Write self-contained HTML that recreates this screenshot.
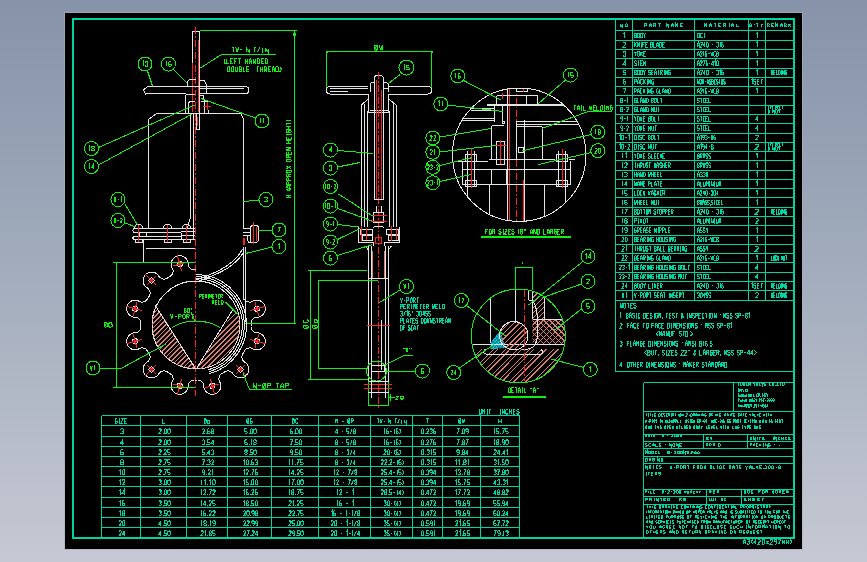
<!DOCTYPE html>
<html><head><meta charset="utf-8"><style>
html,body{margin:0;padding:0;width:867px;height:562px;overflow:hidden;}
body{background:linear-gradient(180deg,#8693a8 0%,#a3adbd 50%,#c6c9d3 100%);font-family:"Liberation Sans",sans-serif;}
svg{position:absolute;left:0;top:0;}
</style></head><body>
<svg width="867" height="562" viewBox="0 0 867 562" shape-rendering="crispEdges">
<rect x="65" y="13" width="737" height="536" fill="#000"/>
<rect x="64.5" y="12.5" width="738" height="537" fill="none" stroke="#a8b0bc" stroke-width="1" opacity="0.6"/>
<rect x="73" y="19" width="721" height="519" fill="none" stroke="#00d4a2" stroke-width="2"/>
<line x1="615.5" y1="19" x2="615.5" y2="299.5" stroke="#00d4a2" stroke-width="1" />
<line x1="632.5" y1="19" x2="632.5" y2="299.5" stroke="#00d4a2" stroke-width="1" />
<line x1="694.5" y1="19" x2="694.5" y2="299.5" stroke="#00d4a2" stroke-width="1" />
<line x1="748.5" y1="19" x2="748.5" y2="299.5" stroke="#00d4a2" stroke-width="1" />
<line x1="765.5" y1="19" x2="765.5" y2="299.5" stroke="#00d4a2" stroke-width="1" />
<line x1="615.5" y1="30.5" x2="794" y2="30.5" stroke="#00d4a2" stroke-width="1" />
<line x1="615.5" y1="40.5" x2="794" y2="40.5" stroke="#00d4a2" stroke-width="1" />
<line x1="615.5" y1="49.5" x2="794" y2="49.5" stroke="#00d4a2" stroke-width="1" />
<line x1="615.5" y1="58.5" x2="794" y2="58.5" stroke="#00d4a2" stroke-width="1" />
<line x1="615.5" y1="68.5" x2="794" y2="68.5" stroke="#00d4a2" stroke-width="1" />
<line x1="615.5" y1="77.5" x2="794" y2="77.5" stroke="#00d4a2" stroke-width="1" />
<line x1="615.5" y1="86.5" x2="794" y2="86.5" stroke="#00d4a2" stroke-width="1" />
<line x1="615.5" y1="95.5" x2="794" y2="95.5" stroke="#00d4a2" stroke-width="1" />
<line x1="615.5" y1="105.5" x2="794" y2="105.5" stroke="#00d4a2" stroke-width="1" />
<line x1="615.5" y1="114.5" x2="794" y2="114.5" stroke="#00d4a2" stroke-width="1" />
<line x1="615.5" y1="123.5" x2="794" y2="123.5" stroke="#00d4a2" stroke-width="1" />
<line x1="615.5" y1="133.5" x2="794" y2="133.5" stroke="#00d4a2" stroke-width="1" />
<line x1="615.5" y1="142.5" x2="794" y2="142.5" stroke="#00d4a2" stroke-width="1" />
<line x1="615.5" y1="151.5" x2="794" y2="151.5" stroke="#00d4a2" stroke-width="1" />
<line x1="615.5" y1="160.5" x2="794" y2="160.5" stroke="#00d4a2" stroke-width="1" />
<line x1="615.5" y1="170.5" x2="794" y2="170.5" stroke="#00d4a2" stroke-width="1" />
<line x1="615.5" y1="179.5" x2="794" y2="179.5" stroke="#00d4a2" stroke-width="1" />
<line x1="615.5" y1="188.5" x2="794" y2="188.5" stroke="#00d4a2" stroke-width="1" />
<line x1="615.5" y1="197.5" x2="794" y2="197.5" stroke="#00d4a2" stroke-width="1" />
<line x1="615.5" y1="207.5" x2="794" y2="207.5" stroke="#00d4a2" stroke-width="1" />
<line x1="615.5" y1="216.5" x2="794" y2="216.5" stroke="#00d4a2" stroke-width="1" />
<line x1="615.5" y1="225.5" x2="794" y2="225.5" stroke="#00d4a2" stroke-width="1" />
<line x1="615.5" y1="235.5" x2="794" y2="235.5" stroke="#00d4a2" stroke-width="1" />
<line x1="615.5" y1="244.5" x2="794" y2="244.5" stroke="#00d4a2" stroke-width="1" />
<line x1="615.5" y1="253.5" x2="794" y2="253.5" stroke="#00d4a2" stroke-width="1" />
<line x1="615.5" y1="262.5" x2="794" y2="262.5" stroke="#00d4a2" stroke-width="1" />
<line x1="615.5" y1="272.5" x2="794" y2="272.5" stroke="#00d4a2" stroke-width="1" />
<line x1="615.5" y1="281.5" x2="794" y2="281.5" stroke="#00d4a2" stroke-width="1" />
<line x1="615.5" y1="290.5" x2="794" y2="290.5" stroke="#00d4a2" stroke-width="1" />
<line x1="615.5" y1="300.5" x2="794" y2="300.5" stroke="#00d4a2" stroke-width="1" />
<path d="M623.6,33.8 L624.5,33.1 L624.5,37.7" stroke="#00d4a2" stroke-width="1" fill="none"/>
<path d="M634.5,33.1 L635.9,33.1 L636.4,33.8 L636.4,34.6 L635.9,35.4 L634.5,35.4 M635.9,35.4 L636.4,36.2 L636.4,37.0 L635.9,37.7 L634.5,37.7 L634.5,33.1 M638.0,33.1 L639.0,33.1 L639.4,33.8 L639.4,37.0 L639.0,37.7 L638.0,37.7 L637.5,37.0 L637.5,33.8 L638.0,33.1 M640.6,33.1 L642.0,33.1 L642.5,33.8 L642.5,37.0 L642.0,37.7 L640.6,37.7 L640.6,33.1 M643.6,33.1 L644.6,35.4 L645.5,33.1 M644.6,35.4 L644.6,37.7" stroke="#00d4a2" stroke-width="1" fill="none"/>
<path d="M697.5,33.1 L699.0,33.1 L699.5,33.8 L699.5,37.0 L699.0,37.7 L697.5,37.7 L697.5,33.1 M702.7,33.8 L702.2,33.1 L701.2,33.1 L700.7,33.8 L700.7,37.0 L701.2,37.7 L702.2,37.7 L702.7,37.0 M704.1,33.1 L705.1,33.1 M704.6,33.1 L704.6,37.7 M704.1,37.7 L705.1,37.7" stroke="#00d4a2" stroke-width="1" fill="none"/>
<path d="M756.0,33.8 L757.0,33.1 L757.0,37.7" stroke="#00d4a2" stroke-width="1" fill="none"/>
<path d="M623.2,43.1 L623.9,42.3 L625.2,42.3 L625.8,43.1 L625.8,43.9 L623.2,47.0 L625.8,47.0" stroke="#00d4a2" stroke-width="1" fill="none"/>
<path d="M634.5,42.3 L634.5,47.0 M636.4,42.3 L634.5,45.5 M635.2,44.7 L636.4,47.0 M637.5,47.0 L637.5,42.3 L639.4,47.0 L639.4,42.3 M640.7,42.3 L641.6,42.3 M641.1,42.3 L641.1,47.0 M640.7,47.0 L641.6,47.0 M644.5,42.3 L642.6,42.3 L642.6,47.0 M642.6,44.7 L644.0,44.7 M647.5,42.3 L645.6,42.3 L645.6,47.0 L647.5,47.0 M645.6,44.7 L647.0,44.7 M650.8,42.3 L652.2,42.3 L652.7,43.1 L652.7,43.9 L652.2,44.7 L650.8,44.7 M652.2,44.7 L652.7,45.5 L652.7,46.2 L652.2,47.0 L650.8,47.0 L650.8,42.3 M653.8,42.3 L653.8,47.0 L655.7,47.0 M656.8,47.0 L656.8,43.9 L657.8,42.3 L658.7,43.9 L658.7,47.0 M656.8,45.1 L658.7,45.1 M659.8,42.3 L661.2,42.3 L661.7,43.1 L661.7,46.2 L661.2,47.0 L659.8,47.0 L659.8,42.3 M664.7,42.3 L662.8,42.3 L662.8,47.0 L664.7,47.0 M662.8,44.7 L664.2,44.7" stroke="#00d4a2" stroke-width="1" fill="none"/>
<path d="M697.5,47.0 L697.5,43.9 L698.4,42.3 L699.3,43.9 L699.3,47.0 M697.5,45.1 L699.3,45.1 M700.4,43.1 L700.9,42.3 L701.8,42.3 L702.3,43.1 L702.3,43.9 L700.4,47.0 L702.3,47.0 M704.8,47.0 L704.8,42.3 L703.4,45.5 L705.2,45.5 M706.8,42.3 L707.7,42.3 L708.2,43.1 L708.2,46.2 L707.7,47.0 L706.8,47.0 L706.3,46.2 L706.3,43.1 L706.8,42.3 M711.7,44.7 L713.1,44.7 M716.7,43.1 L717.1,42.3 L718.0,42.3 L718.5,43.1 L718.5,43.9 L718.0,44.7 L717.6,44.7 M718.0,44.7 L718.5,45.5 L718.5,46.2 L718.0,47.0 L717.1,47.0 L716.7,46.2 M719.8,43.1 L720.2,42.3 L720.2,47.0 M723.0,42.3 L722.1,42.3 L721.7,43.1 L721.7,46.2 L722.1,47.0 L723.0,47.0 L723.5,46.2 L723.5,45.5 L723.0,44.7 L721.7,44.7" stroke="#00d4a2" stroke-width="1" fill="none"/>
<path d="M756.0,43.1 L757.0,42.3 L757.0,47.0" stroke="#00d4a2" stroke-width="1" fill="none"/>
<path d="M623.2,52.4 L623.9,51.6 L625.2,51.6 L625.8,52.4 L625.8,53.2 L625.2,53.9 L624.5,53.9 M625.2,53.9 L625.8,54.7 L625.8,55.5 L625.2,56.3 L623.9,56.3 L623.2,55.5" stroke="#00d4a2" stroke-width="1" fill="none"/>
<path d="M634.5,51.6 L635.4,53.9 L636.4,51.6 M635.4,53.9 L635.4,56.3 M638.0,51.6 L639.0,51.6 L639.4,52.4 L639.4,55.5 L639.0,56.3 L638.0,56.3 L637.5,55.5 L637.5,52.4 L638.0,51.6 M640.6,51.6 L640.6,56.3 M642.5,51.6 L640.6,54.7 M641.3,53.9 L642.5,56.3 M645.5,51.6 L643.6,51.6 L643.6,56.3 L645.5,56.3 M643.6,53.9 L645.0,53.9" stroke="#00d4a2" stroke-width="1" fill="none"/>
<path d="M697.5,56.3 L697.5,53.2 L698.4,51.6 L699.3,53.2 L699.3,56.3 M697.5,54.3 L699.3,54.3 M700.3,52.4 L700.8,51.6 L701.7,51.6 L702.1,52.4 L702.1,53.2 L700.3,56.3 L702.1,56.3 M703.4,52.4 L703.8,51.6 L703.8,56.3 M706.5,51.6 L705.6,51.6 L705.2,52.4 L705.2,55.5 L705.6,56.3 L706.5,56.3 L706.9,55.5 L706.9,54.7 L706.5,53.9 L705.2,53.9 M708.2,53.9 L709.6,53.9 M710.9,51.6 L711.3,56.3 L711.7,53.2 L712.2,56.3 L712.6,51.6 M715.5,52.4 L715.0,51.6 L714.1,51.6 L713.7,52.4 L713.7,55.5 L714.1,56.3 L715.0,56.3 L715.5,55.5 M716.5,51.6 L717.9,51.6 L718.3,52.4 L718.3,53.2 L717.9,53.9 L716.5,53.9 M717.9,53.9 L718.3,54.7 L718.3,55.5 L717.9,56.3 L716.5,56.3 L716.5,51.6" stroke="#00d4a2" stroke-width="1" fill="none"/>
<path d="M756.0,52.4 L757.0,51.6 L757.0,56.3" stroke="#00d4a2" stroke-width="1" fill="none"/>
<path d="M625.2,65.6 L625.2,60.9 L623.2,64.0 L625.8,64.0" stroke="#00d4a2" stroke-width="1" fill="none"/>
<path d="M636.4,61.7 L635.9,60.9 L635.0,60.9 L634.5,61.7 L634.5,62.4 L635.0,63.2 L635.9,63.2 L636.4,64.0 L636.4,64.8 L635.9,65.6 L635.0,65.6 L634.5,64.8 M637.5,60.9 L639.4,60.9 M638.5,60.9 L638.5,65.6 M642.5,60.9 L640.6,60.9 L640.6,65.6 L642.5,65.6 M640.6,63.2 L642.0,63.2 M643.6,65.6 L643.6,60.9 L644.6,63.2 L645.5,60.9 L645.5,65.6" stroke="#00d4a2" stroke-width="1" fill="none"/>
<path d="M697.5,65.6 L697.5,62.4 L698.4,60.9 L699.3,62.4 L699.3,65.6 M697.5,63.6 L699.3,63.6 M700.3,61.7 L700.8,60.9 L701.7,60.9 L702.1,61.7 L702.1,62.4 L700.3,65.6 L702.1,65.6 M703.2,60.9 L704.9,60.9 L703.6,65.6 M707.3,60.9 L706.5,60.9 L706.0,61.7 L706.0,64.8 L706.5,65.6 L707.3,65.6 L707.8,64.8 L707.8,64.0 L707.3,63.2 L706.0,63.2 M709.1,63.2 L710.4,63.2 M713.0,65.6 L713.0,60.9 L711.7,64.0 L713.5,64.0 M714.7,61.7 L715.2,60.9 L715.2,65.6 M717.0,60.9 L717.9,60.9 L718.3,61.7 L718.3,64.8 L717.9,65.6 L717.0,65.6 L716.5,64.8 L716.5,61.7 L717.0,60.9" stroke="#00d4a2" stroke-width="1" fill="none"/>
<path d="M756.0,61.7 L757.0,60.9 L757.0,65.6" stroke="#00d4a2" stroke-width="1" fill="none"/>
<path d="M625.8,70.2 L623.2,70.2 L623.2,72.5 L625.2,72.5 L625.8,73.3 L625.8,74.1 L625.2,74.8 L623.9,74.8 L623.2,74.1" stroke="#00d4a2" stroke-width="1" fill="none"/>
<path d="M634.5,70.2 L635.9,70.2 L636.3,70.9 L636.3,71.7 L635.9,72.5 L634.5,72.5 M635.9,72.5 L636.3,73.3 L636.3,74.1 L635.9,74.8 L634.5,74.8 L634.5,70.2 M637.9,70.2 L638.8,70.2 L639.3,70.9 L639.3,74.1 L638.8,74.8 L637.9,74.8 L637.5,74.1 L637.5,70.9 L637.9,70.2 M640.4,70.2 L641.8,70.2 L642.3,70.9 L642.3,74.1 L641.8,74.8 L640.4,74.8 L640.4,70.2 M643.4,70.2 L644.3,72.5 L645.2,70.2 M644.3,72.5 L644.3,74.8 M650.4,70.9 L650.0,70.2 L649.0,70.2 L648.6,70.9 L648.6,71.7 L649.0,72.5 L650.0,72.5 L650.4,73.3 L650.4,74.1 L650.0,74.8 L649.0,74.8 L648.6,74.1 M653.4,70.2 L651.6,70.2 L651.6,74.8 L653.4,74.8 M651.6,72.5 L652.9,72.5 M654.5,74.8 L654.5,71.7 L655.4,70.2 L656.4,71.7 L656.4,74.8 M654.5,72.9 L656.4,72.9 M657.5,70.2 L659.3,70.2 M658.4,70.2 L658.4,74.8 M660.5,74.8 L660.5,70.2 L661.8,70.2 L662.3,70.9 L662.3,71.7 L661.8,72.5 L660.5,72.5 M661.4,72.5 L662.3,74.8 M663.6,70.2 L664.5,70.2 M664.1,70.2 L664.1,74.8 M663.6,74.8 L664.5,74.8 M665.5,74.8 L665.5,70.2 L667.3,74.8 L667.3,70.2 M670.3,70.9 L669.8,70.2 L668.9,70.2 L668.5,70.9 L668.5,74.1 L668.9,74.8 L669.8,74.8 L670.3,74.1 L670.3,72.5 L669.4,72.5" stroke="#00d4a2" stroke-width="1" fill="none"/>
<path d="M697.5,74.8 L697.5,71.7 L698.4,70.2 L699.3,71.7 L699.3,74.8 M697.5,72.9 L699.3,72.9 M700.4,70.9 L700.9,70.2 L701.8,70.2 L702.3,70.9 L702.3,71.7 L700.4,74.8 L702.3,74.8 M704.8,74.8 L704.8,70.2 L703.4,73.3 L705.2,73.3 M706.8,70.2 L707.7,70.2 L708.2,70.9 L708.2,74.1 L707.7,74.8 L706.8,74.8 L706.3,74.1 L706.3,70.9 L706.8,70.2 M711.7,72.5 L713.1,72.5 M716.7,70.9 L717.1,70.2 L718.0,70.2 L718.5,70.9 L718.5,71.7 L718.0,72.5 L717.6,72.5 M718.0,72.5 L718.5,73.3 L718.5,74.1 L718.0,74.8 L717.1,74.8 L716.7,74.1 M719.8,70.9 L720.2,70.2 L720.2,74.8 M723.0,70.2 L722.1,70.2 L721.7,70.9 L721.7,74.1 L722.1,74.8 L723.0,74.8 L723.5,74.1 L723.5,73.3 L723.0,72.5 L721.7,72.5" stroke="#00d4a2" stroke-width="1" fill="none"/>
<path d="M756.0,70.9 L757.0,70.2 L757.0,74.8" stroke="#00d4a2" stroke-width="1" fill="none"/>
<path d="M771.3,70.2 L771.7,74.8 L772.1,71.7 L772.4,74.8 L772.8,70.2 M775.2,70.2 L773.7,70.2 L773.7,74.8 L775.2,74.8 M773.7,72.5 L774.9,72.5 M776.2,70.2 L776.2,74.8 L777.7,74.8 M778.6,70.2 L779.7,70.2 L780.1,70.9 L780.1,74.1 L779.7,74.8 L778.6,74.8 L778.6,70.2 M781.2,70.2 L782.0,70.2 M781.6,70.2 L781.6,74.8 M781.2,74.8 L782.0,74.8 M782.8,74.8 L782.8,70.2 L784.3,74.8 L784.3,70.2 M786.7,70.9 L786.3,70.2 L785.6,70.2 L785.2,70.9 L785.2,74.1 L785.6,74.8 L786.3,74.8 L786.7,74.1 L786.7,72.5 L785.9,72.5" stroke="#00d4a2" stroke-width="1" fill="none"/>
<path d="M625.2,79.4 L623.9,79.4 L623.2,80.2 L623.2,83.3 L623.9,84.1 L625.2,84.1 L625.8,83.3 L625.8,82.6 L625.2,81.8 L623.2,81.8" stroke="#00d4a2" stroke-width="1" fill="none"/>
<path d="M634.5,84.1 L634.5,79.4 L635.9,79.4 L636.4,80.2 L636.4,81.0 L635.9,81.8 L634.5,81.8 M637.5,84.1 L637.5,81.0 L638.5,79.4 L639.4,81.0 L639.4,84.1 M637.5,82.2 L639.4,82.2 M642.5,80.2 L642.0,79.4 L641.0,79.4 L640.6,80.2 L640.6,83.3 L641.0,84.1 L642.0,84.1 L642.5,83.3 M643.6,79.4 L643.6,84.1 M645.5,79.4 L643.6,82.6 M644.3,81.8 L645.5,84.1 M646.8,79.4 L647.8,79.4 M647.3,79.4 L647.3,84.1 M646.8,84.1 L647.8,84.1 M648.8,84.1 L648.8,79.4 L650.7,84.1 L650.7,79.4 M653.7,80.2 L653.2,79.4 L652.3,79.4 L651.8,80.2 L651.8,83.3 L652.3,84.1 L653.2,84.1 L653.7,83.3 L653.7,81.8 L652.8,81.8" stroke="#00d4a2" stroke-width="1" fill="none"/>
<path d="M697.5,84.1 L697.5,79.4 L699.0,84.1 L699.0,79.4 M700.2,79.4 L701.0,79.4 L701.3,80.2 L701.3,83.3 L701.0,84.1 L700.2,84.1 L699.9,83.3 L699.9,80.2 L700.2,79.4 M702.3,84.1 L702.3,79.4 L703.7,84.1 L703.7,79.4 M704.8,81.8 L705.9,81.8 M707.0,84.1 L707.0,81.0 L707.7,79.4 L708.5,81.0 L708.5,84.1 M707.0,82.2 L708.5,82.2 M710.8,80.2 L710.5,79.4 L709.7,79.4 L709.4,80.2 L709.4,81.0 L709.7,81.8 L710.5,81.8 L710.8,82.6 L710.8,83.3 L710.5,84.1 L709.7,84.1 L709.4,83.3 M711.8,79.4 L712.9,79.4 L713.2,80.2 L713.2,81.0 L712.9,81.8 L711.8,81.8 M712.9,81.8 L713.2,82.6 L713.2,83.3 L712.9,84.1 L711.8,84.1 L711.8,79.4 M715.6,79.4 L714.1,79.4 L714.1,84.1 L715.6,84.1 M714.1,81.8 L715.2,81.8 M718.0,80.2 L717.6,79.4 L716.9,79.4 L716.5,80.2 L716.5,81.0 L716.9,81.8 L717.6,81.8 L718.0,82.6 L718.0,83.3 L717.6,84.1 L716.9,84.1 L716.5,83.3 M718.9,79.4 L720.3,79.4 M719.6,79.4 L719.6,84.1 M721.6,79.4 L722.4,79.4 L722.7,80.2 L722.7,83.3 L722.4,84.1 L721.6,84.1 L721.3,83.3 L721.3,80.2 L721.6,79.4 M725.1,80.2 L724.7,79.4 L724.0,79.4 L723.6,80.2 L723.6,81.0 L724.0,81.8 L724.7,81.8 L725.1,82.6 L725.1,83.3 L724.7,84.1 L724.0,84.1 L723.6,83.3" stroke="#00d4a2" stroke-width="1" fill="none"/>
<path d="M751.4,80.2 L752.0,79.4 L752.0,84.1 M755.8,80.2 L755.3,79.4 L754.2,79.4 L753.6,80.2 L753.6,81.0 L754.2,81.8 L755.3,81.8 L755.8,82.6 L755.8,83.3 L755.3,84.1 L754.2,84.1 L753.6,83.3 M759.3,79.4 L757.1,79.4 L757.1,84.1 L759.3,84.1 M757.1,81.8 L758.8,81.8 M760.6,79.4 L762.8,79.4 M761.7,79.4 L761.7,84.1" stroke="#00d4a2" stroke-width="1" fill="none"/>
<path d="M623.2,88.7 L625.8,88.7 L623.9,93.4" stroke="#00d4a2" stroke-width="1" fill="none"/>
<path d="M634.5,93.4 L634.5,88.7 L635.9,88.7 L636.3,89.5 L636.3,90.3 L635.9,91.1 L634.5,91.1 M637.5,93.4 L637.5,90.3 L638.4,88.7 L639.3,90.3 L639.3,93.4 M637.5,91.4 L639.3,91.4 M642.3,89.5 L641.8,88.7 L640.9,88.7 L640.4,89.5 L640.4,92.6 L640.9,93.4 L641.8,93.4 L642.3,92.6 M643.4,88.7 L643.4,93.4 M645.2,88.7 L643.4,91.8 M644.1,91.1 L645.2,93.4 M646.5,88.7 L647.5,88.7 M647.0,88.7 L647.0,93.4 M646.5,93.4 L647.5,93.4 M648.4,93.4 L648.4,88.7 L650.3,93.4 L650.3,88.7 M653.2,89.5 L652.8,88.7 L651.9,88.7 L651.4,89.5 L651.4,92.6 L651.9,93.4 L652.8,93.4 L653.2,92.6 L653.2,91.1 L652.3,91.1 M658.4,89.5 L658.0,88.7 L657.1,88.7 L656.6,89.5 L656.6,92.6 L657.1,93.4 L658.0,93.4 L658.4,92.6 L658.4,91.1 L657.5,91.1 M659.6,88.7 L659.6,93.4 L661.4,93.4 M662.5,93.4 L662.5,90.3 L663.4,88.7 L664.4,90.3 L664.4,93.4 M662.5,91.4 L664.4,91.4 M665.5,93.4 L665.5,88.7 L667.3,93.4 L667.3,88.7 M668.5,88.7 L669.8,88.7 L670.3,89.5 L670.3,92.6 L669.8,93.4 L668.5,93.4 L668.5,88.7" stroke="#00d4a2" stroke-width="1" fill="none"/>
<path d="M697.5,93.4 L697.5,90.3 L698.4,88.7 L699.3,90.3 L699.3,93.4 M697.5,91.4 L699.3,91.4 M700.3,89.5 L700.8,88.7 L701.7,88.7 L702.1,89.5 L702.1,90.3 L700.3,93.4 L702.1,93.4 M703.4,89.5 L703.8,88.7 L703.8,93.4 M706.5,88.7 L705.6,88.7 L705.2,89.5 L705.2,92.6 L705.6,93.4 L706.5,93.4 L706.9,92.6 L706.9,91.8 L706.5,91.1 L705.2,91.1 M708.2,91.1 L709.6,91.1 M710.9,88.7 L711.3,93.4 L711.7,90.3 L712.2,93.4 L712.6,88.7 M715.5,89.5 L715.0,88.7 L714.1,88.7 L713.7,89.5 L713.7,92.6 L714.1,93.4 L715.0,93.4 L715.5,92.6 M716.5,88.7 L717.9,88.7 L718.3,89.5 L718.3,90.3 L717.9,91.1 L716.5,91.1 M717.9,91.1 L718.3,91.8 L718.3,92.6 L717.9,93.4 L716.5,93.4 L716.5,88.7" stroke="#00d4a2" stroke-width="1" fill="none"/>
<path d="M756.0,89.5 L757.0,88.7 L757.0,93.4" stroke="#00d4a2" stroke-width="1" fill="none"/>
<path d="M621.1,98.0 L622.1,98.0 L622.6,98.8 L622.6,99.5 L622.1,100.3 L621.1,100.3 L620.6,101.1 L620.6,101.9 L621.1,102.7 L622.1,102.7 L622.6,101.9 L622.6,101.1 L622.1,100.3 M621.1,100.3 L620.6,99.5 L620.6,98.8 L621.1,98.0 M624.1,100.3 L625.5,100.3 M627.2,98.8 L627.7,98.0 L627.7,102.7" stroke="#00d4a2" stroke-width="1" fill="none"/>
<path d="M636.3,98.8 L635.9,98.0 L635.0,98.0 L634.5,98.8 L634.5,101.9 L635.0,102.7 L635.9,102.7 L636.3,101.9 L636.3,100.3 L635.4,100.3 M637.4,98.0 L637.4,102.7 L639.3,102.7 M640.4,102.7 L640.4,99.5 L641.3,98.0 L642.2,99.5 L642.2,102.7 M640.4,100.7 L642.2,100.7 M643.3,102.7 L643.3,98.0 L645.1,102.7 L645.1,98.0 M646.2,98.0 L647.6,98.0 L648.1,98.8 L648.1,101.9 L647.6,102.7 L646.2,102.7 L646.2,98.0 M651.4,98.0 L652.7,98.0 L653.2,98.8 L653.2,99.5 L652.7,100.3 L651.4,100.3 M652.7,100.3 L653.2,101.1 L653.2,101.9 L652.7,102.7 L651.4,102.7 L651.4,98.0 M654.8,98.0 L655.7,98.0 L656.1,98.8 L656.1,101.9 L655.7,102.7 L654.8,102.7 L654.3,101.9 L654.3,98.8 L654.8,98.0 M657.2,98.0 L657.2,102.7 L659.1,102.7 M660.2,98.0 L662.0,98.0 M661.1,98.0 L661.1,102.7" stroke="#00d4a2" stroke-width="1" fill="none"/>
<path d="M699.2,98.8 L698.8,98.0 L697.9,98.0 L697.5,98.8 L697.5,99.5 L697.9,100.3 L698.8,100.3 L699.2,101.1 L699.2,101.9 L698.8,102.7 L697.9,102.7 L697.5,101.9 M700.3,98.0 L702.1,98.0 M701.2,98.0 L701.2,102.7 M704.9,98.0 L703.1,98.0 L703.1,102.7 L704.9,102.7 M703.1,100.3 L704.4,100.3 M707.7,98.0 L705.9,98.0 L705.9,102.7 L707.7,102.7 M705.9,100.3 L707.2,100.3 M708.8,98.0 L708.8,102.7 L710.5,102.7" stroke="#00d4a2" stroke-width="1" fill="none"/>
<path d="M621.1,107.3 L622.0,107.3 L622.4,108.0 L622.4,108.8 L622.0,109.6 L621.1,109.6 L620.6,110.4 L620.6,111.2 L621.1,111.9 L622.0,111.9 L622.4,111.2 L622.4,110.4 L622.0,109.6 M621.1,109.6 L620.6,108.8 L620.6,108.0 L621.1,107.3 M623.8,109.6 L625.2,109.6 M626.6,108.0 L627.0,107.3 L627.9,107.3 L628.4,108.0 L628.4,108.8 L626.6,111.9 L628.4,111.9" stroke="#00d4a2" stroke-width="1" fill="none"/>
<path d="M636.3,108.0 L635.9,107.3 L635.0,107.3 L634.5,108.0 L634.5,111.2 L635.0,111.9 L635.9,111.9 L636.3,111.2 L636.3,109.6 L635.4,109.6 M637.5,107.3 L637.5,111.9 L639.3,111.9 M640.4,111.9 L640.4,108.8 L641.3,107.3 L642.3,108.8 L642.3,111.9 M640.4,110.0 L642.3,110.0 M643.4,111.9 L643.4,107.3 L645.2,111.9 L645.2,107.3 M646.4,107.3 L647.7,107.3 L648.2,108.0 L648.2,111.2 L647.7,111.9 L646.4,111.9 L646.4,107.3 M651.5,111.9 L651.5,107.3 L653.4,111.9 L653.4,107.3 M654.5,107.3 L654.5,111.2 L655.0,111.9 L655.9,111.9 L656.3,111.2 L656.3,107.3 M657.5,107.3 L659.3,107.3 M658.4,107.3 L658.4,111.9" stroke="#00d4a2" stroke-width="1" fill="none"/>
<path d="M699.2,108.0 L698.8,107.3 L697.9,107.3 L697.5,108.0 L697.5,108.8 L697.9,109.6 L698.8,109.6 L699.2,110.4 L699.2,111.2 L698.8,111.9 L697.9,111.9 L697.5,111.2 M700.3,107.3 L702.1,107.3 M701.2,107.3 L701.2,111.9 M704.9,107.3 L703.1,107.3 L703.1,111.9 L704.9,111.9 M703.1,109.6 L704.4,109.6 M707.7,107.3 L705.9,107.3 L705.9,111.9 L707.7,111.9 M705.9,109.6 L707.2,109.6 M708.8,107.3 L708.8,111.9 L710.5,111.9" stroke="#00d4a2" stroke-width="1" fill="none"/>
<path d="M769.3,106.2 L768.0,106.2 L768.0,109.2 L769.3,109.2 M768.0,107.7 L769.0,107.7 M770.1,106.2 L770.7,107.7 L771.3,106.2 M770.7,107.7 L770.7,109.2 M773.4,106.2 L772.1,106.2 L772.1,109.2 L773.4,109.2 M772.1,107.7 L773.1,107.7 M775.7,106.2 L776.7,106.2 L777.0,106.7 L777.0,107.2 L776.7,107.7 L775.7,107.7 M776.7,107.7 L777.0,108.2 L777.0,108.7 L776.7,109.2 L775.7,109.2 L775.7,106.2 M778.1,106.2 L778.8,106.2 L779.1,106.7 L779.1,108.7 L778.8,109.2 L778.1,109.2 L777.8,108.7 L777.8,106.7 L778.1,106.2 M779.9,106.2 L779.9,109.2 L781.1,109.2 M781.9,106.2 L783.2,106.2 M782.6,106.2 L782.6,109.2" stroke="#00d4a2" stroke-width="1" fill="none"/>
<path d="M769.7,113.2 L768.4,111.2 L768.4,110.7 L768.9,110.2 L769.3,110.7 L769.3,111.2 L768.0,112.2 L768.0,112.7 L768.4,113.2 L768.9,113.2 L769.7,112.2 M772.8,113.2 L772.8,110.2 L774.5,113.2 L774.5,110.2 M775.6,110.2 L775.6,112.7 L776.0,113.2 L776.8,113.2 L777.3,112.7 L777.3,110.2 M778.3,110.2 L780.0,110.2 M779.1,110.2 L779.1,113.2" stroke="#00d4a2" stroke-width="1" fill="none"/>
<path d="M622.6,118.9 L621.1,118.9 L620.6,118.1 L620.6,117.3 L621.1,116.5 L622.1,116.5 L622.6,117.3 L622.6,120.4 L622.1,121.2 L621.1,121.2 M624.1,118.9 L625.5,118.9 M627.2,117.3 L627.7,116.5 L627.7,121.2" stroke="#00d4a2" stroke-width="1" fill="none"/>
<path d="M634.5,116.5 L635.4,118.9 L636.3,116.5 M635.4,118.9 L635.4,121.2 M637.9,116.5 L638.8,116.5 L639.3,117.3 L639.3,120.4 L638.8,121.2 L637.9,121.2 L637.5,120.4 L637.5,117.3 L637.9,116.5 M640.4,116.5 L640.4,121.2 M642.3,116.5 L640.4,119.7 M641.1,118.9 L642.3,121.2 M645.2,116.5 L643.4,116.5 L643.4,121.2 L645.2,121.2 M643.4,118.9 L644.8,118.9 M648.6,116.5 L650.0,116.5 L650.4,117.3 L650.4,118.1 L650.0,118.9 L648.6,118.9 M650.0,118.9 L650.4,119.7 L650.4,120.4 L650.0,121.2 L648.6,121.2 L648.6,116.5 M652.0,116.5 L652.9,116.5 L653.4,117.3 L653.4,120.4 L652.9,121.2 L652.0,121.2 L651.5,120.4 L651.5,117.3 L652.0,116.5 M654.5,116.5 L654.5,121.2 L656.3,121.2 M657.5,116.5 L659.3,116.5 M658.4,116.5 L658.4,121.2" stroke="#00d4a2" stroke-width="1" fill="none"/>
<path d="M699.2,117.3 L698.8,116.5 L697.9,116.5 L697.5,117.3 L697.5,118.1 L697.9,118.9 L698.8,118.9 L699.2,119.7 L699.2,120.4 L698.8,121.2 L697.9,121.2 L697.5,120.4 M700.3,116.5 L702.1,116.5 M701.2,116.5 L701.2,121.2 M704.9,116.5 L703.1,116.5 L703.1,121.2 L704.9,121.2 M703.1,118.9 L704.4,118.9 M707.7,116.5 L705.9,116.5 L705.9,121.2 L707.7,121.2 M705.9,118.9 L707.2,118.9 M708.8,116.5 L708.8,121.2 L710.5,121.2" stroke="#00d4a2" stroke-width="1" fill="none"/>
<path d="M757.7,121.2 L757.7,116.5 L755.5,119.7 L758.4,119.7" stroke="#00d4a2" stroke-width="1" fill="none"/>
<path d="M622.4,128.2 L621.1,128.2 L620.6,127.4 L620.6,126.6 L621.1,125.8 L622.0,125.8 L622.4,126.6 L622.4,129.7 L622.0,130.5 L621.1,130.5 M623.8,128.2 L625.2,128.2 M626.6,126.6 L627.0,125.8 L627.9,125.8 L628.4,126.6 L628.4,127.4 L626.6,130.5 L628.4,130.5" stroke="#00d4a2" stroke-width="1" fill="none"/>
<path d="M634.5,125.8 L635.4,128.2 L636.4,125.8 M635.4,128.2 L635.4,130.5 M637.9,125.8 L638.9,125.8 L639.3,126.6 L639.3,129.7 L638.9,130.5 L637.9,130.5 L637.5,129.7 L637.5,126.6 L637.9,125.8 M640.5,125.8 L640.5,130.5 M642.3,125.8 L640.5,128.9 M641.2,128.2 L642.3,130.5 M645.3,125.8 L643.5,125.8 L643.5,130.5 L645.3,130.5 M643.5,128.2 L644.8,128.2 M648.7,130.5 L648.7,125.8 L650.5,130.5 L650.5,125.8 M651.7,125.8 L651.7,129.7 L652.1,130.5 L653.1,130.5 L653.5,129.7 L653.5,125.8 M654.6,125.8 L656.5,125.8 M655.6,125.8 L655.6,130.5" stroke="#00d4a2" stroke-width="1" fill="none"/>
<path d="M699.2,126.6 L698.8,125.8 L697.9,125.8 L697.5,126.6 L697.5,127.4 L697.9,128.2 L698.8,128.2 L699.2,128.9 L699.2,129.7 L698.8,130.5 L697.9,130.5 L697.5,129.7 M700.3,125.8 L702.1,125.8 M701.2,125.8 L701.2,130.5 M704.9,125.8 L703.1,125.8 L703.1,130.5 L704.9,130.5 M703.1,128.2 L704.4,128.2 M707.7,125.8 L705.9,125.8 L705.9,130.5 L707.7,130.5 M705.9,128.2 L707.2,128.2 M708.8,125.8 L708.8,130.5 L710.5,130.5" stroke="#00d4a2" stroke-width="1" fill="none"/>
<path d="M757.7,130.5 L757.7,125.8 L755.5,128.9 L758.4,128.9" stroke="#00d4a2" stroke-width="1" fill="none"/>
<path d="M619.5,135.9 L620.0,135.1 L620.0,139.8 M622.1,135.1 L623.2,135.1 L623.7,135.9 L623.7,139.0 L623.2,139.8 L622.1,139.8 L621.6,139.0 L621.6,135.9 L622.1,135.1 M625.2,137.4 L626.7,137.4 M628.5,135.9 L629.0,135.1 L629.0,139.8" stroke="#00d4a2" stroke-width="1" fill="none"/>
<path d="M634.5,135.1 L635.9,135.1 L636.4,135.9 L636.4,139.0 L635.9,139.8 L634.5,139.8 L634.5,135.1 M637.8,135.1 L638.7,135.1 M638.2,135.1 L638.2,139.8 M637.8,139.8 L638.7,139.8 M641.6,135.9 L641.2,135.1 L640.2,135.1 L639.7,135.9 L639.7,136.7 L640.2,137.4 L641.2,137.4 L641.6,138.2 L641.6,139.0 L641.2,139.8 L640.2,139.8 L639.7,139.0 M644.7,135.9 L644.2,135.1 L643.3,135.1 L642.8,135.9 L642.8,139.0 L643.3,139.8 L644.2,139.8 L644.7,139.0 M648.2,135.1 L649.6,135.1 L650.1,135.9 L650.1,136.7 L649.6,137.4 L648.2,137.4 M649.6,137.4 L650.1,138.2 L650.1,139.0 L649.6,139.8 L648.2,139.8 L648.2,135.1 M651.7,135.1 L652.7,135.1 L653.2,135.9 L653.2,139.0 L652.7,139.8 L651.7,139.8 L651.2,139.0 L651.2,135.9 L651.7,135.1 M654.3,135.1 L654.3,139.8 L656.2,139.8 M657.4,135.1 L659.3,135.1 M658.3,135.1 L658.3,139.8" stroke="#00d4a2" stroke-width="1" fill="none"/>
<path d="M697.5,139.8 L697.5,136.7 L698.4,135.1 L699.3,136.7 L699.3,139.8 M697.5,137.8 L699.3,137.8 M700.6,135.9 L701.0,135.1 L701.0,139.8 M704.2,137.4 L702.8,137.4 L702.4,136.7 L702.4,135.9 L702.8,135.1 L703.7,135.1 L704.2,135.9 L704.2,139.0 L703.7,139.8 L702.8,139.8 M705.3,135.9 L705.7,135.1 L706.6,135.1 L707.1,135.9 L707.1,136.7 L706.6,137.4 L706.2,137.4 M706.6,137.4 L707.1,138.2 L707.1,139.0 L706.6,139.8 L705.7,139.8 L705.3,139.0 M708.4,137.4 L709.7,137.4 M711.0,135.1 L712.4,135.1 L712.8,135.9 L712.8,136.7 L712.4,137.4 L711.0,137.4 M712.4,137.4 L712.8,138.2 L712.8,139.0 L712.4,139.8 L711.0,139.8 L711.0,135.1 M715.3,135.1 L714.4,135.1 L713.9,135.9 L713.9,139.0 L714.4,139.8 L715.3,139.8 L715.7,139.0 L715.7,138.2 L715.3,137.4 L713.9,137.4" stroke="#00d4a2" stroke-width="1" fill="none"/>
<path d="M755.5,135.9 L756.3,135.1 L757.7,135.1 L758.4,135.9 L758.4,136.7 L755.5,139.8 L758.4,139.8" stroke="#00d4a2" stroke-width="1" fill="none"/>
<path d="M619.5,145.1 L620.0,144.4 L620.0,149.0 M622.0,144.4 L622.9,144.4 L623.4,145.1 L623.4,148.3 L622.9,149.0 L622.0,149.0 L621.5,148.3 L621.5,145.1 L622.0,144.4 M624.9,146.7 L626.3,146.7 M627.8,145.1 L628.2,144.4 L629.2,144.4 L629.7,145.1 L629.7,145.9 L627.8,149.0 L629.7,149.0" stroke="#00d4a2" stroke-width="1" fill="none"/>
<path d="M634.5,144.4 L635.9,144.4 L636.4,145.1 L636.4,148.3 L635.9,149.0 L634.5,149.0 L634.5,144.4 M637.8,144.4 L638.8,144.4 M638.3,144.4 L638.3,149.0 M637.8,149.0 L638.8,149.0 M641.7,145.1 L641.2,144.4 L640.3,144.4 L639.8,145.1 L639.8,145.9 L640.3,146.7 L641.2,146.7 L641.7,147.5 L641.7,148.3 L641.2,149.0 L640.3,149.0 L639.8,148.3 M644.8,145.1 L644.3,144.4 L643.4,144.4 L642.9,145.1 L642.9,148.3 L643.4,149.0 L644.3,149.0 L644.8,148.3 M648.3,149.0 L648.3,144.4 L650.3,149.0 L650.3,144.4 M651.5,144.4 L651.5,148.3 L651.9,149.0 L652.9,149.0 L653.4,148.3 L653.4,144.4 M654.6,144.4 L656.5,144.4 M655.5,144.4 L655.5,149.0" stroke="#00d4a2" stroke-width="1" fill="none"/>
<path d="M697.5,149.0 L697.5,145.9 L698.4,144.4 L699.3,145.9 L699.3,149.0 M697.5,147.1 L699.3,147.1 M700.6,145.1 L701.1,144.4 L701.1,149.0 M704.3,146.7 L702.9,146.7 L702.5,145.9 L702.5,145.1 L702.9,144.4 L703.8,144.4 L704.3,145.1 L704.3,148.3 L703.8,149.0 L702.9,149.0 M706.8,149.0 L706.8,144.4 L705.4,147.5 L707.2,147.5 M708.6,146.7 L709.9,146.7 M711.3,144.4 L712.6,144.4 L713.1,145.1 L713.1,145.9 L712.6,146.7 L711.3,146.7 M712.6,146.7 L713.1,147.5 L713.1,148.3 L712.6,149.0 L711.3,149.0 L711.3,144.4" stroke="#00d4a2" stroke-width="1" fill="none"/>
<path d="M755.5,145.1 L756.3,144.4 L757.7,144.4 L758.4,145.1 L758.4,145.9 L755.5,149.0 L758.4,149.0" stroke="#00d4a2" stroke-width="1" fill="none"/>
<path d="M769.3,143.3 L768.0,143.3 L768.0,146.3 L769.3,146.3 M768.0,144.8 L769.0,144.8 M770.1,143.3 L770.7,144.8 L771.3,143.3 M770.7,144.8 L770.7,146.3 M773.4,143.3 L772.1,143.3 L772.1,146.3 L773.4,146.3 M772.1,144.8 L773.1,144.8 M775.7,143.3 L776.7,143.3 L777.0,143.8 L777.0,144.3 L776.7,144.8 L775.7,144.8 M776.7,144.8 L777.0,145.3 L777.0,145.8 L776.7,146.3 L775.7,146.3 L775.7,143.3 M778.1,143.3 L778.8,143.3 L779.1,143.8 L779.1,145.8 L778.8,146.3 L778.1,146.3 L777.8,145.8 L777.8,143.8 L778.1,143.3 M779.9,143.3 L779.9,146.3 L781.1,146.3 M781.9,143.3 L783.2,143.3 M782.6,143.3 L782.6,146.3" stroke="#00d4a2" stroke-width="1" fill="none"/>
<path d="M769.7,150.3 L768.4,148.3 L768.4,147.8 L768.9,147.3 L769.3,147.8 L769.3,148.3 L768.0,149.3 L768.0,149.8 L768.4,150.3 L768.9,150.3 L769.7,149.3 M772.8,150.3 L772.8,147.3 L774.5,150.3 L774.5,147.3 M775.6,147.3 L775.6,149.8 L776.0,150.3 L776.8,150.3 L777.3,149.8 L777.3,147.3 M778.3,147.3 L780.0,147.3 M779.1,147.3 L779.1,150.3" stroke="#00d4a2" stroke-width="1" fill="none"/>
<path d="M622.2,154.4 L622.9,153.6 L622.9,158.3 M625.4,154.4 L626.1,153.6 L626.1,158.3" stroke="#00d4a2" stroke-width="1" fill="none"/>
<path d="M634.5,153.6 L635.4,156.0 L636.3,153.6 M635.4,156.0 L635.4,158.3 M637.9,153.6 L638.8,153.6 L639.2,154.4 L639.2,157.5 L638.8,158.3 L637.9,158.3 L637.4,157.5 L637.4,154.4 L637.9,153.6 M640.3,153.6 L640.3,158.3 M642.1,153.6 L640.3,156.8 M641.0,156.0 L642.1,158.3 M645.0,153.6 L643.2,153.6 L643.2,158.3 L645.0,158.3 M643.2,156.0 L644.6,156.0 M650.1,154.4 L649.7,153.6 L648.8,153.6 L648.3,154.4 L648.3,155.2 L648.8,156.0 L649.7,156.0 L650.1,156.8 L650.1,157.5 L649.7,158.3 L648.8,158.3 L648.3,157.5 M651.2,153.6 L651.2,158.3 L653.1,158.3 M656.0,153.6 L654.2,153.6 L654.2,158.3 L656.0,158.3 M654.2,156.0 L655.5,156.0 M658.9,153.6 L657.1,153.6 L657.1,158.3 L658.9,158.3 M657.1,156.0 L658.4,156.0 M660.0,153.6 L660.9,158.3 L661.8,153.6 M664.7,153.6 L662.9,153.6 L662.9,158.3 L664.7,158.3 M662.9,156.0 L664.2,156.0" stroke="#00d4a2" stroke-width="1" fill="none"/>
<path d="M697.5,153.6 L698.8,153.6 L699.2,154.4 L699.2,155.2 L698.8,156.0 L697.5,156.0 M698.8,156.0 L699.2,156.8 L699.2,157.5 L698.8,158.3 L697.5,158.3 L697.5,153.6 M700.3,158.3 L700.3,153.6 L701.6,153.6 L702.1,154.4 L702.1,155.2 L701.6,156.0 L700.3,156.0 M701.2,156.0 L702.1,158.3 M703.1,158.3 L703.1,155.2 L704.0,153.6 L704.9,155.2 L704.9,158.3 M703.1,156.4 L704.9,156.4 M707.7,154.4 L707.2,153.6 L706.4,153.6 L705.9,154.4 L705.9,155.2 L706.4,156.0 L707.2,156.0 L707.7,156.8 L707.7,157.5 L707.2,158.3 L706.4,158.3 L705.9,157.5 M710.5,154.4 L710.1,153.6 L709.2,153.6 L708.8,154.4 L708.8,155.2 L709.2,156.0 L710.1,156.0 L710.5,156.8 L710.5,157.5 L710.1,158.3 L709.2,158.3 L708.8,157.5" stroke="#00d4a2" stroke-width="1" fill="none"/>
<path d="M756.0,154.4 L757.0,153.6 L757.0,158.3" stroke="#00d4a2" stroke-width="1" fill="none"/>
<path d="M622.1,163.7 L622.8,162.9 L622.8,167.6 M624.7,163.7 L625.3,162.9 L626.5,162.9 L627.1,163.7 L627.1,164.5 L624.7,167.6 L627.1,167.6" stroke="#00d4a2" stroke-width="1" fill="none"/>
<path d="M634.5,162.9 L636.3,162.9 M635.4,162.9 L635.4,167.6 M637.4,162.9 L637.4,167.6 M639.2,162.9 L639.2,167.6 M637.4,165.3 L639.2,165.3 M640.3,167.6 L640.3,162.9 L641.6,162.9 L642.1,163.7 L642.1,164.5 L641.6,165.3 L640.3,165.3 M641.2,165.3 L642.1,167.6 M643.2,162.9 L643.2,166.8 L643.6,167.6 L644.5,167.6 L645.0,166.8 L645.0,162.9 M647.9,163.7 L647.4,162.9 L646.5,162.9 L646.1,163.7 L646.1,164.5 L646.5,165.3 L647.4,165.3 L647.9,166.0 L647.9,166.8 L647.4,167.6 L646.5,167.6 L646.1,166.8 M649.0,162.9 L650.8,162.9 M649.9,162.9 L649.9,167.6 M654.0,162.9 L654.5,167.6 L654.9,164.5 L655.4,167.6 L655.8,162.9 M656.9,167.6 L656.9,164.5 L657.8,162.9 L658.7,164.5 L658.7,167.6 M656.9,165.7 L658.7,165.7 M661.6,163.7 L661.2,162.9 L660.3,162.9 L659.8,163.7 L659.8,164.5 L660.3,165.3 L661.2,165.3 L661.6,166.0 L661.6,166.8 L661.2,167.6 L660.3,167.6 L659.8,166.8 M662.7,162.9 L662.7,167.6 M664.5,162.9 L664.5,167.6 M662.7,165.3 L664.5,165.3 M667.4,162.9 L665.6,162.9 L665.6,167.6 L667.4,167.6 M665.6,165.3 L667.0,165.3 M668.5,167.6 L668.5,162.9 L669.9,162.9 L670.3,163.7 L670.3,164.5 L669.9,165.3 L668.5,165.3 M669.4,165.3 L670.3,167.6" stroke="#00d4a2" stroke-width="1" fill="none"/>
<path d="M697.5,162.9 L698.8,162.9 L699.2,163.7 L699.2,164.5 L698.8,165.3 L697.5,165.3 M698.8,165.3 L699.2,166.0 L699.2,166.8 L698.8,167.6 L697.5,167.6 L697.5,162.9 M700.3,167.6 L700.3,162.9 L701.6,162.9 L702.1,163.7 L702.1,164.5 L701.6,165.3 L700.3,165.3 M701.2,165.3 L702.1,167.6 M703.1,167.6 L703.1,164.5 L704.0,162.9 L704.9,164.5 L704.9,167.6 M703.1,165.7 L704.9,165.7 M707.7,163.7 L707.2,162.9 L706.4,162.9 L705.9,163.7 L705.9,164.5 L706.4,165.3 L707.2,165.3 L707.7,166.0 L707.7,166.8 L707.2,167.6 L706.4,167.6 L705.9,166.8 M710.5,163.7 L710.1,162.9 L709.2,162.9 L708.8,163.7 L708.8,164.5 L709.2,165.3 L710.1,165.3 L710.5,166.0 L710.5,166.8 L710.1,167.6 L709.2,167.6 L708.8,166.8" stroke="#00d4a2" stroke-width="1" fill="none"/>
<path d="M756.0,163.7 L757.0,162.9 L757.0,167.6" stroke="#00d4a2" stroke-width="1" fill="none"/>
<path d="M622.1,173.0 L622.8,172.2 L622.8,176.9 M624.7,173.0 L625.3,172.2 L626.5,172.2 L627.1,173.0 L627.1,173.8 L626.5,174.5 L625.9,174.5 M626.5,174.5 L627.1,175.3 L627.1,176.1 L626.5,176.9 L625.3,176.9 L624.7,176.1" stroke="#00d4a2" stroke-width="1" fill="none"/>
<path d="M634.5,172.2 L634.5,176.9 M636.3,172.2 L636.3,176.9 M634.5,174.5 L636.3,174.5 M637.4,176.9 L637.4,173.8 L638.3,172.2 L639.3,173.8 L639.3,176.9 M637.4,174.9 L639.3,174.9 M640.4,176.9 L640.4,172.2 L642.2,176.9 L642.2,172.2 M643.3,172.2 L644.7,172.2 L645.1,173.0 L645.1,176.1 L644.7,176.9 L643.3,176.9 L643.3,172.2 M648.4,172.2 L648.9,176.9 L649.4,173.8 L649.8,176.9 L650.3,172.2 M651.4,172.2 L651.4,176.9 M653.2,172.2 L653.2,176.9 M651.4,174.5 L653.2,174.5 M656.1,172.2 L654.3,172.2 L654.3,176.9 L656.1,176.9 M654.3,174.5 L655.7,174.5 M659.1,172.2 L657.2,172.2 L657.2,176.9 L659.1,176.9 M657.2,174.5 L658.6,174.5 M660.2,172.2 L660.2,176.9 L662.0,176.9" stroke="#00d4a2" stroke-width="1" fill="none"/>
<path d="M697.5,176.9 L697.5,173.8 L698.4,172.2 L699.3,173.8 L699.3,176.9 M697.5,174.9 L699.3,174.9 M700.4,173.0 L700.8,172.2 L701.7,172.2 L702.2,173.0 L702.2,173.8 L701.7,174.5 L701.3,174.5 M701.7,174.5 L702.2,175.3 L702.2,176.1 L701.7,176.9 L700.8,176.9 L700.4,176.1 M703.2,173.0 L703.7,172.2 L704.6,172.2 L705.0,173.0 L705.0,173.8 L704.6,174.5 L704.1,174.5 M704.6,174.5 L705.0,175.3 L705.0,176.1 L704.6,176.9 L703.7,176.9 L703.2,176.1 M706.6,172.2 L707.5,172.2 L707.9,173.0 L707.9,173.8 L707.5,174.5 L706.6,174.5 L706.1,175.3 L706.1,176.1 L706.6,176.9 L707.5,176.9 L707.9,176.1 L707.9,175.3 L707.5,174.5 M706.6,174.5 L706.1,173.8 L706.1,173.0 L706.6,172.2" stroke="#00d4a2" stroke-width="1" fill="none"/>
<path d="M756.0,173.0 L757.0,172.2 L757.0,176.9" stroke="#00d4a2" stroke-width="1" fill="none"/>
<path d="M622.1,182.3 L622.8,181.5 L622.8,186.2 M626.5,186.2 L626.5,181.5 L624.7,184.6 L627.1,184.6" stroke="#00d4a2" stroke-width="1" fill="none"/>
<path d="M634.5,186.2 L634.5,181.5 L636.3,186.2 L636.3,181.5 M637.4,186.2 L637.4,183.0 L638.3,181.5 L639.3,183.0 L639.3,186.2 M637.4,184.2 L639.3,184.2 M640.4,186.2 L640.4,181.5 L641.3,183.8 L642.2,181.5 L642.2,186.2 M645.1,181.5 L643.3,181.5 L643.3,186.2 L645.1,186.2 M643.3,183.8 L644.7,183.8 M648.4,186.2 L648.4,181.5 L649.8,181.5 L650.3,182.3 L650.3,183.0 L649.8,183.8 L648.4,183.8 M651.4,181.5 L651.4,186.2 L653.2,186.2 M654.3,186.2 L654.3,183.0 L655.2,181.5 L656.1,183.0 L656.1,186.2 M654.3,184.2 L656.1,184.2 M657.2,181.5 L659.1,181.5 M658.2,181.5 L658.2,186.2 M662.0,181.5 L660.2,181.5 L660.2,186.2 L662.0,186.2 M660.2,183.8 L661.5,183.8" stroke="#00d4a2" stroke-width="1" fill="none"/>
<path d="M697.5,186.2 L697.5,183.0 L698.4,181.5 L699.3,183.0 L699.3,186.2 M697.5,184.2 L699.3,184.2 M700.4,181.5 L700.4,186.2 L702.2,186.2 M703.3,181.5 L703.3,185.4 L703.8,186.2 L704.7,186.2 L705.1,185.4 L705.1,181.5 M706.3,186.2 L706.3,181.5 L707.2,183.8 L708.1,181.5 L708.1,186.2 M709.4,181.5 L710.3,181.5 M709.8,181.5 L709.8,186.2 M709.4,186.2 L710.3,186.2 M711.2,186.2 L711.2,181.5 L713.0,186.2 L713.0,181.5 M714.3,181.5 L715.2,181.5 M714.8,181.5 L714.8,186.2 M714.3,186.2 L715.2,186.2 M716.2,181.5 L716.2,185.4 L716.6,186.2 L717.5,186.2 L718.0,185.4 L718.0,181.5 M719.1,186.2 L719.1,181.5 L720.0,183.8 L720.9,181.5 L720.9,186.2" stroke="#00d4a2" stroke-width="1" fill="none"/>
<path d="M756.0,182.3 L757.0,181.5 L757.0,186.2" stroke="#00d4a2" stroke-width="1" fill="none"/>
<path d="M622.1,191.5 L622.8,190.7 L622.8,195.4 M627.1,190.7 L624.7,190.7 L624.7,193.1 L626.5,193.1 L627.1,193.9 L627.1,194.6 L626.5,195.4 L625.3,195.4 L624.7,194.6" stroke="#00d4a2" stroke-width="1" fill="none"/>
<path d="M634.5,190.7 L634.5,195.4 L636.3,195.4 M637.9,190.7 L638.8,190.7 L639.2,191.5 L639.2,194.6 L638.8,195.4 L637.9,195.4 L637.4,194.6 L637.4,191.5 L637.9,190.7 M642.1,191.5 L641.7,190.7 L640.8,190.7 L640.3,191.5 L640.3,194.6 L640.8,195.4 L641.7,195.4 L642.1,194.6 M643.2,190.7 L643.2,195.4 M645.0,190.7 L643.2,193.9 M643.9,193.1 L645.0,195.4 M648.3,190.7 L648.8,195.4 L649.2,192.3 L649.7,195.4 L650.1,190.7 M651.2,195.4 L651.2,192.3 L652.1,190.7 L653.1,192.3 L653.1,195.4 M651.2,193.5 L653.1,193.5 M656.0,191.5 L655.5,190.7 L654.6,190.7 L654.2,191.5 L654.2,192.3 L654.6,193.1 L655.5,193.1 L656.0,193.9 L656.0,194.6 L655.5,195.4 L654.6,195.4 L654.2,194.6 M657.1,190.7 L657.1,195.4 M658.9,190.7 L658.9,195.4 M657.1,193.1 L658.9,193.1 M661.8,190.7 L660.0,190.7 L660.0,195.4 L661.8,195.4 M660.0,193.1 L661.3,193.1 M662.9,195.4 L662.9,190.7 L664.2,190.7 L664.7,191.5 L664.7,192.3 L664.2,193.1 L662.9,193.1 M663.8,193.1 L664.7,195.4" stroke="#00d4a2" stroke-width="1" fill="none"/>
<path d="M697.5,195.4 L697.5,192.3 L698.3,190.7 L699.2,192.3 L699.2,195.4 M697.5,193.5 L699.2,193.5 M700.2,191.5 L700.7,190.7 L701.5,190.7 L701.9,191.5 L701.9,192.3 L700.2,195.4 L701.9,195.4 M704.2,195.4 L704.2,190.7 L703.0,193.9 L704.7,193.9 M706.1,190.7 L707.0,190.7 L707.4,191.5 L707.4,194.6 L707.0,195.4 L706.1,195.4 L705.7,194.6 L705.7,191.5 L706.1,190.7 M708.6,193.1 L709.9,193.1 M711.1,191.5 L711.6,190.7 L712.4,190.7 L712.8,191.5 L712.8,192.3 L712.4,193.1 L712.0,193.1 M712.4,193.1 L712.8,193.9 L712.8,194.6 L712.4,195.4 L711.6,195.4 L711.1,194.6 M714.3,190.7 L715.1,190.7 L715.6,191.5 L715.6,194.6 L715.1,195.4 L714.3,195.4 L713.9,194.6 L713.9,191.5 L714.3,190.7 M717.9,195.4 L717.9,190.7 L716.6,193.9 L718.3,193.9" stroke="#00d4a2" stroke-width="1" fill="none"/>
<path d="M756.0,191.5 L757.0,190.7 L757.0,195.4" stroke="#00d4a2" stroke-width="1" fill="none"/>
<path d="M622.1,200.8 L622.8,200.0 L622.8,204.7 M626.5,200.0 L625.3,200.0 L624.7,200.8 L624.7,203.9 L625.3,204.7 L626.5,204.7 L627.1,203.9 L627.1,203.1 L626.5,202.4 L624.7,202.4" stroke="#00d4a2" stroke-width="1" fill="none"/>
<path d="M634.5,200.0 L635.0,204.7 L635.4,201.6 L635.9,204.7 L636.3,200.0 M637.5,200.0 L637.5,204.7 M639.3,200.0 L639.3,204.7 M637.5,202.4 L639.3,202.4 M642.3,200.0 L640.4,200.0 L640.4,204.7 L642.3,204.7 M640.4,202.4 L641.8,202.4 M645.2,200.0 L643.4,200.0 L643.4,204.7 L645.2,204.7 M643.4,202.4 L644.8,202.4 M646.4,200.0 L646.4,204.7 L648.2,204.7 M651.5,204.7 L651.5,200.0 L653.4,204.7 L653.4,200.0 M654.5,200.0 L654.5,203.9 L655.0,204.7 L655.9,204.7 L656.3,203.9 L656.3,200.0 M657.5,200.0 L659.3,200.0 M658.4,200.0 L658.4,204.7" stroke="#00d4a2" stroke-width="1" fill="none"/>
<path d="M697.5,200.0 L698.7,200.0 L699.1,200.8 L699.1,201.6 L698.7,202.4 L697.5,202.4 M698.7,202.4 L699.1,203.1 L699.1,203.9 L698.7,204.7 L697.5,204.7 L697.5,200.0 M700.0,204.7 L700.0,200.0 L701.2,200.0 L701.6,200.8 L701.6,201.6 L701.2,202.4 L700.0,202.4 M700.8,202.4 L701.6,204.7 M702.5,204.7 L702.5,201.6 L703.3,200.0 L704.1,201.6 L704.1,204.7 M702.5,202.8 L704.1,202.8 M706.6,200.8 L706.2,200.0 L705.4,200.0 L705.0,200.8 L705.0,201.6 L705.4,202.4 L706.2,202.4 L706.6,203.1 L706.6,203.9 L706.2,204.7 L705.4,204.7 L705.0,203.9 M709.1,200.8 L708.7,200.0 L707.9,200.0 L707.5,200.8 L707.5,201.6 L707.9,202.4 L708.7,202.4 L709.1,203.1 L709.1,203.9 L708.7,204.7 L707.9,204.7 L707.5,203.9 M710.4,203.9 L710.2,205.5 M712.8,200.8 L712.4,200.0 L711.6,200.0 L711.2,200.8 L711.2,201.6 L711.6,202.4 L712.4,202.4 L712.8,203.1 L712.8,203.9 L712.4,204.7 L711.6,204.7 L711.2,203.9 M713.7,200.0 L715.3,200.0 M714.5,200.0 L714.5,204.7 M717.8,200.0 L716.2,200.0 L716.2,204.7 L717.8,204.7 M716.2,202.4 L717.4,202.4 M720.3,200.0 L718.7,200.0 L718.7,204.7 L720.3,204.7 M718.7,202.4 L719.9,202.4 M721.2,200.0 L721.2,204.7 L722.8,204.7" stroke="#00d4a2" stroke-width="1" fill="none"/>
<path d="M756.0,200.8 L757.0,200.0 L757.0,204.7" stroke="#00d4a2" stroke-width="1" fill="none"/>
<path d="M622.1,210.1 L622.8,209.3 L622.8,214.0 M624.7,209.3 L627.1,209.3 L625.3,214.0" stroke="#00d4a2" stroke-width="1" fill="none"/>
<path d="M634.5,209.3 L635.8,209.3 L636.3,210.1 L636.3,210.9 L635.8,211.6 L634.5,211.6 M635.8,211.6 L636.3,212.4 L636.3,213.2 L635.8,214.0 L634.5,214.0 L634.5,209.3 M637.8,209.3 L638.7,209.3 L639.2,210.1 L639.2,213.2 L638.7,214.0 L637.8,214.0 L637.4,213.2 L637.4,210.1 L637.8,209.3 M640.3,209.3 L642.0,209.3 M641.2,209.3 L641.2,214.0 M643.1,209.3 L644.9,209.3 M644.0,209.3 L644.0,214.0 M646.5,209.3 L647.4,209.3 L647.8,210.1 L647.8,213.2 L647.4,214.0 L646.5,214.0 L646.0,213.2 L646.0,210.1 L646.5,209.3 M648.9,214.0 L648.9,209.3 L649.8,211.6 L650.7,209.3 L650.7,214.0 M655.7,210.1 L655.3,209.3 L654.4,209.3 L653.9,210.1 L653.9,210.9 L654.4,211.6 L655.3,211.6 L655.7,212.4 L655.7,213.2 L655.3,214.0 L654.4,214.0 L653.9,213.2 M656.8,209.3 L658.6,209.3 M657.7,209.3 L657.7,214.0 M660.1,209.3 L661.0,209.3 L661.5,210.1 L661.5,213.2 L661.0,214.0 L660.1,214.0 L659.7,213.2 L659.7,210.1 L660.1,209.3 M662.6,214.0 L662.6,209.3 L663.9,209.3 L664.4,210.1 L664.4,210.9 L663.9,211.6 L662.6,211.6 M665.5,214.0 L665.5,209.3 L666.8,209.3 L667.2,210.1 L667.2,210.9 L666.8,211.6 L665.5,211.6 M670.1,209.3 L668.3,209.3 L668.3,214.0 L670.1,214.0 M668.3,211.6 L669.7,211.6 M671.2,214.0 L671.2,209.3 L672.6,209.3 L673.0,210.1 L673.0,210.9 L672.6,211.6 L671.2,211.6 M672.1,211.6 L673.0,214.0" stroke="#00d4a2" stroke-width="1" fill="none"/>
<path d="M697.5,214.0 L697.5,210.9 L698.4,209.3 L699.3,210.9 L699.3,214.0 M697.5,212.0 L699.3,212.0 M700.4,210.1 L700.9,209.3 L701.8,209.3 L702.3,210.1 L702.3,210.9 L700.4,214.0 L702.3,214.0 M704.8,214.0 L704.8,209.3 L703.4,212.4 L705.2,212.4 M706.8,209.3 L707.7,209.3 L708.2,210.1 L708.2,213.2 L707.7,214.0 L706.8,214.0 L706.3,213.2 L706.3,210.1 L706.8,209.3 M711.7,211.6 L713.1,211.6 M716.7,210.1 L717.1,209.3 L718.0,209.3 L718.5,210.1 L718.5,210.9 L718.0,211.6 L717.6,211.6 M718.0,211.6 L718.5,212.4 L718.5,213.2 L718.0,214.0 L717.1,214.0 L716.7,213.2 M719.8,210.1 L720.2,209.3 L720.2,214.0 M723.0,209.3 L722.1,209.3 L721.7,210.1 L721.7,213.2 L722.1,214.0 L723.0,214.0 L723.5,213.2 L723.5,212.4 L723.0,211.6 L721.7,211.6" stroke="#00d4a2" stroke-width="1" fill="none"/>
<path d="M755.5,210.1 L756.3,209.3 L757.7,209.3 L758.4,210.1 L758.4,210.9 L755.5,214.0 L758.4,214.0" stroke="#00d4a2" stroke-width="1" fill="none"/>
<path d="M771.3,209.3 L771.7,214.0 L772.1,210.9 L772.4,214.0 L772.8,209.3 M775.2,209.3 L773.7,209.3 L773.7,214.0 L775.2,214.0 M773.7,211.6 L774.9,211.6 M776.2,209.3 L776.2,214.0 L777.7,214.0 M778.6,209.3 L779.7,209.3 L780.1,210.1 L780.1,213.2 L779.7,214.0 L778.6,214.0 L778.6,209.3 M781.2,209.3 L782.0,209.3 M781.6,209.3 L781.6,214.0 M781.2,214.0 L782.0,214.0 M782.8,214.0 L782.8,209.3 L784.3,214.0 L784.3,209.3 M786.7,210.1 L786.3,209.3 L785.6,209.3 L785.2,210.1 L785.2,213.2 L785.6,214.0 L786.3,214.0 L786.7,213.2 L786.7,211.6 L785.9,211.6" stroke="#00d4a2" stroke-width="1" fill="none"/>
<path d="M622.1,219.4 L622.8,218.6 L622.8,223.3 M625.3,218.6 L626.5,218.6 L627.1,219.4 L627.1,220.1 L626.5,220.9 L625.3,220.9 L624.7,221.7 L624.7,222.5 L625.3,223.3 L626.5,223.3 L627.1,222.5 L627.1,221.7 L626.5,220.9 M625.3,220.9 L624.7,220.1 L624.7,219.4 L625.3,218.6" stroke="#00d4a2" stroke-width="1" fill="none"/>
<path d="M634.5,223.3 L634.5,218.6 L636.0,218.6 L636.5,219.4 L636.5,220.1 L636.0,220.9 L634.5,220.9 M637.9,218.6 L638.9,218.6 M638.4,218.6 L638.4,223.3 M637.9,223.3 L638.9,223.3 M639.9,218.6 L640.9,223.3 L641.9,218.6 M643.6,218.6 L644.6,218.6 L645.1,219.4 L645.1,222.5 L644.6,223.3 L643.6,223.3 L643.1,222.5 L643.1,219.4 L643.6,218.6 M646.3,218.6 L648.3,218.6 M647.3,218.6 L647.3,223.3" stroke="#00d4a2" stroke-width="1" fill="none"/>
<path d="M697.5,223.3 L697.5,220.1 L698.4,218.6 L699.3,220.1 L699.3,223.3 M697.5,221.3 L699.3,221.3 M700.4,218.6 L700.4,223.3 L702.2,223.3 M703.3,218.6 L703.3,222.5 L703.8,223.3 L704.7,223.3 L705.1,222.5 L705.1,218.6 M706.3,223.3 L706.3,218.6 L707.2,220.9 L708.1,218.6 L708.1,223.3 M709.4,218.6 L710.3,218.6 M709.8,218.6 L709.8,223.3 M709.4,223.3 L710.3,223.3 M711.2,223.3 L711.2,218.6 L713.0,223.3 L713.0,218.6 M714.3,218.6 L715.2,218.6 M714.8,218.6 L714.8,223.3 M714.3,223.3 L715.2,223.3 M716.2,218.6 L716.2,222.5 L716.6,223.3 L717.5,223.3 L718.0,222.5 L718.0,218.6 M719.1,223.3 L719.1,218.6 L720.0,220.9 L720.9,218.6 L720.9,223.3" stroke="#00d4a2" stroke-width="1" fill="none"/>
<path d="M755.5,219.4 L756.3,218.6 L757.7,218.6 L758.4,219.4 L758.4,220.1 L755.5,223.3 L758.4,223.3" stroke="#00d4a2" stroke-width="1" fill="none"/>
<path d="M622.1,228.6 L622.8,227.9 L622.8,232.5 M627.1,230.2 L625.3,230.2 L624.7,229.4 L624.7,228.6 L625.3,227.9 L626.5,227.9 L627.1,228.6 L627.1,231.8 L626.5,232.5 L625.3,232.5" stroke="#00d4a2" stroke-width="1" fill="none"/>
<path d="M636.3,228.6 L635.9,227.9 L635.0,227.9 L634.5,228.6 L634.5,231.8 L635.0,232.5 L635.9,232.5 L636.3,231.8 L636.3,230.2 L635.4,230.2 M637.5,232.5 L637.5,227.9 L638.8,227.9 L639.3,228.6 L639.3,229.4 L638.8,230.2 L637.5,230.2 M638.4,230.2 L639.3,232.5 M642.3,227.9 L640.4,227.9 L640.4,232.5 L642.3,232.5 M640.4,230.2 L641.8,230.2 M643.4,232.5 L643.4,229.4 L644.3,227.9 L645.2,229.4 L645.2,232.5 M643.4,230.6 L645.2,230.6 M648.2,228.6 L647.7,227.9 L646.8,227.9 L646.4,228.6 L646.4,229.4 L646.8,230.2 L647.7,230.2 L648.2,231.0 L648.2,231.8 L647.7,232.5 L646.8,232.5 L646.4,231.8 M651.2,227.9 L649.3,227.9 L649.3,232.5 L651.2,232.5 M649.3,230.2 L650.7,230.2 M654.5,232.5 L654.5,227.9 L656.4,232.5 L656.4,227.9 M657.7,227.9 L658.6,227.9 M658.1,227.9 L658.1,232.5 M657.7,232.5 L658.6,232.5 M659.6,232.5 L659.6,227.9 L660.9,227.9 L661.4,228.6 L661.4,229.4 L660.9,230.2 L659.6,230.2 M662.5,232.5 L662.5,227.9 L663.9,227.9 L664.4,228.6 L664.4,229.4 L663.9,230.2 L662.5,230.2 M665.5,227.9 L665.5,232.5 L667.3,232.5 M670.3,227.9 L668.5,227.9 L668.5,232.5 L670.3,232.5 M668.5,230.2 L669.8,230.2" stroke="#00d4a2" stroke-width="1" fill="none"/>
<path d="M697.5,232.5 L697.5,229.4 L698.4,227.9 L699.3,229.4 L699.3,232.5 M697.5,230.6 L699.3,230.6 M702.2,228.6 L701.7,227.9 L700.8,227.9 L700.4,228.6 L700.4,229.4 L700.8,230.2 L701.7,230.2 L702.2,231.0 L702.2,231.8 L701.7,232.5 L700.8,232.5 L700.4,231.8 M705.0,228.6 L704.6,227.9 L703.7,227.9 L703.2,228.6 L703.2,229.4 L703.7,230.2 L704.6,230.2 L705.0,231.0 L705.0,231.8 L704.6,232.5 L703.7,232.5 L703.2,231.8 M706.1,227.9 L707.0,230.2 L707.9,227.9 M707.0,230.2 L707.0,232.5" stroke="#00d4a2" stroke-width="1" fill="none"/>
<path d="M756.0,228.6 L757.0,227.9 L757.0,232.5" stroke="#00d4a2" stroke-width="1" fill="none"/>
<path d="M621.9,237.9 L622.4,237.1 L623.4,237.1 L623.9,237.9 L623.9,238.7 L621.9,241.8 L623.9,241.8 M625.6,237.1 L626.6,237.1 L627.1,237.9 L627.1,241.0 L626.6,241.8 L625.6,241.8 L625.1,241.0 L625.1,237.9 L625.6,237.1" stroke="#00d4a2" stroke-width="1" fill="none"/>
<path d="M634.5,237.1 L635.9,237.1 L636.4,237.9 L636.4,238.7 L635.9,239.5 L634.5,239.5 M635.9,239.5 L636.4,240.2 L636.4,241.0 L635.9,241.8 L634.5,241.8 L634.5,237.1 M639.3,237.1 L637.5,237.1 L637.5,241.8 L639.3,241.8 M637.5,239.5 L638.9,239.5 M640.5,241.8 L640.5,238.7 L641.4,237.1 L642.3,238.7 L642.3,241.8 M640.5,239.9 L642.3,239.9 M643.5,241.8 L643.5,237.1 L644.9,237.1 L645.3,237.9 L645.3,238.7 L644.9,239.5 L643.5,239.5 M644.4,239.5 L645.3,241.8 M646.7,237.1 L647.6,237.1 M647.1,237.1 L647.1,241.8 M646.7,241.8 L647.6,241.8 M648.6,241.8 L648.6,237.1 L650.4,241.8 L650.4,237.1 M653.4,237.9 L652.9,237.1 L652.0,237.1 L651.6,237.9 L651.6,241.0 L652.0,241.8 L652.9,241.8 L653.4,241.0 L653.4,239.5 L652.5,239.5 M656.8,237.1 L656.8,241.8 M658.6,237.1 L658.6,241.8 M656.8,239.5 L658.6,239.5 M660.2,237.1 L661.2,237.1 L661.6,237.9 L661.6,241.0 L661.2,241.8 L660.2,241.8 L659.8,241.0 L659.8,237.9 L660.2,237.1 M662.8,237.1 L662.8,241.0 L663.2,241.8 L664.2,241.8 L664.6,241.0 L664.6,237.1 M667.6,237.9 L667.2,237.1 L666.2,237.1 L665.8,237.9 L665.8,238.7 L666.2,239.5 L667.2,239.5 L667.6,240.2 L667.6,241.0 L667.2,241.8 L666.2,241.8 L665.8,241.0 M668.9,237.1 L669.9,237.1 M669.4,237.1 L669.4,241.8 M668.9,241.8 L669.9,241.8 M670.9,241.8 L670.9,237.1 L672.7,241.8 L672.7,237.1 M675.7,237.9 L675.2,237.1 L674.3,237.1 L673.8,237.9 L673.8,241.0 L674.3,241.8 L675.2,241.8 L675.7,241.0 L675.7,239.5 L674.8,239.5" stroke="#00d4a2" stroke-width="1" fill="none"/>
<path d="M697.5,241.8 L697.5,238.7 L698.4,237.1 L699.3,238.7 L699.3,241.8 M697.5,239.9 L699.3,239.9 M700.3,237.9 L700.8,237.1 L701.7,237.1 L702.1,237.9 L702.1,238.7 L700.3,241.8 L702.1,241.8 M703.4,237.9 L703.8,237.1 L703.8,241.8 M706.5,237.1 L705.6,237.1 L705.2,237.9 L705.2,241.0 L705.6,241.8 L706.5,241.8 L706.9,241.0 L706.9,240.2 L706.5,239.5 L705.2,239.5 M708.2,239.5 L709.6,239.5 M710.9,237.1 L711.3,241.8 L711.7,238.7 L712.2,241.8 L712.6,237.1 M715.5,237.9 L715.0,237.1 L714.1,237.1 L713.7,237.9 L713.7,241.0 L714.1,241.8 L715.0,241.8 L715.5,241.0 M716.5,237.1 L717.9,237.1 L718.3,237.9 L718.3,238.7 L717.9,239.5 L716.5,239.5 M717.9,239.5 L718.3,240.2 L718.3,241.0 L717.9,241.8 L716.5,241.8 L716.5,237.1" stroke="#00d4a2" stroke-width="1" fill="none"/>
<path d="M756.0,237.9 L757.0,237.1 L757.0,241.8" stroke="#00d4a2" stroke-width="1" fill="none"/>
<path d="M621.9,247.2 L622.5,246.4 L623.6,246.4 L624.1,247.2 L624.1,248.0 L621.9,251.1 L624.1,251.1 M625.8,247.2 L626.3,246.4 L626.3,251.1" stroke="#00d4a2" stroke-width="1" fill="none"/>
<path d="M634.5,246.4 L636.3,246.4 M635.4,246.4 L635.4,251.1 M637.4,246.4 L637.4,251.1 M639.2,246.4 L639.2,251.1 M637.4,248.7 L639.2,248.7 M640.4,251.1 L640.4,246.4 L641.7,246.4 L642.2,247.2 L642.2,248.0 L641.7,248.7 L640.4,248.7 M641.3,248.7 L642.2,251.1 M643.3,246.4 L643.3,250.3 L643.7,251.1 L644.7,251.1 L645.1,250.3 L645.1,246.4 M648.0,247.2 L647.6,246.4 L646.7,246.4 L646.2,247.2 L646.2,248.0 L646.7,248.7 L647.6,248.7 L648.0,249.5 L648.0,250.3 L647.6,251.1 L646.7,251.1 L646.2,250.3 M649.1,246.4 L651.0,246.4 M650.1,246.4 L650.1,251.1 M654.3,246.4 L655.6,246.4 L656.1,247.2 L656.1,248.0 L655.6,248.7 L654.3,248.7 M655.6,248.7 L656.1,249.5 L656.1,250.3 L655.6,251.1 L654.3,251.1 L654.3,246.4 M657.2,251.1 L657.2,248.0 L658.1,246.4 L659.0,248.0 L659.0,251.1 M657.2,249.1 L659.0,249.1 M660.1,246.4 L660.1,251.1 L661.9,251.1 M663.1,246.4 L663.1,251.1 L664.9,251.1 M668.2,246.4 L669.5,246.4 L670.0,247.2 L670.0,248.0 L669.5,248.7 L668.2,248.7 M669.5,248.7 L670.0,249.5 L670.0,250.3 L669.5,251.1 L668.2,251.1 L668.2,246.4 M672.9,246.4 L671.1,246.4 L671.1,251.1 L672.9,251.1 M671.1,248.7 L672.5,248.7 M674.0,251.1 L674.0,248.0 L675.0,246.4 L675.9,248.0 L675.9,251.1 M674.0,249.1 L675.9,249.1 M677.0,251.1 L677.0,246.4 L678.3,246.4 L678.8,247.2 L678.8,248.0 L678.3,248.7 L677.0,248.7 M677.9,248.7 L678.8,251.1 M680.1,246.4 L681.0,246.4 M680.5,246.4 L680.5,251.1 M680.1,251.1 L681.0,251.1 M682.0,251.1 L682.0,246.4 L683.8,251.1 L683.8,246.4 M686.7,247.2 L686.2,246.4 L685.3,246.4 L684.9,247.2 L684.9,250.3 L685.3,251.1 L686.2,251.1 L686.7,250.3 L686.7,248.7 L685.8,248.7" stroke="#00d4a2" stroke-width="1" fill="none"/>
<path d="M697.5,251.1 L697.5,248.0 L698.4,246.4 L699.3,248.0 L699.3,251.1 M697.5,249.1 L699.3,249.1 M702.2,247.2 L701.7,246.4 L700.8,246.4 L700.4,247.2 L700.4,248.0 L700.8,248.7 L701.7,248.7 L702.2,249.5 L702.2,250.3 L701.7,251.1 L700.8,251.1 L700.4,250.3 M705.0,247.2 L704.6,246.4 L703.7,246.4 L703.2,247.2 L703.2,248.0 L703.7,248.7 L704.6,248.7 L705.0,249.5 L705.0,250.3 L704.6,251.1 L703.7,251.1 L703.2,250.3 M706.1,246.4 L707.0,248.7 L707.9,246.4 M707.0,248.7 L707.0,251.1" stroke="#00d4a2" stroke-width="1" fill="none"/>
<path d="M755.5,247.2 L756.3,246.4 L757.7,246.4 L758.4,247.2 L758.4,248.0 L755.5,251.1 L758.4,251.1" stroke="#00d4a2" stroke-width="1" fill="none"/>
<path d="M621.9,256.5 L622.4,255.7 L623.4,255.7 L623.9,256.5 L623.9,257.2 L621.9,260.4 L623.9,260.4 M625.1,256.5 L625.6,255.7 L626.6,255.7 L627.1,256.5 L627.1,257.2 L625.1,260.4 L627.1,260.4" stroke="#00d4a2" stroke-width="1" fill="none"/>
<path d="M634.5,255.7 L635.9,255.7 L636.3,256.5 L636.3,257.2 L635.9,258.0 L634.5,258.0 M635.9,258.0 L636.3,258.8 L636.3,259.6 L635.9,260.4 L634.5,260.4 L634.5,255.7 M639.3,255.7 L637.5,255.7 L637.5,260.4 L639.3,260.4 M637.5,258.0 L638.8,258.0 M640.4,260.4 L640.4,257.2 L641.4,255.7 L642.3,257.2 L642.3,260.4 M640.4,258.4 L642.3,258.4 M643.4,260.4 L643.4,255.7 L644.8,255.7 L645.2,256.5 L645.2,257.2 L644.8,258.0 L643.4,258.0 M644.3,258.0 L645.2,260.4 M646.5,255.7 L647.5,255.7 M647.0,255.7 L647.0,260.4 M646.5,260.4 L647.5,260.4 M648.4,260.4 L648.4,255.7 L650.3,260.4 L650.3,255.7 M653.2,256.5 L652.8,255.7 L651.9,255.7 L651.4,256.5 L651.4,259.6 L651.9,260.4 L652.8,260.4 L653.2,259.6 L653.2,258.0 L652.3,258.0 M658.4,256.5 L658.0,255.7 L657.1,255.7 L656.6,256.5 L656.6,259.6 L657.1,260.4 L658.0,260.4 L658.4,259.6 L658.4,258.0 L657.5,258.0 M659.6,255.7 L659.6,260.4 L661.4,260.4 M662.5,260.4 L662.5,257.2 L663.4,255.7 L664.4,257.2 L664.4,260.4 M662.5,258.4 L664.4,258.4 M665.5,260.4 L665.5,255.7 L667.3,260.4 L667.3,255.7 M668.5,255.7 L669.8,255.7 L670.3,256.5 L670.3,259.6 L669.8,260.4 L668.5,260.4 L668.5,255.7" stroke="#00d4a2" stroke-width="1" fill="none"/>
<path d="M697.5,260.4 L697.5,257.2 L698.4,255.7 L699.3,257.2 L699.3,260.4 M697.5,258.4 L699.3,258.4 M700.3,256.5 L700.8,255.7 L701.7,255.7 L702.1,256.5 L702.1,257.2 L700.3,260.4 L702.1,260.4 M703.4,256.5 L703.8,255.7 L703.8,260.4 M706.5,255.7 L705.6,255.7 L705.2,256.5 L705.2,259.6 L705.6,260.4 L706.5,260.4 L706.9,259.6 L706.9,258.8 L706.5,258.0 L705.2,258.0 M708.2,258.0 L709.6,258.0 M710.9,255.7 L711.3,260.4 L711.7,257.2 L712.2,260.4 L712.6,255.7 M715.5,256.5 L715.0,255.7 L714.1,255.7 L713.7,256.5 L713.7,259.6 L714.1,260.4 L715.0,260.4 L715.5,259.6 M716.5,255.7 L717.9,255.7 L718.3,256.5 L718.3,257.2 L717.9,258.0 L716.5,258.0 M717.9,258.0 L718.3,258.8 L718.3,259.6 L717.9,260.4 L716.5,260.4 L716.5,255.7" stroke="#00d4a2" stroke-width="1" fill="none"/>
<path d="M756.0,256.5 L757.0,255.7 L757.0,260.4" stroke="#00d4a2" stroke-width="1" fill="none"/>
<path d="M771.4,255.7 L771.4,260.4 L772.7,260.4 M773.8,255.7 L774.4,255.7 L774.7,256.5 L774.7,259.6 L774.4,260.4 L773.8,260.4 L773.5,259.6 L773.5,256.5 L773.8,255.7 M776.8,256.5 L776.5,255.7 L775.8,255.7 L775.5,256.5 L775.5,259.6 L775.8,260.4 L776.5,260.4 L776.8,259.6 M777.6,255.7 L777.6,260.4 M778.9,255.7 L777.6,258.8 M778.1,258.0 L778.9,260.4 M781.2,260.4 L781.2,255.7 L782.5,260.4 L782.5,255.7 M783.3,255.7 L783.3,259.6 L783.6,260.4 L784.2,260.4 L784.5,259.6 L784.5,255.7 M785.3,255.7 L786.6,255.7 M786.0,255.7 L786.0,260.4" stroke="#00d4a2" stroke-width="1" fill="none"/>
<path d="M619.3,265.7 L619.8,265.0 L620.7,265.0 L621.2,265.7 L621.2,266.5 L619.3,269.6 L621.2,269.6 M622.3,265.7 L622.8,265.0 L623.7,265.0 L624.2,265.7 L624.2,266.5 L623.7,267.3 L623.3,267.3 M623.7,267.3 L624.2,268.1 L624.2,268.9 L623.7,269.6 L622.8,269.6 L622.3,268.9 M625.6,267.3 L627.0,267.3 M628.6,265.7 L629.0,265.0 L629.0,269.6" stroke="#00d4a2" stroke-width="1" fill="none"/>
<path d="M634.5,265.0 L635.9,265.0 L636.3,265.7 L636.3,266.5 L635.9,267.3 L634.5,267.3 M635.9,267.3 L636.3,268.1 L636.3,268.9 L635.9,269.6 L634.5,269.6 L634.5,265.0 M639.3,265.0 L637.5,265.0 L637.5,269.6 L639.3,269.6 M637.5,267.3 L638.9,267.3 M640.4,269.6 L640.4,266.5 L641.4,265.0 L642.3,266.5 L642.3,269.6 M640.4,267.7 L642.3,267.7 M643.4,269.6 L643.4,265.0 L644.8,265.0 L645.3,265.7 L645.3,266.5 L644.8,267.3 L643.4,267.3 M644.3,267.3 L645.3,269.6 M646.6,265.0 L647.5,265.0 M647.0,265.0 L647.0,269.6 M646.6,269.6 L647.5,269.6 M648.5,269.6 L648.5,265.0 L650.3,269.6 L650.3,265.0 M653.3,265.7 L652.8,265.0 L651.9,265.0 L651.4,265.7 L651.4,268.9 L651.9,269.6 L652.8,269.6 L653.3,268.9 L653.3,267.3 L652.3,267.3 M656.6,265.0 L656.6,269.6 M658.5,265.0 L658.5,269.6 M656.6,267.3 L658.5,267.3 M660.1,265.0 L661.0,265.0 L661.4,265.7 L661.4,268.9 L661.0,269.6 L660.1,269.6 L659.6,268.9 L659.6,265.7 L660.1,265.0 M662.6,265.0 L662.6,268.9 L663.0,269.6 L663.9,269.6 L664.4,268.9 L664.4,265.0 M667.4,265.7 L666.9,265.0 L666.0,265.0 L665.5,265.7 L665.5,266.5 L666.0,267.3 L666.9,267.3 L667.4,268.1 L667.4,268.9 L666.9,269.6 L666.0,269.6 L665.5,268.9 M668.7,265.0 L669.6,265.0 M669.1,265.0 L669.1,269.6 M668.7,269.6 L669.6,269.6 M670.6,269.6 L670.6,265.0 L672.4,269.6 L672.4,265.0 M675.4,265.7 L674.9,265.0 L674.0,265.0 L673.6,265.7 L673.6,268.9 L674.0,269.6 L674.9,269.6 L675.4,268.9 L675.4,267.3 L674.5,267.3 M678.7,265.0 L680.1,265.0 L680.6,265.7 L680.6,266.5 L680.1,267.3 L678.7,267.3 M680.1,267.3 L680.6,268.1 L680.6,268.9 L680.1,269.6 L678.7,269.6 L678.7,265.0 M682.2,265.0 L683.1,265.0 L683.6,265.7 L683.6,268.9 L683.1,269.6 L682.2,269.6 L681.7,268.9 L681.7,265.7 L682.2,265.0 M684.7,265.0 L684.7,269.6 L686.5,269.6 M687.7,265.0 L689.5,265.0 M688.6,265.0 L688.6,269.6" stroke="#00d4a2" stroke-width="1" fill="none"/>
<path d="M699.2,265.7 L698.8,265.0 L697.9,265.0 L697.5,265.7 L697.5,266.5 L697.9,267.3 L698.8,267.3 L699.2,268.1 L699.2,268.9 L698.8,269.6 L697.9,269.6 L697.5,268.9 M700.3,265.0 L702.1,265.0 M701.2,265.0 L701.2,269.6 M704.9,265.0 L703.1,265.0 L703.1,269.6 L704.9,269.6 M703.1,267.3 L704.4,267.3 M707.7,265.0 L705.9,265.0 L705.9,269.6 L707.7,269.6 M705.9,267.3 L707.2,267.3 M708.8,265.0 L708.8,269.6 L710.5,269.6" stroke="#00d4a2" stroke-width="1" fill="none"/>
<path d="M757.7,269.6 L757.7,265.0 L755.5,268.1 L758.4,268.1" stroke="#00d4a2" stroke-width="1" fill="none"/>
<path d="M619.3,275.0 L619.7,274.2 L620.6,274.2 L621.1,275.0 L621.1,275.8 L619.3,278.9 L621.1,278.9 M622.2,275.0 L622.6,274.2 L623.5,274.2 L624.0,275.0 L624.0,275.8 L623.5,276.6 L623.1,276.6 M623.5,276.6 L624.0,277.4 L624.0,278.1 L623.5,278.9 L622.6,278.9 L622.2,278.1 M625.3,276.6 L626.6,276.6 M627.9,275.0 L628.4,274.2 L629.3,274.2 L629.7,275.0 L629.7,275.8 L627.9,278.9 L629.7,278.9" stroke="#00d4a2" stroke-width="1" fill="none"/>
<path d="M634.5,274.2 L635.9,274.2 L636.3,275.0 L636.3,275.8 L635.9,276.6 L634.5,276.6 M635.9,276.6 L636.3,277.4 L636.3,278.1 L635.9,278.9 L634.5,278.9 L634.5,274.2 M639.3,274.2 L637.5,274.2 L637.5,278.9 L639.3,278.9 M637.5,276.6 L638.9,276.6 M640.5,278.9 L640.5,275.8 L641.4,274.2 L642.3,275.8 L642.3,278.9 M640.5,277.0 L642.3,277.0 M643.4,278.9 L643.4,274.2 L644.8,274.2 L645.3,275.0 L645.3,275.8 L644.8,276.6 L643.4,276.6 M644.4,276.6 L645.3,278.9 M646.6,274.2 L647.5,274.2 M647.1,274.2 L647.1,278.9 M646.6,278.9 L647.5,278.9 M648.5,278.9 L648.5,274.2 L650.4,278.9 L650.4,274.2 M653.3,275.0 L652.9,274.2 L651.9,274.2 L651.5,275.0 L651.5,278.1 L651.9,278.9 L652.9,278.9 L653.3,278.1 L653.3,276.6 L652.4,276.6 M656.7,274.2 L656.7,278.9 M658.5,274.2 L658.5,278.9 M656.7,276.6 L658.5,276.6 M660.1,274.2 L661.1,274.2 L661.5,275.0 L661.5,278.1 L661.1,278.9 L660.1,278.9 L659.7,278.1 L659.7,275.0 L660.1,274.2 M662.7,274.2 L662.7,278.1 L663.1,278.9 L664.0,278.9 L664.5,278.1 L664.5,274.2 M667.5,275.0 L667.0,274.2 L666.1,274.2 L665.6,275.0 L665.6,275.8 L666.1,276.6 L667.0,276.6 L667.5,277.4 L667.5,278.1 L667.0,278.9 L666.1,278.9 L665.6,278.1 M668.8,274.2 L669.7,274.2 M669.3,274.2 L669.3,278.9 M668.8,278.9 L669.7,278.9 M670.7,278.9 L670.7,274.2 L672.5,278.9 L672.5,274.2 M675.5,275.0 L675.1,274.2 L674.1,274.2 L673.7,275.0 L673.7,278.1 L674.1,278.9 L675.1,278.9 L675.5,278.1 L675.5,276.6 L674.6,276.6 M678.9,278.9 L678.9,274.2 L680.7,278.9 L680.7,274.2 M681.9,274.2 L681.9,278.1 L682.3,278.9 L683.3,278.9 L683.7,278.1 L683.7,274.2 M684.9,274.2 L686.7,274.2 M685.8,274.2 L685.8,278.9" stroke="#00d4a2" stroke-width="1" fill="none"/>
<path d="M699.2,275.0 L698.8,274.2 L697.9,274.2 L697.5,275.0 L697.5,275.8 L697.9,276.6 L698.8,276.6 L699.2,277.4 L699.2,278.1 L698.8,278.9 L697.9,278.9 L697.5,278.1 M700.3,274.2 L702.1,274.2 M701.2,274.2 L701.2,278.9 M704.9,274.2 L703.1,274.2 L703.1,278.9 L704.9,278.9 M703.1,276.6 L704.4,276.6 M707.7,274.2 L705.9,274.2 L705.9,278.9 L707.7,278.9 M705.9,276.6 L707.2,276.6 M708.8,274.2 L708.8,278.9 L710.5,278.9" stroke="#00d4a2" stroke-width="1" fill="none"/>
<path d="M757.7,278.9 L757.7,274.2 L755.5,277.4 L758.4,277.4" stroke="#00d4a2" stroke-width="1" fill="none"/>
<path d="M621.9,284.3 L622.4,283.5 L623.4,283.5 L623.9,284.3 L623.9,285.1 L621.9,288.2 L623.9,288.2 M626.6,288.2 L626.6,283.5 L625.1,286.6 L627.1,286.6" stroke="#00d4a2" stroke-width="1" fill="none"/>
<path d="M634.5,283.5 L635.9,283.5 L636.4,284.3 L636.4,285.1 L635.9,285.8 L634.5,285.8 M635.9,285.8 L636.4,286.6 L636.4,287.4 L635.9,288.2 L634.5,288.2 L634.5,283.5 M638.0,283.5 L638.9,283.5 L639.4,284.3 L639.4,287.4 L638.9,288.2 L638.0,288.2 L637.5,287.4 L637.5,284.3 L638.0,283.5 M640.6,283.5 L642.0,283.5 L642.4,284.3 L642.4,287.4 L642.0,288.2 L640.6,288.2 L640.6,283.5 M643.6,283.5 L644.5,285.8 L645.5,283.5 M644.5,285.8 L644.5,288.2 M648.9,283.5 L648.9,288.2 L650.8,288.2 M652.1,283.5 L653.1,283.5 M652.6,283.5 L652.6,288.2 M652.1,288.2 L653.1,288.2 M654.1,288.2 L654.1,283.5 L655.9,288.2 L655.9,283.5 M659.0,283.5 L657.1,283.5 L657.1,288.2 L659.0,288.2 M657.1,285.8 L658.5,285.8 M660.1,288.2 L660.1,283.5 L661.5,283.5 L662.0,284.3 L662.0,285.1 L661.5,285.8 L660.1,285.8 M661.1,285.8 L662.0,288.2" stroke="#00d4a2" stroke-width="1" fill="none"/>
<path d="M697.5,288.2 L697.5,285.1 L698.4,283.5 L699.3,285.1 L699.3,288.2 M697.5,286.2 L699.3,286.2 M700.4,284.3 L700.9,283.5 L701.8,283.5 L702.3,284.3 L702.3,285.1 L700.4,288.2 L702.3,288.2 M704.8,288.2 L704.8,283.5 L703.4,286.6 L705.2,286.6 M706.8,283.5 L707.7,283.5 L708.2,284.3 L708.2,287.4 L707.7,288.2 L706.8,288.2 L706.3,287.4 L706.3,284.3 L706.8,283.5 M711.7,285.8 L713.1,285.8 M716.7,284.3 L717.1,283.5 L718.0,283.5 L718.5,284.3 L718.5,285.1 L718.0,285.8 L717.6,285.8 M718.0,285.8 L718.5,286.6 L718.5,287.4 L718.0,288.2 L717.1,288.2 L716.7,287.4 M719.8,284.3 L720.2,283.5 L720.2,288.2 M723.0,283.5 L722.1,283.5 L721.7,284.3 L721.7,287.4 L722.1,288.2 L723.0,288.2 L723.5,287.4 L723.5,286.6 L723.0,285.8 L721.7,285.8" stroke="#00d4a2" stroke-width="1" fill="none"/>
<path d="M751.4,284.3 L752.0,283.5 L752.0,288.2 M755.8,284.3 L755.3,283.5 L754.2,283.5 L753.6,284.3 L753.6,285.1 L754.2,285.8 L755.3,285.8 L755.8,286.6 L755.8,287.4 L755.3,288.2 L754.2,288.2 L753.6,287.4 M759.3,283.5 L757.1,283.5 L757.1,288.2 L759.3,288.2 M757.1,285.8 L758.8,285.8 M760.6,283.5 L762.8,283.5 M761.7,283.5 L761.7,288.2" stroke="#00d4a2" stroke-width="1" fill="none"/>
<path d="M771.3,283.5 L771.7,288.2 L772.1,285.1 L772.4,288.2 L772.8,283.5 M775.2,283.5 L773.7,283.5 L773.7,288.2 L775.2,288.2 M773.7,285.8 L774.9,285.8 M776.2,283.5 L776.2,288.2 L777.7,288.2 M778.6,283.5 L779.7,283.5 L780.1,284.3 L780.1,287.4 L779.7,288.2 L778.6,288.2 L778.6,283.5 M781.2,283.5 L782.0,283.5 M781.6,283.5 L781.6,288.2 M781.2,288.2 L782.0,288.2 M782.8,288.2 L782.8,283.5 L784.3,288.2 L784.3,283.5 M786.7,284.3 L786.3,283.5 L785.6,283.5 L785.2,284.3 L785.2,287.4 L785.6,288.2 L786.3,288.2 L786.7,287.4 L786.7,285.8 L785.9,285.8" stroke="#00d4a2" stroke-width="1" fill="none"/>
<path d="M621.9,292.8 L623.0,297.5 L624.1,292.8 M625.8,293.6 L626.3,292.8 L626.3,297.5" stroke="#00d4a2" stroke-width="1" fill="none"/>
<path d="M634.5,292.8 L635.4,297.5 L636.3,292.8 M637.7,295.1 L639.0,295.1 M640.4,297.5 L640.4,292.8 L641.8,292.8 L642.2,293.6 L642.2,294.3 L641.8,295.1 L640.4,295.1 M643.8,292.8 L644.7,292.8 L645.2,293.6 L645.2,296.7 L644.7,297.5 L643.8,297.5 L643.3,296.7 L643.3,293.6 L643.8,292.8 M646.3,297.5 L646.3,292.8 L647.6,292.8 L648.1,293.6 L648.1,294.3 L647.6,295.1 L646.3,295.1 M647.2,295.1 L648.1,297.5 M649.2,292.8 L651.0,292.8 M650.1,292.8 L650.1,297.5 M656.2,293.6 L655.7,292.8 L654.8,292.8 L654.4,293.6 L654.4,294.3 L654.8,295.1 L655.7,295.1 L656.2,295.9 L656.2,296.7 L655.7,297.5 L654.8,297.5 L654.4,296.7 M659.1,292.8 L657.3,292.8 L657.3,297.5 L659.1,297.5 M657.3,295.1 L658.7,295.1 M660.3,297.5 L660.3,294.3 L661.2,292.8 L662.1,294.3 L662.1,297.5 M660.3,295.5 L662.1,295.5 M663.2,292.8 L665.0,292.8 M664.1,292.8 L664.1,297.5 M668.5,292.8 L669.4,292.8 M669.0,292.8 L669.0,297.5 M668.5,297.5 L669.4,297.5 M670.4,297.5 L670.4,292.8 L672.2,297.5 L672.2,292.8 M675.2,293.6 L674.7,292.8 L673.8,292.8 L673.3,293.6 L673.3,294.3 L673.8,295.1 L674.7,295.1 L675.2,295.9 L675.2,296.7 L674.7,297.5 L673.8,297.5 L673.3,296.7 M678.1,292.8 L676.3,292.8 L676.3,297.5 L678.1,297.5 M676.3,295.1 L677.7,295.1 M679.2,297.5 L679.2,292.8 L680.6,292.8 L681.1,293.6 L681.1,294.3 L680.6,295.1 L679.2,295.1 M680.1,295.1 L681.1,297.5 M682.2,292.8 L684.0,292.8 M683.1,292.8 L683.1,297.5" stroke="#00d4a2" stroke-width="1" fill="none"/>
<path d="M697.5,293.6 L697.9,292.8 L698.8,292.8 L699.2,293.6 L699.2,294.3 L698.8,295.1 L698.4,295.1 M698.8,295.1 L699.2,295.9 L699.2,296.7 L698.8,297.5 L697.9,297.5 L697.5,296.7 M700.8,292.8 L701.6,292.8 L702.1,293.6 L702.1,296.7 L701.6,297.5 L700.8,297.5 L700.3,296.7 L700.3,293.6 L700.8,292.8 M704.4,297.5 L704.4,292.8 L703.1,295.9 L704.9,295.9 M707.7,293.6 L707.2,292.8 L706.4,292.8 L705.9,293.6 L705.9,294.3 L706.4,295.1 L707.2,295.1 L707.7,295.9 L707.7,296.7 L707.2,297.5 L706.4,297.5 L705.9,296.7 M710.5,293.6 L710.1,292.8 L709.2,292.8 L708.8,293.6 L708.8,294.3 L709.2,295.1 L710.1,295.1 L710.5,295.9 L710.5,296.7 L710.1,297.5 L709.2,297.5 L708.8,296.7" stroke="#00d4a2" stroke-width="1" fill="none"/>
<path d="M755.5,293.6 L756.3,292.8 L757.7,292.8 L758.4,293.6 L758.4,294.3 L755.5,297.5 L758.4,297.5" stroke="#00d4a2" stroke-width="1" fill="none"/>
<path d="M771.3,292.8 L771.7,297.5 L772.1,294.3 L772.4,297.5 L772.8,292.8 M775.2,292.8 L773.7,292.8 L773.7,297.5 L775.2,297.5 M773.7,295.1 L774.9,295.1 M776.2,292.8 L776.2,297.5 L777.7,297.5 M778.6,292.8 L779.7,292.8 L780.1,293.6 L780.1,296.7 L779.7,297.5 L778.6,297.5 L778.6,292.8 M781.2,292.8 L782.0,292.8 M781.6,292.8 L781.6,297.5 M781.2,297.5 L782.0,297.5 M782.8,297.5 L782.8,292.8 L784.3,297.5 L784.3,292.8 M786.7,293.6 L786.3,292.8 L785.6,292.8 L785.2,293.6 L785.2,296.7 L785.6,297.5 L786.3,297.5 L786.7,296.7 L786.7,295.1 L785.9,295.1" stroke="#00d4a2" stroke-width="1" fill="none"/>
<path d="M620.0,26.8 L620.0,23.8 L622.2,26.8 L622.2,23.8 M625.6,23.8 L626.7,23.8 L627.2,24.3 L627.2,26.3 L626.7,26.8 L625.6,26.8 L625.0,26.3 L625.0,24.3 L625.6,23.8 M630.5,26.5 L630.5,26.8" stroke="#00d4a2" stroke-width="1" fill="none"/>
<path d="M644.5,26.8 L644.5,23.8 L646.1,23.8 L646.6,24.3 L646.6,24.8 L646.1,25.3 L644.5,25.3 M649.1,26.8 L649.1,24.8 L650.2,23.8 L651.2,24.8 L651.2,26.8 M649.1,25.5 L651.2,25.5 M653.8,26.8 L653.8,23.8 L655.3,23.8 L655.9,24.3 L655.9,24.8 L655.3,25.3 L653.8,25.3 M654.8,25.3 L655.9,26.8 M658.4,23.8 L660.5,23.8 M659.4,23.8 L659.4,26.8 M666.5,26.8 L666.5,23.8 L668.6,26.8 L668.6,23.8 M671.1,26.8 L671.1,24.8 L672.2,23.8 L673.2,24.8 L673.2,26.8 M671.1,25.5 L673.2,25.5 M675.8,26.8 L675.8,23.8 L676.8,25.3 L677.9,23.8 L677.9,26.8 M682.5,23.8 L680.4,23.8 L680.4,26.8 L682.5,26.8 M680.4,25.3 L682.0,25.3" stroke="#00d4a2" stroke-width="1" fill="none"/>
<path d="M704.5,26.8 L704.5,23.8 L705.6,25.3 L706.6,23.8 L706.6,26.8 M709.3,26.8 L709.3,24.8 L710.3,23.8 L711.4,24.8 L711.4,26.8 M709.3,25.5 L711.4,25.5 M714.0,23.8 L716.2,23.8 M715.1,23.8 L715.1,26.8 M720.9,23.8 L718.8,23.8 L718.8,26.8 L720.9,26.8 M718.8,25.3 L720.4,25.3 M723.5,26.8 L723.5,23.8 L725.1,23.8 L725.7,24.3 L725.7,24.8 L725.1,25.3 L723.5,25.3 M724.6,25.3 L725.7,26.8 M728.5,23.8 L729.6,23.8 M729.0,23.8 L729.0,26.8 M728.5,26.8 L729.6,26.8 M731.6,26.8 L731.6,24.8 L732.7,23.8 L733.7,24.8 L733.7,26.8 M731.6,25.5 L733.7,25.5 M736.4,23.8 L736.4,26.8 L738.5,26.8" stroke="#00d4a2" stroke-width="1" fill="none"/>
<path d="M749.5,23.8 L750.6,23.8 L751.2,24.3 L751.2,26.3 L750.6,26.8 L749.5,26.8 L749.0,26.3 L749.0,24.3 L749.5,23.8 M750.1,25.8 L751.2,26.8 M754.3,23.8 L754.3,24.5 M756.0,23.8 L758.2,23.8 M757.1,23.8 L757.1,26.8 M760.8,23.8 L761.9,25.3 L763.0,23.8 M761.9,25.3 L761.9,26.8" stroke="#00d4a2" stroke-width="1" fill="none"/>
<path d="M767.5,26.8 L767.5,23.8 L768.9,23.8 L769.4,24.3 L769.4,24.8 L768.9,25.3 L767.5,25.3 M768.4,25.3 L769.4,26.8 M773.6,23.8 L771.7,23.8 L771.7,26.8 L773.6,26.8 M771.7,25.3 L773.1,25.3 M775.9,26.8 L775.9,23.8 L776.9,25.3 L777.8,23.8 L777.8,26.8 M780.2,26.8 L780.2,24.8 L781.1,23.8 L782.1,24.8 L782.1,26.8 M780.2,25.5 L782.1,25.5 M784.4,26.8 L784.4,23.8 L785.8,23.8 L786.3,24.3 L786.3,24.8 L785.8,25.3 L784.4,25.3 M785.3,25.3 L786.3,26.8 M788.6,23.8 L788.6,26.8 M790.5,23.8 L788.6,25.8 M789.3,25.3 L790.5,26.8" stroke="#00d4a2" stroke-width="1" fill="none"/>
<line x1="615.5" y1="299.5" x2="615.5" y2="371.5" stroke="#00d4a2" stroke-width="1" />
<line x1="615.5" y1="371.5" x2="794" y2="371.5" stroke="#00d4a2" stroke-width="1" />
<path d="M620.0,308.0 L620.0,303.0 L622.1,308.0 L622.1,303.0 M624.0,303.0 L625.1,303.0 L625.6,303.8 L625.6,307.2 L625.1,308.0 L624.0,308.0 L623.5,307.2 L623.5,303.8 L624.0,303.0 M626.9,303.0 L629.1,303.0 M628.0,303.0 L628.0,308.0 M632.5,303.0 L630.4,303.0 L630.4,308.0 L632.5,308.0 M630.4,305.5 L632.0,305.5 M636.0,303.8 L635.5,303.0 L634.4,303.0 L633.9,303.8 L633.9,304.6 L634.4,305.5 L635.5,305.5 L636.0,306.3 L636.0,307.2 L635.5,308.0 L634.4,308.0 L633.9,307.2" stroke="#00d4a2" stroke-width="1" fill="none"/>
<path d="M620.2,313.8 L620.7,313.0 L620.7,318.0 M622.7,317.6 L622.7,318.0 M626.1,313.0 L627.6,313.0 L628.1,313.8 L628.1,314.6 L627.6,315.5 L626.1,315.5 M627.6,315.5 L628.1,316.3 L628.1,317.2 L627.6,318.0 L626.1,318.0 L626.1,313.0 M629.3,318.0 L629.3,314.6 L630.3,313.0 L631.3,314.6 L631.3,318.0 M629.3,315.9 L631.3,315.9 M634.6,313.8 L634.1,313.0 L633.1,313.0 L632.6,313.8 L632.6,314.6 L633.1,315.5 L634.1,315.5 L634.6,316.3 L634.6,317.2 L634.1,318.0 L633.1,318.0 L632.6,317.2 M636.0,313.0 L637.0,313.0 M636.5,313.0 L636.5,318.0 M636.0,318.0 L637.0,318.0 M640.0,313.8 L639.5,313.0 L638.5,313.0 L638.0,313.8 L638.0,317.2 L638.5,318.0 L639.5,318.0 L640.0,317.2 M643.7,313.0 L645.2,313.0 L645.7,313.8 L645.7,317.2 L645.2,318.0 L643.7,318.0 L643.7,313.0 M648.9,313.0 L646.9,313.0 L646.9,318.0 L648.9,318.0 M646.9,315.5 L648.4,315.5 M652.1,313.8 L651.6,313.0 L650.6,313.0 L650.1,313.8 L650.1,314.6 L650.6,315.5 L651.6,315.5 L652.1,316.3 L652.1,317.2 L651.6,318.0 L650.6,318.0 L650.1,317.2 M653.6,313.0 L654.6,313.0 M654.1,313.0 L654.1,318.0 M653.6,318.0 L654.6,318.0 M657.6,313.8 L657.1,313.0 L656.1,313.0 L655.6,313.8 L655.6,317.2 L656.1,318.0 L657.1,318.0 L657.6,317.2 L657.6,315.5 L656.6,315.5 M658.8,318.0 L658.8,313.0 L660.8,318.0 L660.8,313.0 M662.5,317.2 L662.3,318.8 M665.9,313.0 L667.9,313.0 M666.9,313.0 L666.9,318.0 M671.2,313.0 L669.2,313.0 L669.2,318.0 L671.2,318.0 M669.2,315.5 L670.7,315.5 M674.4,313.8 L673.9,313.0 L672.9,313.0 L672.4,313.8 L672.4,314.6 L672.9,315.5 L673.9,315.5 L674.4,316.3 L674.4,317.2 L673.9,318.0 L672.9,318.0 L672.4,317.2 M675.6,313.0 L677.6,313.0 M676.6,313.0 L676.6,318.0 M683.2,318.0 L681.7,314.6 L681.7,313.8 L682.2,313.0 L682.7,313.8 L682.7,314.6 L681.2,316.3 L681.2,317.2 L681.7,318.0 L682.2,318.0 L683.2,316.3 M687.1,313.0 L688.1,313.0 M687.6,313.0 L687.6,318.0 M687.1,318.0 L688.1,318.0 M689.1,318.0 L689.1,313.0 L691.1,318.0 L691.1,313.0 M694.4,313.8 L693.9,313.0 L692.9,313.0 L692.4,313.8 L692.4,314.6 L692.9,315.5 L693.9,315.5 L694.4,316.3 L694.4,317.2 L693.9,318.0 L692.9,318.0 L692.4,317.2 M695.6,318.0 L695.6,313.0 L697.1,313.0 L697.6,313.8 L697.6,314.6 L697.1,315.5 L695.6,315.5 M700.8,313.0 L698.8,313.0 L698.8,318.0 L700.8,318.0 M698.8,315.5 L700.3,315.5 M704.0,313.8 L703.5,313.0 L702.5,313.0 L702.0,313.8 L702.0,317.2 L702.5,318.0 L703.5,318.0 L704.0,317.2 M705.3,313.0 L707.2,313.0 M706.2,313.0 L706.2,318.0 M708.7,313.0 L709.7,313.0 M709.2,313.0 L709.2,318.0 M708.7,318.0 L709.7,318.0 M711.2,313.0 L712.2,313.0 L712.7,313.8 L712.7,317.2 L712.2,318.0 L711.2,318.0 L710.7,317.2 L710.7,313.8 L711.2,313.0 M714.0,318.0 L714.0,313.0 L716.0,318.0 L716.0,313.0 M720.1,314.2 L720.1,314.6 M720.1,316.7 L720.1,317.2 M723.6,318.0 L723.6,313.0 L724.6,315.5 L725.6,313.0 L725.6,318.0 M728.8,313.8 L728.3,313.0 L727.3,313.0 L726.8,313.8 L726.8,314.6 L727.3,315.5 L728.3,315.5 L728.8,316.3 L728.8,317.2 L728.3,318.0 L727.3,318.0 L726.8,317.2 M732.1,313.8 L731.6,313.0 L730.6,313.0 L730.1,313.8 L730.1,314.6 L730.6,315.5 L731.6,315.5 L732.1,316.3 L732.1,317.2 L731.6,318.0 L730.6,318.0 L730.1,317.2 M737.7,313.8 L737.2,313.0 L736.2,313.0 L735.7,313.8 L735.7,314.6 L736.2,315.5 L737.2,315.5 L737.7,316.3 L737.7,317.2 L737.2,318.0 L736.2,318.0 L735.7,317.2 M738.9,318.0 L738.9,313.0 L740.4,313.0 L740.9,313.8 L740.9,314.6 L740.4,315.5 L738.9,315.5 M742.4,315.5 L743.9,315.5 M745.9,313.0 L746.9,313.0 L747.4,313.8 L747.4,314.6 L746.9,315.5 L745.9,315.5 L745.4,316.3 L745.4,317.2 L745.9,318.0 L746.9,318.0 L747.4,317.2 L747.4,316.3 L746.9,315.5 M745.9,315.5 L745.4,314.6 L745.4,313.8 L745.9,313.0 M748.8,313.8 L749.3,313.0 L749.3,318.0" stroke="#00d4a2" stroke-width="1" fill="none"/>
<path d="M620.0,323.8 L620.5,323.0 L621.5,323.0 L622.0,323.8 L622.0,324.6 L620.0,328.0 L622.0,328.0 M623.7,327.6 L623.7,328.0 M629.3,323.0 L627.2,323.0 L627.2,328.0 M627.2,325.5 L628.8,325.5 M630.5,328.0 L630.5,324.6 L631.6,323.0 L632.6,324.6 L632.6,328.0 M630.5,325.9 L632.6,325.9 M635.9,323.8 L635.4,323.0 L634.3,323.0 L633.8,323.8 L633.8,327.2 L634.3,328.0 L635.4,328.0 L635.9,327.2 M639.2,323.0 L637.1,323.0 L637.1,328.0 L639.2,328.0 M637.1,325.5 L638.6,325.5 M642.9,323.0 L644.9,323.0 M643.9,323.0 L643.9,328.0 M646.7,323.0 L647.7,323.0 L648.2,323.8 L648.2,327.2 L647.7,328.0 L646.7,328.0 L646.2,327.2 L646.2,323.8 L646.7,323.0 M654.0,323.0 L651.9,323.0 L651.9,328.0 M651.9,325.5 L653.5,325.5 M655.2,328.0 L655.2,324.6 L656.2,323.0 L657.3,324.6 L657.3,328.0 M655.2,325.9 L657.3,325.9 M660.5,323.8 L660.0,323.0 L659.0,323.0 L658.5,323.8 L658.5,327.2 L659.0,328.0 L660.0,328.0 L660.5,327.2 M663.8,323.0 L661.8,323.0 L661.8,328.0 L663.8,328.0 M661.8,325.5 L663.3,325.5 M667.6,323.0 L669.1,323.0 L669.6,323.8 L669.6,327.2 L669.1,328.0 L667.6,328.0 L667.6,323.0 M671.0,323.0 L672.1,323.0 M671.6,323.0 L671.6,328.0 M671.0,328.0 L672.1,328.0 M673.1,328.0 L673.1,323.0 L674.2,325.5 L675.2,323.0 L675.2,328.0 M678.5,323.0 L676.4,323.0 L676.4,328.0 L678.5,328.0 M676.4,325.5 L678.0,325.5 M679.7,328.0 L679.7,323.0 L681.8,328.0 L681.8,323.0 M685.1,323.8 L684.5,323.0 L683.5,323.0 L683.0,323.8 L683.0,324.6 L683.5,325.5 L684.5,325.5 L685.1,326.3 L685.1,327.2 L684.5,328.0 L683.5,328.0 L683.0,327.2 M686.5,323.0 L687.5,323.0 M687.0,323.0 L687.0,328.0 M686.5,328.0 L687.5,328.0 M689.1,323.0 L690.1,323.0 L690.7,323.8 L690.7,327.2 L690.1,328.0 L689.1,328.0 L688.6,327.2 L688.6,323.8 L689.1,323.0 M691.9,328.0 L691.9,323.0 L693.9,328.0 L693.9,323.0 M697.2,323.8 L696.7,323.0 L695.7,323.0 L695.2,323.8 L695.2,324.6 L695.7,325.5 L696.7,325.5 L697.2,326.3 L697.2,327.2 L696.7,328.0 L695.7,328.0 L695.2,327.2 M701.5,324.2 L701.5,324.6 M701.5,326.7 L701.5,327.2 M705.1,328.0 L705.1,323.0 L706.1,325.5 L707.1,323.0 L707.1,328.0 M710.4,323.8 L709.9,323.0 L708.9,323.0 L708.4,323.8 L708.4,324.6 L708.9,325.5 L709.9,325.5 L710.4,326.3 L710.4,327.2 L709.9,328.0 L708.9,328.0 L708.4,327.2 M713.7,323.8 L713.2,323.0 L712.2,323.0 L711.6,323.8 L711.6,324.6 L712.2,325.5 L713.2,325.5 L713.7,326.3 L713.7,327.2 L713.2,328.0 L712.2,328.0 L711.6,327.2 M719.4,323.8 L718.9,323.0 L717.9,323.0 L717.4,323.8 L717.4,324.6 L717.9,325.5 L718.9,325.5 L719.4,326.3 L719.4,327.2 L718.9,328.0 L717.9,328.0 L717.4,327.2 M720.7,328.0 L720.7,323.0 L722.2,323.0 L722.7,323.8 L722.7,324.6 L722.2,325.5 L720.7,325.5 M724.2,325.5 L725.8,325.5 M727.8,323.0 L728.8,323.0 L729.3,323.8 L729.3,324.6 L728.8,325.5 L727.8,325.5 L727.3,326.3 L727.3,327.2 L727.8,328.0 L728.8,328.0 L729.3,327.2 L729.3,326.3 L728.8,325.5 M727.8,325.5 L727.3,324.6 L727.3,323.8 L727.8,323.0 M730.8,323.8 L731.3,323.0 L731.3,328.0" stroke="#00d4a2" stroke-width="1" fill="none"/>
<path d="M658.5,331.3 L656.5,333.8 L658.5,336.3 M659.7,336.3 L659.7,331.3 L660.7,333.8 L661.7,331.3 L661.7,336.3 M662.9,336.3 L662.9,332.9 L663.9,331.3 L664.9,332.9 L664.9,336.3 M662.9,334.2 L664.9,334.2 M666.1,336.3 L666.1,331.3 L668.1,336.3 L668.1,331.3 M669.3,331.3 L669.3,335.5 L669.8,336.3 L670.8,336.3 L671.3,335.5 L671.3,331.3 M674.5,331.3 L672.5,331.3 L672.5,336.3 M672.5,333.8 L674.0,333.8 M676.1,335.9 L676.1,336.3 M681.5,332.1 L681.0,331.3 L680.0,331.3 L679.5,332.1 L679.5,332.9 L680.0,333.8 L681.0,333.8 L681.5,334.6 L681.5,335.5 L681.0,336.3 L680.0,336.3 L679.5,335.5 M682.7,331.3 L684.7,331.3 M683.7,331.3 L683.7,336.3 M685.9,331.3 L687.4,331.3 L687.9,332.1 L687.9,335.5 L687.4,336.3 L685.9,336.3 L685.9,331.3 M689.5,335.9 L689.5,336.3 M690.5,331.3 L692.5,333.8 L690.5,336.3" stroke="#00d4a2" stroke-width="1" fill="none"/>
<path d="M620.0,341.8 L620.5,341.0 L621.5,341.0 L622.0,341.8 L622.0,342.6 L621.5,343.5 L621.0,343.5 M621.5,343.5 L622.0,344.3 L622.0,345.2 L621.5,346.0 L620.5,346.0 L620.0,345.2 M623.7,345.6 L623.7,346.0 M629.1,341.0 L627.1,341.0 L627.1,346.0 M627.1,343.5 L628.6,343.5 M630.3,341.0 L630.3,346.0 L632.3,346.0 M633.5,346.0 L633.5,342.6 L634.5,341.0 L635.5,342.6 L635.5,346.0 M633.5,343.9 L635.5,343.9 M636.7,346.0 L636.7,341.0 L638.7,346.0 L638.7,341.0 M642.0,341.8 L641.5,341.0 L640.5,341.0 L640.0,341.8 L640.0,345.2 L640.5,346.0 L641.5,346.0 L642.0,345.2 L642.0,343.5 L641.0,343.5 M645.2,341.0 L643.2,341.0 L643.2,346.0 L645.2,346.0 M643.2,343.5 L644.7,343.5 M648.8,341.0 L650.3,341.0 L650.8,341.8 L650.8,345.2 L650.3,346.0 L648.8,346.0 L648.8,341.0 M652.2,341.0 L653.2,341.0 M652.7,341.0 L652.7,346.0 M652.2,346.0 L653.2,346.0 M654.3,346.0 L654.3,341.0 L655.3,343.5 L656.3,341.0 L656.3,346.0 M659.5,341.0 L657.5,341.0 L657.5,346.0 L659.5,346.0 M657.5,343.5 L659.0,343.5 M660.7,346.0 L660.7,341.0 L662.7,346.0 L662.7,341.0 M666.0,341.8 L665.5,341.0 L664.5,341.0 L664.0,341.8 L664.0,342.6 L664.5,343.5 L665.5,343.5 L666.0,344.3 L666.0,345.2 L665.5,346.0 L664.5,346.0 L664.0,345.2 M667.4,341.0 L668.4,341.0 M667.9,341.0 L667.9,346.0 M667.4,346.0 L668.4,346.0 M669.9,341.0 L670.9,341.0 L671.4,341.8 L671.4,345.2 L670.9,346.0 L669.9,346.0 L669.4,345.2 L669.4,341.8 L669.9,341.0 M672.6,346.0 L672.6,341.0 L674.6,346.0 L674.6,341.0 M677.9,341.8 L677.4,341.0 L676.4,341.0 L675.9,341.8 L675.9,342.6 L676.4,343.5 L677.4,343.5 L677.9,344.3 L677.9,345.2 L677.4,346.0 L676.4,346.0 L675.9,345.2 M682.0,342.2 L682.0,342.6 M682.0,344.7 L682.0,345.2 M685.5,346.0 L685.5,342.6 L686.5,341.0 L687.5,342.6 L687.5,346.0 M685.5,343.9 L687.5,343.9 M688.8,346.0 L688.8,341.0 L690.7,346.0 L690.7,341.0 M694.0,341.8 L693.5,341.0 L692.5,341.0 L692.0,341.8 L692.0,342.6 L692.5,343.5 L693.5,343.5 L694.0,344.3 L694.0,345.2 L693.5,346.0 L692.5,346.0 L692.0,345.2 M695.4,341.0 L696.4,341.0 M695.9,341.0 L695.9,346.0 M695.4,346.0 L696.4,346.0 M699.9,341.0 L701.4,341.0 L701.9,341.8 L701.9,342.6 L701.4,343.5 L699.9,343.5 M701.4,343.5 L701.9,344.3 L701.9,345.2 L701.4,346.0 L699.9,346.0 L699.9,341.0 M703.3,341.8 L703.8,341.0 L703.8,346.0 M706.8,341.0 L705.8,341.0 L705.3,341.8 L705.3,345.2 L705.8,346.0 L706.8,346.0 L707.3,345.2 L707.3,344.3 L706.8,343.5 L705.3,343.5 M709.0,345.6 L709.0,346.0 M712.0,341.0 L710.0,341.0 L710.0,343.5 L711.5,343.5 L712.0,344.3 L712.0,345.2 L711.5,346.0 L710.5,346.0 L710.0,345.2" stroke="#00d4a2" stroke-width="1" fill="none"/>
<path d="M646.6,350.0 L644.5,352.5 L646.6,355.0 M647.9,350.0 L649.5,350.0 L650.0,350.8 L650.0,351.6 L649.5,352.5 L647.9,352.5 M649.5,352.5 L650.0,353.3 L650.0,354.2 L649.5,355.0 L647.9,355.0 L647.9,350.0 M651.3,350.0 L651.3,354.2 L651.9,355.0 L652.9,355.0 L653.5,354.2 L653.5,350.0 M654.8,350.0 L656.9,350.0 M655.8,350.0 L655.8,355.0 M658.7,354.2 L658.4,355.8 M664.4,350.8 L663.9,350.0 L662.8,350.0 L662.3,350.8 L662.3,351.6 L662.8,352.5 L663.9,352.5 L664.4,353.3 L664.4,354.2 L663.9,355.0 L662.8,355.0 L662.3,354.2 M665.9,350.0 L667.0,350.0 M666.5,350.0 L666.5,355.0 M665.9,355.0 L667.0,355.0 M668.1,350.0 L670.2,350.0 L668.1,355.0 L670.2,355.0 M673.7,350.0 L671.5,350.0 L671.5,355.0 L673.7,355.0 M671.5,352.5 L673.1,352.5 M677.1,350.8 L676.6,350.0 L675.5,350.0 L675.0,350.8 L675.0,351.6 L675.5,352.5 L676.6,352.5 L677.1,353.3 L677.1,354.2 L676.6,355.0 L675.5,355.0 L675.0,354.2 M681.0,350.8 L681.5,350.0 L682.5,350.0 L683.1,350.8 L683.1,351.6 L681.0,355.0 L683.1,355.0 M684.4,350.8 L684.9,350.0 L686.0,350.0 L686.5,350.8 L686.5,351.6 L684.4,355.0 L686.5,355.0 M688.3,350.0 L688.3,351.2 M689.4,350.0 L689.4,351.2 M695.9,355.0 L694.3,351.6 L694.3,350.8 L694.9,350.0 L695.4,350.8 L695.4,351.6 L693.8,353.3 L693.8,354.2 L694.3,355.0 L694.9,355.0 L695.9,353.3 M699.8,350.0 L699.8,355.0 L701.9,355.0 M703.2,355.0 L703.2,351.6 L704.3,350.0 L705.3,351.6 L705.3,355.0 M703.2,352.9 L705.3,352.9 M706.6,355.0 L706.6,350.0 L708.2,350.0 L708.7,350.8 L708.7,351.6 L708.2,352.5 L706.6,352.5 M707.7,352.5 L708.7,355.0 M712.2,350.8 L711.6,350.0 L710.6,350.0 L710.1,350.8 L710.1,354.2 L710.6,355.0 L711.6,355.0 L712.2,354.2 L712.2,352.5 L711.1,352.5 M715.6,350.0 L713.5,350.0 L713.5,355.0 L715.6,355.0 M713.5,352.5 L715.1,352.5 M716.9,355.0 L716.9,350.0 L718.5,350.0 L719.0,350.8 L719.0,351.6 L718.5,352.5 L716.9,352.5 M718.0,352.5 L719.0,355.0 M720.8,354.2 L720.5,355.8 M724.4,355.0 L724.4,350.0 L725.5,352.5 L726.5,350.0 L726.5,355.0 M730.0,350.8 L729.4,350.0 L728.4,350.0 L727.8,350.8 L727.8,351.6 L728.4,352.5 L729.4,352.5 L730.0,353.3 L730.0,354.2 L729.4,355.0 L728.4,355.0 L727.8,354.2 M733.4,350.8 L732.9,350.0 L731.8,350.0 L731.3,350.8 L731.3,351.6 L731.8,352.5 L732.9,352.5 L733.4,353.3 L733.4,354.2 L732.9,355.0 L731.8,355.0 L731.3,354.2 M739.4,350.8 L738.9,350.0 L737.8,350.0 L737.3,350.8 L737.3,351.6 L737.8,352.5 L738.9,352.5 L739.4,353.3 L739.4,354.2 L738.9,355.0 L737.8,355.0 L737.3,354.2 M740.7,355.0 L740.7,350.0 L742.3,350.0 L742.8,350.8 L742.8,351.6 L742.3,352.5 L740.7,352.5 M744.4,352.5 L746.0,352.5 M749.1,355.0 L749.1,350.0 L747.5,353.3 L749.7,353.3 M752.5,355.0 L752.5,350.0 L751.0,353.3 L753.1,353.3 M754.4,350.0 L756.5,352.5 L754.4,355.0" stroke="#00d4a2" stroke-width="1" fill="none"/>
<path d="M621.5,367.0 L621.5,362.0 L620.0,365.3 L622.0,365.3 M623.7,366.6 L623.7,367.0 M627.7,362.0 L628.7,362.0 L629.2,362.8 L629.2,366.2 L628.7,367.0 L627.7,367.0 L627.2,366.2 L627.2,362.8 L627.7,362.0 M630.4,362.0 L632.5,362.0 M631.5,362.0 L631.5,367.0 M633.7,362.0 L633.7,367.0 M635.7,362.0 L635.7,367.0 M633.7,364.5 L635.7,364.5 M639.0,362.0 L637.0,362.0 L637.0,367.0 L639.0,367.0 M637.0,364.5 L638.5,364.5 M640.2,367.0 L640.2,362.0 L641.8,362.0 L642.3,362.8 L642.3,363.6 L641.8,364.5 L640.2,364.5 M641.3,364.5 L642.3,367.0 M646.0,362.0 L647.5,362.0 L648.0,362.8 L648.0,366.2 L647.5,367.0 L646.0,367.0 L646.0,362.0 M649.4,362.0 L650.4,362.0 M649.9,362.0 L649.9,367.0 M649.4,367.0 L650.4,367.0 M651.5,367.0 L651.5,362.0 L652.5,364.5 L653.5,362.0 L653.5,367.0 M656.8,362.0 L654.8,362.0 L654.8,367.0 L656.8,367.0 M654.8,364.5 L656.3,364.5 M658.0,367.0 L658.0,362.0 L660.1,367.0 L660.1,362.0 M663.3,362.8 L662.8,362.0 L661.8,362.0 L661.3,362.8 L661.3,363.6 L661.8,364.5 L662.8,364.5 L663.3,365.3 L663.3,366.2 L662.8,367.0 L661.8,367.0 L661.3,366.2 M664.8,362.0 L665.8,362.0 M665.3,362.0 L665.3,367.0 M664.8,367.0 L665.8,367.0 M667.4,362.0 L668.4,362.0 L668.9,362.8 L668.9,366.2 L668.4,367.0 L667.4,367.0 L666.9,366.2 L666.9,362.8 L667.4,362.0 M670.1,367.0 L670.1,362.0 L672.2,367.0 L672.2,362.0 M675.4,362.8 L674.9,362.0 L673.9,362.0 L673.4,362.8 L673.4,363.6 L673.9,364.5 L674.9,364.5 L675.4,365.3 L675.4,366.2 L674.9,367.0 L673.9,367.0 L673.4,366.2 M679.6,363.2 L679.6,363.6 M679.6,365.7 L679.6,366.2 M683.2,367.0 L683.2,362.0 L684.2,364.5 L685.2,362.0 L685.2,367.0 M686.5,367.0 L686.5,363.6 L687.5,362.0 L688.5,363.6 L688.5,367.0 M686.5,364.9 L688.5,364.9 M689.7,362.0 L689.7,367.0 M691.7,362.0 L689.7,365.3 M690.5,364.5 L691.7,367.0 M695.0,362.0 L693.0,362.0 L693.0,367.0 L695.0,367.0 M693.0,364.5 L694.5,364.5 M696.3,367.0 L696.3,362.0 L697.8,362.0 L698.3,362.8 L698.3,363.6 L697.8,364.5 L696.3,364.5 M697.3,364.5 L698.3,367.0 M704.0,362.8 L703.5,362.0 L702.5,362.0 L702.0,362.8 L702.0,363.6 L702.5,364.5 L703.5,364.5 L704.0,365.3 L704.0,366.2 L703.5,367.0 L702.5,367.0 L702.0,366.2 M705.2,362.0 L707.3,362.0 M706.2,362.0 L706.2,367.0 M708.5,367.0 L708.5,363.6 L709.5,362.0 L710.5,363.6 L710.5,367.0 M708.5,364.9 L710.5,364.9 M711.8,367.0 L711.8,362.0 L713.8,367.0 L713.8,362.0 M715.0,362.0 L716.5,362.0 L717.1,362.8 L717.1,366.2 L716.5,367.0 L715.0,367.0 L715.0,362.0 M718.3,367.0 L718.3,363.6 L719.3,362.0 L720.3,363.6 L720.3,367.0 M718.3,364.9 L720.3,364.9 M721.6,367.0 L721.6,362.0 L723.1,362.0 L723.6,362.8 L723.6,363.6 L723.1,364.5 L721.6,364.5 M722.6,364.5 L723.6,367.0 M724.8,362.0 L726.3,362.0 L726.8,362.8 L726.8,366.2 L726.3,367.0 L724.8,367.0 L724.8,362.0 M728.5,366.6 L728.5,367.0" stroke="#00d4a2" stroke-width="1" fill="none"/>
<line x1="643.5" y1="382.5" x2="643.5" y2="538" stroke="#00d4a2" stroke-width="1" />
<line x1="643.5" y1="382.5" x2="794" y2="382.5" stroke="#00d4a2" stroke-width="1" />
<line x1="643.5" y1="411.5" x2="794" y2="411.5" stroke="#00d4a2" stroke-width="1" />
<line x1="643.5" y1="434.5" x2="794" y2="434.5" stroke="#00d4a2" stroke-width="1" />
<line x1="643.5" y1="441.5" x2="794" y2="441.5" stroke="#00d4a2" stroke-width="1" />
<line x1="643.5" y1="448.5" x2="794" y2="448.5" stroke="#00d4a2" stroke-width="1" />
<line x1="643.5" y1="456.5" x2="794" y2="456.5" stroke="#00d4a2" stroke-width="1" />
<line x1="643.5" y1="463.5" x2="794" y2="463.5" stroke="#00d4a2" stroke-width="1" />
<line x1="643.5" y1="489.5" x2="794" y2="489.5" stroke="#00d4a2" stroke-width="1" />
<line x1="643.5" y1="496.5" x2="794" y2="496.5" stroke="#00d4a2" stroke-width="1" />
<line x1="643.5" y1="504.5" x2="794" y2="504.5" stroke="#00d4a2" stroke-width="1" />
<line x1="733.5" y1="382.5" x2="733.5" y2="411.5" stroke="#00d4a2" stroke-width="1" />
<line x1="703.5" y1="434.5" x2="703.5" y2="448.5" stroke="#00d4a2" stroke-width="1" />
<line x1="747.5" y1="434.5" x2="747.5" y2="448.5" stroke="#00d4a2" stroke-width="1" />
<line x1="706.5" y1="489.5" x2="706.5" y2="504.5" stroke="#00d4a2" stroke-width="1" />
<line x1="741.5" y1="489.5" x2="741.5" y2="504.5" stroke="#00d4a2" stroke-width="1" />
<path d="M738.0,382.8 L738.0,385.5 M739.4,382.8 L738.0,384.6 M738.5,384.2 L739.4,385.5 M741.1,382.8 L741.7,382.8 L742.1,383.3 L742.1,385.1 L741.7,385.5 L741.1,385.5 L740.7,385.1 L740.7,383.3 L741.1,382.8 M743.4,385.5 L743.4,382.8 L744.5,382.8 L744.8,383.3 L744.8,383.7 L744.5,384.2 L743.4,384.2 M744.1,384.2 L744.8,385.5 M747.5,382.8 L746.2,382.8 L746.2,385.5 L747.5,385.5 M746.2,384.2 L747.2,384.2 M748.9,385.5 L748.9,383.7 L749.6,382.8 L750.2,383.7 L750.2,385.5 M748.9,384.4 L750.2,384.4 M753.7,382.8 L754.3,385.5 L755.0,382.8 M756.4,385.5 L756.4,383.7 L757.1,382.8 L757.7,383.7 L757.7,385.5 M756.4,384.4 L757.7,384.4 M759.1,382.8 L759.1,385.5 L760.5,385.5 M761.8,382.8 L762.5,385.5 L763.2,382.8 M765.9,382.8 L764.5,382.8 L764.5,385.5 L765.9,385.5 M764.5,384.2 L765.6,384.2 M770.7,383.3 L770.3,382.8 L769.6,382.8 L769.3,383.3 L769.3,385.1 L769.6,385.5 L770.3,385.5 L770.7,385.1 M772.4,382.8 L773.0,382.8 L773.4,383.3 L773.4,385.1 L773.0,385.5 L772.4,385.5 L772.0,385.1 L772.0,383.3 L772.4,382.8 M775.1,385.3 L775.1,385.5 M776.3,385.1 L776.1,385.9 M777.2,382.8 L777.2,385.5 L778.6,385.5 M779.9,382.8 L781.3,382.8 M780.6,382.8 L780.6,385.5 M782.6,382.8 L783.7,382.8 L784.0,383.3 L784.0,385.1 L783.7,385.5 L782.6,385.5 L782.6,382.8" stroke="#00d4a2" stroke-width="1" fill="none"/>
<path d="M738.2,388.8 L738.7,388.8 L738.9,389.3 L738.9,391.1 L738.7,391.5 L738.2,391.5 L738.0,391.1 L738.0,389.3 L738.2,388.8 M740.7,389.6 L739.8,389.6 L739.8,391.5 M739.8,390.6 L740.5,390.6 M742.5,389.6 L741.6,389.6 L741.6,391.5 M741.6,390.6 L742.3,390.6 M743.7,389.6 L744.1,389.6 M743.9,389.6 L743.9,391.5 M743.7,391.5 L744.1,391.5 M746.2,389.9 L746.0,389.6 L745.5,389.6 L745.3,389.9 L745.3,391.2 L745.5,391.5 L746.0,391.5 L746.2,391.2 M748.0,389.6 L747.1,389.6 L747.1,391.5 L748.0,391.5 M747.1,390.6 L747.8,390.6" stroke="#00d4a2" stroke-width="1" fill="none"/>
<path d="M738.0,396.5 L738.0,393.8 L738.6,393.8 L738.8,394.3 L738.8,394.7 L738.6,395.2 L738.0,395.2 M739.7,394.6 L739.7,396.2 L739.9,396.5 L740.3,396.5 L740.5,396.2 L740.5,394.6 M742.2,394.9 L742.0,394.6 L741.6,394.6 L741.4,394.9 L741.4,395.3 L741.6,395.6 L742.0,395.6 L742.2,395.9 L742.2,396.2 L742.0,396.5 L741.6,396.5 L741.4,396.2 M743.0,396.5 L743.0,395.3 L743.4,394.6 L743.9,395.3 L743.9,396.5 M743.0,395.7 L743.9,395.7 M744.7,396.5 L744.7,394.6 L745.5,396.5 L745.5,394.6 M746.4,393.8 L746.4,396.5 M747.2,393.8 L746.4,395.6 M746.7,395.2 L747.2,396.5 M748.3,394.6 L748.7,394.6 L748.9,394.9 L748.9,396.2 L748.7,396.5 L748.3,396.5 L748.1,396.2 L748.1,394.9 L748.3,394.6 M749.7,396.5 L749.7,394.6 L750.4,394.6 L750.6,394.9 L750.6,395.3 L750.4,395.6 L749.7,395.6 M750.2,395.6 L750.6,396.5 M752.2,394.6 L751.4,394.6 L751.4,396.5 L752.2,396.5 M751.4,395.6 L752.0,395.6 M753.1,396.5 L753.1,395.3 L753.5,394.6 L753.9,395.3 L753.9,396.5 M753.1,395.7 L753.9,395.7 M754.9,396.1 L754.8,396.9 M757.6,394.3 L757.4,393.8 L757.0,393.8 L756.8,394.3 L756.8,396.1 L757.0,396.5 L757.4,396.5 L757.6,396.1 M758.4,396.5 L758.4,393.8 L759.1,393.8 L759.3,394.3 L759.3,394.7 L759.1,395.2 L758.4,395.2 M758.9,395.2 L759.3,396.5 M760.3,396.3 L760.3,396.5 M762.8,393.8 L762.3,393.8 L762.1,394.3 L762.1,396.1 L762.3,396.5 L762.8,396.5 L763.0,396.1 L763.0,395.6 L762.8,395.2 L762.1,395.2 M763.8,393.8 L764.6,393.8 L764.0,396.5 M765.5,394.3 L765.7,393.8 L766.1,393.8 L766.3,394.3 L766.3,394.7 L765.5,396.5 L766.3,396.5 M767.8,396.5 L767.8,393.8 L767.2,395.6 L768.0,395.6" stroke="#00d4a2" stroke-width="1" fill="none"/>
<path d="M738.0,401.5 L738.0,398.8 L738.7,398.8 L739.0,399.3 L739.0,399.7 L738.7,400.2 L738.0,400.2 M740.0,399.6 L740.0,401.5 M741.0,399.6 L741.0,401.5 M740.0,400.6 L741.0,400.6 M742.2,399.6 L742.7,399.6 L743.0,399.9 L743.0,401.2 L742.7,401.5 L742.2,401.5 L742.0,401.2 L742.0,399.9 L742.2,399.6 M744.0,401.5 L744.0,399.6 L744.9,401.5 L744.9,399.6 M746.9,399.6 L745.9,399.6 L745.9,401.5 L746.9,401.5 M745.9,400.6 L746.7,400.6 M748.2,399.5 L748.2,399.7 M748.2,400.8 L748.2,401.1 M749.6,398.8 L749.1,399.7 L749.1,400.6 L749.6,401.5 M750.5,398.8 L751.0,398.8 L751.3,399.3 L751.3,401.1 L751.0,401.5 L750.5,401.5 L750.3,401.1 L750.3,399.3 L750.5,398.8 M753.3,398.8 L752.3,398.8 L752.3,400.2 L753.0,400.2 L753.3,400.6 L753.3,401.1 L753.0,401.5 L752.5,401.5 L752.3,401.1 M754.3,399.3 L754.5,398.8 L755.0,398.8 L755.3,399.3 L755.3,399.7 L754.3,401.5 L755.3,401.5 M756.2,398.8 L756.7,399.7 L756.7,400.6 L756.2,401.5 M759.1,399.3 L759.4,398.8 L759.9,398.8 L760.1,399.3 L760.1,399.7 L759.1,401.5 L760.1,401.5 M762.1,398.8 L761.1,398.8 L761.1,400.2 L761.9,400.2 L762.1,400.6 L762.1,401.1 L761.9,401.5 L761.4,401.5 L761.1,401.1 M763.1,398.8 L764.1,398.8 L763.3,401.5 M765.2,400.2 L765.9,400.2 M767.1,399.3 L767.3,398.8 L767.8,398.8 L768.0,399.3 L768.0,399.7 L767.8,400.2 L767.6,400.2 M767.8,400.2 L768.0,400.6 L768.0,401.1 L767.8,401.5 L767.3,401.5 L767.1,401.1 M769.0,399.3 L769.3,398.8 L769.8,398.8 L770.0,399.3 L770.0,399.7 L769.8,400.2 L769.5,400.2 M769.8,400.2 L770.0,400.6 L770.0,401.1 L769.8,401.5 L769.3,401.5 L769.0,401.1 M771.0,399.3 L771.3,398.8 L771.8,398.8 L772.0,399.3 L772.0,399.7 L771.8,400.2 L771.5,400.2 M771.8,400.2 L772.0,400.6 L772.0,401.1 L771.8,401.5 L771.3,401.5 L771.0,401.1 M773.0,399.3 L773.3,398.8 L773.8,398.8 L774.0,399.3 L774.0,399.7 L773.8,400.2 L773.5,400.2 M773.8,400.2 L774.0,400.6 L774.0,401.1 L773.8,401.5 L773.3,401.5 L773.0,401.1" stroke="#00d4a2" stroke-width="1" fill="none"/>
<path d="M738.9,404.3 L738.0,404.3 L738.0,407.0 M738.0,405.7 L738.7,405.7 M739.9,407.0 L739.9,405.8 L740.3,405.1 L740.8,405.8 L740.8,407.0 M739.9,406.2 L740.8,406.2 M741.7,405.2 L742.6,407.0 M742.6,405.2 L741.7,407.0 M743.8,405.0 L743.8,405.2 M743.8,406.3 L743.8,406.6 M745.2,404.3 L744.7,405.2 L744.7,406.1 L745.2,407.0 M746.0,404.3 L746.5,404.3 L746.7,404.8 L746.7,406.6 L746.5,407.0 L746.0,407.0 L745.8,406.6 L745.8,404.8 L746.0,404.3 M748.6,404.3 L747.7,404.3 L747.7,405.7 L748.4,405.7 L748.6,406.1 L748.6,406.6 L748.4,407.0 L747.9,407.0 L747.7,406.6 M749.5,404.8 L749.7,404.3 L750.2,404.3 L750.4,404.8 L750.4,405.2 L749.5,407.0 L750.4,407.0 M751.4,404.3 L751.8,405.2 L751.8,406.1 L751.4,407.0 M754.1,404.8 L754.3,404.3 L754.8,404.3 L755.0,404.8 L755.0,405.2 L754.1,407.0 L755.0,407.0 M756.9,404.3 L755.9,404.3 L755.9,405.7 L756.6,405.7 L756.9,406.1 L756.9,406.6 L756.6,407.0 L756.2,407.0 L755.9,406.6 M757.8,404.3 L758.7,404.3 L758.0,407.0 M759.8,405.7 L760.5,405.7 M762.2,407.0 L762.2,404.3 L761.5,406.1 L762.4,406.1 M764.3,404.3 L763.4,404.3 L763.4,405.7 L764.1,405.7 L764.3,406.1 L764.3,406.6 L764.1,407.0 L763.6,407.0 L763.4,406.6 M765.9,404.3 L765.4,404.3 L765.2,404.8 L765.2,406.6 L765.4,407.0 L765.9,407.0 L766.1,406.6 L766.1,406.1 L765.9,405.7 L765.2,405.7 M767.1,404.3 L768.0,404.3 L767.3,407.0" stroke="#00d4a2" stroke-width="1" fill="none"/>
<path d="M645.5,413.6 L646.7,413.6 M646.1,413.6 L646.1,416.3 M648.1,413.6 L648.7,413.6 M648.4,413.6 L648.4,416.3 M648.1,416.3 L648.7,416.3 M649.7,413.6 L650.9,413.6 M650.3,413.6 L650.3,416.3 M652.1,413.6 L652.1,416.3 L653.3,416.3 M655.8,413.6 L654.5,413.6 L654.5,416.3 L655.8,416.3 M654.5,415.0 L655.5,415.0 M658.8,413.6 L659.7,413.6 L660.0,414.1 L660.0,415.9 L659.7,416.3 L658.8,416.3 L658.8,413.6 M662.5,413.6 L661.2,413.6 L661.2,416.3 L662.5,416.3 M661.2,415.0 L662.2,415.0 M664.9,414.1 L664.6,413.6 L664.0,413.6 L663.7,414.1 L663.7,414.5 L664.0,415.0 L664.6,415.0 L664.9,415.4 L664.9,415.9 L664.6,416.3 L664.0,416.3 L663.7,415.9 M667.4,414.1 L667.0,413.6 L666.4,413.6 L666.1,414.1 L666.1,415.9 L666.4,416.3 L667.0,416.3 L667.4,415.9 M668.6,416.3 L668.6,413.6 L669.5,413.6 L669.8,414.1 L669.8,414.5 L669.5,415.0 L668.6,415.0 M669.2,415.0 L669.8,416.3 M671.1,413.6 L671.8,413.6 M671.4,413.6 L671.4,416.3 M671.1,416.3 L671.8,416.3 M672.7,416.3 L672.7,413.6 L673.6,413.6 L673.9,414.1 L673.9,414.5 L673.6,415.0 L672.7,415.0 M675.2,413.6 L676.4,413.6 M675.8,413.6 L675.8,416.3 M677.7,413.6 L678.3,413.6 M678.0,413.6 L678.0,416.3 M677.7,416.3 L678.3,416.3 M679.6,413.6 L680.2,413.6 L680.5,414.1 L680.5,415.9 L680.2,416.3 L679.6,416.3 L679.3,415.9 L679.3,414.1 L679.6,413.6 M681.8,416.3 L681.8,413.6 L683.0,416.3 L683.0,413.6 M686.0,414.1 L686.3,413.6 L687.0,413.6 L687.3,414.1 L687.3,414.5 L686.0,416.3 L687.3,416.3 M688.6,415.0 L689.5,415.0 M690.9,413.6 L691.8,413.6 L692.1,414.1 L692.1,415.9 L691.8,416.3 L690.9,416.3 L690.9,413.6 M693.4,416.3 L693.4,413.6 L694.3,413.6 L694.6,414.1 L694.6,414.5 L694.3,415.0 L693.4,415.0 M694.0,415.0 L694.6,416.3 M695.8,416.3 L695.8,414.5 L696.4,413.6 L697.0,414.5 L697.0,416.3 M695.8,415.2 L697.0,415.2 M698.2,413.6 L698.5,416.3 L698.9,414.5 L699.2,416.3 L699.5,413.6 M700.8,413.6 L701.4,413.6 M701.1,413.6 L701.1,416.3 M700.8,416.3 L701.4,416.3 M702.4,416.3 L702.4,413.6 L703.6,416.3 L703.6,413.6 M706.1,414.1 L705.8,413.6 L705.1,413.6 L704.8,414.1 L704.8,415.9 L705.1,416.3 L705.8,416.3 L706.1,415.9 L706.1,415.0 L705.4,415.0 M709.4,413.6 L710.0,413.6 L710.3,414.1 L710.3,415.9 L710.0,416.3 L709.4,416.3 L709.1,415.9 L709.1,414.1 L709.4,413.6 M712.8,413.6 L711.6,413.6 L711.6,416.3 M711.6,415.0 L712.5,415.0 M715.8,416.3 L715.8,413.6 L717.0,416.3 L717.0,413.6 M718.5,416.1 L718.5,416.3 M720.6,414.1 L720.3,413.6 L719.7,413.6 L719.4,414.1 L719.4,414.5 L719.7,415.0 L720.3,415.0 L720.6,415.4 L720.6,415.9 L720.3,416.3 L719.7,416.3 L719.4,415.9 M722.1,416.1 L722.1,416.3 M724.7,413.6 L724.7,416.3 M726.0,413.6 L724.7,415.4 M725.2,415.0 L726.0,416.3 M727.2,416.3 L727.2,413.6 L728.4,416.3 L728.4,413.6 M729.7,413.6 L730.4,413.6 M730.0,413.6 L730.0,416.3 M729.7,416.3 L730.4,416.3 M732.6,413.6 L731.3,413.6 L731.3,416.3 M731.3,415.0 L732.2,415.0 M735.0,413.6 L733.8,413.6 L733.8,416.3 L735.0,416.3 M733.8,415.0 L734.7,415.0 M739.3,414.1 L739.0,413.6 L738.4,413.6 L738.0,414.1 L738.0,415.9 L738.4,416.3 L739.0,416.3 L739.3,415.9 L739.3,415.0 L738.7,415.0 M740.5,416.3 L740.5,414.5 L741.1,413.6 L741.7,414.5 L741.7,416.3 M740.5,415.2 L741.7,415.2 M742.9,413.6 L744.2,413.6 M743.5,413.6 L743.5,416.3 M746.6,413.6 L745.4,413.6 L745.4,416.3 L746.6,416.3 M745.4,415.0 L746.3,415.0 M749.6,413.6 L750.3,416.3 L750.9,413.6 M752.1,416.3 L752.1,414.5 L752.7,413.6 L753.3,414.5 L753.3,416.3 M752.1,415.2 L753.3,415.2 M754.5,413.6 L754.5,416.3 L755.8,416.3 M757.0,413.6 L757.6,416.3 L758.2,413.6 M760.6,413.6 L759.4,413.6 L759.4,416.3 L760.6,416.3 M759.4,415.0 L760.3,415.0 M763.7,413.6 L764.0,416.3 L764.3,414.5 L764.6,416.3 L764.9,413.6 M766.3,413.6 L766.9,413.6 M766.6,413.6 L766.6,416.3 M766.3,416.3 L766.9,416.3 M767.8,413.6 L769.1,413.6 M768.4,413.6 L768.4,416.3 M770.3,413.6 L770.3,416.3 M771.5,413.6 L771.5,416.3 M770.3,415.0 L771.5,415.0" stroke="#00d4a2" stroke-width="1" fill="none"/>
<path d="M645.5,419.8 L646.0,422.5 L646.6,419.8 M647.8,421.2 L648.6,421.2 M649.8,422.5 L649.8,419.8 L650.6,419.8 L650.9,420.3 L650.9,420.7 L650.6,421.2 L649.8,421.2 M652.2,419.8 L652.8,419.8 L653.0,420.3 L653.0,422.1 L652.8,422.5 L652.2,422.5 L652.0,422.1 L652.0,420.3 L652.2,419.8 M654.1,422.5 L654.1,419.8 L654.9,419.8 L655.2,420.3 L655.2,420.7 L654.9,421.2 L654.1,421.2 M654.6,421.2 L655.2,422.5 M656.3,419.8 L657.3,419.8 M656.8,419.8 L656.8,422.5 M660.0,419.8 L660.8,419.8 L661.1,420.3 L661.1,420.7 L660.8,421.2 L660.0,421.2 M660.8,421.2 L661.1,421.6 L661.1,422.1 L660.8,422.5 L660.0,422.5 L660.0,419.8 M662.2,419.8 L662.7,421.2 L663.2,419.8 M662.7,421.2 L662.7,422.5 M665.9,422.5 L665.9,419.8 L667.0,422.5 L667.0,419.8 M668.3,422.3 L668.3,422.5 M670.1,420.3 L669.9,419.8 L669.3,419.8 L669.1,420.3 L669.1,420.7 L669.3,421.2 L669.9,421.2 L670.1,421.6 L670.1,422.1 L669.9,422.5 L669.3,422.5 L669.1,422.1 M671.2,419.8 L671.2,422.1 L671.5,422.5 L672.0,422.5 L672.3,422.1 L672.3,419.8 M673.4,422.5 L673.4,419.8 L674.2,419.8 L674.4,420.3 L674.4,420.7 L674.2,421.2 L673.4,421.2 M675.5,422.5 L675.5,419.8 L676.3,419.8 L676.6,420.3 L676.6,420.7 L676.3,421.2 L675.5,421.2 M677.7,419.8 L677.7,422.5 L678.7,422.5 M679.8,419.8 L680.3,421.2 L680.9,419.8 M680.3,421.2 L680.3,422.5 M685.7,419.8 L686.5,419.8 L686.8,420.3 L686.8,422.1 L686.5,422.5 L685.7,422.5 L685.7,419.8 M688.9,420.3 L688.7,419.8 L688.1,419.8 L687.9,420.3 L687.9,420.7 L688.1,421.2 L688.7,421.2 L688.9,421.6 L688.9,422.1 L688.7,422.5 L688.1,422.5 L687.9,422.1 M690.1,419.8 L690.7,419.8 M690.4,419.8 L690.4,422.5 M690.1,422.5 L690.7,422.5 M692.6,420.3 L692.3,419.8 L691.8,419.8 L691.5,420.3 L691.5,422.1 L691.8,422.5 L692.3,422.5 L692.6,422.1 L692.6,421.2 L692.1,421.2 M693.7,422.5 L693.7,419.8 L694.8,422.5 L694.8,419.8 M698.5,420.3 L698.2,419.8 L697.7,419.8 L697.4,420.3 L697.4,420.7 L697.7,421.2 L698.2,421.2 L698.5,421.6 L698.5,422.1 L698.2,422.5 L697.7,422.5 L697.4,422.1 M699.6,422.5 L699.6,419.8 L700.4,419.8 L700.7,420.3 L700.7,420.7 L700.4,421.2 L699.6,421.2 M701.9,421.2 L702.7,421.2 M704.2,419.8 L704.7,419.8 L705.0,420.3 L705.0,420.7 L704.7,421.2 L704.2,421.2 L703.9,421.6 L703.9,422.1 L704.2,422.5 L704.7,422.5 L705.0,422.1 L705.0,421.6 L704.7,421.2 M704.2,421.2 L703.9,420.7 L703.9,420.3 L704.2,419.8 M706.1,420.3 L706.4,419.8 L706.4,422.5 M711.3,422.5 L711.3,419.8 L711.8,421.2 L712.4,419.8 L712.4,422.5 M713.7,419.8 L714.3,419.8 L714.5,420.3 L714.5,422.1 L714.3,422.5 L713.7,422.5 L713.5,422.1 L713.5,420.3 L713.7,419.8 M716.7,420.3 L716.4,419.8 L715.9,419.8 L715.6,420.3 L715.6,422.1 L715.9,422.5 L716.4,422.5 L716.7,422.1 M717.9,421.2 L718.7,421.2 M719.9,420.3 L720.2,419.8 L720.7,419.8 L721.0,420.3 L721.0,420.7 L720.7,421.2 L720.5,421.2 M720.7,421.2 L721.0,421.6 L721.0,422.1 L720.7,422.5 L720.2,422.5 L719.9,422.1 M722.2,420.3 L722.4,419.8 L722.4,422.5 M724.4,419.8 L723.8,419.8 L723.6,420.3 L723.6,422.1 L723.8,422.5 L724.4,422.5 L724.6,422.1 L724.6,421.6 L724.4,421.2 L723.6,421.2 M728.4,420.3 L728.1,419.8 L727.6,419.8 L727.3,420.3 L727.3,420.7 L727.6,421.2 L728.1,421.2 L728.4,421.6 L728.4,422.1 L728.1,422.5 L727.6,422.5 L727.3,422.1 M730.6,420.3 L730.3,419.8 L729.8,419.8 L729.5,420.3 L729.5,420.7 L729.8,421.2 L730.3,421.2 L730.6,421.6 L730.6,422.1 L730.3,422.5 L729.8,422.5 L729.5,422.1 M733.2,422.5 L733.2,419.8 L734.1,419.8 L734.3,420.3 L734.3,420.7 L734.1,421.2 L733.2,421.2 M735.4,422.5 L735.4,420.7 L735.9,419.8 L736.5,420.7 L736.5,422.5 M735.4,421.4 L736.5,421.4 M737.6,422.5 L737.6,419.8 L738.4,419.8 L738.6,420.3 L738.6,420.7 L738.4,421.2 L737.6,421.2 M738.1,421.2 L738.6,422.5 M739.7,419.8 L740.8,419.8 M740.2,419.8 L740.2,422.5 M743.5,419.8 L744.5,419.8 M744.0,419.8 L744.0,422.5 M746.7,419.8 L745.6,419.8 L745.6,422.5 L746.7,422.5 M745.6,421.2 L746.4,421.2 M748.8,419.8 L747.8,422.5 M749.9,419.8 L751.0,419.8 M750.5,419.8 L750.5,422.5 M752.1,422.5 L752.1,419.8 L752.9,419.8 L753.1,420.3 L753.1,420.7 L752.9,421.2 L752.1,421.2 M752.6,421.2 L753.1,422.5 M754.3,419.8 L754.9,419.8 M754.6,419.8 L754.6,422.5 M754.3,422.5 L754.9,422.5 M755.7,422.5 L755.7,419.8 L756.3,421.2 L756.8,419.8 L756.8,422.5 M759.5,419.8 L759.8,422.5 L760.0,420.7 L760.3,422.5 L760.6,419.8 M761.7,419.8 L762.3,419.8 M762.0,419.8 L762.0,422.5 M761.7,422.5 L762.3,422.5 M763.1,419.8 L764.2,419.8 M763.7,419.8 L763.7,422.5 M765.3,419.8 L765.3,422.5 M766.4,419.8 L766.4,422.5 M765.3,421.2 L766.4,421.2 M770.1,420.3 L769.9,419.8 L769.3,419.8 L769.1,420.3 L769.1,420.7 L769.3,421.2 L769.9,421.2 L770.1,421.6 L770.1,422.1 L769.9,422.5 L769.3,422.5 L769.1,422.1 M772.3,420.3 L772.0,419.8 L771.5,419.8 L771.2,420.3 L771.2,420.7 L771.5,421.2 L772.0,421.2 L772.3,421.6 L772.3,422.1 L772.0,422.5 L771.5,422.5 L771.2,422.1 M776.0,420.3 L775.8,419.8 L775.2,419.8 L775.0,420.3 L775.0,420.7 L775.2,421.2 L775.8,421.2 L776.0,421.6 L776.0,422.1 L775.8,422.5 L775.2,422.5 L775.0,422.1 M778.2,419.8 L777.1,419.8 L777.1,422.5 L778.2,422.5 M777.1,421.2 L777.9,421.2 M779.3,422.5 L779.3,420.7 L779.8,419.8 L780.3,420.7 L780.3,422.5 M779.3,421.4 L780.3,421.4 M781.4,419.8 L782.5,419.8 M782.0,419.8 L782.0,422.5" stroke="#00d4a2" stroke-width="1" fill="none"/>
<path d="M645.5,428.5 L645.5,426.7 L646.1,425.8 L646.8,426.7 L646.8,428.5 M645.5,427.4 L646.8,427.4 M648.0,428.5 L648.0,425.8 L649.3,428.5 L649.3,425.8 M650.6,425.8 L651.5,425.8 L651.8,426.3 L651.8,428.1 L651.5,428.5 L650.6,428.5 L650.6,425.8 M656.3,425.8 L655.0,425.8 L655.0,428.5 L656.3,428.5 M655.0,427.2 L655.9,427.2 M657.5,425.8 L658.2,428.5 L658.8,425.8 M661.3,426.3 L661.0,425.8 L660.4,425.8 L660.0,426.3 L660.0,426.7 L660.4,427.2 L661.0,427.2 L661.3,427.6 L661.3,428.1 L661.0,428.5 L660.4,428.5 L660.0,428.1 M664.8,425.8 L665.4,425.8 L665.7,426.3 L665.7,428.1 L665.4,428.5 L664.8,428.5 L664.5,428.1 L664.5,426.3 L664.8,425.8 M667.0,428.5 L667.0,425.8 L668.0,425.8 L668.3,426.3 L668.3,426.7 L668.0,427.2 L667.0,427.2 M670.8,425.8 L669.5,425.8 L669.5,428.5 L670.8,428.5 M669.5,427.2 L670.5,427.2 M672.1,428.5 L672.1,425.8 L673.3,428.5 L673.3,425.8 M676.5,425.8 L676.8,428.5 L677.1,426.7 L677.4,428.5 L677.8,425.8 M680.3,425.8 L679.0,425.8 L679.0,428.5 L680.3,428.5 M679.0,427.2 L680.0,427.2 M681.6,425.8 L681.6,428.5 L682.8,428.5 M684.1,425.8 L685.0,425.8 L685.4,426.3 L685.4,428.1 L685.0,428.5 L684.1,428.5 L684.1,425.8 M687.9,425.8 L686.6,425.8 L686.6,428.5 L687.9,428.5 M686.6,427.2 L687.6,427.2 M689.1,425.8 L690.1,425.8 L690.4,426.3 L690.4,428.1 L690.1,428.5 L689.1,428.5 L689.1,425.8 M693.6,425.8 L694.5,425.8 L694.8,426.3 L694.8,426.7 L694.5,427.2 L693.6,427.2 M694.5,427.2 L694.8,427.6 L694.8,428.1 L694.5,428.5 L693.6,428.5 L693.6,425.8 M696.4,425.8 L697.1,425.8 L697.4,426.3 L697.4,428.1 L697.1,428.5 L696.4,428.5 L696.1,428.1 L696.1,426.3 L696.4,425.8 M698.6,425.8 L699.6,425.8 L699.9,426.3 L699.9,428.1 L699.6,428.5 L698.6,428.5 L698.6,425.8 M701.2,425.8 L701.8,427.2 L702.4,425.8 M701.8,427.2 L701.8,428.5 M706.2,425.8 L706.2,428.5 L707.5,428.5 M710.0,425.8 L708.8,425.8 L708.8,428.5 L710.0,428.5 M708.8,427.2 L709.7,427.2 M711.3,425.8 L711.9,428.5 L712.6,425.8 M715.1,425.8 L713.8,425.8 L713.8,428.5 L715.1,428.5 M713.8,427.2 L714.8,427.2 M716.3,425.8 L716.3,428.5 L717.6,428.5 M720.8,425.8 L721.1,428.5 L721.4,426.7 L721.7,428.5 L722.0,425.8 M723.4,425.8 L724.1,425.8 M723.7,425.8 L723.7,428.5 M723.4,428.5 L724.1,428.5 M725.1,425.8 L726.3,425.8 M725.7,425.8 L725.7,428.5 M727.6,425.8 L727.6,428.5 M728.9,425.8 L728.9,428.5 M727.6,427.2 L728.9,427.2 M732.7,425.8 L732.7,428.5 L733.9,428.5 M735.2,425.8 L735.2,428.1 L735.5,428.5 L736.1,428.5 L736.5,428.1 L736.5,425.8 M739.0,426.3 L738.7,425.8 L738.0,425.8 L737.7,426.3 L737.7,428.1 L738.0,428.5 L738.7,428.5 L739.0,428.1 L739.0,427.2 L738.4,427.2 M742.2,425.8 L743.4,425.8 M742.8,425.8 L742.8,428.5 M744.7,425.8 L745.3,427.2 L746.0,425.8 M745.3,427.2 L745.3,428.5 M747.2,428.5 L747.2,425.8 L748.2,425.8 L748.5,426.3 L748.5,426.7 L748.2,427.2 L747.2,427.2 M751.0,425.8 L749.7,425.8 L749.7,428.5 L751.0,428.5 M749.7,427.2 L750.7,427.2 M754.2,425.8 L755.1,425.8 L755.4,426.3 L755.4,428.1 L755.1,428.5 L754.2,428.5 L754.2,425.8 M756.7,425.8 L757.0,428.5 L757.3,426.7 L757.7,428.5 L758.0,425.8 M760.5,426.3 L760.2,425.8 L759.6,425.8 L759.2,426.3 L759.2,428.1 L759.6,428.5 L760.2,428.5 L760.5,428.1 L760.5,427.2 L759.9,427.2" stroke="#00d4a2" stroke-width="1" fill="none"/>
<path d="M645.5,434.1 L646.5,434.1 L646.9,434.6 L646.9,436.4 L646.5,436.8 L645.5,436.8 L645.5,434.1 M648.3,436.8 L648.3,435.0 L649.0,434.1 L649.7,435.0 L649.7,436.8 M648.3,435.7 L649.7,435.7 M651.0,434.1 L652.4,434.1 M651.7,434.1 L651.7,436.8 M655.2,434.1 L653.8,434.1 L653.8,436.8 L655.2,436.8 M653.8,435.5 L654.8,435.5 M659.0,434.8 L659.0,435.0 M659.0,436.1 L659.0,436.4 M662.5,434.1 L663.2,434.1 L663.5,434.6 L663.5,435.0 L663.2,435.5 L662.5,435.5 L662.1,435.9 L662.1,436.4 L662.5,436.8 L663.2,436.8 L663.5,436.4 L663.5,435.9 L663.2,435.5 M662.5,435.5 L662.1,435.0 L662.1,434.6 L662.5,434.1 M667.1,435.5 L668.2,435.5 M671.8,434.6 L672.2,434.1 L672.8,434.1 L673.2,434.6 L673.2,435.0 L671.8,436.8 L673.2,436.8 M674.9,434.1 L675.6,434.1 L676.0,434.6 L676.0,436.4 L675.6,436.8 L674.9,436.8 L674.6,436.4 L674.6,434.6 L674.9,434.1 M677.7,434.1 L678.4,434.1 L678.7,434.6 L678.7,436.4 L678.4,436.8 L677.7,436.8 L677.3,436.4 L677.3,434.6 L677.7,434.1 M680.5,434.1 L681.2,434.1 L681.5,434.6 L681.5,436.4 L681.2,436.8 L680.5,436.8 L680.1,436.4 L680.1,434.6 L680.5,434.1" stroke="#00d4a2" stroke-width="1" fill="none"/>
<path d="M706.0,437.1 L707.5,437.1 L708.0,437.6 L708.0,438.0 L707.5,438.5 L706.0,438.5 M707.5,438.5 L708.0,438.9 L708.0,439.4 L707.5,439.8 L706.0,439.8 L706.0,437.1 M710.0,437.1 L711.0,438.5 L712.0,437.1 M711.0,438.5 L711.0,439.8" stroke="#00d4a2" stroke-width="1" fill="none"/>
<path d="M750.0,437.1 L750.0,439.4 L750.4,439.8 L751.3,439.8 L751.7,439.4 L751.7,437.1 M753.4,439.8 L753.4,437.1 L755.0,439.8 L755.0,437.1 M756.9,437.1 L757.7,437.1 M757.3,437.1 L757.3,439.8 M756.9,439.8 L757.7,439.8 M759.1,437.1 L760.8,437.1 M759.9,437.1 L759.9,439.8 M764.1,437.6 L763.7,437.1 L762.9,437.1 L762.4,437.6 L762.4,438.0 L762.9,438.5 L763.7,438.5 L764.1,438.9 L764.1,439.4 L763.7,439.8 L762.9,439.8 L762.4,439.4 M768.7,437.8 L768.7,438.0 M768.7,439.1 L768.7,439.4 M772.7,437.1 L773.5,437.1 M773.1,437.1 L773.1,439.8 M772.7,439.8 L773.5,439.8 M774.9,439.8 L774.9,437.1 L776.6,439.8 L776.6,437.1 M779.9,437.6 L779.5,437.1 L778.7,437.1 L778.2,437.6 L778.2,439.4 L778.7,439.8 L779.5,439.8 L779.9,439.4 M781.6,437.1 L781.6,439.8 M783.3,437.1 L783.3,439.8 M781.6,438.5 L783.3,438.5 M786.6,437.1 L785.0,437.1 L785.0,439.8 L786.6,439.8 M785.0,438.5 L786.2,438.5 M790.0,437.6 L789.6,437.1 L788.7,437.1 L788.3,437.6 L788.3,438.0 L788.7,438.5 L789.6,438.5 L790.0,438.9 L790.0,439.4 L789.6,439.8 L788.7,439.8 L788.3,439.4" stroke="#00d4a2" stroke-width="1" fill="none"/>
<path d="M647.2,444.1 L646.8,443.6 L645.9,443.6 L645.5,444.1 L645.5,444.5 L645.9,445.0 L646.8,445.0 L647.2,445.4 L647.2,445.9 L646.8,446.3 L645.9,446.3 L645.5,445.9 M650.6,444.1 L650.2,443.6 L649.4,443.6 L648.9,444.1 L648.9,445.9 L649.4,446.3 L650.2,446.3 L650.6,445.9 M652.4,446.3 L652.4,444.5 L653.2,443.6 L654.1,444.5 L654.1,446.3 M652.4,445.2 L654.1,445.2 M655.8,443.6 L655.8,446.3 L657.5,446.3 M660.9,443.6 L659.2,443.6 L659.2,446.3 L660.9,446.3 M659.2,445.0 L660.5,445.0 M665.6,444.3 L665.6,444.5 M665.6,445.6 L665.6,445.9 M669.5,446.3 L669.5,443.6 L671.2,446.3 L671.2,443.6 M673.4,443.6 L674.2,443.6 L674.6,444.1 L674.6,445.9 L674.2,446.3 L673.4,446.3 L672.9,445.9 L672.9,444.1 L673.4,443.6 M676.4,446.3 L676.4,443.6 L678.1,446.3 L678.1,443.6 M681.5,443.6 L679.8,443.6 L679.8,446.3 L681.5,446.3 M679.8,445.0 L681.1,445.0" stroke="#00d4a2" stroke-width="1" fill="none"/>
<path d="M706.0,446.3 L706.0,444.5 L706.9,443.6 L707.8,444.5 L707.8,446.3 M706.0,445.2 L707.8,445.2 M709.5,446.3 L709.5,443.6 L710.9,443.6 L711.3,444.1 L711.3,444.5 L710.9,445.0 L709.5,445.0 M713.1,446.3 L713.1,443.6 L714.4,443.6 L714.9,444.1 L714.9,444.5 L714.4,445.0 L713.1,445.0 M717.0,443.6 L717.0,444.3 M718.2,443.6 L719.6,443.6 L720.0,444.1 L720.0,445.9 L719.6,446.3 L718.2,446.3 L718.2,443.6" stroke="#00d4a2" stroke-width="1" fill="none"/>
<path d="M750.0,446.3 L750.0,443.6 L751.2,443.6 L751.6,444.1 L751.6,444.5 L751.2,445.0 L750.0,445.0 M753.3,446.3 L753.3,444.5 L754.1,443.6 L754.9,444.5 L754.9,446.3 M753.3,445.2 L754.9,445.2 M758.2,444.1 L757.7,443.6 L756.9,443.6 L756.5,444.1 L756.5,445.9 L756.9,446.3 L757.7,446.3 L758.2,445.9 M759.8,443.6 L759.8,446.3 M761.4,443.6 L759.8,445.4 M760.4,445.0 L761.4,446.3 M763.2,443.6 L764.0,443.6 M763.6,443.6 L763.6,446.3 M763.2,446.3 L764.0,446.3 M765.3,446.3 L765.3,443.6 L767.0,446.3 L767.0,443.6 M770.2,444.1 L769.8,443.6 L769.0,443.6 L768.6,444.1 L768.6,445.9 L769.0,446.3 L769.8,446.3 L770.2,445.9 L770.2,445.0 L769.4,445.0 M774.7,444.3 L774.7,444.5 M774.7,445.6 L774.7,445.9 M778.6,445.0 L779.8,445.0" stroke="#00d4a2" stroke-width="1" fill="none"/>
<path d="M645.5,453.8 L645.5,451.1 L646.3,452.5 L647.1,451.1 L647.1,453.8 M649.1,451.1 L649.9,451.1 L650.3,451.6 L650.3,453.4 L649.9,453.8 L649.1,453.8 L648.7,453.4 L648.7,451.6 L649.1,451.1 M651.9,451.1 L653.1,451.1 L653.5,451.6 L653.5,453.4 L653.1,453.8 L651.9,453.8 L651.9,451.1 M656.7,451.1 L655.1,451.1 L655.1,453.8 L656.7,453.8 M655.1,452.5 L656.3,452.5 M658.2,451.1 L658.2,453.8 L659.8,453.8 M664.2,451.8 L664.2,452.0 M664.2,453.1 L664.2,453.4 M668.2,451.1 L669.0,451.1 L669.4,451.6 L669.4,452.0 L669.0,452.5 L668.2,452.5 L667.8,452.9 L667.8,453.4 L668.2,453.8 L669.0,453.8 L669.4,453.4 L669.4,452.9 L669.0,452.5 M668.2,452.5 L667.8,452.0 L667.8,451.6 L668.2,451.1 M671.2,452.5 L672.4,452.5 M674.2,451.6 L674.6,451.1 L675.4,451.1 L675.8,451.6 L675.8,452.0 L674.2,453.8 L675.8,453.8 M677.8,451.1 L678.6,451.1 L679.0,451.6 L679.0,453.4 L678.6,453.8 L677.8,453.8 L677.4,453.4 L677.4,451.6 L677.8,451.1 M680.9,451.1 L681.7,451.1 L682.1,451.6 L682.1,453.4 L681.7,453.8 L680.9,453.8 L680.5,453.4 L680.5,451.6 L680.9,451.1 M683.7,453.8 L683.7,451.1 L685.3,453.8 L685.3,451.1 M688.5,451.6 L688.1,451.1 L687.3,451.1 L686.9,451.6 L686.9,452.0 L687.3,452.5 L688.1,452.5 L688.5,452.9 L688.5,453.4 L688.1,453.8 L687.3,453.8 L686.9,453.4 M690.5,453.4 L690.3,454.2 M691.5,453.8 L691.5,451.9 L692.7,451.9 L693.1,452.2 L693.1,452.6 L692.7,452.9 L691.5,452.9 M694.7,453.8 L694.7,452.6 L695.5,451.9 L696.3,452.6 L696.3,453.8 M694.7,453.0 L696.3,453.0 M697.9,451.9 L699.1,451.9 L699.5,452.2 L699.5,453.5 L699.1,453.8 L697.9,453.8 L697.9,451.9" stroke="#00d4a2" stroke-width="1" fill="none"/>
<path d="M645.5,458.3 L646.8,458.3 L647.3,458.8 L647.3,460.6 L646.8,461.0 L645.5,461.0 L645.5,458.3 M649.0,458.3 L649.5,461.0 L649.9,459.2 L650.3,461.0 L650.8,458.3 M654.3,458.8 L653.9,458.3 L653.0,458.3 L652.5,458.8 L652.5,460.6 L653.0,461.0 L653.9,461.0 L654.3,460.6 L654.3,459.7 L653.4,459.7 M656.5,460.8 L656.5,461.0 M657.7,461.0 L657.7,458.3 L659.4,461.0 L659.4,458.3 M661.6,458.3 L662.5,458.3 L662.9,458.8 L662.9,460.6 L662.5,461.0 L661.6,461.0 L661.2,460.6 L661.2,458.8 L661.6,458.3 M665.1,460.8 L665.1,461.0" stroke="#00d4a2" stroke-width="1" fill="none"/>
<path d="M645.5,468.5 L645.5,465.8 L647.2,468.5 L647.2,465.8 M649.4,465.8 L650.3,465.8 L650.7,466.3 L650.7,468.1 L650.3,468.5 L649.4,468.5 L649.0,468.1 L649.0,466.3 L649.4,465.8 M652.5,465.8 L654.2,465.8 M653.4,465.8 L653.4,468.5 M657.7,465.8 L656.0,465.8 L656.0,468.5 L657.7,468.5 M656.0,467.2 L657.3,467.2 M661.2,466.3 L660.8,465.8 L659.9,465.8 L659.5,466.3 L659.5,466.7 L659.9,467.2 L660.8,467.2 L661.2,467.6 L661.2,468.1 L660.8,468.5 L659.9,468.5 L659.5,468.1 M666.0,466.5 L666.0,466.7 M666.0,467.8 L666.0,468.1 M670.0,465.8 L670.0,468.5 M671.7,465.8 L670.0,467.6 M670.6,467.2 L671.7,468.5 M673.7,467.2 L675.0,467.2 M676.9,468.5 L676.9,465.8 L678.2,465.8 L678.7,466.3 L678.7,466.7 L678.2,467.2 L676.9,467.2 M680.9,465.8 L681.7,465.8 L682.2,466.3 L682.2,468.1 L681.7,468.5 L680.9,468.5 L680.4,468.1 L680.4,466.3 L680.9,465.8 M683.9,468.5 L683.9,465.8 L685.2,465.8 L685.7,466.3 L685.7,466.7 L685.2,467.2 L683.9,467.2 M684.8,467.2 L685.7,468.5 M687.4,465.8 L689.2,465.8 M688.3,465.8 L688.3,468.5 M695.3,465.8 L693.5,465.8 L693.5,468.5 M693.5,467.2 L694.8,467.2 M697.0,468.5 L697.0,465.8 L698.3,465.8 L698.8,466.3 L698.8,466.7 L698.3,467.2 L697.0,467.2 M697.9,467.2 L698.8,468.5 M700.9,465.8 L701.8,465.8 L702.3,466.3 L702.3,468.1 L701.8,468.5 L700.9,468.5 L700.5,468.1 L700.5,466.3 L700.9,465.8 M704.0,468.5 L704.0,465.8 L704.9,467.2 L705.8,465.8 L705.8,468.5 M711.9,466.3 L711.4,465.8 L710.6,465.8 L710.1,466.3 L710.1,466.7 L710.6,467.2 L711.4,467.2 L711.9,467.6 L711.9,468.1 L711.4,468.5 L710.6,468.5 L710.1,468.1 M713.6,465.8 L713.6,468.5 L715.4,468.5 M717.3,465.8 L718.2,465.8 M717.7,465.8 L717.7,468.5 M717.3,468.5 L718.2,468.5 M719.5,465.8 L720.9,465.8 L721.3,466.3 L721.3,468.1 L720.9,468.5 L719.5,468.5 L719.5,465.8 M724.8,465.8 L723.0,465.8 L723.0,468.5 L724.8,468.5 M723.0,467.2 L724.4,467.2 M730.9,466.3 L730.5,465.8 L729.6,465.8 L729.2,466.3 L729.2,468.1 L729.6,468.5 L730.5,468.5 L730.9,468.1 L730.9,467.2 L730.0,467.2 M732.6,468.5 L732.6,466.7 L733.5,465.8 L734.4,466.7 L734.4,468.5 M732.6,467.4 L734.4,467.4 M736.1,465.8 L737.9,465.8 M737.0,465.8 L737.0,468.5 M741.4,465.8 L739.6,465.8 L739.6,468.5 L741.4,468.5 M739.6,467.2 L740.9,467.2 M745.7,465.8 L746.6,468.5 L747.5,465.8 M749.2,468.5 L749.2,466.7 L750.1,465.8 L751.0,466.7 L751.0,468.5 M749.2,467.4 L751.0,467.4 M752.7,465.8 L752.7,468.5 L754.5,468.5 M756.2,465.8 L757.1,468.5 L758.0,465.8 M761.5,465.8 L759.7,465.8 L759.7,468.5 L761.5,468.5 M759.7,467.2 L761.0,467.2 M763.6,468.1 L763.4,468.9 M764.8,466.3 L765.2,465.8 L766.1,465.8 L766.5,466.3 L766.5,466.7 L766.1,467.2 L765.7,467.2 M766.1,467.2 L766.5,467.6 L766.5,468.1 L766.1,468.5 L765.2,468.5 L764.8,468.1 M768.7,465.8 L769.6,465.8 L770.0,466.3 L770.0,468.1 L769.6,468.5 L768.7,468.5 L768.3,468.1 L768.3,466.3 L768.7,465.8 M772.2,465.8 L773.1,465.8 L773.5,466.3 L773.5,468.1 L773.1,468.5 L772.2,468.5 L771.8,468.1 L771.8,466.3 L772.2,465.8 M775.5,467.2 L776.8,467.2 M778.8,465.8 L780.1,465.8 L780.5,466.3 L780.5,466.7 L780.1,467.2 L778.8,467.2 M780.1,467.2 L780.5,467.6 L780.5,468.1 L780.1,468.5 L778.8,468.5 L778.8,465.8" stroke="#00d4a2" stroke-width="1" fill="none"/>
<path d="M645.7,472.3 L646.6,472.3 M646.1,472.3 L646.1,475.0 M645.7,475.0 L646.6,475.0 M648.0,472.3 L649.8,472.3 M648.9,472.3 L648.9,475.0 M653.4,472.3 L651.6,472.3 L651.6,475.0 L653.4,475.0 M651.6,473.7 L652.9,473.7 M655.1,475.0 L655.1,472.3 L656.0,473.7 L656.9,472.3 L656.9,475.0 M660.5,472.8 L660.1,472.3 L659.2,472.3 L658.7,472.8 L658.7,473.2 L659.2,473.7 L660.1,473.7 L660.5,474.1 L660.5,474.6 L660.1,475.0 L659.2,475.0 L658.7,474.6" stroke="#00d4a2" stroke-width="1" fill="none"/>
<path d="M647.0,490.5 L645.5,490.5 L645.5,493.2 M645.5,491.9 L646.6,491.9 M648.5,490.5 L649.3,490.5 M648.9,490.5 L648.9,493.2 M648.5,493.2 L649.3,493.2 M650.4,490.5 L650.4,493.2 L651.9,493.2 M654.8,490.5 L653.3,490.5 L653.3,493.2 L654.8,493.2 M653.3,491.9 L654.4,491.9 M658.8,491.2 L658.8,491.4 M658.8,492.5 L658.8,492.8 M662.0,490.5 L663.1,490.5 L663.5,491.0 L663.5,491.4 L663.1,491.9 L662.0,491.9 M663.1,491.9 L663.5,492.3 L663.5,492.8 L663.1,493.2 L662.0,493.2 L662.0,490.5 M665.1,491.9 L666.2,491.9 M667.8,491.0 L668.2,490.5 L668.9,490.5 L669.3,491.0 L669.3,491.4 L667.8,493.2 L669.3,493.2 M670.9,491.9 L672.0,491.9 M673.7,491.0 L674.0,490.5 L674.7,490.5 L675.1,491.0 L675.1,491.4 L673.7,493.2 L675.1,493.2 M676.9,490.5 L677.6,490.5 L678.0,491.0 L678.0,492.8 L677.6,493.2 L676.9,493.2 L676.6,492.8 L676.6,491.0 L676.9,490.5 M679.8,490.5 L680.5,490.5 L680.9,491.0 L680.9,492.8 L680.5,493.2 L679.8,493.2 L679.5,492.8 L679.5,491.0 L679.8,490.5 M684.5,493.2 L684.5,491.3 L685.6,491.3 L686.0,491.6 L686.0,492.0 L685.6,492.3 L684.5,492.3 M688.9,491.6 L688.5,491.3 L687.8,491.3 L687.4,491.6 L687.4,492.0 L687.8,492.3 L688.5,492.3 L688.9,492.6 L688.9,492.9 L688.5,493.2 L687.8,493.2 L687.4,492.9 M691.4,493.2 L691.4,490.5 L690.3,492.3 L691.8,492.3 M694.7,491.3 L693.2,491.3 L693.2,493.2 L694.7,493.2 M693.2,492.3 L694.3,492.3 M696.1,493.2 L696.1,491.3 L697.2,491.3 L697.6,491.6 L697.6,492.0 L697.2,492.3 L696.1,492.3 M696.9,492.3 L697.6,493.2 M699.0,491.3 L699.8,492.3 L700.5,491.3 M699.8,492.3 L699.8,493.2" stroke="#00d4a2" stroke-width="1" fill="none"/>
<path d="M709.0,493.2 L709.0,490.5 L710.5,490.5 L711.0,491.0 L711.0,491.4 L710.5,491.9 L709.0,491.9 M710.0,491.9 L711.0,493.2 M715.0,490.5 L713.0,490.5 L713.0,493.2 L715.0,493.2 M713.0,491.9 L714.5,491.9 M717.0,490.5 L718.0,493.2 L719.0,490.5" stroke="#00d4a2" stroke-width="1" fill="none"/>
<path d="M744.0,490.5 L745.3,490.5 L745.8,491.0 L745.8,492.8 L745.3,493.2 L744.0,493.2 L744.0,490.5 M748.0,490.5 L748.9,490.5 L749.3,491.0 L749.3,492.8 L748.9,493.2 L748.0,493.2 L747.5,492.8 L747.5,491.0 L748.0,490.5 M752.8,491.0 L752.4,490.5 L751.5,490.5 L751.1,491.0 L751.1,492.8 L751.5,493.2 L752.4,493.2 L752.8,492.8 M755.0,493.0 L755.0,493.2 M760.6,490.5 L758.8,490.5 L758.8,493.2 M758.8,491.9 L760.2,491.9 M762.8,490.5 L763.7,490.5 L764.1,491.0 L764.1,492.8 L763.7,493.2 L762.8,493.2 L762.4,492.8 L762.4,491.0 L762.8,490.5 M765.9,493.2 L765.9,490.5 L767.2,490.5 L767.7,491.0 L767.7,491.4 L767.2,491.9 L765.9,491.9 M766.8,491.9 L767.7,493.2 M772.1,490.5 L772.1,493.2 M773.9,490.5 L772.1,492.3 M772.8,491.9 L773.9,493.2 M776.1,490.5 L777.0,490.5 L777.4,491.0 L777.4,492.8 L777.0,493.2 L776.1,493.2 L775.6,492.8 L775.6,491.0 L776.1,490.5 M779.2,493.2 L779.2,490.5 L780.5,490.5 L780.9,491.0 L780.9,491.4 L780.5,491.9 L779.2,491.9 M780.0,491.9 L780.9,493.2 M784.5,490.5 L782.7,490.5 L782.7,493.2 L784.5,493.2 M782.7,491.9 L784.0,491.9 M786.2,493.2 L786.2,491.4 L787.1,490.5 L788.0,491.4 L788.0,493.2 M786.2,492.1 L788.0,492.1" stroke="#00d4a2" stroke-width="1" fill="none"/>
<path d="M645.5,500.8 L645.5,498.1 L647.0,498.1 L647.5,498.6 L647.5,499.0 L647.0,499.5 L645.5,499.5 M649.4,500.8 L649.4,498.1 L650.9,498.1 L651.4,498.6 L651.4,499.0 L650.9,499.5 L649.4,499.5 M650.4,499.5 L651.4,500.8 M653.5,498.1 L654.5,498.1 M654.0,498.1 L654.0,500.8 M653.5,500.8 L654.5,500.8 M656.1,500.8 L656.1,498.1 L658.0,500.8 L658.0,498.1 M660.0,498.1 L662.0,498.1 M661.0,498.1 L661.0,500.8 M665.9,498.1 L663.9,498.1 L663.9,500.8 L665.9,500.8 M663.9,499.5 L665.4,499.5 M667.9,498.1 L669.3,498.1 L669.8,498.6 L669.8,500.4 L669.3,500.8 L667.9,500.8 L667.9,498.1 M675.2,498.8 L675.2,499.0 M675.2,500.1 L675.2,500.4 M679.6,498.1 L679.6,500.8 M681.6,498.1 L679.6,499.9 M680.4,499.5 L681.6,500.8 M685.5,498.6 L685.0,498.1 L684.0,498.1 L683.5,498.6 L683.5,499.0 L684.0,499.5 L685.0,499.5 L685.5,499.9 L685.5,500.4 L685.0,500.8 L684.0,500.8 L683.5,500.4" stroke="#00d4a2" stroke-width="1" fill="none"/>
<path d="M710.1,498.6 L709.8,498.1 L709.3,498.1 L709.0,498.6 L709.0,499.0 L709.3,499.5 L709.8,499.5 L710.1,499.9 L710.1,500.4 L709.8,500.8 L709.3,500.8 L709.0,500.4 M711.3,498.1 L711.9,498.1 M711.6,498.1 L711.6,500.8 M711.3,500.8 L711.9,500.8 M712.8,498.1 L713.9,498.1 L712.8,500.8 L713.9,500.8 M716.1,498.1 L715.0,498.1 L715.0,500.8 L716.1,500.8 M715.0,499.5 L715.8,499.5 M719.2,498.8 L719.2,499.0 M719.2,500.1 L719.2,500.4 M721.7,500.8 L721.7,499.0 L722.2,498.1 L722.8,499.0 L722.8,500.8 M721.7,499.7 L722.8,499.7 M723.9,498.6 L724.2,498.1 L724.7,498.1 L725.0,498.6 L725.0,499.0 L724.7,499.5 L724.4,499.5 M724.7,499.5 L725.0,499.9 L725.0,500.4 L724.7,500.8 L724.2,500.8 L723.9,500.4" stroke="#00d4a2" stroke-width="1" fill="none"/>
<path d="M746.2,498.6 L745.7,498.1 L744.6,498.1 L744.0,498.6 L744.0,499.0 L744.6,499.5 L745.7,499.5 L746.2,499.9 L746.2,500.4 L745.7,500.8 L744.6,500.8 L744.0,500.4 M748.4,498.1 L748.4,500.8 M750.7,498.1 L750.7,500.8 M748.4,499.5 L750.7,499.5 M755.1,498.1 L752.9,498.1 L752.9,500.8 L755.1,500.8 M752.9,499.5 L754.6,499.5 M759.6,498.1 L757.3,498.1 L757.3,500.8 L759.6,500.8 M757.3,499.5 L759.0,499.5 M761.8,498.1 L764.0,498.1 M762.9,498.1 L762.9,500.8" stroke="#00d4a2" stroke-width="1" fill="none"/>
<path d="M646.5,505.6 L648.0,505.6 M647.2,505.6 L647.2,508.3 M649.4,505.6 L649.4,508.3 M650.9,505.6 L650.9,508.3 M649.4,507.0 L650.9,507.0 M652.5,505.6 L653.2,505.6 M652.8,505.6 L652.8,508.3 M652.5,508.3 L653.2,508.3 M655.8,506.1 L655.4,505.6 L654.7,505.6 L654.3,506.1 L654.3,506.5 L654.7,507.0 L655.4,507.0 L655.8,507.4 L655.8,507.9 L655.4,508.3 L654.7,508.3 L654.3,507.9 M659.4,505.6 L660.5,505.6 L660.9,506.1 L660.9,507.9 L660.5,508.3 L659.4,508.3 L659.4,505.6 M662.3,508.3 L662.3,505.6 L663.4,505.6 L663.8,506.1 L663.8,506.5 L663.4,507.0 L662.3,507.0 M663.1,507.0 L663.8,508.3 M665.2,508.3 L665.2,506.5 L666.0,505.6 L666.7,506.5 L666.7,508.3 M665.2,507.2 L666.7,507.2 M668.1,505.6 L668.5,508.3 L668.9,506.5 L669.2,508.3 L669.6,505.6 M671.2,505.6 L671.9,505.6 M671.5,505.6 L671.5,508.3 M671.2,508.3 L671.9,508.3 M673.1,508.3 L673.1,505.6 L674.5,508.3 L674.5,505.6 M677.4,506.1 L677.1,505.6 L676.3,505.6 L676.0,506.1 L676.0,507.9 L676.3,508.3 L677.1,508.3 L677.4,507.9 L677.4,507.0 L676.7,507.0 M682.5,506.1 L682.1,505.6 L681.4,505.6 L681.1,506.1 L681.1,507.9 L681.4,508.3 L682.1,508.3 L682.5,507.9 M684.3,505.6 L685.1,505.6 L685.4,506.1 L685.4,507.9 L685.1,508.3 L684.3,508.3 L684.0,507.9 L684.0,506.1 L684.3,505.6 M686.9,508.3 L686.9,505.6 L688.3,508.3 L688.3,505.6 M689.8,505.6 L691.2,505.6 M690.5,505.6 L690.5,508.3 M692.7,508.3 L692.7,506.5 L693.4,505.6 L694.1,506.5 L694.1,508.3 M692.7,507.2 L694.1,507.2 M695.7,505.6 L696.4,505.6 M696.1,505.6 L696.1,508.3 M695.7,508.3 L696.4,508.3 M697.6,508.3 L697.6,505.6 L699.1,508.3 L699.1,505.6 M702.0,506.1 L701.6,505.6 L700.9,505.6 L700.5,506.1 L700.5,506.5 L700.9,507.0 L701.6,507.0 L702.0,507.4 L702.0,507.9 L701.6,508.3 L700.9,508.3 L700.5,507.9 M707.0,506.1 L706.7,505.6 L706.0,505.6 L705.6,506.1 L705.6,507.9 L706.0,508.3 L706.7,508.3 L707.0,507.9 M708.9,505.6 L709.6,505.6 L710.0,506.1 L710.0,507.9 L709.6,508.3 L708.9,508.3 L708.5,507.9 L708.5,506.1 L708.9,505.6 M711.4,508.3 L711.4,505.6 L712.9,508.3 L712.9,505.6 M715.8,505.6 L714.3,505.6 L714.3,508.3 M714.3,507.0 L715.4,507.0 M717.4,505.6 L718.1,505.6 M717.7,505.6 L717.7,508.3 M717.4,508.3 L718.1,508.3 M719.2,505.6 L720.3,505.6 L720.7,506.1 L720.7,507.9 L720.3,508.3 L719.2,508.3 L719.2,505.6 M723.6,505.6 L722.1,505.6 L722.1,508.3 L723.6,508.3 M722.1,507.0 L723.2,507.0 M725.1,508.3 L725.1,505.6 L726.5,508.3 L726.5,505.6 M728.0,505.6 L729.4,505.6 M728.7,505.6 L728.7,508.3 M731.0,505.6 L731.7,505.6 M731.4,505.6 L731.4,508.3 M731.0,508.3 L731.7,508.3 M732.9,508.3 L732.9,506.5 L733.6,505.6 L734.3,506.5 L734.3,508.3 M732.9,507.2 L734.3,507.2 M735.8,505.6 L735.8,508.3 L737.2,508.3 M740.9,508.3 L740.9,505.6 L742.0,505.6 L742.3,506.1 L742.3,506.5 L742.0,507.0 L740.9,507.0 M743.8,508.3 L743.8,505.6 L744.9,505.6 L745.2,506.1 L745.2,506.5 L744.9,507.0 L743.8,507.0 M744.5,507.0 L745.2,508.3 M747.1,505.6 L747.8,505.6 L748.1,506.1 L748.1,507.9 L747.8,508.3 L747.1,508.3 L746.7,507.9 L746.7,506.1 L747.1,505.6 M749.6,508.3 L749.6,505.6 L750.7,505.6 L751.0,506.1 L751.0,506.5 L750.7,507.0 L749.6,507.0 M752.5,508.3 L752.5,505.6 L753.6,505.6 L753.9,506.1 L753.9,506.5 L753.6,507.0 L752.5,507.0 M753.2,507.0 L753.9,508.3 M755.5,505.6 L756.3,505.6 M755.9,505.6 L755.9,508.3 M755.5,508.3 L756.3,508.3 M758.9,505.6 L757.4,505.6 L757.4,508.3 L758.9,508.3 M757.4,507.0 L758.5,507.0 M760.3,505.6 L761.8,505.6 M761.1,505.6 L761.1,508.3 M763.2,508.3 L763.2,506.5 L764.0,505.6 L764.7,506.5 L764.7,508.3 M763.2,507.2 L764.7,507.2 M766.1,508.3 L766.1,505.6 L767.2,505.6 L767.6,506.1 L767.6,506.5 L767.2,507.0 L766.1,507.0 M766.9,507.0 L767.6,508.3 M769.0,505.6 L769.8,507.0 L770.5,505.6 M769.8,507.0 L769.8,508.3" stroke="#00d4a2" stroke-width="1" fill="none"/>
<path d="M646.6,510.6 L647.2,510.6 M646.9,510.6 L646.9,513.3 M646.6,513.3 L647.2,513.3 M648.2,513.3 L648.2,510.6 L649.4,513.3 L649.4,510.6 M651.7,510.6 L650.6,510.6 L650.6,513.3 M650.6,512.0 L651.4,512.0 M653.2,510.6 L653.8,510.6 L654.1,511.1 L654.1,512.9 L653.8,513.3 L653.2,513.3 L652.9,512.9 L652.9,511.1 L653.2,510.6 M655.3,513.3 L655.3,510.6 L656.2,510.6 L656.5,511.1 L656.5,511.5 L656.2,512.0 L655.3,512.0 M655.9,512.0 L656.5,513.3 M657.7,513.3 L657.7,510.6 L658.3,512.0 L658.9,510.6 L658.9,513.3 M660.1,513.3 L660.1,511.5 L660.7,510.6 L661.3,511.5 L661.3,513.3 M660.1,512.2 L661.3,512.2 M662.5,510.6 L663.7,510.6 M663.1,510.6 L663.1,513.3 M665.0,510.6 L665.6,510.6 M665.3,510.6 L665.3,513.3 M665.0,513.3 L665.6,513.3 M666.8,510.6 L667.4,510.6 L667.7,511.1 L667.7,512.9 L667.4,513.3 L666.8,513.3 L666.5,512.9 L666.5,511.1 L666.8,510.6 M668.9,513.3 L668.9,510.6 L670.1,513.3 L670.1,510.6 M673.4,510.6 L674.0,510.6 L674.3,511.1 L674.3,512.9 L674.0,513.3 L673.4,513.3 L673.1,512.9 L673.1,511.1 L673.4,510.6 M675.5,510.6 L675.8,513.3 L676.1,511.5 L676.4,513.3 L676.7,510.6 M677.9,513.3 L677.9,510.6 L679.0,513.3 L679.0,510.6 M681.4,510.6 L680.2,510.6 L680.2,513.3 L681.4,513.3 M680.2,512.0 L681.1,512.0 M682.6,510.6 L683.5,510.6 L683.8,511.1 L683.8,512.9 L683.5,513.3 L682.6,513.3 L682.6,510.6 M686.8,510.6 L687.7,510.6 L688.0,511.1 L688.0,511.5 L687.7,512.0 L686.8,512.0 M687.7,512.0 L688.0,512.4 L688.0,512.9 L687.7,513.3 L686.8,513.3 L686.8,510.6 M689.2,510.6 L689.8,512.0 L690.4,510.6 M689.8,512.0 L689.8,513.3 M693.4,510.6 L693.4,513.3 M694.5,510.6 L693.4,512.4 M693.8,512.0 L694.5,513.3 M696.0,510.6 L696.6,510.6 L696.9,511.1 L696.9,512.9 L696.6,513.3 L696.0,513.3 L695.7,512.9 L695.7,511.1 L696.0,510.6 M698.1,513.3 L698.1,510.6 L699.0,510.6 L699.3,511.1 L699.3,511.5 L699.0,512.0 L698.1,512.0 M698.7,512.0 L699.3,513.3 M701.7,510.6 L700.5,510.6 L700.5,513.3 L701.7,513.3 M700.5,512.0 L701.4,512.0 M702.9,513.3 L702.9,511.5 L703.5,510.6 L704.1,511.5 L704.1,513.3 M702.9,512.2 L704.1,512.2 M707.1,510.6 L707.7,513.3 L708.3,510.6 M709.5,513.3 L709.5,511.5 L710.0,510.6 L710.6,511.5 L710.6,513.3 M709.5,512.2 L710.6,512.2 M711.8,510.6 L711.8,513.3 L713.0,513.3 M714.2,510.6 L714.8,513.3 L715.4,510.6 M717.8,510.6 L716.6,510.6 L716.6,513.3 L717.8,513.3 M716.6,512.0 L717.5,512.0 M720.8,513.3 L720.8,511.5 L721.4,510.6 L722.0,511.5 L722.0,513.3 M720.8,512.2 L722.0,512.2 M723.2,513.3 L723.2,510.6 L724.4,513.3 L724.4,510.6 M725.5,510.6 L726.4,510.6 L726.7,511.1 L726.7,512.9 L726.4,513.3 L725.5,513.3 L725.5,510.6 M729.8,510.6 L730.4,510.6 M730.1,510.6 L730.1,513.3 M729.8,513.3 L730.4,513.3 M732.6,511.1 L732.3,510.6 L731.7,510.6 L731.4,511.1 L731.4,511.5 L731.7,512.0 L732.3,512.0 L732.6,512.4 L732.6,512.9 L732.3,513.3 L731.7,513.3 L731.4,512.9 M736.8,511.1 L736.5,510.6 L735.9,510.6 L735.6,511.1 L735.6,511.5 L735.9,512.0 L736.5,512.0 L736.8,512.4 L736.8,512.9 L736.5,513.3 L735.9,513.3 L735.6,512.9 M737.9,510.6 L737.9,512.9 L738.2,513.3 L738.8,513.3 L739.1,512.9 L739.1,510.6 M740.3,510.6 L741.2,510.6 L741.5,511.1 L741.5,511.5 L741.2,512.0 L740.3,512.0 M741.2,512.0 L741.5,512.4 L741.5,512.9 L741.2,513.3 L740.3,513.3 L740.3,510.6 M742.7,513.3 L742.7,510.6 L743.3,512.0 L743.9,510.6 L743.9,513.3 M745.2,510.6 L745.8,510.6 M745.5,510.6 L745.5,513.3 M745.2,513.3 L745.8,513.3 M746.8,510.6 L748.0,510.6 M747.4,510.6 L747.4,513.3 M749.2,510.6 L750.3,510.6 M749.8,510.6 L749.8,513.3 M752.7,510.6 L751.5,510.6 L751.5,513.3 L752.7,513.3 M751.5,512.0 L752.4,512.0 M753.9,510.6 L754.8,510.6 L755.1,511.1 L755.1,512.9 L754.8,513.3 L753.9,513.3 L753.9,510.6 M758.1,510.6 L759.3,510.6 M758.7,510.6 L758.7,513.3 M760.8,510.6 L761.4,510.6 L761.7,511.1 L761.7,512.9 L761.4,513.3 L760.8,513.3 L760.5,512.9 L760.5,511.1 L760.8,510.6 M764.7,510.6 L765.3,512.0 L765.8,510.6 M765.3,512.0 L765.3,513.3 M767.3,510.6 L767.9,510.6 L768.2,511.1 L768.2,512.9 L767.9,513.3 L767.3,513.3 L767.0,512.9 L767.0,511.1 L767.3,510.6 M769.4,510.6 L769.4,512.9 L769.7,513.3 L770.3,513.3 L770.6,512.9 L770.6,510.6 M774.8,510.6 L773.6,510.6 L773.6,513.3 M773.6,512.0 L774.5,512.0 M776.3,510.6 L776.9,510.6 L777.2,511.1 L777.2,512.9 L776.9,513.3 L776.3,513.3 L776.0,512.9 L776.0,511.1 L776.3,510.6 M778.4,513.3 L778.4,510.6 L779.3,510.6 L779.6,511.1 L779.6,511.5 L779.3,512.0 L778.4,512.0 M779.0,512.0 L779.6,513.3 M782.5,510.6 L783.7,510.6 M783.1,510.6 L783.1,513.3 M784.9,510.6 L784.9,513.3 M786.1,510.6 L786.1,513.3 M784.9,512.0 L786.1,512.0 M788.5,510.6 L787.3,510.6 L787.3,513.3 L788.5,513.3 M787.3,512.0 L788.2,512.0" stroke="#00d4a2" stroke-width="1" fill="none"/>
<path d="M646.5,515.6 L646.5,518.3 L647.9,518.3 M649.4,515.6 L650.1,515.6 M649.7,515.6 L649.7,518.3 M649.4,518.3 L650.1,518.3 M651.2,518.3 L651.2,515.6 L651.9,517.0 L652.6,515.6 L652.6,518.3 M654.1,515.6 L654.8,515.6 M654.4,515.6 L654.4,518.3 M654.1,518.3 L654.8,518.3 M655.9,515.6 L657.2,515.6 M656.5,515.6 L656.5,518.3 M660.0,515.6 L658.6,515.6 L658.6,518.3 L660.0,518.3 M658.6,517.0 L659.6,517.0 M661.4,515.6 L662.4,515.6 L662.7,516.1 L662.7,517.9 L662.4,518.3 L661.4,518.3 L661.4,515.6 M666.2,518.3 L666.2,515.6 L667.2,515.6 L667.6,516.1 L667.6,516.5 L667.2,517.0 L666.2,517.0 M668.9,515.6 L668.9,517.9 L669.3,518.3 L670.0,518.3 L670.3,517.9 L670.3,515.6 M671.7,518.3 L671.7,515.6 L672.7,515.6 L673.1,516.1 L673.1,516.5 L672.7,517.0 L671.7,517.0 M672.4,517.0 L673.1,518.3 M674.4,518.3 L674.4,515.6 L675.5,515.6 L675.8,516.1 L675.8,516.5 L675.5,517.0 L674.4,517.0 M677.5,515.6 L678.2,515.6 L678.6,516.1 L678.6,517.9 L678.2,518.3 L677.5,518.3 L677.2,517.9 L677.2,516.1 L677.5,515.6 M681.3,516.1 L681.0,515.6 L680.3,515.6 L679.9,516.1 L679.9,516.5 L680.3,517.0 L681.0,517.0 L681.3,517.4 L681.3,517.9 L681.0,518.3 L680.3,518.3 L679.9,517.9 M684.1,515.6 L682.7,515.6 L682.7,518.3 L684.1,518.3 M682.7,517.0 L683.7,517.0 M687.9,515.6 L688.5,515.6 L688.9,516.1 L688.9,517.9 L688.5,518.3 L687.9,518.3 L687.5,517.9 L687.5,516.1 L687.9,515.6 M691.6,515.6 L690.3,515.6 L690.3,518.3 M690.3,517.0 L691.3,517.0 M695.1,518.3 L695.1,515.6 L696.1,515.6 L696.5,516.1 L696.5,516.5 L696.1,517.0 L695.1,517.0 M695.8,517.0 L696.5,518.3 M699.2,515.6 L697.8,515.6 L697.8,518.3 L699.2,518.3 M697.8,517.0 L698.9,517.0 M700.6,515.6 L701.3,518.3 L702.0,515.6 M703.5,515.6 L704.2,515.6 M703.8,515.6 L703.8,518.3 M703.5,518.3 L704.2,518.3 M706.6,515.6 L705.3,515.6 L705.3,518.3 L706.6,518.3 M705.3,517.0 L706.3,517.0 M708.0,515.6 L708.4,518.3 L708.7,516.5 L709.1,518.3 L709.4,515.6 M710.9,515.6 L711.6,515.6 M711.3,515.6 L711.3,518.3 M710.9,518.3 L711.6,518.3 M712.7,518.3 L712.7,515.6 L714.1,518.3 L714.1,515.6 M716.8,516.1 L716.5,515.6 L715.8,515.6 L715.5,516.1 L715.5,517.9 L715.8,518.3 L716.5,518.3 L716.8,517.9 L716.8,517.0 L716.1,517.0 M720.3,515.6 L721.6,515.6 M721.0,515.6 L721.0,518.3 M723.0,515.6 L723.0,518.3 M724.4,515.6 L724.4,518.3 M723.0,517.0 L724.4,517.0 M727.2,515.6 L725.8,515.6 L725.8,518.3 L727.2,518.3 M725.8,517.0 L726.8,517.0 M730.7,515.6 L731.4,515.6 M731.1,515.6 L731.1,518.3 M730.7,518.3 L731.4,518.3 M732.5,518.3 L732.5,515.6 L733.9,518.3 L733.9,515.6 M736.6,515.6 L735.3,515.6 L735.3,518.3 M735.3,517.0 L736.3,517.0 M738.4,515.6 L739.1,515.6 L739.4,516.1 L739.4,517.9 L739.1,518.3 L738.4,518.3 L738.0,517.9 L738.0,516.1 L738.4,515.6 M740.8,518.3 L740.8,515.6 L741.8,515.6 L742.2,516.1 L742.2,516.5 L741.8,517.0 L740.8,517.0 M741.5,517.0 L742.2,518.3 M743.5,518.3 L743.5,515.6 L744.2,517.0 L744.9,515.6 L744.9,518.3 M746.3,518.3 L746.3,516.5 L747.0,515.6 L747.7,516.5 L747.7,518.3 M746.3,517.2 L747.7,517.2 M749.0,515.6 L750.4,515.6 M749.7,515.6 L749.7,518.3 M751.9,515.6 L752.6,515.6 M752.3,515.6 L752.3,518.3 M751.9,518.3 L752.6,518.3 M754.1,515.6 L754.7,515.6 L755.1,516.1 L755.1,517.9 L754.7,518.3 L754.1,518.3 L753.7,517.9 L753.7,516.1 L754.1,515.6 M756.5,518.3 L756.5,515.6 L757.8,518.3 L757.8,515.6 M761.6,515.6 L762.3,515.6 L762.7,516.1 L762.7,517.9 L762.3,518.3 L761.6,518.3 L761.3,517.9 L761.3,516.1 L761.6,515.6 M764.0,518.3 L764.0,515.6 L765.4,518.3 L765.4,515.6 M768.9,518.3 L768.9,515.6 L769.9,515.6 L770.2,516.1 L770.2,516.5 L769.9,517.0 L768.9,517.0 M771.6,518.3 L771.6,515.6 L772.6,515.6 L773.0,516.1 L773.0,516.5 L772.6,517.0 L771.6,517.0 M772.3,517.0 L773.0,518.3 M774.7,515.6 L775.4,515.6 L775.7,516.1 L775.7,517.9 L775.4,518.3 L774.7,518.3 L774.4,517.9 L774.4,516.1 L774.7,515.6 M777.1,515.6 L778.1,515.6 L778.5,516.1 L778.5,517.9 L778.1,518.3 L777.1,518.3 L777.1,515.6 M779.9,515.6 L779.9,517.9 L780.2,518.3 L780.9,518.3 L781.2,517.9 L781.2,515.6 M784.0,516.1 L783.7,515.6 L783.0,515.6 L782.6,516.1 L782.6,517.9 L783.0,518.3 L783.7,518.3 L784.0,517.9 M785.4,515.6 L786.7,515.6 M786.1,515.6 L786.1,518.3 M789.5,516.1 L789.2,515.6 L788.5,515.6 L788.1,516.1 L788.1,516.5 L788.5,517.0 L789.2,517.0 L789.5,517.4 L789.5,517.9 L789.2,518.3 L788.5,518.3 L788.1,517.9" stroke="#00d4a2" stroke-width="1" fill="none"/>
<path d="M646.5,523.3 L646.5,521.5 L647.1,520.6 L647.8,521.5 L647.8,523.3 M646.5,522.2 L647.8,522.2 M649.0,523.3 L649.0,520.6 L650.2,523.3 L650.2,520.6 M651.5,520.6 L652.4,520.6 L652.8,521.1 L652.8,522.9 L652.4,523.3 L651.5,523.3 L651.5,520.6 M657.1,521.1 L656.8,520.6 L656.2,520.6 L655.9,521.1 L655.9,521.5 L656.2,522.0 L656.8,522.0 L657.1,522.4 L657.1,522.9 L656.8,523.3 L656.2,523.3 L655.9,522.9 M659.6,520.6 L658.4,520.6 L658.4,523.3 L659.6,523.3 M658.4,522.0 L659.3,522.0 M660.9,523.3 L660.9,520.6 L661.8,520.6 L662.1,521.1 L662.1,521.5 L661.8,522.0 L660.9,522.0 M661.5,522.0 L662.1,523.3 M663.4,520.6 L664.0,523.3 L664.6,520.6 M666.0,520.6 L666.6,520.6 M666.3,520.6 L666.3,523.3 M666.0,523.3 L666.6,523.3 M668.9,521.1 L668.6,520.6 L667.9,520.6 L667.6,521.1 L667.6,522.9 L667.9,523.3 L668.6,523.3 L668.9,522.9 M671.4,520.6 L670.1,520.6 L670.1,523.3 L671.4,523.3 M670.1,522.0 L671.1,522.0 M673.9,521.1 L673.6,520.6 L672.9,520.6 L672.6,521.1 L672.6,521.5 L672.9,522.0 L673.6,522.0 L673.9,522.4 L673.9,522.9 L673.6,523.3 L672.9,523.3 L672.6,522.9 M677.0,523.3 L677.0,520.6 L677.9,520.6 L678.2,521.1 L678.2,521.5 L677.9,522.0 L677.0,522.0 M679.5,520.6 L679.5,522.9 L679.8,523.3 L680.4,523.3 L680.8,522.9 L680.8,520.6 M682.0,523.3 L682.0,520.6 L682.9,520.6 L683.2,521.1 L683.2,521.5 L682.9,522.0 L682.0,522.0 M682.6,522.0 L683.2,523.3 M685.8,521.1 L685.4,520.6 L684.8,520.6 L684.5,521.1 L684.5,522.9 L684.8,523.3 L685.4,523.3 L685.8,522.9 M687.0,520.6 L687.0,523.3 M688.2,520.6 L688.2,523.3 M687.0,522.0 L688.2,522.0 M689.5,523.3 L689.5,521.5 L690.1,520.6 L690.8,521.5 L690.8,523.3 M689.5,522.2 L690.8,522.2 M693.2,521.1 L692.9,520.6 L692.3,520.6 L692.0,521.1 L692.0,521.5 L692.3,522.0 L692.9,522.0 L693.2,522.4 L693.2,522.9 L692.9,523.3 L692.3,523.3 L692.0,522.9 M695.8,520.6 L694.5,520.6 L694.5,523.3 L695.8,523.3 M694.5,522.0 L695.4,522.0 M697.0,520.6 L697.9,520.6 L698.2,521.1 L698.2,522.9 L697.9,523.3 L697.0,523.3 L697.0,520.6 M702.6,520.6 L701.4,520.6 L701.4,523.3 M701.4,522.0 L702.3,522.0 M703.9,523.3 L703.9,520.6 L704.8,520.6 L705.1,521.1 L705.1,521.5 L704.8,522.0 L703.9,522.0 M704.5,522.0 L705.1,523.3 M706.7,520.6 L707.3,520.6 L707.6,521.1 L707.6,522.9 L707.3,523.3 L706.7,523.3 L706.4,522.9 L706.4,521.1 L706.7,520.6 M708.9,523.3 L708.9,520.6 L709.5,522.0 L710.1,520.6 L710.1,523.3 M713.2,523.3 L713.2,520.6 L713.9,522.0 L714.5,520.6 L714.5,523.3 M715.8,523.3 L715.8,521.5 L716.4,520.6 L717.0,521.5 L717.0,523.3 M715.8,522.2 L717.0,522.2 M718.2,523.3 L718.2,520.6 L719.5,523.3 L719.5,520.6 M720.8,520.6 L720.8,522.9 L721.1,523.3 L721.7,523.3 L722.0,522.9 L722.0,520.6 M724.5,520.6 L723.2,520.6 L723.2,523.3 M723.2,522.0 L724.2,522.0 M725.8,523.3 L725.8,521.5 L726.4,520.6 L727.0,521.5 L727.0,523.3 M725.8,522.2 L727.0,522.2 M729.5,521.1 L729.2,520.6 L728.6,520.6 L728.2,521.1 L728.2,522.9 L728.6,523.3 L729.2,523.3 L729.5,522.9 M730.8,520.6 L732.0,520.6 M731.4,520.6 L731.4,523.3 M733.2,520.6 L733.2,522.9 L733.6,523.3 L734.2,523.3 L734.5,522.9 L734.5,520.6 M735.8,523.3 L735.8,520.6 L736.7,520.6 L737.0,521.1 L737.0,521.5 L736.7,522.0 L735.8,522.0 M736.4,522.0 L737.0,523.3 M739.5,520.6 L738.2,520.6 L738.2,523.3 L739.5,523.3 M738.2,522.0 L739.2,522.0 M740.8,523.3 L740.8,520.6 L741.7,520.6 L742.0,521.1 L742.0,521.5 L741.7,522.0 L740.8,522.0 M741.4,522.0 L742.0,523.3 M743.5,523.1 L743.5,523.3 M746.2,520.6 L747.2,520.6 L747.5,521.1 L747.5,521.5 L747.2,522.0 L746.2,522.0 M747.2,522.0 L747.5,522.4 L747.5,522.9 L747.2,523.3 L746.2,523.3 L746.2,520.6 M748.8,520.6 L749.4,522.0 L750.0,520.6 M749.4,522.0 L749.4,523.3 M753.1,523.3 L753.1,520.6 L754.1,520.6 L754.4,521.1 L754.4,521.5 L754.1,522.0 L753.1,522.0 M753.8,522.0 L754.4,523.3 M756.9,520.6 L755.6,520.6 L755.6,523.3 L756.9,523.3 M755.6,522.0 L756.6,522.0 M759.4,521.1 L759.1,520.6 L758.4,520.6 L758.1,521.1 L758.1,522.9 L758.4,523.3 L759.1,523.3 L759.4,522.9 M761.9,520.6 L760.6,520.6 L760.6,523.3 L761.9,523.3 M760.6,522.0 L761.6,522.0 M763.2,520.6 L763.9,520.6 M763.6,520.6 L763.6,523.3 M763.2,523.3 L763.9,523.3 M764.9,523.3 L764.9,520.6 L765.8,520.6 L766.1,521.1 L766.1,521.5 L765.8,522.0 L764.9,522.0 M767.4,520.6 L768.6,520.6 M768.0,520.6 L768.0,523.3 M771.8,520.6 L771.8,523.3 M773.0,520.6 L773.0,523.3 M771.8,522.0 L773.0,522.0 M775.5,520.6 L774.2,520.6 L774.2,523.3 L775.5,523.3 M774.2,522.0 L775.2,522.0 M776.8,523.3 L776.8,520.6 L777.7,520.6 L778.0,521.1 L778.0,521.5 L777.7,522.0 L776.8,522.0 M777.4,522.0 L778.0,523.3 M780.5,520.6 L779.2,520.6 L779.2,523.3 L780.5,523.3 M779.2,522.0 L780.2,522.0 M782.1,520.6 L782.7,520.6 L783.0,521.1 L783.0,522.9 L782.7,523.3 L782.1,523.3 L781.8,522.9 L781.8,521.1 L782.1,520.6 M785.5,520.6 L784.2,520.6 L784.2,523.3 M784.2,522.0 L785.2,522.0" stroke="#00d4a2" stroke-width="1" fill="none"/>
<path d="M646.5,525.6 L647.4,527.0 L648.2,525.6 M647.4,527.0 L647.4,528.3 M650.3,525.6 L651.2,525.6 L651.6,526.1 L651.6,527.9 L651.2,528.3 L650.3,528.3 L649.9,527.9 L649.9,526.1 L650.3,525.6 M653.3,525.6 L653.3,527.9 L653.8,528.3 L654.6,528.3 L655.0,527.9 L655.0,525.6 M659.3,528.3 L659.3,526.5 L660.2,525.6 L661.0,526.5 L661.0,528.3 M659.3,527.2 L661.0,527.2 M664.4,526.1 L664.0,525.6 L663.2,525.6 L662.7,526.1 L662.7,527.9 L663.2,528.3 L664.0,528.3 L664.4,527.9 L664.4,527.0 L663.6,527.0 M666.1,528.3 L666.1,525.6 L667.4,525.6 L667.9,526.1 L667.9,526.5 L667.4,527.0 L666.1,527.0 M667.0,527.0 L667.9,528.3 M671.3,525.6 L669.6,525.6 L669.6,528.3 L671.3,528.3 M669.6,527.0 L670.8,527.0 M674.7,525.6 L673.0,525.6 L673.0,528.3 L674.7,528.3 M673.0,527.0 L674.3,527.0 M679.0,528.3 L679.0,525.6 L680.7,528.3 L680.7,525.6 M682.8,525.6 L683.7,525.6 L684.1,526.1 L684.1,527.9 L683.7,528.3 L682.8,528.3 L682.4,527.9 L682.4,526.1 L682.8,525.6 M685.8,525.6 L687.5,525.6 M686.6,525.6 L686.6,528.3 M691.8,525.6 L693.5,525.6 M692.6,525.6 L692.6,528.3 M695.6,525.6 L696.5,525.6 L696.9,526.1 L696.9,527.9 L696.5,528.3 L695.6,528.3 L695.2,527.9 L695.2,526.1 L695.6,525.6 M701.2,525.6 L702.5,525.6 L702.9,526.1 L702.9,527.9 L702.5,528.3 L701.2,528.3 L701.2,525.6 M704.8,525.6 L705.6,525.6 M705.2,525.6 L705.2,528.3 M704.8,528.3 L705.6,528.3 M708.7,526.1 L708.3,525.6 L707.4,525.6 L707.0,526.1 L707.0,526.5 L707.4,527.0 L708.3,527.0 L708.7,527.4 L708.7,527.9 L708.3,528.3 L707.4,528.3 L707.0,527.9 M712.1,526.1 L711.7,525.6 L710.8,525.6 L710.4,526.1 L710.4,527.9 L710.8,528.3 L711.7,528.3 L712.1,527.9 M713.8,525.6 L713.8,528.3 L715.5,528.3 M717.7,525.6 L718.5,525.6 L718.9,526.1 L718.9,527.9 L718.5,528.3 L717.7,528.3 L717.2,527.9 L717.2,526.1 L717.7,525.6 M722.4,526.1 L721.9,525.6 L721.1,525.6 L720.6,526.1 L720.6,526.5 L721.1,527.0 L721.9,527.0 L722.4,527.4 L722.4,527.9 L721.9,528.3 L721.1,528.3 L720.6,527.9 M725.8,525.6 L724.1,525.6 L724.1,528.3 L725.8,528.3 M724.1,527.0 L725.3,527.0 M731.8,526.1 L731.3,525.6 L730.5,525.6 L730.0,526.1 L730.0,526.5 L730.5,527.0 L731.3,527.0 L731.8,527.4 L731.8,527.9 L731.3,528.3 L730.5,528.3 L730.0,527.9 M733.5,525.6 L733.5,527.9 L733.9,528.3 L734.7,528.3 L735.2,527.9 L735.2,525.6 M738.6,526.1 L738.2,525.6 L737.3,525.6 L736.9,526.1 L736.9,527.9 L737.3,528.3 L738.2,528.3 L738.6,527.9 M740.3,525.6 L740.3,528.3 M742.0,525.6 L742.0,528.3 M740.3,527.0 L742.0,527.0 M746.4,525.6 L747.3,525.6 M746.9,525.6 L746.9,528.3 M746.4,528.3 L747.3,528.3 M748.7,528.3 L748.7,525.6 L750.4,528.3 L750.4,525.6 M753.8,525.6 L752.1,525.6 L752.1,528.3 M752.1,527.0 L753.4,527.0 M755.9,525.6 L756.8,525.6 L757.2,526.1 L757.2,527.9 L756.8,528.3 L755.9,528.3 L755.5,527.9 L755.5,526.1 L755.9,525.6 M758.9,528.3 L758.9,525.6 L760.2,525.6 L760.6,526.1 L760.6,526.5 L760.2,527.0 L758.9,527.0 M759.8,527.0 L760.6,528.3 M762.3,528.3 L762.3,525.6 L763.2,527.0 L764.0,525.6 L764.0,528.3 M765.8,528.3 L765.8,526.5 L766.6,525.6 L767.5,526.5 L767.5,528.3 M765.8,527.2 L767.5,527.2 M769.2,525.6 L770.9,525.6 M770.0,525.6 L770.0,528.3 M772.8,525.6 L773.6,525.6 M773.2,525.6 L773.2,528.3 M772.8,528.3 L773.6,528.3 M775.4,525.6 L776.3,525.6 L776.7,526.1 L776.7,527.9 L776.3,528.3 L775.4,528.3 L775.0,527.9 L775.0,526.1 L775.4,525.6 M778.4,528.3 L778.4,525.6 L780.1,528.3 L780.1,525.6 M784.4,525.6 L786.1,525.6 M785.2,525.6 L785.2,528.3 M788.2,525.6 L789.1,525.6 L789.5,526.1 L789.5,527.9 L789.1,528.3 L788.2,528.3 L787.8,527.9 L787.8,526.1 L788.2,525.6" stroke="#00d4a2" stroke-width="1" fill="none"/>
<path d="M646.9,530.6 L647.8,530.6 L648.2,531.1 L648.2,532.9 L647.8,533.3 L646.9,533.3 L646.5,532.9 L646.5,531.1 L646.9,530.6 M649.9,530.6 L651.6,530.6 M650.8,530.6 L650.8,533.3 M653.3,530.6 L653.3,533.3 M655.0,530.6 L655.0,533.3 M653.3,532.0 L655.0,532.0 M658.4,530.6 L656.7,530.6 L656.7,533.3 L658.4,533.3 M656.7,532.0 L658.0,532.0 M660.1,533.3 L660.1,530.6 L661.4,530.6 L661.8,531.1 L661.8,531.5 L661.4,532.0 L660.1,532.0 M661.0,532.0 L661.8,533.3 M665.2,531.1 L664.8,530.6 L663.9,530.6 L663.5,531.1 L663.5,531.5 L663.9,532.0 L664.8,532.0 L665.2,532.4 L665.2,532.9 L664.8,533.3 L663.9,533.3 L663.5,532.9 M669.5,533.3 L669.5,531.5 L670.3,530.6 L671.2,531.5 L671.2,533.3 M669.5,532.2 L671.2,532.2 M672.9,533.3 L672.9,530.6 L674.6,533.3 L674.6,530.6 M676.3,530.6 L677.6,530.6 L678.0,531.1 L678.0,532.9 L677.6,533.3 L676.3,533.3 L676.3,530.6 M682.2,533.3 L682.2,530.6 L683.5,530.6 L683.9,531.1 L683.9,531.5 L683.5,532.0 L682.2,532.0 M683.1,532.0 L683.9,533.3 M687.3,530.6 L685.6,530.6 L685.6,533.3 L687.3,533.3 M685.6,532.0 L686.9,532.0 M689.0,530.6 L690.7,530.6 M689.9,530.6 L689.9,533.3 M692.4,530.6 L692.4,532.9 L692.9,533.3 L693.7,533.3 L694.1,532.9 L694.1,530.6 M695.8,533.3 L695.8,530.6 L697.1,530.6 L697.5,531.1 L697.5,531.5 L697.1,532.0 L695.8,532.0 M696.7,532.0 L697.5,533.3 M699.2,533.3 L699.2,530.6 L700.9,533.3 L700.9,530.6 M705.2,530.6 L706.5,530.6 L706.9,531.1 L706.9,532.9 L706.5,533.3 L705.2,533.3 L705.2,530.6 M708.6,533.3 L708.6,530.6 L709.9,530.6 L710.3,531.1 L710.3,531.5 L709.9,532.0 L708.6,532.0 M709.5,532.0 L710.3,533.3 M712.0,533.3 L712.0,531.5 L712.9,530.6 L713.7,531.5 L713.7,533.3 M712.0,532.2 L713.7,532.2 M715.4,530.6 L715.8,533.3 L716.3,531.5 L716.7,533.3 L717.1,530.6 M719.0,530.6 L719.8,530.6 M719.4,530.6 L719.4,533.3 M719.0,533.3 L719.8,533.3 M721.2,533.3 L721.2,530.6 L722.9,533.3 L722.9,530.6 M726.3,531.1 L725.9,530.6 L725.0,530.6 L724.6,531.1 L724.6,532.9 L725.0,533.3 L725.9,533.3 L726.3,532.9 L726.3,532.0 L725.5,532.0 M731.0,530.6 L731.8,530.6 L732.3,531.1 L732.3,532.9 L731.8,533.3 L731.0,533.3 L730.6,532.9 L730.6,531.1 L731.0,530.6 M734.0,533.3 L734.0,530.6 L735.7,533.3 L735.7,530.6 M739.9,533.3 L739.9,530.6 L741.2,530.6 L741.6,531.1 L741.6,531.5 L741.2,532.0 L739.9,532.0 M740.8,532.0 L741.6,533.3 M745.0,530.6 L743.3,530.6 L743.3,533.3 L745.0,533.3 M743.3,532.0 L744.6,532.0 M747.1,530.6 L748.0,530.6 L748.4,531.1 L748.4,532.9 L748.0,533.3 L747.1,533.3 L746.7,532.9 L746.7,531.1 L747.1,530.6 M747.6,532.4 L748.4,533.3 M750.1,530.6 L750.1,532.9 L750.5,533.3 L751.4,533.3 L751.8,532.9 L751.8,530.6 M755.2,530.6 L753.5,530.6 L753.5,533.3 L755.2,533.3 M753.5,532.0 L754.8,532.0 M758.6,531.1 L758.2,530.6 L757.4,530.6 L756.9,531.1 L756.9,531.5 L757.4,532.0 L758.2,532.0 L758.6,532.4 L758.6,532.9 L758.2,533.3 L757.4,533.3 L756.9,532.9 M760.3,530.6 L762.0,530.6 M761.2,530.6 L761.2,533.3 M764.1,533.1 L764.1,533.3" stroke="#00d4a2" stroke-width="1" fill="none"/>
<path d="M743.0,544.0 L743.0,541.0 L744.3,539.5 L745.5,541.0 L745.5,544.0 M743.0,542.1 L745.5,542.1 M747.0,540.3 L747.7,539.5 L748.9,539.5 L749.5,540.3 L749.5,541.0 L748.9,541.8 L748.3,541.8 M748.9,541.8 L749.5,542.5 L749.5,543.3 L748.9,544.0 L747.7,544.0 L747.0,543.3 M752.9,539.5 L751.6,541.0 L751.6,542.5 L752.9,544.0 M755.8,544.0 L755.8,539.5 L753.9,542.5 L756.4,542.5 M757.9,540.3 L758.6,539.5 L759.8,539.5 L760.4,540.3 L760.4,541.0 L757.9,544.0 L760.4,544.0 M762.6,539.5 L763.9,539.5 L764.5,540.3 L764.5,543.3 L763.9,544.0 L762.6,544.0 L762.0,543.3 L762.0,540.3 L762.6,539.5 M766.0,541.0 L768.5,544.0 M768.5,541.0 L766.0,544.0 M770.1,540.3 L770.7,539.5 L771.9,539.5 L772.6,540.3 L772.6,541.0 L770.1,544.0 L772.6,544.0 M776.6,541.8 L774.7,541.8 L774.1,541.0 L774.1,540.3 L774.7,539.5 L776.0,539.5 L776.6,540.3 L776.6,543.3 L776.0,544.0 L774.7,544.0 M778.1,539.5 L780.6,539.5 L778.8,544.0 M782.2,544.0 L782.2,540.9 L783.4,542.4 L784.7,540.9 L784.7,544.0 M786.2,544.0 L786.2,540.9 L787.5,542.4 L788.7,540.9 L788.7,544.0 M790.2,539.5 L791.4,541.0 L791.4,542.5 L790.2,544.0" stroke="#00d4a2" stroke-width="1" fill="none"/>
<line x1="101.5" y1="415.5" x2="101.5" y2="537" stroke="#00d4a2" stroke-width="1" />
<line x1="140.5" y1="415.5" x2="140.5" y2="537" stroke="#00d4a2" stroke-width="1" />
<line x1="186.5" y1="415.5" x2="186.5" y2="537" stroke="#00d4a2" stroke-width="1" />
<line x1="227.5" y1="415.5" x2="227.5" y2="537" stroke="#00d4a2" stroke-width="1" />
<line x1="271.5" y1="415.5" x2="271.5" y2="537" stroke="#00d4a2" stroke-width="1" />
<line x1="318.5" y1="415.5" x2="318.5" y2="537" stroke="#00d4a2" stroke-width="1" />
<line x1="370.5" y1="415.5" x2="370.5" y2="537" stroke="#00d4a2" stroke-width="1" />
<line x1="412.5" y1="415.5" x2="412.5" y2="537" stroke="#00d4a2" stroke-width="1" />
<line x1="442.5" y1="415.5" x2="442.5" y2="537" stroke="#00d4a2" stroke-width="1" />
<line x1="480.5" y1="415.5" x2="480.5" y2="537" stroke="#00d4a2" stroke-width="1" />
<line x1="519.5" y1="415.5" x2="519.5" y2="537" stroke="#00d4a2" stroke-width="1" />
<line x1="101.5" y1="415.5" x2="519.5" y2="415.5" stroke="#00d4a2" stroke-width="1" />
<line x1="101.5" y1="425.5" x2="519.5" y2="425.5" stroke="#00d4a2" stroke-width="1" />
<line x1="101.5" y1="436.5" x2="519.5" y2="436.5" stroke="#00d4a2" stroke-width="1" />
<line x1="101.5" y1="446.5" x2="519.5" y2="446.5" stroke="#00d4a2" stroke-width="1" />
<line x1="101.5" y1="456.5" x2="519.5" y2="456.5" stroke="#00d4a2" stroke-width="1" />
<line x1="101.5" y1="466.5" x2="519.5" y2="466.5" stroke="#00d4a2" stroke-width="1" />
<line x1="101.5" y1="476.5" x2="519.5" y2="476.5" stroke="#00d4a2" stroke-width="1" />
<line x1="101.5" y1="486.5" x2="519.5" y2="486.5" stroke="#00d4a2" stroke-width="1" />
<line x1="101.5" y1="497.5" x2="519.5" y2="497.5" stroke="#00d4a2" stroke-width="1" />
<line x1="101.5" y1="507.5" x2="519.5" y2="507.5" stroke="#00d4a2" stroke-width="1" />
<line x1="101.5" y1="517.5" x2="519.5" y2="517.5" stroke="#00d4a2" stroke-width="1" />
<line x1="101.5" y1="527.5" x2="519.5" y2="527.5" stroke="#00d4a2" stroke-width="1" />
<line x1="101.5" y1="537" x2="519.5" y2="537" stroke="#00d4a2" stroke-width="1" />
<path d="M117.4,419.4 L116.8,418.6 L115.7,418.6 L115.2,419.4 L115.2,420.2 L115.7,421.0 L116.8,421.0 L117.4,421.7 L117.4,422.5 L116.8,423.3 L115.7,423.3 L115.2,422.5 M118.9,418.6 L120.0,418.6 M119.5,418.6 L119.5,423.3 M118.9,423.3 L120.0,423.3 M121.1,418.6 L123.3,418.6 L121.1,423.3 L123.3,423.3 M126.8,418.6 L124.6,418.6 L124.6,423.3 L126.8,423.3 M124.6,421.0 L126.3,421.0" stroke="#00d4a2" stroke-width="1" fill="none"/>
<path d="M162.1,418.6 L162.1,423.3 L165.0,423.3" stroke="#00d4a2" stroke-width="1" fill="none"/>
<path d="M204.7,418.6 L205.8,418.6 L206.3,419.4 L206.3,422.5 L205.8,423.3 L204.7,423.3 L204.1,422.5 L204.1,419.4 L204.7,418.6 M204.1,423.3 L206.3,418.6 M207.7,420.0 L209.3,420.0 L209.9,420.6 L209.9,422.8 L209.3,423.3 L207.7,423.3 L207.7,420.0" stroke="#00d4a2" stroke-width="1" fill="none"/>
<path d="M247.2,418.6 L248.3,418.6 L248.8,419.4 L248.8,422.5 L248.3,423.3 L247.2,423.3 L246.6,422.5 L246.6,419.4 L247.2,418.6 M246.6,423.3 L248.8,418.6 M252.4,419.4 L251.8,418.6 L250.7,418.6 L250.2,419.4 L250.2,422.5 L250.7,423.3 L251.8,423.3 L252.4,422.5 L252.4,421.0 L251.3,421.0" stroke="#00d4a2" stroke-width="1" fill="none"/>
<path d="M292.7,418.6 L293.8,418.6 L294.3,419.4 L294.3,422.5 L293.8,423.3 L292.7,423.3 L292.1,422.5 L292.1,419.4 L292.7,418.6 M292.1,423.3 L294.3,418.6 M297.9,419.4 L297.3,418.6 L296.2,418.6 L295.7,419.4 L295.7,422.5 L296.2,423.3 L297.3,423.3 L297.9,422.5" stroke="#00d4a2" stroke-width="1" fill="none"/>
<path d="M335.8,423.3 L335.8,418.6 L337.9,423.3 L337.9,418.6 M342.0,421.0 L343.6,421.0 M348.2,418.6 L349.3,418.6 L349.8,419.4 L349.8,422.5 L349.3,423.3 L348.2,423.3 L347.7,422.5 L347.7,419.4 L348.2,418.6 M347.7,423.3 L349.8,418.6 M351.1,423.3 L351.1,418.6 L352.7,418.6 L353.2,419.4 L353.2,420.2 L352.7,421.0 L351.1,421.0" stroke="#00d4a2" stroke-width="1" fill="none"/>
<path d="M377.0,418.6 L379.0,418.6 M378.0,418.6 L378.0,423.3 M380.2,418.6 L380.7,423.3 L381.2,420.2 L381.7,423.3 L382.2,418.6 M383.6,421.0 L385.1,421.0 M388.9,423.3 L388.9,420.0 L390.9,423.3 L390.9,420.0 M394.5,418.6 L396.5,418.6 M395.5,418.6 L395.5,423.3 M399.6,418.6 L397.7,423.3 M401.3,420.0 L402.3,420.0 M401.8,420.0 L401.8,423.3 M401.3,423.3 L402.3,423.3 M404.0,423.3 L404.0,420.0 L406.0,423.3 L406.0,420.0" stroke="#00d4a2" stroke-width="1" fill="none"/>
<path d="M426.1,418.6 L428.9,418.6 M427.5,418.6 L427.5,423.3" stroke="#00d4a2" stroke-width="1" fill="none"/>
<path d="M459.2,418.6 L460.3,418.6 L460.8,419.4 L460.8,422.5 L460.3,423.3 L459.2,423.3 L458.6,422.5 L458.6,419.4 L459.2,418.6 M458.6,423.3 L460.8,418.6 M462.2,418.6 L462.7,423.3 L463.3,420.2 L463.8,423.3 L464.4,418.6" stroke="#00d4a2" stroke-width="1" fill="none"/>
<path d="M498.6,418.6 L498.6,423.3 M501.4,418.6 L501.4,423.3 M498.6,421.0 L501.4,421.0" stroke="#00d4a2" stroke-width="1" fill="none"/>
<path d="M120.5,429.7 L121.3,428.9 L122.7,428.9 L123.5,429.7 L123.5,430.5 L122.7,431.4 L122.0,431.4 M122.7,431.4 L123.5,432.2 L123.5,433.0 L122.7,433.8 L121.3,433.8 L120.5,433.0" stroke="#00d4a2" stroke-width="1" fill="none"/>
<path d="M158.8,429.7 L159.4,428.9 L160.5,428.9 L161.1,429.7 L161.1,430.5 L158.8,433.8 L161.1,433.8 M163.0,433.4 L163.0,433.8 M164.8,428.9 L165.9,428.9 L166.5,429.7 L166.5,433.0 L165.9,433.8 L164.8,433.8 L164.2,433.0 L164.2,429.7 L164.8,428.9 M168.5,428.9 L169.6,428.9 L170.2,429.7 L170.2,433.0 L169.6,433.8 L168.5,433.8 L167.9,433.0 L167.9,429.7 L168.5,428.9" stroke="#00d4a2" stroke-width="1" fill="none"/>
<path d="M202.3,429.7 L202.9,428.9 L204.0,428.9 L204.6,429.7 L204.6,430.5 L202.3,433.8 L204.6,433.8 M206.5,433.4 L206.5,433.8 M209.4,428.9 L208.3,428.9 L207.7,429.7 L207.7,433.0 L208.3,433.8 L209.4,433.8 L210.0,433.0 L210.0,432.2 L209.4,431.4 L207.7,431.4 M212.0,428.9 L213.1,428.9 L213.7,429.7 L213.7,430.5 L213.1,431.4 L212.0,431.4 L211.4,432.2 L211.4,433.0 L212.0,433.8 L213.1,433.8 L213.7,433.0 L213.7,432.2 L213.1,431.4 M212.0,431.4 L211.4,430.5 L211.4,429.7 L212.0,428.9" stroke="#00d4a2" stroke-width="1" fill="none"/>
<path d="M247.1,428.9 L244.8,428.9 L244.8,431.4 L246.5,431.4 L247.1,432.2 L247.1,433.0 L246.5,433.8 L245.4,433.8 L244.8,433.0 M249.0,433.4 L249.0,433.8 M250.8,428.9 L251.9,428.9 L252.5,429.7 L252.5,433.0 L251.9,433.8 L250.8,433.8 L250.2,433.0 L250.2,429.7 L250.8,428.9 M254.5,428.9 L255.6,428.9 L256.2,429.7 L256.2,433.0 L255.6,433.8 L254.5,433.8 L253.9,433.0 L253.9,429.7 L254.5,428.9" stroke="#00d4a2" stroke-width="1" fill="none"/>
<path d="M292.0,428.9 L290.9,428.9 L290.3,429.7 L290.3,433.0 L290.9,433.8 L292.0,433.8 L292.6,433.0 L292.6,432.2 L292.0,431.4 L290.3,431.4 M294.5,433.4 L294.5,433.8 M296.3,428.9 L297.4,428.9 L298.0,429.7 L298.0,433.0 L297.4,433.8 L296.3,433.8 L295.7,433.0 L295.7,429.7 L296.3,428.9 M300.0,428.9 L301.1,428.9 L301.7,429.7 L301.7,433.0 L301.1,433.8 L300.0,433.8 L299.4,433.0 L299.4,429.7 L300.0,428.9" stroke="#00d4a2" stroke-width="1" fill="none"/>
<path d="M337.1,433.8 L337.1,428.9 L335.6,432.2 L337.6,432.2 M341.5,431.4 L343.0,431.4 M348.9,428.9 L346.9,428.9 L346.9,431.4 L348.4,431.4 L348.9,432.2 L348.9,433.0 L348.4,433.8 L347.4,433.8 L346.9,433.0 M352.2,428.9 L350.2,433.8 M353.9,428.9 L354.9,428.9 L355.4,429.7 L355.4,430.5 L354.9,431.4 L353.9,431.4 L353.4,432.2 L353.4,433.0 L353.9,433.8 L354.9,433.8 L355.4,433.0 L355.4,432.2 L354.9,431.4 M353.9,431.4 L353.4,430.5 L353.4,429.7 L353.9,428.9" stroke="#00d4a2" stroke-width="1" fill="none"/>
<path d="M384.2,429.7 L384.7,428.9 L384.7,433.8 M388.1,428.9 L387.0,428.9 L386.4,429.7 L386.4,433.0 L387.0,433.8 L388.1,433.8 L388.6,433.0 L388.6,432.2 L388.1,431.4 L386.4,431.4 M390.2,431.4 L391.9,431.4 M395.1,428.9 L394.0,430.5 L394.0,432.2 L395.1,433.8 M397.6,428.9 L396.5,428.9 L396.0,429.7 L396.0,433.0 L396.5,433.8 L397.6,433.8 L398.2,433.0 L398.2,432.2 L397.6,431.4 L396.0,431.4 M399.5,428.9 L400.6,430.5 L400.6,432.2 L399.5,433.8" stroke="#00d4a2" stroke-width="1" fill="none"/>
<path d="M421.9,428.9 L423.0,428.9 L423.6,429.7 L423.6,433.0 L423.0,433.8 L421.9,433.8 L421.4,433.0 L421.4,429.7 L421.9,428.9 M425.4,433.4 L425.4,433.8 M426.5,429.7 L427.0,428.9 L428.1,428.9 L428.6,429.7 L428.6,430.5 L426.5,433.8 L428.6,433.8 M429.9,429.7 L430.5,428.9 L431.6,428.9 L432.1,429.7 L432.1,430.5 L431.6,431.4 L431.0,431.4 M431.6,431.4 L432.1,432.2 L432.1,433.0 L431.6,433.8 L430.5,433.8 L429.9,433.0 M435.1,428.9 L434.0,428.9 L433.4,429.7 L433.4,433.0 L434.0,433.8 L435.1,433.8 L435.6,433.0 L435.6,432.2 L435.1,431.4 L433.4,431.4" stroke="#00d4a2" stroke-width="1" fill="none"/>
<path d="M456.8,428.9 L459.1,428.9 L457.4,433.8 M461.0,433.4 L461.0,433.8 M462.8,428.9 L463.9,428.9 L464.5,429.7 L464.5,433.0 L463.9,433.8 L462.8,433.8 L462.2,433.0 L462.2,429.7 L462.8,428.9 M468.2,431.4 L466.5,431.4 L465.9,430.5 L465.9,429.7 L466.5,428.9 L467.6,428.9 L468.2,429.7 L468.2,433.0 L467.6,433.8 L466.5,433.8" stroke="#00d4a2" stroke-width="1" fill="none"/>
<path d="M494.1,429.7 L494.7,428.9 L494.7,433.8 M498.9,428.9 L496.5,428.9 L496.5,431.4 L498.3,431.4 L498.9,432.2 L498.9,433.0 L498.3,433.8 L497.1,433.8 L496.5,433.0 M500.8,433.4 L500.8,433.8 M502.0,428.9 L504.3,428.9 L502.6,433.8 M508.1,428.9 L505.8,428.9 L505.8,431.4 L507.5,431.4 L508.1,432.2 L508.1,433.0 L507.5,433.8 L506.3,433.8 L505.8,433.0" stroke="#00d4a2" stroke-width="1" fill="none"/>
<path d="M122.7,444.8 L122.7,439.9 L120.5,443.2 L123.5,443.2" stroke="#00d4a2" stroke-width="1" fill="none"/>
<path d="M158.8,440.7 L159.4,439.9 L160.5,439.9 L161.1,440.7 L161.1,441.5 L158.8,444.8 L161.1,444.8 M163.0,444.4 L163.0,444.8 M164.8,439.9 L165.9,439.9 L166.5,440.7 L166.5,444.0 L165.9,444.8 L164.8,444.8 L164.2,444.0 L164.2,440.7 L164.8,439.9 M168.5,439.9 L169.6,439.9 L170.2,440.7 L170.2,444.0 L169.6,444.8 L168.5,444.8 L167.9,444.0 L167.9,440.7 L168.5,439.9" stroke="#00d4a2" stroke-width="1" fill="none"/>
<path d="M202.3,440.7 L202.9,439.9 L204.0,439.9 L204.6,440.7 L204.6,441.5 L204.0,442.4 L203.5,442.4 M204.0,442.4 L204.6,443.2 L204.6,444.0 L204.0,444.8 L202.9,444.8 L202.3,444.0 M206.5,444.4 L206.5,444.8 M210.0,439.9 L207.7,439.9 L207.7,442.4 L209.4,442.4 L210.0,443.2 L210.0,444.0 L209.4,444.8 L208.3,444.8 L207.7,444.0 M213.1,444.8 L213.1,439.9 L211.4,443.2 L213.7,443.2" stroke="#00d4a2" stroke-width="1" fill="none"/>
<path d="M246.7,439.9 L245.4,439.9 L244.8,440.7 L244.8,444.0 L245.4,444.8 L246.7,444.8 L247.4,444.0 L247.4,443.2 L246.7,442.4 L244.8,442.4 M249.5,444.4 L249.5,444.8 M251.0,440.7 L251.7,439.9 L251.7,444.8 M254.3,439.9 L255.6,439.9 L256.2,440.7 L256.2,441.5 L255.6,442.4 L254.3,442.4 L253.6,443.2 L253.6,444.0 L254.3,444.8 L255.6,444.8 L256.2,444.0 L256.2,443.2 L255.6,442.4 M254.3,442.4 L253.6,441.5 L253.6,440.7 L254.3,439.9" stroke="#00d4a2" stroke-width="1" fill="none"/>
<path d="M290.3,439.9 L292.6,439.9 L290.9,444.8 M294.5,444.4 L294.5,444.8 M298.0,439.9 L295.7,439.9 L295.7,442.4 L297.4,442.4 L298.0,443.2 L298.0,444.0 L297.4,444.8 L296.3,444.8 L295.7,444.0 M300.0,439.9 L301.1,439.9 L301.7,440.7 L301.7,444.0 L301.1,444.8 L300.0,444.8 L299.4,444.0 L299.4,440.7 L300.0,439.9" stroke="#00d4a2" stroke-width="1" fill="none"/>
<path d="M336.1,439.9 L337.1,439.9 L337.6,440.7 L337.6,441.5 L337.1,442.4 L336.1,442.4 L335.6,443.2 L335.6,444.0 L336.1,444.8 L337.1,444.8 L337.6,444.0 L337.6,443.2 L337.1,442.4 M336.1,442.4 L335.6,441.5 L335.6,440.7 L336.1,439.9 M341.5,442.4 L343.0,442.4 M348.9,439.9 L346.9,439.9 L346.9,442.4 L348.4,442.4 L348.9,443.2 L348.9,444.0 L348.4,444.8 L347.4,444.8 L346.9,444.0 M352.2,439.9 L350.2,444.8 M353.9,439.9 L354.9,439.9 L355.4,440.7 L355.4,441.5 L354.9,442.4 L353.9,442.4 L353.4,443.2 L353.4,444.0 L353.9,444.8 L354.9,444.8 L355.4,444.0 L355.4,443.2 L354.9,442.4 M353.9,442.4 L353.4,441.5 L353.4,440.7 L353.9,439.9" stroke="#00d4a2" stroke-width="1" fill="none"/>
<path d="M384.2,440.7 L384.7,439.9 L384.7,444.8 M388.1,439.9 L387.0,439.9 L386.4,440.7 L386.4,444.0 L387.0,444.8 L388.1,444.8 L388.6,444.0 L388.6,443.2 L388.1,442.4 L386.4,442.4 M390.2,442.4 L391.9,442.4 M395.1,439.9 L394.0,441.5 L394.0,443.2 L395.1,444.8 M397.6,439.9 L396.5,439.9 L396.0,440.7 L396.0,444.0 L396.5,444.8 L397.6,444.8 L398.2,444.0 L398.2,443.2 L397.6,442.4 L396.0,442.4 M399.5,439.9 L400.6,441.5 L400.6,443.2 L399.5,444.8" stroke="#00d4a2" stroke-width="1" fill="none"/>
<path d="M421.9,439.9 L423.0,439.9 L423.6,440.7 L423.6,444.0 L423.0,444.8 L421.9,444.8 L421.4,444.0 L421.4,440.7 L421.9,439.9 M425.4,444.4 L425.4,444.8 M426.5,440.7 L427.0,439.9 L428.1,439.9 L428.6,440.7 L428.6,441.5 L426.5,444.8 L428.6,444.8 M429.9,439.9 L432.1,439.9 L430.5,444.8 M435.1,439.9 L434.0,439.9 L433.4,440.7 L433.4,444.0 L434.0,444.8 L435.1,444.8 L435.6,444.0 L435.6,443.2 L435.1,442.4 L433.4,442.4" stroke="#00d4a2" stroke-width="1" fill="none"/>
<path d="M456.8,439.9 L459.1,439.9 L457.4,444.8 M461.0,444.4 L461.0,444.8 M462.8,439.9 L463.9,439.9 L464.5,440.7 L464.5,441.5 L463.9,442.4 L462.8,442.4 L462.2,443.2 L462.2,444.0 L462.8,444.8 L463.9,444.8 L464.5,444.0 L464.5,443.2 L463.9,442.4 M462.8,442.4 L462.2,441.5 L462.2,440.7 L462.8,439.9 M465.9,439.9 L468.2,439.9 L466.5,444.8" stroke="#00d4a2" stroke-width="1" fill="none"/>
<path d="M494.1,440.7 L494.7,439.9 L494.7,444.8 M497.1,439.9 L498.3,439.9 L498.9,440.7 L498.9,441.5 L498.3,442.4 L497.1,442.4 L496.5,443.2 L496.5,444.0 L497.1,444.8 L498.3,444.8 L498.9,444.0 L498.9,443.2 L498.3,442.4 M497.1,442.4 L496.5,441.5 L496.5,440.7 L497.1,439.9 M500.8,444.4 L500.8,444.8 M504.3,442.4 L502.6,442.4 L502.0,441.5 L502.0,440.7 L502.6,439.9 L503.7,439.9 L504.3,440.7 L504.3,444.0 L503.7,444.8 L502.6,444.8 M506.3,439.9 L507.5,439.9 L508.1,440.7 L508.1,444.0 L507.5,444.8 L506.3,444.8 L505.8,444.0 L505.8,440.7 L506.3,439.9" stroke="#00d4a2" stroke-width="1" fill="none"/>
<path d="M122.7,449.9 L121.3,449.9 L120.5,450.7 L120.5,454.0 L121.3,454.8 L122.7,454.8 L123.5,454.0 L123.5,453.2 L122.7,452.4 L120.5,452.4" stroke="#00d4a2" stroke-width="1" fill="none"/>
<path d="M158.8,450.7 L159.4,449.9 L160.5,449.9 L161.1,450.7 L161.1,451.5 L158.8,454.8 L161.1,454.8 M163.0,454.4 L163.0,454.8 M164.2,450.7 L164.8,449.9 L165.9,449.9 L166.5,450.7 L166.5,451.5 L164.2,454.8 L166.5,454.8 M170.2,449.9 L167.9,449.9 L167.9,452.4 L169.6,452.4 L170.2,453.2 L170.2,454.0 L169.6,454.8 L168.5,454.8 L167.9,454.0" stroke="#00d4a2" stroke-width="1" fill="none"/>
<path d="M204.6,449.9 L202.3,449.9 L202.3,452.4 L204.0,452.4 L204.6,453.2 L204.6,454.0 L204.0,454.8 L202.9,454.8 L202.3,454.0 M206.5,454.4 L206.5,454.8 M209.4,454.8 L209.4,449.9 L207.7,453.2 L210.0,453.2 M211.4,450.7 L212.0,449.9 L213.1,449.9 L213.7,450.7 L213.7,451.5 L213.1,452.4 L212.5,452.4 M213.1,452.4 L213.7,453.2 L213.7,454.0 L213.1,454.8 L212.0,454.8 L211.4,454.0" stroke="#00d4a2" stroke-width="1" fill="none"/>
<path d="M245.4,449.9 L246.5,449.9 L247.1,450.7 L247.1,451.5 L246.5,452.4 L245.4,452.4 L244.8,453.2 L244.8,454.0 L245.4,454.8 L246.5,454.8 L247.1,454.0 L247.1,453.2 L246.5,452.4 M245.4,452.4 L244.8,451.5 L244.8,450.7 L245.4,449.9 M249.0,454.4 L249.0,454.8 M252.5,449.9 L250.2,449.9 L250.2,452.4 L251.9,452.4 L252.5,453.2 L252.5,454.0 L251.9,454.8 L250.8,454.8 L250.2,454.0 M254.5,449.9 L255.6,449.9 L256.2,450.7 L256.2,454.0 L255.6,454.8 L254.5,454.8 L253.9,454.0 L253.9,450.7 L254.5,449.9" stroke="#00d4a2" stroke-width="1" fill="none"/>
<path d="M292.6,452.4 L290.9,452.4 L290.3,451.5 L290.3,450.7 L290.9,449.9 L292.0,449.9 L292.6,450.7 L292.6,454.0 L292.0,454.8 L290.9,454.8 M294.5,454.4 L294.5,454.8 M298.0,449.9 L295.7,449.9 L295.7,452.4 L297.4,452.4 L298.0,453.2 L298.0,454.0 L297.4,454.8 L296.3,454.8 L295.7,454.0 M300.0,449.9 L301.1,449.9 L301.7,450.7 L301.7,454.0 L301.1,454.8 L300.0,454.8 L299.4,454.0 L299.4,450.7 L300.0,449.9" stroke="#00d4a2" stroke-width="1" fill="none"/>
<path d="M336.1,449.9 L337.1,449.9 L337.6,450.7 L337.6,451.5 L337.1,452.4 L336.1,452.4 L335.6,453.2 L335.6,454.0 L336.1,454.8 L337.1,454.8 L337.6,454.0 L337.6,453.2 L337.1,452.4 M336.1,452.4 L335.6,451.5 L335.6,450.7 L336.1,449.9 M341.5,452.4 L343.0,452.4 M346.9,450.7 L347.4,449.9 L348.4,449.9 L348.9,450.7 L348.9,451.5 L348.4,452.4 L347.9,452.4 M348.4,452.4 L348.9,453.2 L348.9,454.0 L348.4,454.8 L347.4,454.8 L346.9,454.0 M352.2,449.9 L350.2,454.8 M354.9,454.8 L354.9,449.9 L353.4,453.2 L355.4,453.2" stroke="#00d4a2" stroke-width="1" fill="none"/>
<path d="M383.9,450.7 L384.5,449.9 L385.5,449.9 L386.0,450.7 L386.0,451.5 L383.9,454.8 L386.0,454.8 M387.8,449.9 L388.8,449.9 L389.3,450.7 L389.3,454.0 L388.8,454.8 L387.8,454.8 L387.3,454.0 L387.3,450.7 L387.8,449.9 M390.9,452.4 L392.4,452.4 M395.4,449.9 L394.4,451.5 L394.4,453.2 L395.4,454.8 M397.8,449.9 L396.8,449.9 L396.3,450.7 L396.3,454.0 L396.8,454.8 L397.8,454.8 L398.3,454.0 L398.3,453.2 L397.8,452.4 L396.3,452.4 M399.6,449.9 L400.6,451.5 L400.6,453.2 L399.6,454.8" stroke="#00d4a2" stroke-width="1" fill="none"/>
<path d="M422.0,449.9 L423.2,449.9 L423.7,450.7 L423.7,454.0 L423.2,454.8 L422.0,454.8 L421.4,454.0 L421.4,450.7 L422.0,449.9 M425.7,454.4 L425.7,454.8 M426.9,450.7 L427.4,449.9 L428.6,449.9 L429.2,450.7 L429.2,451.5 L428.6,452.4 L428.0,452.4 M428.6,452.4 L429.2,453.2 L429.2,454.0 L428.6,454.8 L427.4,454.8 L426.9,454.0 M430.9,450.7 L431.4,449.9 L431.4,454.8 M435.6,449.9 L433.3,449.9 L433.3,452.4 L435.0,452.4 L435.6,453.2 L435.6,454.0 L435.0,454.8 L433.8,454.8 L433.3,454.0" stroke="#00d4a2" stroke-width="1" fill="none"/>
<path d="M459.1,452.4 L457.4,452.4 L456.8,451.5 L456.8,450.7 L457.4,449.9 L458.5,449.9 L459.1,450.7 L459.1,454.0 L458.5,454.8 L457.4,454.8 M461.0,454.4 L461.0,454.8 M462.8,449.9 L463.9,449.9 L464.5,450.7 L464.5,451.5 L463.9,452.4 L462.8,452.4 L462.2,453.2 L462.2,454.0 L462.8,454.8 L463.9,454.8 L464.5,454.0 L464.5,453.2 L463.9,452.4 M462.8,452.4 L462.2,451.5 L462.2,450.7 L462.8,449.9 M467.6,454.8 L467.6,449.9 L465.9,453.2 L468.2,453.2" stroke="#00d4a2" stroke-width="1" fill="none"/>
<path d="M493.9,450.7 L494.5,449.9 L495.6,449.9 L496.2,450.7 L496.2,451.5 L493.9,454.8 L496.2,454.8 M499.3,454.8 L499.3,449.9 L497.6,453.2 L499.8,453.2 M501.7,454.4 L501.7,454.8 M504.6,454.8 L504.6,449.9 L502.9,453.2 L505.1,453.2 M506.7,450.7 L507.3,449.9 L507.3,454.8" stroke="#00d4a2" stroke-width="1" fill="none"/>
<path d="M121.3,459.9 L122.7,459.9 L123.5,460.7 L123.5,461.5 L122.7,462.4 L121.3,462.4 L120.5,463.2 L120.5,464.0 L121.3,464.8 L122.7,464.8 L123.5,464.0 L123.5,463.2 L122.7,462.4 M121.3,462.4 L120.5,461.5 L120.5,460.7 L121.3,459.9" stroke="#00d4a2" stroke-width="1" fill="none"/>
<path d="M158.8,460.7 L159.4,459.9 L160.5,459.9 L161.1,460.7 L161.1,461.5 L158.8,464.8 L161.1,464.8 M163.0,464.4 L163.0,464.8 M164.2,459.9 L166.5,459.9 L164.8,464.8 M170.2,459.9 L167.9,459.9 L167.9,462.4 L169.6,462.4 L170.2,463.2 L170.2,464.0 L169.6,464.8 L168.5,464.8 L167.9,464.0" stroke="#00d4a2" stroke-width="1" fill="none"/>
<path d="M202.3,459.9 L204.6,459.9 L202.9,464.8 M206.5,464.4 L206.5,464.8 M207.7,460.7 L208.3,459.9 L209.4,459.9 L210.0,460.7 L210.0,461.5 L209.4,462.4 L208.8,462.4 M209.4,462.4 L210.0,463.2 L210.0,464.0 L209.4,464.8 L208.3,464.8 L207.7,464.0 M211.4,460.7 L212.0,459.9 L213.1,459.9 L213.7,460.7 L213.7,461.5 L211.4,464.8 L213.7,464.8" stroke="#00d4a2" stroke-width="1" fill="none"/>
<path d="M243.6,460.7 L244.2,459.9 L244.2,464.8 M246.6,459.9 L247.8,459.9 L248.4,460.7 L248.4,464.0 L247.8,464.8 L246.6,464.8 L246.0,464.0 L246.0,460.7 L246.6,459.9 M250.3,464.4 L250.3,464.8 M253.2,459.9 L252.1,459.9 L251.5,460.7 L251.5,464.0 L252.1,464.8 L253.2,464.8 L253.8,464.0 L253.8,463.2 L253.2,462.4 L251.5,462.4 M255.3,460.7 L255.8,459.9 L257.0,459.9 L257.6,460.7 L257.6,461.5 L257.0,462.4 L256.4,462.4 M257.0,462.4 L257.6,463.2 L257.6,464.0 L257.0,464.8 L255.8,464.8 L255.3,464.0" stroke="#00d4a2" stroke-width="1" fill="none"/>
<path d="M289.2,460.7 L289.8,459.9 L289.8,464.8 M292.0,460.7 L292.7,459.9 L292.7,464.8 M295.2,464.4 L295.2,464.8 M296.5,459.9 L299.0,459.9 L297.1,464.8 M303.1,459.9 L300.6,459.9 L300.6,462.4 L302.5,462.4 L303.1,463.2 L303.1,464.0 L302.5,464.8 L301.2,464.8 L300.6,464.0" stroke="#00d4a2" stroke-width="1" fill="none"/>
<path d="M336.1,459.9 L337.1,459.9 L337.6,460.7 L337.6,461.5 L337.1,462.4 L336.1,462.4 L335.6,463.2 L335.6,464.0 L336.1,464.8 L337.1,464.8 L337.6,464.0 L337.6,463.2 L337.1,462.4 M336.1,462.4 L335.6,461.5 L335.6,460.7 L336.1,459.9 M341.5,462.4 L343.0,462.4 M346.9,460.7 L347.4,459.9 L348.4,459.9 L348.9,460.7 L348.9,461.5 L348.4,462.4 L347.9,462.4 M348.4,462.4 L348.9,463.2 L348.9,464.0 L348.4,464.8 L347.4,464.8 L346.9,464.0 M352.2,459.9 L350.2,464.8 M354.9,464.8 L354.9,459.9 L353.4,463.2 L355.4,463.2" stroke="#00d4a2" stroke-width="1" fill="none"/>
<path d="M381.1,460.7 L381.6,459.9 L382.7,459.9 L383.2,460.7 L383.2,461.5 L381.1,464.8 L383.2,464.8 M384.6,460.7 L385.1,459.9 L386.2,459.9 L386.7,460.7 L386.7,461.5 L384.6,464.8 L386.7,464.8 M388.5,464.4 L388.5,464.8 M389.6,460.7 L390.1,459.9 L391.2,459.9 L391.7,460.7 L391.7,461.5 L389.6,464.8 L391.7,464.8 M393.3,462.4 L394.9,462.4 M398.1,459.9 L397.0,461.5 L397.0,463.2 L398.1,464.8 M400.5,459.9 L399.5,459.9 L398.9,460.7 L398.9,464.0 L399.5,464.8 L400.5,464.8 L401.1,464.0 L401.1,463.2 L400.5,462.4 L398.9,462.4 M402.3,459.9 L403.4,461.5 L403.4,463.2 L402.3,464.8" stroke="#00d4a2" stroke-width="1" fill="none"/>
<path d="M422.0,459.9 L423.2,459.9 L423.7,460.7 L423.7,464.0 L423.2,464.8 L422.0,464.8 L421.4,464.0 L421.4,460.7 L422.0,459.9 M425.7,464.4 L425.7,464.8 M426.9,460.7 L427.4,459.9 L428.6,459.9 L429.2,460.7 L429.2,461.5 L428.6,462.4 L428.0,462.4 M428.6,462.4 L429.2,463.2 L429.2,464.0 L428.6,464.8 L427.4,464.8 L426.9,464.0 M430.9,460.7 L431.4,459.9 L431.4,464.8 M435.6,459.9 L433.3,459.9 L433.3,462.4 L435.0,462.4 L435.6,463.2 L435.6,464.0 L435.0,464.8 L433.8,464.8 L433.3,464.0" stroke="#00d4a2" stroke-width="1" fill="none"/>
<path d="M455.7,460.7 L456.3,459.9 L456.3,464.8 M458.7,460.7 L459.4,459.9 L459.4,464.8 M462.1,464.4 L462.1,464.8 M464.1,459.9 L465.4,459.9 L466.1,460.7 L466.1,461.5 L465.4,462.4 L464.1,462.4 L463.4,463.2 L463.4,464.0 L464.1,464.8 L465.4,464.8 L466.1,464.0 L466.1,463.2 L465.4,462.4 M464.1,462.4 L463.4,461.5 L463.4,460.7 L464.1,459.9 M468.0,460.7 L468.7,459.9 L468.7,464.8" stroke="#00d4a2" stroke-width="1" fill="none"/>
<path d="M493.9,460.7 L494.5,459.9 L495.7,459.9 L496.2,460.7 L496.2,461.5 L495.7,462.4 L495.1,462.4 M495.7,462.4 L496.2,463.2 L496.2,464.0 L495.7,464.8 L494.5,464.8 L493.9,464.0 M497.9,460.7 L498.5,459.9 L498.5,464.8 M500.8,464.4 L500.8,464.8 M504.3,459.9 L502.0,459.9 L502.0,462.4 L503.7,462.4 L504.3,463.2 L504.3,464.0 L503.7,464.8 L502.6,464.8 L502.0,464.0 M506.3,459.9 L507.5,459.9 L508.1,460.7 L508.1,464.0 L507.5,464.8 L506.3,464.8 L505.8,464.0 L505.8,460.7 L506.3,459.9" stroke="#00d4a2" stroke-width="1" fill="none"/>
<path d="M119.4,470.7 L120.1,469.9 L120.1,474.8 M122.8,469.9 L124.2,469.9 L124.9,470.7 L124.9,474.0 L124.2,474.8 L122.8,474.8 L122.2,474.0 L122.2,470.7 L122.8,469.9" stroke="#00d4a2" stroke-width="1" fill="none"/>
<path d="M158.8,470.7 L159.4,469.9 L160.5,469.9 L161.1,470.7 L161.1,471.5 L158.8,474.8 L161.1,474.8 M163.0,474.4 L163.0,474.8 M164.2,469.9 L166.5,469.9 L164.8,474.8 M170.2,469.9 L167.9,469.9 L167.9,472.4 L169.6,472.4 L170.2,473.2 L170.2,474.0 L169.6,474.8 L168.5,474.8 L167.9,474.0" stroke="#00d4a2" stroke-width="1" fill="none"/>
<path d="M204.8,472.4 L202.9,472.4 L202.3,471.5 L202.3,470.7 L202.9,469.9 L204.1,469.9 L204.8,470.7 L204.8,474.0 L204.1,474.8 L202.9,474.8 M206.8,474.4 L206.8,474.8 M208.0,470.7 L208.6,469.9 L209.9,469.9 L210.5,470.7 L210.5,471.5 L208.0,474.8 L210.5,474.8 M212.2,470.7 L212.8,469.9 L212.8,474.8" stroke="#00d4a2" stroke-width="1" fill="none"/>
<path d="M243.6,470.7 L244.2,469.9 L244.2,474.8 M246.0,470.7 L246.6,469.9 L247.8,469.9 L248.4,470.7 L248.4,471.5 L246.0,474.8 L248.4,474.8 M250.3,474.4 L250.3,474.8 M251.5,469.9 L253.8,469.9 L252.1,474.8 M257.0,469.9 L255.8,469.9 L255.3,470.7 L255.3,474.0 L255.8,474.8 L257.0,474.8 L257.6,474.0 L257.6,473.2 L257.0,472.4 L255.3,472.4" stroke="#00d4a2" stroke-width="1" fill="none"/>
<path d="M289.1,470.7 L289.7,469.9 L289.7,474.8 M293.3,474.8 L293.3,469.9 L291.5,473.2 L293.9,473.2 M295.8,474.4 L295.8,474.8 M297.0,470.7 L297.6,469.9 L298.7,469.9 L299.3,470.7 L299.3,471.5 L297.0,474.8 L299.3,474.8 M303.1,469.9 L300.8,469.9 L300.8,472.4 L302.5,472.4 L303.1,473.2 L303.1,474.0 L302.5,474.8 L301.3,474.8 L300.8,474.0" stroke="#00d4a2" stroke-width="1" fill="none"/>
<path d="M334.3,470.7 L334.8,469.9 L334.8,474.8 M336.4,470.7 L337.0,469.9 L338.0,469.9 L338.5,470.7 L338.5,471.5 L336.4,474.8 L338.5,474.8 M342.5,472.4 L344.1,472.4 M348.1,469.9 L350.2,469.9 L348.7,474.8 M353.6,469.9 L351.5,474.8 M355.3,469.9 L356.4,469.9 L356.9,470.7 L356.9,471.5 L356.4,472.4 L355.3,472.4 L354.8,473.2 L354.8,474.0 L355.3,474.8 L356.4,474.8 L356.9,474.0 L356.9,473.2 L356.4,472.4 M355.3,472.4 L354.8,471.5 L354.8,470.7 L355.3,469.9" stroke="#00d4a2" stroke-width="1" fill="none"/>
<path d="M381.1,470.7 L381.6,469.9 L382.7,469.9 L383.2,470.7 L383.2,471.5 L381.1,474.8 L383.2,474.8 M386.7,469.9 L384.6,469.9 L384.6,472.4 L386.2,472.4 L386.7,473.2 L386.7,474.0 L386.2,474.8 L385.1,474.8 L384.6,474.0 M388.5,474.4 L388.5,474.8 M391.2,474.8 L391.2,469.9 L389.6,473.2 L391.7,473.2 M393.3,472.4 L394.9,472.4 M398.1,469.9 L397.0,471.5 L397.0,473.2 L398.1,474.8 M401.1,469.9 L398.9,469.9 L398.9,472.4 L400.5,472.4 L401.1,473.2 L401.1,474.0 L400.5,474.8 L399.5,474.8 L398.9,474.0 M402.3,469.9 L403.4,471.5 L403.4,473.2 L402.3,474.8" stroke="#00d4a2" stroke-width="1" fill="none"/>
<path d="M421.9,469.9 L423.0,469.9 L423.6,470.7 L423.6,474.0 L423.0,474.8 L421.9,474.8 L421.4,474.0 L421.4,470.7 L421.9,469.9 M425.4,474.4 L425.4,474.8 M426.5,470.7 L427.0,469.9 L428.1,469.9 L428.6,470.7 L428.6,471.5 L428.1,472.4 L427.5,472.4 M428.1,472.4 L428.6,473.2 L428.6,474.0 L428.1,474.8 L427.0,474.8 L426.5,474.0 M432.1,472.4 L430.5,472.4 L429.9,471.5 L429.9,470.7 L430.5,469.9 L431.6,469.9 L432.1,470.7 L432.1,474.0 L431.6,474.8 L430.5,474.8 M435.1,474.8 L435.1,469.9 L433.4,473.2 L435.6,473.2" stroke="#00d4a2" stroke-width="1" fill="none"/>
<path d="M455.6,470.7 L456.2,469.9 L456.2,474.8 M458.0,470.7 L458.6,469.9 L459.8,469.9 L460.4,470.7 L460.4,471.5 L459.8,472.4 L459.2,472.4 M459.8,472.4 L460.4,473.2 L460.4,474.0 L459.8,474.8 L458.6,474.8 L458.0,474.0 M462.3,474.4 L462.3,474.8 M463.5,469.9 L465.8,469.9 L464.1,474.8 M467.8,469.9 L469.0,469.9 L469.6,470.7 L469.6,471.5 L469.0,472.4 L467.8,472.4 L467.3,473.2 L467.3,474.0 L467.8,474.8 L469.0,474.8 L469.6,474.0 L469.6,473.2 L469.0,472.4 M467.8,472.4 L467.3,471.5 L467.3,470.7 L467.8,469.9" stroke="#00d4a2" stroke-width="1" fill="none"/>
<path d="M493.9,470.7 L494.4,469.9 L495.5,469.9 L496.1,470.7 L496.1,471.5 L495.5,472.4 L495.0,472.4 M495.5,472.4 L496.1,473.2 L496.1,474.0 L495.5,474.8 L494.4,474.8 L493.9,474.0 M497.4,469.9 L499.6,469.9 L497.9,474.8 M501.4,474.4 L501.4,474.8 M503.0,469.9 L504.1,469.9 L504.6,470.7 L504.6,471.5 L504.1,472.4 L503.0,472.4 L502.4,473.2 L502.4,474.0 L503.0,474.8 L504.1,474.8 L504.6,474.0 L504.6,473.2 L504.1,472.4 M503.0,472.4 L502.4,471.5 L502.4,470.7 L503.0,469.9 M506.5,469.9 L507.6,469.9 L508.1,470.7 L508.1,474.0 L507.6,474.8 L506.5,474.8 L505.9,474.0 L505.9,470.7 L506.5,469.9" stroke="#00d4a2" stroke-width="1" fill="none"/>
<path d="M119.4,480.7 L120.1,479.9 L120.1,484.8 M122.2,480.7 L122.8,479.9 L124.2,479.9 L124.9,480.7 L124.9,481.5 L122.2,484.8 L124.9,484.8" stroke="#00d4a2" stroke-width="1" fill="none"/>
<path d="M158.8,480.7 L159.4,479.9 L160.5,479.9 L161.1,480.7 L161.1,481.5 L160.5,482.4 L160.0,482.4 M160.5,482.4 L161.1,483.2 L161.1,484.0 L160.5,484.8 L159.4,484.8 L158.8,484.0 M163.0,484.4 L163.0,484.8 M164.8,479.9 L165.9,479.9 L166.5,480.7 L166.5,484.0 L165.9,484.8 L164.8,484.8 L164.2,484.0 L164.2,480.7 L164.8,479.9 M168.5,479.9 L169.6,479.9 L170.2,480.7 L170.2,484.0 L169.6,484.8 L168.5,484.8 L167.9,484.0 L167.9,480.7 L168.5,479.9" stroke="#00d4a2" stroke-width="1" fill="none"/>
<path d="M201.2,480.7 L201.9,479.9 L201.9,484.8 M204.3,480.7 L205.0,479.9 L205.0,484.8 M207.8,484.4 L207.8,484.8 M209.5,480.7 L210.2,479.9 L210.2,484.8 M213.0,479.9 L214.4,479.9 L215.1,480.7 L215.1,484.0 L214.4,484.8 L213.0,484.8 L212.3,484.0 L212.3,480.7 L213.0,479.9" stroke="#00d4a2" stroke-width="1" fill="none"/>
<path d="M243.6,480.7 L244.2,479.9 L244.2,484.8 M248.4,479.9 L246.0,479.9 L246.0,482.4 L247.8,482.4 L248.4,483.2 L248.4,484.0 L247.8,484.8 L246.6,484.8 L246.0,484.0 M250.3,484.4 L250.3,484.8 M252.1,479.9 L253.2,479.9 L253.8,480.7 L253.8,484.0 L253.2,484.8 L252.1,484.8 L251.5,484.0 L251.5,480.7 L252.1,479.9 M255.8,479.9 L257.0,479.9 L257.6,480.7 L257.6,484.0 L257.0,484.8 L255.8,484.8 L255.3,484.0 L255.3,480.7 L255.8,479.9" stroke="#00d4a2" stroke-width="1" fill="none"/>
<path d="M289.1,480.7 L289.7,479.9 L289.7,484.8 M291.5,479.9 L293.9,479.9 L292.1,484.8 M295.8,484.4 L295.8,484.8 M297.6,479.9 L298.7,479.9 L299.3,480.7 L299.3,484.0 L298.7,484.8 L297.6,484.8 L297.0,484.0 L297.0,480.7 L297.6,479.9 M301.3,479.9 L302.5,479.9 L303.1,480.7 L303.1,484.0 L302.5,484.8 L301.3,484.8 L300.8,484.0 L300.8,480.7 L301.3,479.9" stroke="#00d4a2" stroke-width="1" fill="none"/>
<path d="M334.3,480.7 L334.8,479.9 L334.8,484.8 M336.4,480.7 L337.0,479.9 L338.0,479.9 L338.5,480.7 L338.5,481.5 L336.4,484.8 L338.5,484.8 M342.5,482.4 L344.1,482.4 M348.1,479.9 L350.2,479.9 L348.7,484.8 M353.6,479.9 L351.5,484.8 M355.3,479.9 L356.4,479.9 L356.9,480.7 L356.9,481.5 L356.4,482.4 L355.3,482.4 L354.8,483.2 L354.8,484.0 L355.3,484.8 L356.4,484.8 L356.9,484.0 L356.9,483.2 L356.4,482.4 M355.3,482.4 L354.8,481.5 L354.8,480.7 L355.3,479.9" stroke="#00d4a2" stroke-width="1" fill="none"/>
<path d="M381.1,480.7 L381.6,479.9 L382.7,479.9 L383.2,480.7 L383.2,481.5 L381.1,484.8 L383.2,484.8 M386.7,479.9 L384.6,479.9 L384.6,482.4 L386.2,482.4 L386.7,483.2 L386.7,484.0 L386.2,484.8 L385.1,484.8 L384.6,484.0 M388.5,484.4 L388.5,484.8 M391.2,484.8 L391.2,479.9 L389.6,483.2 L391.7,483.2 M393.3,482.4 L394.9,482.4 M398.1,479.9 L397.0,481.5 L397.0,483.2 L398.1,484.8 M401.1,479.9 L398.9,479.9 L398.9,482.4 L400.5,482.4 L401.1,483.2 L401.1,484.0 L400.5,484.8 L399.5,484.8 L398.9,484.0 M402.3,479.9 L403.4,481.5 L403.4,483.2 L402.3,484.8" stroke="#00d4a2" stroke-width="1" fill="none"/>
<path d="M421.9,479.9 L423.0,479.9 L423.6,480.7 L423.6,484.0 L423.0,484.8 L421.9,484.8 L421.4,484.0 L421.4,480.7 L421.9,479.9 M425.4,484.4 L425.4,484.8 M426.5,480.7 L427.0,479.9 L428.1,479.9 L428.6,480.7 L428.6,481.5 L428.1,482.4 L427.5,482.4 M428.1,482.4 L428.6,483.2 L428.6,484.0 L428.1,484.8 L427.0,484.8 L426.5,484.0 M432.1,482.4 L430.5,482.4 L429.9,481.5 L429.9,480.7 L430.5,479.9 L431.6,479.9 L432.1,480.7 L432.1,484.0 L431.6,484.8 L430.5,484.8 M435.1,484.8 L435.1,479.9 L433.4,483.2 L435.6,483.2" stroke="#00d4a2" stroke-width="1" fill="none"/>
<path d="M455.6,480.7 L456.2,479.9 L456.2,484.8 M460.4,479.9 L458.0,479.9 L458.0,482.4 L459.8,482.4 L460.4,483.2 L460.4,484.0 L459.8,484.8 L458.6,484.8 L458.0,484.0 M462.3,484.4 L462.3,484.8 M463.5,479.9 L465.8,479.9 L464.1,484.8 M469.6,479.9 L467.3,479.9 L467.3,482.4 L469.0,482.4 L469.6,483.2 L469.6,484.0 L469.0,484.8 L467.8,484.8 L467.3,484.0" stroke="#00d4a2" stroke-width="1" fill="none"/>
<path d="M495.6,484.8 L495.6,479.9 L493.9,483.2 L496.2,483.2 M497.6,480.7 L498.1,479.9 L499.3,479.9 L499.8,480.7 L499.8,481.5 L499.3,482.4 L498.7,482.4 M499.3,482.4 L499.8,483.2 L499.8,484.0 L499.3,484.8 L498.1,484.8 L497.6,484.0 M501.7,484.4 L501.7,484.8 M502.9,480.7 L503.4,479.9 L504.6,479.9 L505.1,480.7 L505.1,481.5 L504.6,482.4 L504.0,482.4 M504.6,482.4 L505.1,483.2 L505.1,484.0 L504.6,484.8 L503.4,484.8 L502.9,484.0 M506.7,480.7 L507.3,479.9 L507.3,484.8" stroke="#00d4a2" stroke-width="1" fill="none"/>
<path d="M119.4,490.7 L120.1,489.9 L120.1,494.8 M124.2,494.8 L124.2,489.9 L122.2,493.2 L124.9,493.2" stroke="#00d4a2" stroke-width="1" fill="none"/>
<path d="M158.8,490.7 L159.4,489.9 L160.5,489.9 L161.1,490.7 L161.1,491.5 L160.5,492.4 L160.0,492.4 M160.5,492.4 L161.1,493.2 L161.1,494.0 L160.5,494.8 L159.4,494.8 L158.8,494.0 M163.0,494.4 L163.0,494.8 M164.8,489.9 L165.9,489.9 L166.5,490.7 L166.5,494.0 L165.9,494.8 L164.8,494.8 L164.2,494.0 L164.2,490.7 L164.8,489.9 M168.5,489.9 L169.6,489.9 L170.2,490.7 L170.2,494.0 L169.6,494.8 L168.5,494.8 L167.9,494.0 L167.9,490.7 L168.5,489.9" stroke="#00d4a2" stroke-width="1" fill="none"/>
<path d="M201.1,490.7 L201.7,489.9 L201.7,494.8 M203.5,490.7 L204.1,489.9 L205.3,489.9 L205.9,490.7 L205.9,491.5 L203.5,494.8 L205.9,494.8 M207.8,494.4 L207.8,494.8 M209.0,489.9 L211.3,489.9 L209.6,494.8 M212.8,490.7 L213.3,489.9 L214.5,489.9 L215.1,490.7 L215.1,491.5 L212.8,494.8 L215.1,494.8" stroke="#00d4a2" stroke-width="1" fill="none"/>
<path d="M243.6,490.7 L244.2,489.9 L244.2,494.8 M247.8,489.9 L246.6,489.9 L246.0,490.7 L246.0,494.0 L246.6,494.8 L247.8,494.8 L248.4,494.0 L248.4,493.2 L247.8,492.4 L246.0,492.4 M250.3,494.4 L250.3,494.8 M251.5,490.7 L252.1,489.9 L253.2,489.9 L253.8,490.7 L253.8,491.5 L251.5,494.8 L253.8,494.8 M257.0,489.9 L255.8,489.9 L255.3,490.7 L255.3,494.0 L255.8,494.8 L257.0,494.8 L257.6,494.0 L257.6,493.2 L257.0,492.4 L255.3,492.4" stroke="#00d4a2" stroke-width="1" fill="none"/>
<path d="M289.1,490.7 L289.7,489.9 L289.7,494.8 M292.1,489.9 L293.3,489.9 L293.9,490.7 L293.9,491.5 L293.3,492.4 L292.1,492.4 L291.5,493.2 L291.5,494.0 L292.1,494.8 L293.3,494.8 L293.9,494.0 L293.9,493.2 L293.3,492.4 M292.1,492.4 L291.5,491.5 L291.5,490.7 L292.1,489.9 M295.8,494.4 L295.8,494.8 M297.0,489.9 L299.3,489.9 L297.6,494.8 M303.1,489.9 L300.8,489.9 L300.8,492.4 L302.5,492.4 L303.1,493.2 L303.1,494.0 L302.5,494.8 L301.3,494.8 L300.8,494.0" stroke="#00d4a2" stroke-width="1" fill="none"/>
<path d="M337.2,490.7 L337.8,489.9 L337.8,494.8 M339.5,490.7 L340.1,489.9 L341.2,489.9 L341.8,490.7 L341.8,491.5 L339.5,494.8 L341.8,494.8 M346.3,492.4 L348.0,492.4 M352.7,490.7 L353.2,489.9 L353.2,494.8" stroke="#00d4a2" stroke-width="1" fill="none"/>
<path d="M381.1,490.7 L381.6,489.9 L382.7,489.9 L383.2,490.7 L383.2,491.5 L381.1,494.8 L383.2,494.8 M385.1,489.9 L386.2,489.9 L386.7,490.7 L386.7,491.5 L386.2,492.4 L385.1,492.4 L384.6,493.2 L384.6,494.0 L385.1,494.8 L386.2,494.8 L386.7,494.0 L386.7,493.2 L386.2,492.4 M385.1,492.4 L384.6,491.5 L384.6,490.7 L385.1,489.9 M388.5,494.4 L388.5,494.8 M391.7,489.9 L389.6,489.9 L389.6,492.4 L391.2,492.4 L391.7,493.2 L391.7,494.0 L391.2,494.8 L390.1,494.8 L389.6,494.0 M393.3,492.4 L394.9,492.4 M398.1,489.9 L397.0,491.5 L397.0,493.2 L398.1,494.8 M400.5,494.8 L400.5,489.9 L398.9,493.2 L401.1,493.2 M402.3,489.9 L403.4,491.5 L403.4,493.2 L402.3,494.8" stroke="#00d4a2" stroke-width="1" fill="none"/>
<path d="M421.9,489.9 L423.0,489.9 L423.6,490.7 L423.6,494.0 L423.0,494.8 L421.9,494.8 L421.4,494.0 L421.4,490.7 L421.9,489.9 M425.4,494.4 L425.4,494.8 M428.1,494.8 L428.1,489.9 L426.5,493.2 L428.6,493.2 M429.9,489.9 L432.1,489.9 L430.5,494.8 M433.4,490.7 L434.0,489.9 L435.1,489.9 L435.6,490.7 L435.6,491.5 L433.4,494.8 L435.6,494.8" stroke="#00d4a2" stroke-width="1" fill="none"/>
<path d="M455.6,490.7 L456.2,489.9 L456.2,494.8 M458.0,489.9 L460.4,489.9 L458.6,494.8 M462.3,494.4 L462.3,494.8 M463.5,489.9 L465.8,489.9 L464.1,494.8 M467.3,490.7 L467.8,489.9 L469.0,489.9 L469.6,490.7 L469.6,491.5 L467.3,494.8 L469.6,494.8" stroke="#00d4a2" stroke-width="1" fill="none"/>
<path d="M495.5,494.8 L495.5,489.9 L493.9,493.2 L496.1,493.2 M497.9,489.9 L499.0,489.9 L499.6,490.7 L499.6,491.5 L499.0,492.4 L497.9,492.4 L497.4,493.2 L497.4,494.0 L497.9,494.8 L499.0,494.8 L499.6,494.0 L499.6,493.2 L499.0,492.4 M497.9,492.4 L497.4,491.5 L497.4,490.7 L497.9,489.9 M501.4,494.4 L501.4,494.8 M503.0,489.9 L504.1,489.9 L504.6,490.7 L504.6,491.5 L504.1,492.4 L503.0,492.4 L502.4,493.2 L502.4,494.0 L503.0,494.8 L504.1,494.8 L504.6,494.0 L504.6,493.2 L504.1,492.4 M503.0,492.4 L502.4,491.5 L502.4,490.7 L503.0,489.9 M505.9,490.7 L506.5,489.9 L507.6,489.9 L508.1,490.7 L508.1,491.5 L505.9,494.8 L508.1,494.8" stroke="#00d4a2" stroke-width="1" fill="none"/>
<path d="M119.4,501.7 L120.1,500.9 L120.1,505.8 M124.2,500.9 L122.8,500.9 L122.2,501.7 L122.2,505.0 L122.8,505.8 L124.2,505.8 L124.9,505.0 L124.9,504.2 L124.2,503.4 L122.2,503.4" stroke="#00d4a2" stroke-width="1" fill="none"/>
<path d="M158.8,501.7 L159.4,500.9 L160.5,500.9 L161.1,501.7 L161.1,502.5 L160.5,503.4 L160.0,503.4 M160.5,503.4 L161.1,504.2 L161.1,505.0 L160.5,505.8 L159.4,505.8 L158.8,505.0 M163.0,505.4 L163.0,505.8 M166.5,500.9 L164.2,500.9 L164.2,503.4 L165.9,503.4 L166.5,504.2 L166.5,505.0 L165.9,505.8 L164.8,505.8 L164.2,505.0 M168.5,500.9 L169.6,500.9 L170.2,501.7 L170.2,505.0 L169.6,505.8 L168.5,505.8 L167.9,505.0 L167.9,501.7 L168.5,500.9" stroke="#00d4a2" stroke-width="1" fill="none"/>
<path d="M201.1,501.7 L201.7,500.9 L201.7,505.8 M205.3,505.8 L205.3,500.9 L203.5,504.2 L205.9,504.2 M207.8,505.4 L207.8,505.8 M209.0,501.7 L209.6,500.9 L210.7,500.9 L211.3,501.7 L211.3,502.5 L209.0,505.8 L211.3,505.8 M215.1,500.9 L212.8,500.9 L212.8,503.4 L214.5,503.4 L215.1,504.2 L215.1,505.0 L214.5,505.8 L213.3,505.8 L212.8,505.0" stroke="#00d4a2" stroke-width="1" fill="none"/>
<path d="M243.6,501.7 L244.2,500.9 L244.2,505.8 M246.6,500.9 L247.8,500.9 L248.4,501.7 L248.4,502.5 L247.8,503.4 L246.6,503.4 L246.0,504.2 L246.0,505.0 L246.6,505.8 L247.8,505.8 L248.4,505.0 L248.4,504.2 L247.8,503.4 M246.6,503.4 L246.0,502.5 L246.0,501.7 L246.6,500.9 M250.3,505.4 L250.3,505.8 M253.8,500.9 L251.5,500.9 L251.5,503.4 L253.2,503.4 L253.8,504.2 L253.8,505.0 L253.2,505.8 L252.1,505.8 L251.5,505.0 M255.8,500.9 L257.0,500.9 L257.6,501.7 L257.6,505.0 L257.0,505.8 L255.8,505.8 L255.3,505.0 L255.3,501.7 L255.8,500.9" stroke="#00d4a2" stroke-width="1" fill="none"/>
<path d="M288.9,501.7 L289.5,500.9 L290.7,500.9 L291.2,501.7 L291.2,502.5 L288.9,505.8 L291.2,505.8 M292.9,501.7 L293.5,500.9 L293.5,505.8 M295.8,505.4 L295.8,505.8 M297.0,501.7 L297.6,500.9 L298.7,500.9 L299.3,501.7 L299.3,502.5 L297.0,505.8 L299.3,505.8 M303.1,500.9 L300.8,500.9 L300.8,503.4 L302.5,503.4 L303.1,504.2 L303.1,505.0 L302.5,505.8 L301.3,505.8 L300.8,505.0" stroke="#00d4a2" stroke-width="1" fill="none"/>
<path d="M337.2,501.7 L337.8,500.9 L337.8,505.8 M341.2,500.9 L340.1,500.9 L339.5,501.7 L339.5,505.0 L340.1,505.8 L341.2,505.8 L341.8,505.0 L341.8,504.2 L341.2,503.4 L339.5,503.4 M346.3,503.4 L348.0,503.4 M352.7,501.7 L353.2,500.9 L353.2,505.8" stroke="#00d4a2" stroke-width="1" fill="none"/>
<path d="M383.9,501.7 L384.5,500.9 L385.5,500.9 L386.0,501.7 L386.0,502.5 L385.5,503.4 L385.0,503.4 M385.5,503.4 L386.0,504.2 L386.0,505.0 L385.5,505.8 L384.5,505.8 L383.9,505.0 M387.8,500.9 L388.8,500.9 L389.3,501.7 L389.3,505.0 L388.8,505.8 L387.8,505.8 L387.3,505.0 L387.3,501.7 L387.8,500.9 M390.9,503.4 L392.4,503.4 M395.4,500.9 L394.4,502.5 L394.4,504.2 L395.4,505.8 M397.8,505.8 L397.8,500.9 L396.3,504.2 L398.3,504.2 M399.6,500.9 L400.6,502.5 L400.6,504.2 L399.6,505.8" stroke="#00d4a2" stroke-width="1" fill="none"/>
<path d="M421.9,500.9 L423.0,500.9 L423.6,501.7 L423.6,505.0 L423.0,505.8 L421.9,505.8 L421.4,505.0 L421.4,501.7 L421.9,500.9 M425.4,505.4 L425.4,505.8 M428.1,505.8 L428.1,500.9 L426.5,504.2 L428.6,504.2 M429.9,500.9 L432.1,500.9 L430.5,505.8 M433.4,501.7 L434.0,500.9 L435.1,500.9 L435.6,501.7 L435.6,502.5 L433.4,505.8 L435.6,505.8" stroke="#00d4a2" stroke-width="1" fill="none"/>
<path d="M455.6,501.7 L456.2,500.9 L456.2,505.8 M460.4,503.4 L458.6,503.4 L458.0,502.5 L458.0,501.7 L458.6,500.9 L459.8,500.9 L460.4,501.7 L460.4,505.0 L459.8,505.8 L458.6,505.8 M462.3,505.4 L462.3,505.8 M465.2,500.9 L464.1,500.9 L463.5,501.7 L463.5,505.0 L464.1,505.8 L465.2,505.8 L465.8,505.0 L465.8,504.2 L465.2,503.4 L463.5,503.4 M469.6,503.4 L467.8,503.4 L467.3,502.5 L467.3,501.7 L467.8,500.9 L469.0,500.9 L469.6,501.7 L469.6,505.0 L469.0,505.8 L467.8,505.8" stroke="#00d4a2" stroke-width="1" fill="none"/>
<path d="M496.1,500.9 L493.9,500.9 L493.9,503.4 L495.5,503.4 L496.1,504.2 L496.1,505.0 L495.5,505.8 L494.4,505.8 L493.9,505.0 M499.6,500.9 L497.4,500.9 L497.4,503.4 L499.0,503.4 L499.6,504.2 L499.6,505.0 L499.0,505.8 L497.9,505.8 L497.4,505.0 M501.4,505.4 L501.4,505.8 M504.6,503.4 L503.0,503.4 L502.4,502.5 L502.4,501.7 L503.0,500.9 L504.1,500.9 L504.6,501.7 L504.6,505.0 L504.1,505.8 L503.0,505.8 M507.6,505.8 L507.6,500.9 L505.9,504.2 L508.1,504.2" stroke="#00d4a2" stroke-width="1" fill="none"/>
<path d="M119.4,511.7 L120.1,510.9 L120.1,515.8 M122.8,510.9 L124.2,510.9 L124.9,511.7 L124.9,512.5 L124.2,513.4 L122.8,513.4 L122.2,514.2 L122.2,515.0 L122.8,515.8 L124.2,515.8 L124.9,515.0 L124.9,514.2 L124.2,513.4 M122.8,513.4 L122.2,512.5 L122.2,511.7 L122.8,510.9" stroke="#00d4a2" stroke-width="1" fill="none"/>
<path d="M158.8,511.7 L159.4,510.9 L160.5,510.9 L161.1,511.7 L161.1,512.5 L160.5,513.4 L160.0,513.4 M160.5,513.4 L161.1,514.2 L161.1,515.0 L160.5,515.8 L159.4,515.8 L158.8,515.0 M163.0,515.4 L163.0,515.8 M166.5,510.9 L164.2,510.9 L164.2,513.4 L165.9,513.4 L166.5,514.2 L166.5,515.0 L165.9,515.8 L164.8,515.8 L164.2,515.0 M168.5,510.9 L169.6,510.9 L170.2,511.7 L170.2,515.0 L169.6,515.8 L168.5,515.8 L167.9,515.0 L167.9,511.7 L168.5,510.9" stroke="#00d4a2" stroke-width="1" fill="none"/>
<path d="M201.1,511.7 L201.7,510.9 L201.7,515.8 M205.3,510.9 L204.1,510.9 L203.5,511.7 L203.5,515.0 L204.1,515.8 L205.3,515.8 L205.9,515.0 L205.9,514.2 L205.3,513.4 L203.5,513.4 M207.8,515.4 L207.8,515.8 M209.0,511.7 L209.6,510.9 L210.7,510.9 L211.3,511.7 L211.3,512.5 L209.0,515.8 L211.3,515.8 M212.8,511.7 L213.3,510.9 L214.5,510.9 L215.1,511.7 L215.1,512.5 L212.8,515.8 L215.1,515.8" stroke="#00d4a2" stroke-width="1" fill="none"/>
<path d="M243.4,511.7 L243.9,510.9 L245.0,510.9 L245.6,511.7 L245.6,512.5 L243.4,515.8 L245.6,515.8 M247.4,510.9 L248.5,510.9 L249.1,511.7 L249.1,515.0 L248.5,515.8 L247.4,515.8 L246.9,515.0 L246.9,511.7 L247.4,510.9 M250.9,515.4 L250.9,515.8 M254.1,513.4 L252.5,513.4 L251.9,512.5 L251.9,511.7 L252.5,510.9 L253.6,510.9 L254.1,511.7 L254.1,515.0 L253.6,515.8 L252.5,515.8 M256.0,510.9 L257.1,510.9 L257.6,511.7 L257.6,512.5 L257.1,513.4 L256.0,513.4 L255.4,514.2 L255.4,515.0 L256.0,515.8 L257.1,515.8 L257.6,515.0 L257.6,514.2 L257.1,513.4 M256.0,513.4 L255.4,512.5 L255.4,511.7 L256.0,510.9" stroke="#00d4a2" stroke-width="1" fill="none"/>
<path d="M288.9,511.7 L289.4,510.9 L290.5,510.9 L291.1,511.7 L291.1,512.5 L288.9,515.8 L291.1,515.8 M292.4,511.7 L292.9,510.9 L294.0,510.9 L294.6,511.7 L294.6,512.5 L292.4,515.8 L294.6,515.8 M296.4,515.4 L296.4,515.8 M297.4,510.9 L299.6,510.9 L298.0,515.8 M303.1,510.9 L300.9,510.9 L300.9,513.4 L302.6,513.4 L303.1,514.2 L303.1,515.0 L302.6,515.8 L301.5,515.8 L300.9,515.0" stroke="#00d4a2" stroke-width="1" fill="none"/>
<path d="M331.5,511.7 L332.0,510.9 L332.0,515.8 M335.3,510.9 L334.2,510.9 L333.7,511.7 L333.7,515.0 L334.2,515.8 L335.3,515.8 L335.8,515.0 L335.8,514.2 L335.3,513.4 L333.7,513.4 M340.0,513.4 L341.6,513.4 M346.0,511.7 L346.6,510.9 L346.6,515.8 M348.5,513.4 L350.1,513.4 M351.9,511.7 L352.5,510.9 L352.5,515.8 M356.3,510.9 L354.1,515.8 M358.1,510.9 L359.2,510.9 L359.8,511.7 L359.8,512.5 L359.2,513.4 L358.1,513.4 L357.6,514.2 L357.6,515.0 L358.1,515.8 L359.2,515.8 L359.8,515.0 L359.8,514.2 L359.2,513.4 M358.1,513.4 L357.6,512.5 L357.6,511.7 L358.1,510.9" stroke="#00d4a2" stroke-width="1" fill="none"/>
<path d="M383.9,511.7 L384.5,510.9 L385.5,510.9 L386.0,511.7 L386.0,512.5 L385.5,513.4 L385.0,513.4 M385.5,513.4 L386.0,514.2 L386.0,515.0 L385.5,515.8 L384.5,515.8 L383.9,515.0 M387.8,510.9 L388.8,510.9 L389.3,511.7 L389.3,515.0 L388.8,515.8 L387.8,515.8 L387.3,515.0 L387.3,511.7 L387.8,510.9 M390.9,513.4 L392.4,513.4 M395.4,510.9 L394.4,512.5 L394.4,514.2 L395.4,515.8 M397.8,515.8 L397.8,510.9 L396.3,514.2 L398.3,514.2 M399.6,510.9 L400.6,512.5 L400.6,514.2 L399.6,515.8" stroke="#00d4a2" stroke-width="1" fill="none"/>
<path d="M421.9,510.9 L423.0,510.9 L423.6,511.7 L423.6,515.0 L423.0,515.8 L421.9,515.8 L421.4,515.0 L421.4,511.7 L421.9,510.9 M425.4,515.4 L425.4,515.8 M428.1,515.8 L428.1,510.9 L426.5,514.2 L428.6,514.2 M429.9,510.9 L432.1,510.9 L430.5,515.8 M433.4,511.7 L434.0,510.9 L435.1,510.9 L435.6,511.7 L435.6,512.5 L433.4,515.8 L435.6,515.8" stroke="#00d4a2" stroke-width="1" fill="none"/>
<path d="M455.6,511.7 L456.2,510.9 L456.2,515.8 M460.4,513.4 L458.6,513.4 L458.0,512.5 L458.0,511.7 L458.6,510.9 L459.8,510.9 L460.4,511.7 L460.4,515.0 L459.8,515.8 L458.6,515.8 M462.3,515.4 L462.3,515.8 M465.2,510.9 L464.1,510.9 L463.5,511.7 L463.5,515.0 L464.1,515.8 L465.2,515.8 L465.8,515.0 L465.8,514.2 L465.2,513.4 L463.5,513.4 M469.6,513.4 L467.8,513.4 L467.3,512.5 L467.3,511.7 L467.8,510.9 L469.0,510.9 L469.6,511.7 L469.6,515.0 L469.0,515.8 L467.8,515.8" stroke="#00d4a2" stroke-width="1" fill="none"/>
<path d="M495.5,510.9 L494.4,510.9 L493.9,511.7 L493.9,515.0 L494.4,515.8 L495.5,515.8 L496.1,515.0 L496.1,514.2 L495.5,513.4 L493.9,513.4 M497.9,510.9 L499.0,510.9 L499.6,511.7 L499.6,515.0 L499.0,515.8 L497.9,515.8 L497.4,515.0 L497.4,511.7 L497.9,510.9 M501.4,515.4 L501.4,515.8 M502.4,511.7 L503.0,510.9 L504.1,510.9 L504.6,511.7 L504.6,512.5 L502.4,515.8 L504.6,515.8 M507.6,515.8 L507.6,510.9 L505.9,514.2 L508.1,514.2" stroke="#00d4a2" stroke-width="1" fill="none"/>
<path d="M119.2,521.7 L119.7,520.9 L120.8,520.9 L121.3,521.7 L121.3,522.5 L119.2,525.8 L121.3,525.8 M123.2,520.9 L124.3,520.9 L124.9,521.7 L124.9,525.0 L124.3,525.8 L123.2,525.8 L122.7,525.0 L122.7,521.7 L123.2,520.9" stroke="#00d4a2" stroke-width="1" fill="none"/>
<path d="M160.5,525.8 L160.5,520.9 L158.8,524.2 L161.1,524.2 M163.0,525.4 L163.0,525.8 M166.5,520.9 L164.2,520.9 L164.2,523.4 L165.9,523.4 L166.5,524.2 L166.5,525.0 L165.9,525.8 L164.8,525.8 L164.2,525.0 M168.5,520.9 L169.6,520.9 L170.2,521.7 L170.2,525.0 L169.6,525.8 L168.5,525.8 L167.9,525.0 L167.9,521.7 L168.5,520.9" stroke="#00d4a2" stroke-width="1" fill="none"/>
<path d="M201.2,521.7 L201.8,520.9 L201.8,525.8 M204.4,520.9 L205.7,520.9 L206.3,521.7 L206.3,522.5 L205.7,523.4 L204.4,523.4 L203.8,524.2 L203.8,525.0 L204.4,525.8 L205.7,525.8 L206.3,525.0 L206.3,524.2 L205.7,523.4 M204.4,523.4 L203.8,522.5 L203.8,521.7 L204.4,520.9 M208.4,525.4 L208.4,525.8 M210.0,521.7 L210.6,520.9 L210.6,525.8 M215.1,523.4 L213.2,523.4 L212.6,522.5 L212.6,521.7 L213.2,520.9 L214.5,520.9 L215.1,521.7 L215.1,525.0 L214.5,525.8 L213.2,525.8" stroke="#00d4a2" stroke-width="1" fill="none"/>
<path d="M243.4,521.7 L243.9,520.9 L245.0,520.9 L245.6,521.7 L245.6,522.5 L243.4,525.8 L245.6,525.8 M246.9,521.7 L247.4,520.9 L248.5,520.9 L249.1,521.7 L249.1,522.5 L246.9,525.8 L249.1,525.8 M250.9,525.4 L250.9,525.8 M254.1,523.4 L252.5,523.4 L251.9,522.5 L251.9,521.7 L252.5,520.9 L253.6,520.9 L254.1,521.7 L254.1,525.0 L253.6,525.8 L252.5,525.8 M257.6,523.4 L256.0,523.4 L255.4,522.5 L255.4,521.7 L256.0,520.9 L257.1,520.9 L257.6,521.7 L257.6,525.0 L257.1,525.8 L256.0,525.8" stroke="#00d4a2" stroke-width="1" fill="none"/>
<path d="M288.9,521.7 L289.4,520.9 L290.5,520.9 L291.1,521.7 L291.1,522.5 L288.9,525.8 L291.1,525.8 M294.6,520.9 L292.4,520.9 L292.4,523.4 L294.0,523.4 L294.6,524.2 L294.6,525.0 L294.0,525.8 L292.9,525.8 L292.4,525.0 M296.4,525.4 L296.4,525.8 M298.0,520.9 L299.1,520.9 L299.6,521.7 L299.6,525.0 L299.1,525.8 L298.0,525.8 L297.4,525.0 L297.4,521.7 L298.0,520.9 M301.5,520.9 L302.6,520.9 L303.1,521.7 L303.1,525.0 L302.6,525.8 L301.5,525.8 L300.9,525.0 L300.9,521.7 L301.5,520.9" stroke="#00d4a2" stroke-width="1" fill="none"/>
<path d="M331.2,521.7 L331.8,520.9 L332.8,520.9 L333.3,521.7 L333.3,522.5 L331.2,525.8 L333.3,525.8 M335.1,520.9 L336.2,520.9 L336.7,521.7 L336.7,525.0 L336.2,525.8 L335.1,525.8 L334.6,525.0 L334.6,521.7 L335.1,520.9 M340.7,523.4 L342.3,523.4 M346.5,521.7 L347.0,520.9 L347.0,525.8 M348.9,523.4 L350.5,523.4 M352.2,521.7 L352.7,520.9 L352.7,525.8 M356.4,520.9 L354.3,525.8 M358.2,520.9 L359.2,520.9 L359.8,521.7 L359.8,522.5 L359.2,523.4 L358.2,523.4 L357.7,524.2 L357.7,525.0 L358.2,525.8 L359.2,525.8 L359.8,525.0 L359.8,524.2 L359.2,523.4 M358.2,523.4 L357.7,522.5 L357.7,521.7 L358.2,520.9" stroke="#00d4a2" stroke-width="1" fill="none"/>
<path d="M383.9,521.7 L384.5,520.9 L385.5,520.9 L386.0,521.7 L386.0,522.5 L385.5,523.4 L385.0,523.4 M385.5,523.4 L386.0,524.2 L386.0,525.0 L385.5,525.8 L384.5,525.8 L383.9,525.0 M389.3,520.9 L387.3,520.9 L387.3,523.4 L388.8,523.4 L389.3,524.2 L389.3,525.0 L388.8,525.8 L387.8,525.8 L387.3,525.0 M390.9,523.4 L392.4,523.4 M395.4,520.9 L394.4,522.5 L394.4,524.2 L395.4,525.8 M397.8,525.8 L397.8,520.9 L396.3,524.2 L398.3,524.2 M399.6,520.9 L400.6,522.5 L400.6,524.2 L399.6,525.8" stroke="#00d4a2" stroke-width="1" fill="none"/>
<path d="M422.0,520.9 L423.1,520.9 L423.7,521.7 L423.7,525.0 L423.1,525.8 L422.0,525.8 L421.4,525.0 L421.4,521.7 L422.0,520.9 M425.6,525.4 L425.6,525.8 M429.0,520.9 L426.7,520.9 L426.7,523.4 L428.4,523.4 L429.0,524.2 L429.0,525.0 L428.4,525.8 L427.3,525.8 L426.7,525.0 M432.6,523.4 L430.9,523.4 L430.4,522.5 L430.4,521.7 L430.9,520.9 L432.1,520.9 L432.6,521.7 L432.6,525.0 L432.1,525.8 L430.9,525.8 M434.2,521.7 L434.8,520.9 L434.8,525.8" stroke="#00d4a2" stroke-width="1" fill="none"/>
<path d="M455.4,521.7 L456.0,520.9 L457.2,520.9 L457.7,521.7 L457.7,522.5 L455.4,525.8 L457.7,525.8 M459.4,521.7 L460.0,520.9 L460.0,525.8 M462.3,525.4 L462.3,525.8 M465.2,520.9 L464.1,520.9 L463.5,521.7 L463.5,525.0 L464.1,525.8 L465.2,525.8 L465.8,525.0 L465.8,524.2 L465.2,523.4 L463.5,523.4 M469.6,520.9 L467.3,520.9 L467.3,523.4 L469.0,523.4 L469.6,524.2 L469.6,525.0 L469.0,525.8 L467.8,525.8 L467.3,525.0" stroke="#00d4a2" stroke-width="1" fill="none"/>
<path d="M495.5,520.9 L494.4,520.9 L493.9,521.7 L493.9,525.0 L494.4,525.8 L495.5,525.8 L496.1,525.0 L496.1,524.2 L495.5,523.4 L493.9,523.4 M497.4,520.9 L499.6,520.9 L497.9,525.8 M501.4,525.4 L501.4,525.8 M502.4,520.9 L504.6,520.9 L503.0,525.8 M505.9,521.7 L506.5,520.9 L507.6,520.9 L508.1,521.7 L508.1,522.5 L505.9,525.8 L508.1,525.8" stroke="#00d4a2" stroke-width="1" fill="none"/>
<path d="M119.2,531.7 L119.7,530.9 L120.8,530.9 L121.3,531.7 L121.3,532.5 L119.2,535.8 L121.3,535.8 M124.3,535.8 L124.3,530.9 L122.7,534.2 L124.9,534.2" stroke="#00d4a2" stroke-width="1" fill="none"/>
<path d="M160.5,535.8 L160.5,530.9 L158.8,534.2 L161.1,534.2 M163.0,535.4 L163.0,535.8 M166.5,530.9 L164.2,530.9 L164.2,533.4 L165.9,533.4 L166.5,534.2 L166.5,535.0 L165.9,535.8 L164.8,535.8 L164.2,535.0 M168.5,530.9 L169.6,530.9 L170.2,531.7 L170.2,535.0 L169.6,535.8 L168.5,535.8 L167.9,535.0 L167.9,531.7 L168.5,530.9" stroke="#00d4a2" stroke-width="1" fill="none"/>
<path d="M200.9,531.7 L201.5,530.9 L202.7,530.9 L203.2,531.7 L203.2,532.5 L200.9,535.8 L203.2,535.8 M204.9,531.7 L205.5,530.9 L205.5,535.8 M207.8,535.4 L207.8,535.8 M209.6,530.9 L210.7,530.9 L211.3,531.7 L211.3,532.5 L210.7,533.4 L209.6,533.4 L209.0,534.2 L209.0,535.0 L209.6,535.8 L210.7,535.8 L211.3,535.0 L211.3,534.2 L210.7,533.4 M209.6,533.4 L209.0,532.5 L209.0,531.7 L209.6,530.9 M215.1,530.9 L212.8,530.9 L212.8,533.4 L214.5,533.4 L215.1,534.2 L215.1,535.0 L214.5,535.8 L213.3,535.8 L212.8,535.0" stroke="#00d4a2" stroke-width="1" fill="none"/>
<path d="M243.4,531.7 L243.9,530.9 L245.0,530.9 L245.6,531.7 L245.6,532.5 L243.4,535.8 L245.6,535.8 M246.9,530.9 L249.1,530.9 L247.4,535.8 M250.9,535.4 L250.9,535.8 M251.9,531.7 L252.5,530.9 L253.6,530.9 L254.1,531.7 L254.1,532.5 L251.9,535.8 L254.1,535.8 M257.1,535.8 L257.1,530.9 L255.4,534.2 L257.6,534.2" stroke="#00d4a2" stroke-width="1" fill="none"/>
<path d="M288.9,531.7 L289.4,530.9 L290.5,530.9 L291.1,531.7 L291.1,532.5 L288.9,535.8 L291.1,535.8 M294.6,533.4 L292.9,533.4 L292.4,532.5 L292.4,531.7 L292.9,530.9 L294.0,530.9 L294.6,531.7 L294.6,535.0 L294.0,535.8 L292.9,535.8 M296.4,535.4 L296.4,535.8 M299.6,530.9 L297.4,530.9 L297.4,533.4 L299.1,533.4 L299.6,534.2 L299.6,535.0 L299.1,535.8 L298.0,535.8 L297.4,535.0 M301.5,530.9 L302.6,530.9 L303.1,531.7 L303.1,535.0 L302.6,535.8 L301.5,535.8 L300.9,535.0 L300.9,531.7 L301.5,530.9" stroke="#00d4a2" stroke-width="1" fill="none"/>
<path d="M331.2,531.7 L331.8,530.9 L332.8,530.9 L333.3,531.7 L333.3,532.5 L331.2,535.8 L333.3,535.8 M335.1,530.9 L336.2,530.9 L336.7,531.7 L336.7,535.0 L336.2,535.8 L335.1,535.8 L334.6,535.0 L334.6,531.7 L335.1,530.9 M340.7,533.4 L342.3,533.4 M346.5,531.7 L347.0,530.9 L347.0,535.8 M348.9,533.4 L350.5,533.4 M352.2,531.7 L352.7,530.9 L352.7,535.8 M356.4,530.9 L354.3,535.8 M359.2,535.8 L359.2,530.9 L357.7,534.2 L359.8,534.2" stroke="#00d4a2" stroke-width="1" fill="none"/>
<path d="M383.9,531.7 L384.5,530.9 L385.5,530.9 L386.0,531.7 L386.0,532.5 L385.5,533.4 L385.0,533.4 M385.5,533.4 L386.0,534.2 L386.0,535.0 L385.5,535.8 L384.5,535.8 L383.9,535.0 M389.3,530.9 L387.3,530.9 L387.3,533.4 L388.8,533.4 L389.3,534.2 L389.3,535.0 L388.8,535.8 L387.8,535.8 L387.3,535.0 M390.9,533.4 L392.4,533.4 M395.4,530.9 L394.4,532.5 L394.4,534.2 L395.4,535.8 M397.8,535.8 L397.8,530.9 L396.3,534.2 L398.3,534.2 M399.6,530.9 L400.6,532.5 L400.6,534.2 L399.6,535.8" stroke="#00d4a2" stroke-width="1" fill="none"/>
<path d="M422.0,530.9 L423.1,530.9 L423.7,531.7 L423.7,535.0 L423.1,535.8 L422.0,535.8 L421.4,535.0 L421.4,531.7 L422.0,530.9 M425.6,535.4 L425.6,535.8 M429.0,530.9 L426.7,530.9 L426.7,533.4 L428.4,533.4 L429.0,534.2 L429.0,535.0 L428.4,535.8 L427.3,535.8 L426.7,535.0 M432.6,533.4 L430.9,533.4 L430.4,532.5 L430.4,531.7 L430.9,530.9 L432.1,530.9 L432.6,531.7 L432.6,535.0 L432.1,535.8 L430.9,535.8 M434.2,531.7 L434.8,530.9 L434.8,535.8" stroke="#00d4a2" stroke-width="1" fill="none"/>
<path d="M455.4,531.7 L456.0,530.9 L457.2,530.9 L457.7,531.7 L457.7,532.5 L455.4,535.8 L457.7,535.8 M459.4,531.7 L460.0,530.9 L460.0,535.8 M462.3,535.4 L462.3,535.8 M465.2,530.9 L464.1,530.9 L463.5,531.7 L463.5,535.0 L464.1,535.8 L465.2,535.8 L465.8,535.0 L465.8,534.2 L465.2,533.4 L463.5,533.4 M469.6,530.9 L467.3,530.9 L467.3,533.4 L469.0,533.4 L469.6,534.2 L469.6,535.0 L469.0,535.8 L467.8,535.8 L467.3,535.0" stroke="#00d4a2" stroke-width="1" fill="none"/>
<path d="M493.9,530.9 L496.2,530.9 L494.5,535.8 M500.0,533.4 L498.3,533.4 L497.7,532.5 L497.7,531.7 L498.3,530.9 L499.4,530.9 L500.0,531.7 L500.0,535.0 L499.4,535.8 L498.3,535.8 M502.0,535.4 L502.0,535.8 M503.4,531.7 L503.9,530.9 L503.9,535.8 M505.8,531.7 L506.3,530.9 L507.5,530.9 L508.1,531.7 L508.1,532.5 L507.5,533.4 L506.9,533.4 M507.5,533.4 L508.1,534.2 L508.1,535.0 L507.5,535.8 L506.3,535.8 L505.8,535.0" stroke="#00d4a2" stroke-width="1" fill="none"/>
<path d="M479.0,409.3 L479.0,413.2 L479.6,414.0 L480.7,414.0 L481.3,413.2 L481.3,409.3 M482.6,414.0 L482.6,409.3 L484.9,414.0 L484.9,409.3 M486.5,409.3 L487.6,409.3 M487.0,409.3 L487.0,414.0 M486.5,414.0 L487.6,414.0 M488.8,409.3 L491.1,409.3 M489.9,409.3 L489.9,414.0 M495.7,410.5 L495.7,410.9 M495.7,412.8 L495.7,413.2 M499.9,409.3 L501.0,409.3 M500.5,409.3 L500.5,414.0 M499.9,414.0 L501.0,414.0 M502.2,414.0 L502.2,409.3 L504.5,414.0 L504.5,409.3 M508.1,410.1 L507.5,409.3 L506.4,409.3 L505.9,410.1 L505.9,413.2 L506.4,414.0 L507.5,414.0 L508.1,413.2 M509.5,409.3 L509.5,414.0 M511.7,409.3 L511.7,414.0 M509.5,411.7 L511.7,411.7 M515.4,409.3 L513.1,409.3 L513.1,414.0 L515.4,414.0 M513.1,411.7 L514.8,411.7 M519.0,410.1 L518.4,409.3 L517.3,409.3 L516.7,410.1 L516.7,410.9 L517.3,411.7 L518.4,411.7 L519.0,412.4 L519.0,413.2 L518.4,414.0 L517.3,414.0 L516.7,413.2" stroke="#00d4a2" stroke-width="1" fill="none"/>
<polyline points="192.5,63 192.5,32 193.5,31 198.5,31 199.5,32 199.5,113" stroke="#e4e4e4" stroke-width="1" fill="none" />
<line x1="192.5" y1="63" x2="192.5" y2="112" stroke="#ff2020" stroke-width="1" />
<line x1="198.5" y1="40" x2="198.5" y2="112" stroke="#ff2020" stroke-width="1" />
<line x1="195.5" y1="27" x2="195.5" y2="396" stroke="#ff2020" stroke-width="1" stroke-dasharray="7,2,1.5,2"/>
<line x1="199.5" y1="30.5" x2="297" y2="30.5" stroke="#10f010" stroke-width="1" />
<line x1="294.5" y1="30.5" x2="294.5" y2="323" stroke="#10f010" stroke-width="1" />
<line x1="245" y1="323.5" x2="296" y2="323.5" stroke="#10f010" stroke-width="1" />
<polyline points="293,33 294.5,38 296,33" stroke="#10f010" stroke-width="1" fill="none" />
<polyline points="200.5,68 221.5,54.5 275.5,54.5" stroke="#10f010" stroke-width="1" fill="none" />
<path d="M232.0,47.1 L234.4,47.1 M233.2,47.1 L233.2,52.0 M235.9,47.1 L236.6,52.0 L237.2,48.7 L237.8,52.0 L238.4,47.1 M240.2,49.6 L242.0,49.6 M246.8,52.0 L246.8,48.6 L249.2,52.0 L249.2,48.6 M253.7,47.1 L256.2,47.1 M254.9,47.1 L254.9,52.0 M260.1,47.1 L257.7,52.0 M262.2,48.6 L263.4,48.6 M262.8,48.6 L262.8,52.0 M262.2,52.0 L263.4,52.0 M265.6,52.0 L265.6,48.6 L268.0,52.0 L268.0,48.6" stroke="#10f010" stroke-width="1" fill="none"/>
<path d="M225.3,58.9 L224.1,60.5 L224.1,62.2 L225.3,63.8 M226.3,58.9 L226.3,63.8 L228.7,63.8 M232.7,58.9 L230.3,58.9 L230.3,63.8 L232.7,63.8 M230.3,61.4 L232.1,61.4 M236.7,58.9 L234.2,58.9 L234.2,63.8 M234.2,61.4 L236.1,61.4 M238.2,58.9 L240.7,58.9 M239.4,58.9 L239.4,63.8 M245.2,58.9 L245.2,63.8 M247.6,58.9 L247.6,63.8 M245.2,61.4 L247.6,61.4 M249.1,63.8 L249.1,60.5 L250.4,58.9 L251.6,60.5 L251.6,63.8 M249.1,61.8 L251.6,61.8 M253.1,63.8 L253.1,58.9 L255.6,63.8 L255.6,58.9 M257.1,58.9 L258.9,58.9 L259.6,59.7 L259.6,63.0 L258.9,63.8 L257.1,63.8 L257.1,58.9 M263.5,58.9 L261.1,58.9 L261.1,63.8 L263.5,63.8 M261.1,61.4 L262.9,61.4 M265.0,58.9 L266.9,58.9 L267.5,59.7 L267.5,63.0 L266.9,63.8 L265.0,63.8 L265.0,58.9" stroke="#10f010" stroke-width="1" fill="none"/>
<path d="M227.5,66.9 L229.3,66.9 L229.9,67.7 L229.9,71.0 L229.3,71.8 L227.5,71.8 L227.5,66.9 M232.0,66.9 L233.2,66.9 L233.8,67.7 L233.8,71.0 L233.2,71.8 L232.0,71.8 L231.4,71.0 L231.4,67.7 L232.0,66.9 M235.3,66.9 L235.3,71.0 L235.9,71.8 L237.1,71.8 L237.7,71.0 L237.7,66.9 M239.1,66.9 L240.9,66.9 L241.5,67.7 L241.5,68.5 L240.9,69.4 L239.1,69.4 M240.9,69.4 L241.5,70.2 L241.5,71.0 L240.9,71.8 L239.1,71.8 L239.1,66.9 M243.0,66.9 L243.0,71.8 L245.4,71.8 M249.3,66.9 L246.9,66.9 L246.9,71.8 L249.3,71.8 M246.9,69.4 L248.7,69.4 M256.6,66.9 L259.0,66.9 M257.8,66.9 L257.8,71.8 M260.4,66.9 L260.4,71.8 M262.8,66.9 L262.8,71.8 M260.4,69.4 L262.8,69.4 M264.3,71.8 L264.3,66.9 L266.1,66.9 L266.7,67.7 L266.7,68.5 L266.1,69.4 L264.3,69.4 M265.5,69.4 L266.7,71.8 M270.6,66.9 L268.2,66.9 L268.2,71.8 L270.6,71.8 M268.2,69.4 L270.0,69.4 M272.1,71.8 L272.1,68.5 L273.3,66.9 L274.5,68.5 L274.5,71.8 M272.1,69.8 L274.5,69.8 M275.9,66.9 L277.7,66.9 L278.3,67.7 L278.3,71.0 L277.7,71.8 L275.9,71.8 L275.9,66.9 M279.8,66.9 L281.0,68.5 L281.0,70.2 L279.8,71.8" stroke="#10f010" stroke-width="1" fill="none"/>
<path d="M-39.0,-4.7 L-39.0,0.0 M-36.6,-4.7 L-36.6,0.0 M-39.0,-2.3 L-36.6,-2.3 M-30.5,-4.7 L-31.7,-3.1 L-31.7,-1.6 L-30.5,0.0 M-29.5,0.0 L-29.5,-3.1 L-28.3,-4.7 L-27.1,-3.1 L-27.1,0.0 M-29.5,-1.9 L-27.1,-1.9 M-25.6,0.0 L-25.6,-4.7 L-23.8,-4.7 L-23.2,-3.9 L-23.2,-3.1 L-23.8,-2.3 L-25.6,-2.3 M-21.7,0.0 L-21.7,-4.7 L-19.9,-4.7 L-19.3,-3.9 L-19.3,-3.1 L-19.9,-2.3 L-21.7,-2.3 M-17.8,0.0 L-17.8,-4.7 L-16.0,-4.7 L-15.4,-3.9 L-15.4,-3.1 L-16.0,-2.3 L-17.8,-2.3 M-16.6,-2.3 L-15.4,0.0 M-13.3,-4.7 L-12.1,-4.7 L-11.5,-3.9 L-11.5,-0.8 L-12.1,0.0 L-13.3,0.0 L-14.0,-0.8 L-14.0,-3.9 L-13.3,-4.7 M-10.1,-4.7 L-7.7,0.0 M-7.7,-4.7 L-10.1,0.0 M-2.7,-4.7 L-1.5,-4.7 L-0.9,-3.9 L-0.9,-0.8 L-1.5,0.0 L-2.7,0.0 L-3.3,-0.8 L-3.3,-3.9 L-2.7,-4.7 M0.6,0.0 L0.6,-4.7 L2.4,-4.7 L3.0,-3.9 L3.0,-3.1 L2.4,-2.3 L0.6,-2.3 M6.9,-4.7 L4.5,-4.7 L4.5,0.0 L6.9,0.0 M4.5,-2.3 L6.3,-2.3 M8.4,0.0 L8.4,-4.7 L10.8,0.0 L10.8,-4.7 M15.2,-4.7 L15.2,0.0 M17.6,-4.7 L17.6,0.0 M15.2,-2.3 L17.6,-2.3 M21.5,-4.7 L19.1,-4.7 L19.1,0.0 L21.5,0.0 M19.1,-2.3 L20.9,-2.3 M23.2,-4.7 L24.4,-4.7 M23.8,-4.7 L23.8,0.0 M23.2,0.0 L24.4,0.0 M28.1,-3.9 L27.5,-4.7 L26.3,-4.7 L25.7,-3.9 L25.7,-0.8 L26.3,0.0 L27.5,0.0 L28.1,-0.8 L28.1,-2.3 L26.9,-2.3 M29.5,-4.7 L29.5,0.0 M32.0,-4.7 L32.0,0.0 M29.5,-2.3 L32.0,-2.3 M33.4,-4.7 L35.8,-4.7 M34.6,-4.7 L34.6,0.0 M37.3,-4.7 L38.5,-3.1 L38.5,-1.6 L37.3,0.0" stroke="#10f010" stroke-width="1" fill="none" transform="translate(291,158.5) rotate(-90)"/>
<polyline points="247,86.5 147.5,86.5 143.5,90 145.5,94 147.5,93.5 186,93.5" stroke="#e4e4e4" stroke-width="1" fill="none" />
<polyline points="200,88.5 244,88.5" stroke="#e4e4e4" stroke-width="1" fill="none" />
<polyline points="200,93.5 244,93.5" stroke="#e4e4e4" stroke-width="1" fill="none" />
<path d="M244,86.5 Q249,86.5 249,90 Q249,94 244,94" stroke="#e4e4e4" stroke-width="1" fill="none" />
<polyline points="187,86 187,82 190,79 196,79" stroke="#e4e4e4" stroke-width="1" fill="none" />
<polyline points="200,80 204,80 206,84 206,94" stroke="#e4e4e4" stroke-width="1" fill="none" />
<polyline points="185,113 185,96 187,94.5 195,94.5" stroke="#e4e4e4" stroke-width="1" fill="none" />
<polyline points="200,95 203,95 204,99 204,113" stroke="#e4e4e4" stroke-width="1" fill="none" />
<polyline points="188.5,113 188.5,103 190.5,101 195,101" stroke="#e4e4e4" stroke-width="1" fill="none" />
<polyline points="201,101 207,101 208,110 208,113" stroke="#e4e4e4" stroke-width="1" fill="none" />
<line x1="203" y1="106" x2="211" y2="106" stroke="#ff2020" stroke-width="1" />
<line x1="207" y1="102" x2="207" y2="110" stroke="#ff2020" stroke-width="1" />
<polyline points="148.5,227.5 148.5,119.5 156.5,113.5 240.5,113.5 243.5,118.5 243.5,228" stroke="#e4e4e4" stroke-width="1" fill="none" />
<line x1="190.5" y1="113" x2="190.5" y2="217" stroke="#e4e4e4" stroke-width="1" />
<polyline points="190.5,217 187.5,228" stroke="#e4e4e4" stroke-width="1" fill="none" />
<line x1="193.5" y1="113" x2="193.5" y2="240" stroke="#e4e4e4" stroke-width="1" />
<polyline points="196.5,113 196.5,129 199.5,129 199.5,113" stroke="#e4e4e4" stroke-width="1" fill="none" />
<line x1="197.5" y1="117" x2="197.5" y2="126" stroke="#ff2020" stroke-width="1" />
<line x1="134" y1="228.5" x2="195" y2="228.5" stroke="#e4e4e4" stroke-width="1" />
<line x1="134" y1="232.5" x2="181" y2="232.5" stroke="#e4e4e4" stroke-width="1" />
<line x1="134" y1="236.5" x2="181" y2="236.5" stroke="#e4e4e4" stroke-width="1" />
<line x1="134" y1="239.5" x2="181" y2="239.5" stroke="#e4e4e4" stroke-width="1" />
<line x1="181" y1="231.5" x2="195" y2="231.5" stroke="#e4e4e4" stroke-width="1" />
<line x1="181" y1="235.5" x2="195" y2="235.5" stroke="#e4e4e4" stroke-width="1" />
<line x1="181" y1="239.5" x2="195" y2="239.5" stroke="#e4e4e4" stroke-width="1" />
<polyline points="134,228.5 132.5,230.5 134,232.5" stroke="#e4e4e4" stroke-width="1" fill="none" />
<polyline points="134,236.5 132.5,238 134,239.5" stroke="#e4e4e4" stroke-width="1" fill="none" />
<line x1="181.5" y1="232.5" x2="181.5" y2="239.5" stroke="#e4e4e4" stroke-width="1" />
<line x1="139.5" y1="232.5" x2="139.5" y2="236.5" stroke="#e4e4e4" stroke-width="1" />
<line x1="146.5" y1="232.5" x2="146.5" y2="236.5" stroke="#e4e4e4" stroke-width="1" />
<line x1="143.5" y1="239.5" x2="143.5" y2="262" stroke="#e4e4e4" stroke-width="1" />
<line x1="145.5" y1="248.5" x2="195" y2="248.5" stroke="#e4e4e4" stroke-width="1" />
<line x1="138.5" y1="224" x2="138.5" y2="242" stroke="#ff2020" stroke-width="1" />
<path d="M134.0,228.5 Q134.5,224.5 138.5,224.5 Q142.5,224.5 143.0,228.5" stroke="#e4e4e4" stroke-width="1" fill="none" />
<polyline points="135.0,239.5 135.0,242.5 142.0,242.5 142.0,239.5" stroke="#e4e4e4" stroke-width="1" fill="none" />
<line x1="167.5" y1="224" x2="167.5" y2="242" stroke="#ff2020" stroke-width="1" />
<path d="M163.0,228.5 Q163.5,224.5 167.5,224.5 Q171.5,224.5 172.0,228.5" stroke="#e4e4e4" stroke-width="1" fill="none" />
<polyline points="164.0,239.5 164.0,242.5 171.0,242.5 171.0,239.5" stroke="#e4e4e4" stroke-width="1" fill="none" />
<line x1="186.5" y1="224" x2="186.5" y2="242" stroke="#ff2020" stroke-width="1" />
<path d="M182.0,228.5 Q182.5,224.5 186.5,224.5 Q190.5,224.5 191.0,228.5" stroke="#e4e4e4" stroke-width="1" fill="none" />
<polyline points="183.0,239.5 183.0,242.5 190.0,242.5 190.0,239.5" stroke="#e4e4e4" stroke-width="1" fill="none" />
<line x1="242.5" y1="228.5" x2="251" y2="228.5" stroke="#e4e4e4" stroke-width="1" />
<line x1="243" y1="232.5" x2="251" y2="232.5" stroke="#e4e4e4" stroke-width="1" />
<line x1="243" y1="235.5" x2="251" y2="235.5" stroke="#e4e4e4" stroke-width="1" />
<polyline points="247,235.5 247,240 249,242.5 251,242.5" stroke="#e4e4e4" stroke-width="1" fill="none" />
<path d="M250.5,242.5 L250.5,228 Q250.5,225 254.5,225 Q258.5,225 258.5,228 L258.5,239 Q258.5,242.5 254.5,242.5 Z" stroke="#e4e4e4" stroke-width="1" fill="none" />
<line x1="253.5" y1="222" x2="253.5" y2="244" stroke="#ff2020" stroke-width="1" />
<line x1="256.5" y1="227" x2="256.5" y2="241" stroke="#ff2020" stroke-width="1" />
<line x1="243.5" y1="238" x2="243.5" y2="245" stroke="#ff2020" stroke-width="2" />
<line x1="243.5" y1="247" x2="243.5" y2="300" stroke="#e4e4e4" stroke-width="1" />
<line x1="245.5" y1="247" x2="245.5" y2="322" stroke="#e4e4e4" stroke-width="1" />
<path d="M242.5,249 C236,262 222,271 196,280" stroke="#e4e4e4" stroke-width="1" fill="none" />
<path d="M244,251 C237.5,264 223,273 196,282" stroke="#e4e4e4" stroke-width="1" fill="none" />
<circle cx="196" cy="325" r="44" stroke="#e4e4e4" stroke-width="1" fill="none" />
<path d="M196.0,278.5 A46.5,46.5 0 0 1 208.0,369.9" stroke="#e4e4e4" stroke-width="1" fill="none" />
<path d="M196.0,276.5 A48.5,48.5 0 0 1 208.6,371.8" stroke="#e4e4e4" stroke-width="1" fill="none" />
<path d="M196.0,274.5 A50.5,50.5 0 0 1 209.1,373.8" stroke="#e4e4e4" stroke-width="1" fill="none" />
<defs><pattern id="hat" patternUnits="userSpaceOnUse" width="3.1" height="3.1" patternTransform="rotate(45)"><line x1="0" y1="0" x2="0" y2="3.1" stroke="#e0806a" stroke-width="1"/></pattern><pattern id="hat2" patternUnits="userSpaceOnUse" width="3.2" height="3.2" patternTransform="rotate(45)"><line x1="0" y1="0" x2="0" y2="3.2" stroke="#e0806a" stroke-width="1"/></pattern><pattern id="xhat" patternUnits="userSpaceOnUse" width="3" height="3" patternTransform="rotate(45)"><path d="M0,0 L0,3 M0,0 L3,0" stroke="#e0806a" stroke-width="1"/></pattern></defs>
<clipPath id="hc1"><path d="M156.5,305.6 L155.0,309.0 L153.8,312.5 L152.9,316.1 L152.3,319.8 L152.0,323.5 L152.1,327.2 L152.4,330.9 L153.1,334.6 L154.0,338.2 L155.3,341.6 L156.8,345.0 L158.7,348.3 L160.7,351.3 L163.1,354.2 L165.7,356.9 L168.5,359.3 L171.5,361.5 L174.6,363.5 L178.0,365.1 L181.4,366.5 L185.0,367.6 L188.6,368.4 L192.3,368.8 L196.0,369.0 L195.5,369.0 Z"/></clipPath>
<g clip-path="url(#hc1)" stroke="#e0806a" stroke-width="1"><line x1="152.0" y1="305.6" x2="88.6" y2="369.0"/><line x1="156.7" y1="305.6" x2="93.3" y2="369.0"/><line x1="161.4" y1="305.6" x2="98.0" y2="369.0"/><line x1="166.0" y1="305.6" x2="102.6" y2="369.0"/><line x1="170.7" y1="305.6" x2="107.3" y2="369.0"/><line x1="175.4" y1="305.6" x2="112.0" y2="369.0"/><line x1="180.0" y1="305.6" x2="116.6" y2="369.0"/><line x1="184.7" y1="305.6" x2="121.3" y2="369.0"/><line x1="189.4" y1="305.6" x2="126.0" y2="369.0"/><line x1="194.0" y1="305.6" x2="130.6" y2="369.0"/><line x1="198.7" y1="305.6" x2="135.3" y2="369.0"/><line x1="203.4" y1="305.6" x2="140.0" y2="369.0"/><line x1="208.0" y1="305.6" x2="144.6" y2="369.0"/><line x1="212.7" y1="305.6" x2="149.3" y2="369.0"/><line x1="217.4" y1="305.6" x2="154.0" y2="369.0"/><line x1="222.0" y1="305.6" x2="158.6" y2="369.0"/><line x1="226.7" y1="305.6" x2="163.3" y2="369.0"/><line x1="231.4" y1="305.6" x2="168.0" y2="369.0"/><line x1="236.0" y1="305.6" x2="172.6" y2="369.0"/><line x1="240.7" y1="305.6" x2="177.3" y2="369.0"/><line x1="245.4" y1="305.6" x2="182.0" y2="369.0"/><line x1="250.0" y1="305.6" x2="186.6" y2="369.0"/><line x1="254.7" y1="305.6" x2="191.3" y2="369.0"/><line x1="259.4" y1="305.6" x2="196.0" y2="369.0"/></g>
<line x1="154.7" y1="304.7" x2="195.5" y2="368.5" stroke="#e4e4e4" stroke-width="1" />
<clipPath id="hc2"><path d="M236.3,307.4 L237.6,310.8 L238.7,314.3 L239.4,317.8 L239.9,321.5 L240.0,325.1 L239.8,328.7 L239.4,332.3 L238.6,335.9 L237.6,339.3 L236.3,342.7 L234.7,346.0 L232.8,349.1 L230.7,352.1 L228.3,354.8 L225.8,357.4 L223.0,359.7 L220.0,361.9 L216.9,363.7 L213.7,365.3 L210.3,366.6 L206.8,367.7 L203.2,368.4 L199.6,368.9 L196.0,369.0 L196.5,369.0 Z"/></clipPath>
<g clip-path="url(#hc2)" stroke="#e0806a" stroke-width="1"><line x1="196.0" y1="307.4" x2="134.4" y2="369.0"/><line x1="201.1" y1="307.4" x2="139.5" y2="369.0"/><line x1="206.2" y1="307.4" x2="144.6" y2="369.0"/><line x1="211.3" y1="307.4" x2="149.7" y2="369.0"/><line x1="216.4" y1="307.4" x2="154.8" y2="369.0"/><line x1="221.5" y1="307.4" x2="159.9" y2="369.0"/><line x1="226.5" y1="307.4" x2="165.0" y2="369.0"/><line x1="231.6" y1="307.4" x2="170.1" y2="369.0"/><line x1="236.7" y1="307.4" x2="175.1" y2="369.0"/><line x1="241.8" y1="307.4" x2="180.2" y2="369.0"/><line x1="246.9" y1="307.4" x2="185.3" y2="369.0"/><line x1="252.0" y1="307.4" x2="190.4" y2="369.0"/><line x1="257.1" y1="307.4" x2="195.5" y2="369.0"/><line x1="262.2" y1="307.4" x2="200.6" y2="369.0"/><line x1="267.3" y1="307.4" x2="205.7" y2="369.0"/><line x1="272.4" y1="307.4" x2="210.8" y2="369.0"/><line x1="277.5" y1="307.4" x2="215.9" y2="369.0"/><line x1="282.5" y1="307.4" x2="221.0" y2="369.0"/><line x1="287.6" y1="307.4" x2="226.1" y2="369.0"/><line x1="292.7" y1="307.4" x2="231.2" y2="369.0"/><line x1="297.8" y1="307.4" x2="236.2" y2="369.0"/></g>
<line x1="233.4" y1="308.7" x2="196.5" y2="368.5" stroke="#e4e4e4" stroke-width="1" />
<path d="M172,327.4 A48,48 0 0 1 220,327.4" stroke="#10f010" stroke-width="1" fill="none" />
<path d="M185.6,308.5 L184.5,308.5 L184.0,309.2 L184.0,311.8 L184.5,312.5 L185.6,312.5 L186.1,311.8 L186.1,311.2 L185.6,310.5 L184.0,310.5 M188.0,308.5 L189.0,308.5 L189.6,309.2 L189.6,311.8 L189.0,312.5 L188.0,312.5 L187.4,311.8 L187.4,309.2 L188.0,308.5 M191.4,308.5 L191.9,308.5 L191.9,309.2 L191.4,309.2 L191.4,308.5" stroke="#10f010" stroke-width="1" fill="none"/>
<polyline points="191,312 195,321" stroke="#10f010" stroke-width="1" fill="none" />
<path d="M170.5,314.5 L171.8,318.5 L173.0,314.5 M174.9,316.5 L176.8,316.5 M178.7,318.5 L178.7,314.5 L180.6,314.5 L181.2,315.2 L181.2,315.9 L180.6,316.5 L178.7,316.5 M183.4,314.5 L184.7,314.5 L185.3,315.2 L185.3,317.8 L184.7,318.5 L183.4,318.5 L182.8,317.8 L182.8,315.2 L183.4,314.5 M186.9,318.5 L186.9,314.5 L188.8,314.5 L189.4,315.2 L189.4,315.9 L188.8,316.5 L186.9,316.5 M188.1,316.5 L189.4,318.5 M191.0,314.5 L193.5,314.5 M192.2,314.5 L192.2,318.5" stroke="#10f010" stroke-width="1" fill="none"/>
<path d="M199.5,298.0 L199.5,294.0 L200.8,294.0 L201.2,294.7 L201.2,295.4 L200.8,296.0 L199.5,296.0 M204.0,294.0 L202.3,294.0 L202.3,298.0 L204.0,298.0 M202.3,296.0 L203.5,296.0 M205.0,298.0 L205.0,294.0 L206.3,294.0 L206.7,294.7 L206.7,295.4 L206.3,296.0 L205.0,296.0 M205.9,296.0 L206.7,298.0 M208.0,294.0 L208.8,294.0 M208.4,294.0 L208.4,298.0 M208.0,298.0 L208.8,298.0 M209.7,298.0 L209.7,294.0 L210.6,296.0 L211.4,294.0 L211.4,298.0 M214.2,294.0 L212.5,294.0 L212.5,298.0 L214.2,298.0 M212.5,296.0 L213.8,296.0 M215.3,294.0 L217.0,294.0 M216.1,294.0 L216.1,298.0 M219.7,294.0 L218.0,294.0 L218.0,298.0 L219.7,298.0 M218.0,296.0 L219.3,296.0 M220.8,298.0 L220.8,294.0 L222.1,294.0 L222.5,294.7 L222.5,295.4 L222.1,296.0 L220.8,296.0 M221.6,296.0 L222.5,298.0" stroke="#10f010" stroke-width="1" fill="none"/>
<path d="M212.0,300.0 L212.5,304.0 L212.9,301.4 L213.4,304.0 L213.9,300.0 M216.9,300.0 L215.0,300.0 L215.0,304.0 L216.9,304.0 M215.0,302.0 L216.5,302.0 M218.1,300.0 L218.1,304.0 L220.0,304.0 M221.1,300.0 L222.5,300.0 L223.0,300.7 L223.0,303.3 L222.5,304.0 L221.1,304.0 L221.1,300.0" stroke="#10f010" stroke-width="1" fill="none"/>
<polyline points="225.5,302 237.5,314" stroke="#10f010" stroke-width="1" fill="none" />
<path d="M244.6,299.2 A55,55 0 0 1 244.4,298.9 A6,6 0 0 0 252.7,301.3 A8.5,8.5 0 1 1 256.9,317.2 A6,6 0 0 0 251.0,323.4 A55,55 0 0 1 251.0,326.6 A6,6 0 0 0 256.9,332.8 A8.5,8.5 0 1 1 252.7,348.7 A6,6 0 0 0 244.4,351.1 A55,55 0 0 1 242.8,353.9 A6,6 0 0 0 244.9,362.2 A8.5,8.5 0 1 1 233.2,373.9 A6,6 0 0 0 224.9,371.8 A55,55 0 0 1 222.1,373.4 A6,6 0 0 0 219.7,381.7 A8.5,8.5 0 1 1 203.8,385.9 A6,6 0 0 0 197.6,380.0 A55,55 0 0 1 194.4,380.0 A6,6 0 0 0 188.2,385.9 A8.5,8.5 0 1 1 172.3,381.7 A6,6 0 0 0 169.9,373.4 A55,55 0 0 1 167.1,371.8 A6,6 0 0 0 158.8,373.9 A8.5,8.5 0 1 1 147.1,362.2 A6,6 0 0 0 149.2,353.9 A55,55 0 0 1 147.6,351.1 A6,6 0 0 0 139.3,348.7 A8.5,8.5 0 1 1 135.1,332.8 A6,6 0 0 0 141.0,326.6 A55,55 0 0 1 141.0,323.4 A6,6 0 0 0 135.1,317.2 A8.5,8.5 0 1 1 139.3,301.3 A6,6 0 0 0 147.6,298.9 A55,55 0 0 1 149.2,296.1 A6,6 0 0 0 147.1,287.8 A8.5,8.5 0 1 1 158.8,276.1 A6,6 0 0 0 167.1,278.2 A55,55 0 0 1 169.9,276.6 A6,6 0 0 0 172.3,268.3 A8.5,8.5 0 1 1 188.2,264.1 A6,6 0 0 0 194.4,270.0 A55,55 0 0 1 196.0,270.0" stroke="#e4e4e4" stroke-width="1" fill="none" />
<circle cx="256.9" cy="308.7" r="2.6" stroke="#e4e4e4" stroke-width="1" fill="none" />
<circle cx="256.9" cy="308.7" r="1.2" stroke="#ff2020" stroke-width="1" fill="none" />
<line x1="250.1" y1="310.5" x2="265.5" y2="306.4" stroke="#ff2020" stroke-width="1" />
<line x1="258.7" y1="315.5" x2="255.0" y2="301.9" stroke="#ff2020" stroke-width="1" />
<circle cx="256.9" cy="341.3" r="2.6" stroke="#e4e4e4" stroke-width="1" fill="none" />
<circle cx="256.9" cy="341.3" r="1.2" stroke="#ff2020" stroke-width="1" fill="none" />
<line x1="250.1" y1="339.5" x2="265.5" y2="343.6" stroke="#ff2020" stroke-width="1" />
<line x1="255.0" y1="348.1" x2="258.7" y2="334.5" stroke="#ff2020" stroke-width="1" />
<circle cx="240.5" cy="369.5" r="2.6" stroke="#e4e4e4" stroke-width="1" fill="none" />
<circle cx="240.5" cy="369.5" r="1.2" stroke="#ff2020" stroke-width="1" fill="none" />
<line x1="235.6" y1="364.6" x2="246.9" y2="375.9" stroke="#ff2020" stroke-width="1" />
<line x1="235.6" y1="374.5" x2="245.5" y2="364.6" stroke="#ff2020" stroke-width="1" />
<circle cx="212.3" cy="385.9" r="2.6" stroke="#e4e4e4" stroke-width="1" fill="none" />
<circle cx="212.3" cy="385.9" r="1.2" stroke="#ff2020" stroke-width="1" fill="none" />
<line x1="210.5" y1="379.1" x2="214.6" y2="394.5" stroke="#ff2020" stroke-width="1" />
<line x1="205.5" y1="387.7" x2="219.1" y2="384.0" stroke="#ff2020" stroke-width="1" />
<circle cx="179.7" cy="385.9" r="2.6" stroke="#e4e4e4" stroke-width="1" fill="none" />
<circle cx="179.7" cy="385.9" r="1.2" stroke="#ff2020" stroke-width="1" fill="none" />
<line x1="181.5" y1="379.1" x2="177.4" y2="394.5" stroke="#ff2020" stroke-width="1" />
<line x1="172.9" y1="384.0" x2="186.5" y2="387.7" stroke="#ff2020" stroke-width="1" />
<circle cx="151.5" cy="369.5" r="2.6" stroke="#e4e4e4" stroke-width="1" fill="none" />
<circle cx="151.5" cy="369.5" r="1.2" stroke="#ff2020" stroke-width="1" fill="none" />
<line x1="156.4" y1="364.6" x2="145.1" y2="375.9" stroke="#ff2020" stroke-width="1" />
<line x1="146.5" y1="364.6" x2="156.4" y2="374.5" stroke="#ff2020" stroke-width="1" />
<circle cx="135.1" cy="341.3" r="2.6" stroke="#e4e4e4" stroke-width="1" fill="none" />
<circle cx="135.1" cy="341.3" r="1.2" stroke="#ff2020" stroke-width="1" fill="none" />
<line x1="141.9" y1="339.5" x2="126.5" y2="343.6" stroke="#ff2020" stroke-width="1" />
<line x1="133.3" y1="334.5" x2="137.0" y2="348.1" stroke="#ff2020" stroke-width="1" />
<circle cx="135.1" cy="308.7" r="2.6" stroke="#e4e4e4" stroke-width="1" fill="none" />
<circle cx="135.1" cy="308.7" r="1.2" stroke="#ff2020" stroke-width="1" fill="none" />
<line x1="141.9" y1="310.5" x2="126.5" y2="306.4" stroke="#ff2020" stroke-width="1" />
<line x1="137.0" y1="301.9" x2="133.3" y2="315.5" stroke="#ff2020" stroke-width="1" />
<circle cx="151.5" cy="280.5" r="2.6" stroke="#e4e4e4" stroke-width="1" fill="none" />
<circle cx="151.5" cy="280.5" r="1.2" stroke="#ff2020" stroke-width="1" fill="none" />
<line x1="156.4" y1="285.4" x2="145.1" y2="274.1" stroke="#ff2020" stroke-width="1" />
<line x1="156.4" y1="275.5" x2="146.5" y2="285.4" stroke="#ff2020" stroke-width="1" />
<circle cx="179.7" cy="264.1" r="2.6" stroke="#e4e4e4" stroke-width="1" fill="none" />
<circle cx="179.7" cy="264.1" r="1.2" stroke="#ff2020" stroke-width="1" fill="none" />
<line x1="181.5" y1="270.9" x2="177.4" y2="255.5" stroke="#ff2020" stroke-width="1" />
<line x1="186.5" y1="262.3" x2="172.9" y2="266.0" stroke="#ff2020" stroke-width="1" />
<polyline points="243,373 249.5,389.5 292,389.5" stroke="#10f010" stroke-width="1" fill="none" />
<path d="M253.0,388.0 L253.0,383.3 L256.0,388.0 L256.0,383.3 M258.2,385.7 L260.5,385.7 M263.5,383.3 L265.0,383.3 L265.7,384.1 L265.7,387.2 L265.0,388.0 L263.5,388.0 L262.7,387.2 L262.7,384.1 L263.5,383.3 M262.7,388.0 L265.7,383.3 M267.6,388.0 L267.6,383.3 L269.8,383.3 L270.6,384.1 L270.6,384.9 L269.8,385.7 L267.6,385.7 M276.1,383.3 L279.1,383.3 M277.6,383.3 L277.6,388.0 M280.9,388.0 L280.9,384.9 L282.4,383.3 L283.9,384.9 L283.9,388.0 M280.9,386.1 L283.9,386.1 M285.8,388.0 L285.8,383.3 L288.0,383.3 L288.8,384.1 L288.8,384.9 L288.0,385.7 L285.8,385.7 M291.3,387.6 L291.3,388.0" stroke="#10f010" stroke-width="1" fill="none"/>
<line x1="116.5" y1="263" x2="116.5" y2="387" stroke="#10f010" stroke-width="1" />
<line x1="113" y1="262.5" x2="195" y2="262.5" stroke="#10f010" stroke-width="1" />
<line x1="113" y1="387.5" x2="195" y2="387.5" stroke="#10f010" stroke-width="1" />
<path d="M104.8,322.7 L106.3,322.7 L107.1,323.4 L107.1,326.3 L106.3,327.0 L104.8,327.0 L104.0,326.3 L104.0,323.4 L104.8,322.7 M104.0,327.0 L107.1,322.7 M112.0,323.4 L111.2,322.7 L109.7,322.7 L108.9,323.4 L108.9,326.3 L109.7,327.0 L111.2,327.0 L112.0,326.3 L112.0,324.8 L110.5,324.8" stroke="#10f010" stroke-width="1" fill="none"/>
<circle cx="93" cy="368" r="7" stroke="#10f010" stroke-width="1" fill="none" />
<path d="M90.3,365.6 L91.4,370.4 L92.4,365.6 M94.4,366.4 L94.9,365.6 L94.9,370.4" stroke="#10f010" stroke-width="1" fill="none"/>
<polyline points="100,368.5 121,368.5 166,344" stroke="#10f010" stroke-width="1" fill="none" />
<circle cx="145" cy="64" r="7" stroke="#10f010" stroke-width="1" fill="none" />
<path d="M142.5,62.4 L143.1,61.6 L143.1,66.4 M145.3,62.4 L145.9,61.6 L147.1,61.6 L147.7,62.4 L147.7,63.2 L147.1,64.0 L146.5,64.0 M147.1,64.0 L147.7,64.8 L147.7,65.6 L147.1,66.4 L145.9,66.4 L145.3,65.6" stroke="#10f010" stroke-width="1" fill="none"/>
<polyline points="147.5,71 152.5,86" stroke="#10f010" stroke-width="1" fill="none" />
<circle cx="168.5" cy="64" r="7" stroke="#10f010" stroke-width="1" fill="none" />
<path d="M166.0,62.4 L166.6,61.6 L166.6,66.4 M170.6,61.6 L169.4,61.6 L168.8,62.4 L168.8,65.6 L169.4,66.4 L170.6,66.4 L171.2,65.6 L171.2,64.8 L170.6,64.0 L168.8,64.0" stroke="#10f010" stroke-width="1" fill="none"/>
<polyline points="173.5,69.5 187.5,83.5" stroke="#10f010" stroke-width="1" fill="none" />
<circle cx="262" cy="121" r="7" stroke="#10f010" stroke-width="1" fill="none" />
<path d="M259.6,119.4 L260.3,118.6 L260.3,123.4 M263.1,119.4 L263.7,118.6 L263.7,123.4" stroke="#10f010" stroke-width="1" fill="none"/>
<polyline points="255.5,118 201,98.5" stroke="#10f010" stroke-width="1" fill="none" />
<circle cx="91.5" cy="148.5" r="7" stroke="#10f010" stroke-width="1" fill="none" />
<path d="M89.0,146.9 L89.6,146.1 L89.6,150.9 M92.4,146.1 L93.6,146.1 L94.2,146.9 L94.2,147.7 L93.6,148.5 L92.4,148.5 L91.8,149.3 L91.8,150.1 L92.4,150.9 L93.6,150.9 L94.2,150.1 L94.2,149.3 L93.6,148.5 M92.4,148.5 L91.8,147.7 L91.8,146.9 L92.4,146.1" stroke="#10f010" stroke-width="1" fill="none"/>
<polyline points="98.5,147.5 194.5,105" stroke="#10f010" stroke-width="1" fill="none" />
<circle cx="91.5" cy="166.5" r="7" stroke="#10f010" stroke-width="1" fill="none" />
<path d="M89.0,164.9 L89.6,164.1 L89.6,168.9 M93.6,168.9 L93.6,164.1 L91.8,167.3 L94.2,167.3" stroke="#10f010" stroke-width="1" fill="none"/>
<polyline points="98.5,165 192,114" stroke="#10f010" stroke-width="1" fill="none" />
<circle cx="118" cy="199.5" r="7" stroke="#10f010" stroke-width="1" fill="none" />
<path d="M114.4,197.1 L115.4,197.1 L115.8,197.9 L115.8,198.7 L115.4,199.5 L114.4,199.5 L114.0,200.3 L114.0,201.1 L114.4,201.9 L115.4,201.9 L115.8,201.1 L115.8,200.3 L115.4,199.5 M114.4,199.5 L114.0,198.7 L114.0,197.9 L114.4,197.1 M117.6,199.5 L119.0,199.5 M120.9,197.9 L121.4,197.1 L121.4,201.9" stroke="#10f010" stroke-width="1" fill="none"/>
<polyline points="125,204 137.5,225" stroke="#10f010" stroke-width="1" fill="none" />
<circle cx="118" cy="220.5" r="7" stroke="#10f010" stroke-width="1" fill="none" />
<path d="M114.4,218.1 L115.3,218.1 L115.7,218.9 L115.7,219.7 L115.3,220.5 L114.4,220.5 L114.0,221.3 L114.0,222.1 L114.4,222.9 L115.3,222.9 L115.7,222.1 L115.7,221.3 L115.3,220.5 M114.4,220.5 L114.0,219.7 L114.0,218.9 L114.4,218.1 M117.3,220.5 L118.7,220.5 M120.3,218.9 L120.7,218.1 L121.6,218.1 L122.0,218.9 L122.0,219.7 L120.3,222.9 L122.0,222.9" stroke="#10f010" stroke-width="1" fill="none"/>
<polyline points="125.5,223 135.5,227" stroke="#10f010" stroke-width="1" fill="none" />
<circle cx="266" cy="199.5" r="7" stroke="#10f010" stroke-width="1" fill="none" />
<path d="M264.6,197.9 L265.3,197.1 L266.7,197.1 L267.3,197.9 L267.3,198.7 L266.7,199.5 L266.0,199.5 M266.7,199.5 L267.3,200.3 L267.3,201.1 L266.7,201.9 L265.3,201.9 L264.6,201.1" stroke="#10f010" stroke-width="1" fill="none"/>
<polyline points="259,200 243.5,201.5" stroke="#10f010" stroke-width="1" fill="none" />
<circle cx="279" cy="230" r="7" stroke="#10f010" stroke-width="1" fill="none" />
<path d="M277.6,227.6 L280.3,227.6 L278.3,232.4" stroke="#10f010" stroke-width="1" fill="none"/>
<polyline points="272,230.5 258.5,231" stroke="#10f010" stroke-width="1" fill="none" />
<circle cx="279" cy="246.5" r="7" stroke="#10f010" stroke-width="1" fill="none" />
<path d="M278.0,244.9 L279.0,244.1 L279.0,248.9" stroke="#10f010" stroke-width="1" fill="none"/>
<polyline points="272,247 245.5,253.5" stroke="#10f010" stroke-width="1" fill="none" />
<line x1="326.5" y1="51.5" x2="431.5" y2="51.5" stroke="#10f010" stroke-width="1" />
<line x1="326.5" y1="51.5" x2="326.5" y2="89" stroke="#10f010" stroke-width="1" />
<line x1="431.5" y1="51.5" x2="431.5" y2="89" stroke="#10f010" stroke-width="1" />
<rect x="325.5" y="50.5" width="2" height="2" stroke="#10f010" stroke-width="0" fill="#10f010"/>
<rect x="430.5" y="50.5" width="2" height="2" stroke="#10f010" stroke-width="0" fill="#10f010"/>
<path d="M374.9,45.3 L376.6,45.3 L377.4,46.1 L377.4,49.2 L376.6,50.0 L374.9,50.0 L374.0,49.2 L374.0,46.1 L374.9,45.3 M374.0,50.0 L377.4,45.3 M379.6,45.3 L380.4,50.0 L381.3,46.9 L382.1,50.0 L383.0,45.3" stroke="#10f010" stroke-width="1" fill="none"/>
<path d="M368,86.5 L330,86.5 Q326.5,86.5 326.5,90.2 Q326.5,94 330,94 L368,94" stroke="#e4e4e4" stroke-width="1" fill="none" />
<line x1="330" y1="88.5" x2="368" y2="88.5" stroke="#e4e4e4" stroke-width="1" />
<path d="M389,86.5 L428,86.5 Q431.5,86.5 431.5,90.2 Q431.5,94 428,94 L389,94" stroke="#e4e4e4" stroke-width="1" fill="none" />
<polyline points="330,91.5 348,91.5" stroke="#e4e4e4" stroke-width="1" fill="none" />
<polyline points="370,92 370,84 372,82 374,82" stroke="#e4e4e4" stroke-width="1" fill="none" />
<polyline points="383,82 386,82 388.5,84 388.5,92" stroke="#e4e4e4" stroke-width="1" fill="none" />
<line x1="383" y1="88.5" x2="389" y2="88.5" stroke="#e4e4e4" stroke-width="1" />
<polyline points="368,94 368,112.5 388.5,112.5 388.5,94" stroke="#e4e4e4" stroke-width="1" fill="none" />
<line x1="370" y1="110.5" x2="387.5" y2="110.5" stroke="#e4e4e4" stroke-width="1" />
<polyline points="374.5,112 374.5,77 376,75.5 381.5,75.5 383,77 383,200" stroke="#e4e4e4" stroke-width="1" fill="none" />
<line x1="374.5" y1="112" x2="374.5" y2="200" stroke="#e4e4e4" stroke-width="1" />
<line x1="376.5" y1="80" x2="376.5" y2="199" stroke="#ff2020" stroke-width="1" />
<line x1="381.5" y1="90" x2="381.5" y2="199" stroke="#ff2020" stroke-width="1" />
<line x1="378.5" y1="72" x2="378.5" y2="410" stroke="#ff2020" stroke-width="1" stroke-dasharray="7,2,1.5,2"/>
<polyline points="374.5,199.5 383,199.5" stroke="#e4e4e4" stroke-width="1" fill="none" />
<polyline points="368,99 361.5,105 361.5,227" stroke="#e4e4e4" stroke-width="1" fill="none" />
<line x1="364.5" y1="103.5" x2="364.5" y2="227" stroke="#e4e4e4" stroke-width="1" />
<line x1="367.5" y1="110.5" x2="367.5" y2="227" stroke="#e4e4e4" stroke-width="1" />
<polyline points="389,99 396.5,105.5 396.5,227" stroke="#e4e4e4" stroke-width="1" fill="none" />
<line x1="393.5" y1="103.5" x2="393.5" y2="227" stroke="#e4e4e4" stroke-width="1" />
<line x1="389.5" y1="110.5" x2="389.5" y2="227" stroke="#e4e4e4" stroke-width="1" />
<rect x="373.5" y="212.5" width="10" height="10" stroke="#e4e4e4" stroke-width="1" fill="none"/>
<line x1="371" y1="215.5" x2="387" y2="215.5" stroke="#ff2020" stroke-width="1" />
<line x1="371" y1="221.5" x2="387" y2="221.5" stroke="#ff2020" stroke-width="1" />
<line x1="376.5" y1="206" x2="376.5" y2="212" stroke="#e4e4e4" stroke-width="1" />
<line x1="381.5" y1="206" x2="381.5" y2="212" stroke="#e4e4e4" stroke-width="1" />
<polyline points="358.5,227 358.5,242.5 373,242.5 373,246" stroke="#e4e4e4" stroke-width="1" fill="none" />
<polyline points="399.5,227 399.5,242.5 384,242.5 384,246" stroke="#e4e4e4" stroke-width="1" fill="none" />
<rect x="360.5" y="229.5" width="12" height="5" stroke="#e4e4e4" stroke-width="1" fill="none"/>
<rect x="362.5" y="235.5" width="10" height="5" stroke="#e4e4e4" stroke-width="1" fill="none"/>
<rect x="386" y="229.5" width="12" height="5" stroke="#e4e4e4" stroke-width="1" fill="none"/>
<rect x="388" y="235.5" width="10" height="5" stroke="#e4e4e4" stroke-width="1" fill="none"/>
<line x1="361.5" y1="226" x2="361.5" y2="241" stroke="#ff2020" stroke-width="1" />
<line x1="366.5" y1="228" x2="366.5" y2="240" stroke="#ff2020" stroke-width="1" />
<line x1="391.5" y1="226" x2="391.5" y2="241" stroke="#ff2020" stroke-width="1" />
<line x1="396.5" y1="228" x2="396.5" y2="240" stroke="#ff2020" stroke-width="1" />
<polyline points="373,228 375,226 382,226 384,228" stroke="#e4e4e4" stroke-width="1" fill="none" />
<rect x="375.5" y="237.5" width="6" height="6" stroke="#ff2020" stroke-width="1" fill="none"/>
<line x1="368.5" y1="246" x2="368.5" y2="381" stroke="#e4e4e4" stroke-width="1" />
<line x1="371.5" y1="246" x2="371.5" y2="381" stroke="#e4e4e4" stroke-width="1" />
<line x1="385.5" y1="246" x2="385.5" y2="381" stroke="#e4e4e4" stroke-width="1" />
<line x1="388.5" y1="246" x2="388.5" y2="381" stroke="#e4e4e4" stroke-width="1" />
<line x1="372.5" y1="251" x2="372.5" y2="278" stroke="#e0806a" stroke-width="1" />
<line x1="384.5" y1="251" x2="384.5" y2="278" stroke="#e0806a" stroke-width="1" />
<polyline points="365.5,246 368.5,250" stroke="#e4e4e4" stroke-width="1" fill="none" />
<polyline points="391.5,246 388.5,250" stroke="#e4e4e4" stroke-width="1" fill="none" />
<line x1="368" y1="278.5" x2="389" y2="278.5" stroke="#e4e4e4" stroke-width="1" />
<line x1="367" y1="325.5" x2="390" y2="325.5" stroke="#ff2020" stroke-width="1" />
<line x1="381.5" y1="320" x2="381.5" y2="370" stroke="#e4e4e4" stroke-width="1" />
<line x1="310.5" y1="271" x2="310.5" y2="379" stroke="#10f010" stroke-width="1" />
<line x1="308" y1="270.5" x2="367" y2="270.5" stroke="#10f010" stroke-width="1" />
<line x1="308" y1="379.5" x2="368" y2="379.5" stroke="#10f010" stroke-width="1" />
<line x1="318.5" y1="281" x2="318.5" y2="369" stroke="#10f010" stroke-width="1" />
<line x1="318" y1="280.5" x2="378" y2="280.5" stroke="#10f010" stroke-width="1" />
<line x1="318" y1="368.5" x2="368" y2="368.5" stroke="#10f010" stroke-width="1" />
<path d="M0.9,-4.3 L2.6,-4.3 L3.4,-3.6 L3.4,-0.7 L2.6,0.0 L0.9,0.0 L0.0,-0.7 L0.0,-3.6 L0.9,-4.3 M0.0,0.0 L3.4,-4.3 M9.0,-3.6 L8.1,-4.3 L6.4,-4.3 L5.6,-3.6 L5.6,-0.7 L6.4,0.0 L8.1,0.0 L9.0,-0.7" stroke="#10f010" stroke-width="1" fill="none" transform="translate(308,328.5) rotate(-90)"/>
<path d="M0.9,-4.3 L2.6,-4.3 L3.4,-3.6 L3.4,-0.7 L2.6,0.0 L0.9,0.0 L0.0,-0.7 L0.0,-3.6 L0.9,-4.3 M0.0,0.0 L3.4,-4.3 M5.6,-3.0 L8.1,-3.0 L9.0,-2.5 L9.0,-0.5 L8.1,0.0 L5.6,0.0 L5.6,-3.0" stroke="#10f010" stroke-width="1" fill="none" transform="translate(317,328.5) rotate(-90)"/>
<circle cx="406.5" cy="286.5" r="7" stroke="#10f010" stroke-width="1" fill="none" />
<path d="M403.8,284.1 L404.9,288.9 L405.9,284.1 M407.9,284.9 L408.4,284.1 L408.4,288.9" stroke="#10f010" stroke-width="1" fill="none"/>
<polyline points="400,290 379.5,302.5" stroke="#10f010" stroke-width="1" fill="none" />
<path d="M400.5,297.9 L401.5,302.6 L402.5,297.9 M404.0,300.3 L405.4,300.3 M406.9,302.6 L406.9,297.9 L408.4,297.9 L408.9,298.7 L408.9,299.5 L408.4,300.3 L406.9,300.3 M410.6,297.9 L411.6,297.9 L412.1,298.7 L412.1,301.8 L411.6,302.6 L410.6,302.6 L410.1,301.8 L410.1,298.7 L410.6,297.9 M413.3,302.6 L413.3,297.9 L414.8,297.9 L415.3,298.7 L415.3,299.5 L414.8,300.3 L413.3,300.3 M414.3,300.3 L415.3,302.6 M416.5,297.9 L418.5,297.9 M417.5,297.9 L417.5,302.6" stroke="#00d4a2" stroke-width="1" fill="none"/>
<path d="M400.5,308.9 L400.5,304.2 L402.1,304.2 L402.6,305.0 L402.6,305.8 L402.1,306.6 L400.5,306.6 M406.0,304.2 L403.9,304.2 L403.9,308.9 L406.0,308.9 M403.9,306.6 L405.4,306.6 M407.2,308.9 L407.2,304.2 L408.8,304.2 L409.3,305.0 L409.3,305.8 L408.8,306.6 L407.2,306.6 M408.3,306.6 L409.3,308.9 M410.8,304.2 L411.9,304.2 M411.3,304.2 L411.3,308.9 M410.8,308.9 L411.9,308.9 M413.0,308.9 L413.0,304.2 L414.0,306.6 L415.0,304.2 L415.0,308.9 M418.4,304.2 L416.3,304.2 L416.3,308.9 L418.4,308.9 M416.3,306.6 L417.9,306.6 M419.7,304.2 L421.8,304.2 M420.7,304.2 L420.7,308.9 M425.1,304.2 L423.1,304.2 L423.1,308.9 L425.1,308.9 M423.1,306.6 L424.6,306.6 M426.4,308.9 L426.4,304.2 L428.0,304.2 L428.5,305.0 L428.5,305.8 L428.0,306.6 L426.4,306.6 M427.5,306.6 L428.5,308.9 M432.3,304.2 L432.8,308.9 L433.4,305.8 L433.9,308.9 L434.4,304.2 M437.8,304.2 L435.7,304.2 L435.7,308.9 L437.8,308.9 M435.7,306.6 L437.2,306.6 M439.0,304.2 L439.0,308.9 L441.1,308.9 M442.4,304.2 L444.0,304.2 L444.5,305.0 L444.5,308.1 L444.0,308.9 L442.4,308.9 L442.4,304.2" stroke="#00d4a2" stroke-width="1" fill="none"/>
<path d="M400.5,312.1 L401.0,311.3 L401.9,311.3 L402.3,312.1 L402.3,312.9 L401.9,313.7 L401.4,313.7 M401.9,313.7 L402.3,314.4 L402.3,315.2 L401.9,316.0 L401.0,316.0 L400.5,315.2 M405.3,311.3 L403.5,316.0 M406.6,312.1 L407.1,311.3 L407.1,316.0 M409.9,311.3 L409.0,311.3 L408.5,312.1 L408.5,315.2 L409.0,316.0 L409.9,316.0 L410.4,315.2 L410.4,314.4 L409.9,313.7 L408.5,313.7 M412.0,311.3 L412.0,312.5 M412.9,311.3 L412.9,312.5 M416.7,312.1 L417.2,311.3 L418.1,311.3 L418.6,312.1 L418.6,312.9 L418.1,313.7 L417.7,313.7 M418.1,313.7 L418.6,314.4 L418.6,315.2 L418.1,316.0 L417.2,316.0 L416.7,315.2 M420.2,311.3 L421.1,311.3 L421.6,312.1 L421.6,315.2 L421.1,316.0 L420.2,316.0 L419.7,315.2 L419.7,312.1 L420.2,311.3 M424.1,316.0 L424.1,311.3 L422.7,314.4 L424.5,314.4 M427.5,312.1 L427.1,311.3 L426.1,311.3 L425.7,312.1 L425.7,312.9 L426.1,313.7 L427.1,313.7 L427.5,314.4 L427.5,315.2 L427.1,316.0 L426.1,316.0 L425.7,315.2 M430.5,312.1 L430.0,311.3 L429.1,311.3 L428.7,312.1 L428.7,312.9 L429.1,313.7 L430.0,313.7 L430.5,314.4 L430.5,315.2 L430.0,316.0 L429.1,316.0 L428.7,315.2" stroke="#00d4a2" stroke-width="1" fill="none"/>
<path d="M400.5,323.1 L400.5,318.4 L401.9,318.4 L402.4,319.2 L402.4,320.0 L401.9,320.8 L400.5,320.8 M403.6,318.4 L403.6,323.1 L405.4,323.1 M406.6,323.1 L406.6,320.0 L407.6,318.4 L408.5,320.0 L408.5,323.1 M406.6,321.2 L408.5,321.2 M409.7,318.4 L411.6,318.4 M410.6,318.4 L410.6,323.1 M414.6,318.4 L412.7,318.4 L412.7,323.1 L414.6,323.1 M412.7,320.8 L414.1,320.8 M417.7,319.2 L417.2,318.4 L416.2,318.4 L415.8,319.2 L415.8,320.0 L416.2,320.8 L417.2,320.8 L417.7,321.5 L417.7,322.3 L417.2,323.1 L416.2,323.1 L415.8,322.3 M421.1,318.4 L422.5,318.4 L423.0,319.2 L423.0,322.3 L422.5,323.1 L421.1,323.1 L421.1,318.4 M424.6,318.4 L425.6,318.4 L426.1,319.2 L426.1,322.3 L425.6,323.1 L424.6,323.1 L424.2,322.3 L424.2,319.2 L424.6,318.4 M427.2,318.4 L427.7,323.1 L428.2,320.0 L428.6,323.1 L429.1,318.4 M430.3,323.1 L430.3,318.4 L432.2,323.1 L432.2,318.4 M435.2,319.2 L434.8,318.4 L433.8,318.4 L433.3,319.2 L433.3,320.0 L433.8,320.8 L434.8,320.8 L435.2,321.5 L435.2,322.3 L434.8,323.1 L433.8,323.1 L433.3,322.3 M436.4,318.4 L438.3,318.4 M437.3,318.4 L437.3,323.1 M439.4,323.1 L439.4,318.4 L440.9,318.4 L441.3,319.2 L441.3,320.0 L440.9,320.8 L439.4,320.8 M440.4,320.8 L441.3,323.1 M444.4,318.4 L442.5,318.4 L442.5,323.1 L444.4,323.1 M442.5,320.8 L443.9,320.8 M445.6,323.1 L445.6,320.0 L446.5,318.4 L447.4,320.0 L447.4,323.1 M445.6,321.2 L447.4,321.2 M448.6,323.1 L448.6,318.4 L449.6,320.8 L450.5,318.4 L450.5,323.1" stroke="#00d4a2" stroke-width="1" fill="none"/>
<path d="M400.9,325.5 L401.8,325.5 L402.3,326.3 L402.3,329.4 L401.8,330.2 L400.9,330.2 L400.5,329.4 L400.5,326.3 L400.9,325.5 M405.1,325.5 L403.3,325.5 L403.3,330.2 M403.3,327.9 L404.6,327.9 M410.0,326.3 L409.6,325.5 L408.7,325.5 L408.3,326.3 L408.3,327.1 L408.7,327.9 L409.6,327.9 L410.0,328.6 L410.0,329.4 L409.6,330.2 L408.7,330.2 L408.3,329.4 M412.8,325.5 L411.1,325.5 L411.1,330.2 L412.8,330.2 M411.1,327.9 L412.4,327.9 M413.9,330.2 L413.9,327.1 L414.8,325.5 L415.7,327.1 L415.7,330.2 M413.9,328.2 L415.7,328.2 M416.7,325.5 L418.5,325.5 M417.6,325.5 L417.6,330.2" stroke="#00d4a2" stroke-width="1" fill="none"/>
<circle cx="376.5" cy="371" r="10" stroke="#10f010" stroke-width="1" fill="none" />
<polyline points="385,365 404,355.5 412.5,355.5" stroke="#10f010" stroke-width="1" fill="none" />
<path d="M403.0,348.2 L403.0,349.3 M404.1,348.2 L404.1,349.3 M405.9,348.2 L408.1,352.5 M408.1,348.2 L405.9,352.5 M409.9,348.2 L409.9,349.3 M411.0,348.2 L411.0,349.3" stroke="#10f010" stroke-width="1" fill="none"/>
<circle cx="422.5" cy="371" r="7" stroke="#10f010" stroke-width="1" fill="none" />
<path d="M423.8,368.6 L421.1,368.6 L421.1,371.0 L423.2,371.0 L423.8,371.8 L423.8,372.6 L423.2,373.4 L421.8,373.4 L421.1,372.6" stroke="#10f010" stroke-width="1" fill="none"/>
<polyline points="415.5,371.5 381,371.5" stroke="#10f010" stroke-width="1" fill="none" />
<rect x="371.5" y="365.5" width="13" height="6" stroke="#e4e4e4" stroke-width="1" fill="none"/>
<polyline points="368.5,381 368.5,405.5 388.5,405.5 388.5,381" stroke="#10f010" stroke-width="1" fill="none" />
<line x1="368.5" y1="381.5" x2="388.5" y2="381.5" stroke="#e4e4e4" stroke-width="1" />
<line x1="364" y1="384.5" x2="392" y2="384.5" stroke="#ff2020" stroke-width="1" />
<line x1="364" y1="388.5" x2="392" y2="388.5" stroke="#ff2020" stroke-width="1" />
<line x1="371.5" y1="381" x2="371.5" y2="398" stroke="#e4e4e4" stroke-width="1" />
<line x1="385.5" y1="381" x2="385.5" y2="398" stroke="#e4e4e4" stroke-width="1" />
<line x1="368" y1="392.5" x2="389" y2="392.5" stroke="#e4e4e4" stroke-width="1" />
<line x1="388" y1="397.5" x2="395" y2="397.5" stroke="#10f010" stroke-width="1" />
<line x1="390.5" y1="394" x2="390.5" y2="401" stroke="#10f010" stroke-width="1" />
<path d="M396.0,396.5 L396.5,396.0 L397.6,396.0 L398.1,396.5 L398.1,397.0 L396.0,399.0 L398.1,399.0 M399.9,398.7 L399.9,399.0 M401.4,396.0 L402.5,396.0 L403.0,396.5 L403.0,398.5 L402.5,399.0 L401.4,399.0 L400.9,398.5 L400.9,396.5 L401.4,396.0" stroke="#10f010" stroke-width="1" fill="none"/>
<circle cx="406.5" cy="67.5" r="7.5" stroke="#10f010" stroke-width="1" fill="none" />
<path d="M404.0,65.9 L404.6,65.1 L404.6,69.9 M409.2,65.1 L406.8,65.1 L406.8,67.5 L408.6,67.5 L409.2,68.3 L409.2,69.1 L408.6,69.9 L407.4,69.9 L406.8,69.1" stroke="#10f010" stroke-width="1" fill="none"/>
<polyline points="400,74.5 388.5,83.5" stroke="#10f010" stroke-width="1" fill="none" />
<circle cx="330.5" cy="150" r="7" stroke="#10f010" stroke-width="1" fill="none" />
<path d="M331.2,152.4 L331.2,147.6 L329.1,150.8 L331.8,150.8" stroke="#10f010" stroke-width="1" fill="none"/>
<polyline points="337.5,150.5 373.5,153.5" stroke="#10f010" stroke-width="1" fill="none" />
<circle cx="330.5" cy="168" r="7" stroke="#10f010" stroke-width="1" fill="none" />
<path d="M329.1,166.4 L329.8,165.6 L331.2,165.6 L331.8,166.4 L331.8,167.2 L331.2,168.0 L330.5,168.0 M331.2,168.0 L331.8,168.8 L331.8,169.6 L331.2,170.4 L329.8,170.4 L329.1,169.6" stroke="#10f010" stroke-width="1" fill="none"/>
<polyline points="337.5,167 360,162.5" stroke="#10f010" stroke-width="1" fill="none" />
<circle cx="330.5" cy="186.5" r="7" stroke="#10f010" stroke-width="1" fill="none" />
<path d="M325.3,184.9 L325.7,184.1 L325.7,188.9 M327.9,184.1 L328.8,184.1 L329.3,184.9 L329.3,188.1 L328.8,188.9 L327.9,188.9 L327.4,188.1 L327.4,184.9 L327.9,184.1 M331.0,186.5 L332.3,186.5 M334.1,184.9 L334.5,184.1 L335.4,184.1 L335.9,184.9 L335.9,185.7 L334.1,188.9 L335.9,188.9" stroke="#10f010" stroke-width="1" fill="none"/>
<polyline points="338.5,194 372.5,216" stroke="#10f010" stroke-width="1" fill="none" />
<circle cx="330.5" cy="206" r="7" stroke="#10f010" stroke-width="1" fill="none" />
<path d="M325.3,204.4 L325.8,203.6 L325.8,208.4 M328.0,203.6 L329.0,203.6 L329.5,204.4 L329.5,207.6 L329.0,208.4 L328.0,208.4 L327.6,207.6 L327.6,204.4 L328.0,203.6 M331.3,206.0 L332.7,206.0 M334.7,204.4 L335.2,203.6 L335.2,208.4" stroke="#10f010" stroke-width="1" fill="none"/>
<polyline points="337.5,208.5 372,221" stroke="#10f010" stroke-width="1" fill="none" />
<circle cx="330.5" cy="224" r="7" stroke="#10f010" stroke-width="1" fill="none" />
<path d="M328.3,224.0 L326.9,224.0 L326.4,223.2 L326.4,222.4 L326.9,221.6 L327.9,221.6 L328.3,222.4 L328.3,225.6 L327.9,226.4 L326.9,226.4 M330.1,224.0 L331.5,224.0 M333.4,222.4 L333.9,221.6 L333.9,226.4" stroke="#10f010" stroke-width="1" fill="none"/>
<polyline points="337.5,224.5 358.5,227" stroke="#10f010" stroke-width="1" fill="none" />
<circle cx="330.5" cy="242" r="7" stroke="#10f010" stroke-width="1" fill="none" />
<path d="M328.2,242.0 L326.9,242.0 L326.4,241.2 L326.4,240.4 L326.9,239.6 L327.8,239.6 L328.2,240.4 L328.2,243.6 L327.8,244.4 L326.9,244.4 M329.8,242.0 L331.2,242.0 M332.8,240.4 L333.2,239.6 L334.1,239.6 L334.6,240.4 L334.6,241.2 L332.8,244.4 L334.6,244.4" stroke="#10f010" stroke-width="1" fill="none"/>
<polyline points="337.5,239.5 360,228.5" stroke="#10f010" stroke-width="1" fill="none" />
<circle cx="330.5" cy="258" r="7" stroke="#10f010" stroke-width="1" fill="none" />
<path d="M331.2,255.6 L329.8,255.6 L329.1,256.4 L329.1,259.6 L329.8,260.4 L331.2,260.4 L331.8,259.6 L331.8,258.8 L331.2,258.0 L329.1,258.0" stroke="#10f010" stroke-width="1" fill="none"/>
<polyline points="337.5,255.5 372.5,244.5" stroke="#10f010" stroke-width="1" fill="none" />
<clipPath id="dclip"><circle cx="519.2" cy="154.7" r="66.7"/></clipPath>
<g clip-path="url(#dclip)">
<line x1="507.5" y1="86" x2="507.5" y2="230" stroke="#e4e4e4" stroke-width="1" />
<line x1="524.5" y1="120" x2="524.5" y2="230" stroke="#e4e4e4" stroke-width="1" />
<line x1="509.5" y1="88" x2="509.5" y2="225" stroke="#ff2020" stroke-width="1" />
<line x1="516.5" y1="85" x2="516.5" y2="225" stroke="#ff2020" stroke-width="1" stroke-dasharray="7,2,1.5,2"/>
<line x1="523.5" y1="180" x2="523.5" y2="225" stroke="#ff2020" stroke-width="1" />
<line x1="507.5" y1="88.5" x2="532" y2="88.5" stroke="#e4e4e4" stroke-width="1" />
<rect x="516.5" y="88.5" width="11" height="3" stroke="#e4e4e4" stroke-width="1" fill="none"/>
<line x1="523.5" y1="87" x2="523.5" y2="92" stroke="#ff2020" stroke-width="1" />
<line x1="496.5" y1="95.5" x2="538" y2="95.5" stroke="#e4e4e4" stroke-width="1" />
<line x1="496.5" y1="95.5" x2="496.5" y2="104.5" stroke="#e4e4e4" stroke-width="1" />
<line x1="526.5" y1="95.5" x2="526.5" y2="104.5" stroke="#e4e4e4" stroke-width="1" />
<line x1="537.5" y1="95.5" x2="537.5" y2="104.5" stroke="#e4e4e4" stroke-width="1" />
<line x1="487" y1="104.5" x2="590" y2="104.5" stroke="#e4e4e4" stroke-width="1" />
<line x1="487" y1="105.5" x2="590" y2="105.5" stroke="#e4e4e4" stroke-width="1" />
<line x1="470.5" y1="108.5" x2="494.5" y2="108.5" stroke="#e4e4e4" stroke-width="1" />
<line x1="470.5" y1="110.5" x2="494.5" y2="110.5" stroke="#e4e4e4" stroke-width="1" />
<line x1="494.5" y1="105.5" x2="494.5" y2="121.5" stroke="#e4e4e4" stroke-width="1" />
<line x1="461" y1="118.5" x2="494.5" y2="118.5" stroke="#e4e4e4" stroke-width="1" />
<line x1="461" y1="120.5" x2="494.5" y2="120.5" stroke="#e4e4e4" stroke-width="1" />
<line x1="502.5" y1="105" x2="502.5" y2="123.5" stroke="#e4e4e4" stroke-width="1" />
<rect x="502.5" y="121.5" width="2" height="2" stroke="#e4e4e4" stroke-width="1" fill="none"/>
<line x1="502.5" y1="93" x2="502.5" y2="99" stroke="#ff2020" stroke-width="1" />
<polyline points="516.5,159.5 516.5,121.5 590,121.5" stroke="#e4e4e4" stroke-width="1" fill="none" />
<line x1="516.5" y1="124.5" x2="590" y2="124.5" stroke="#e4e4e4" stroke-width="1" />
<line x1="516.5" y1="126.5" x2="542" y2="126.5" stroke="#e4e4e4" stroke-width="1" />
<line x1="542.5" y1="126.5" x2="542.5" y2="159.5" stroke="#e4e4e4" stroke-width="1" />
<polyline points="491.5,159.5 491.5,127 493,125 504,125" stroke="#e4e4e4" stroke-width="1" fill="none" />
<rect x="496.5" y="141.5" width="8" height="23" stroke="#e4e4e4" stroke-width="1" fill="none"/>
<line x1="495" y1="145.5" x2="506" y2="145.5" stroke="#ff2020" stroke-width="1" />
<line x1="495" y1="159.5" x2="506" y2="159.5" stroke="#ff2020" stroke-width="1" />
<line x1="500.5" y1="140" x2="500.5" y2="164" stroke="#ff2020" stroke-width="1" />
<circle cx="521" cy="150" r="3" stroke="#e4e4e4" stroke-width="1" fill="none" />
<line x1="488.5" y1="159.5" x2="554.5" y2="159.5" stroke="#e4e4e4" stroke-width="1" />
<line x1="569" y1="159.5" x2="575" y2="159.5" stroke="#e4e4e4" stroke-width="1" />
<line x1="455" y1="161.5" x2="488" y2="161.5" stroke="#e4e4e4" stroke-width="1" />
<line x1="462.5" y1="169.5" x2="571" y2="169.5" stroke="#e4e4e4" stroke-width="1" />
<line x1="462.5" y1="184.5" x2="571" y2="184.5" stroke="#e4e4e4" stroke-width="1" />
<line x1="462.5" y1="161" x2="462.5" y2="185" stroke="#e4e4e4" stroke-width="1" />
<line x1="570.5" y1="161" x2="570.5" y2="185" stroke="#e4e4e4" stroke-width="1" />
<rect x="465.7" y="154.5" width="11" height="6.5" stroke="#e4e4e4" stroke-width="1" fill="none"/>
<rect x="465.7" y="180.5" width="11" height="5.5" stroke="#e4e4e4" stroke-width="1" fill="none"/>
<line x1="467.7" y1="151" x2="467.7" y2="186" stroke="#e4e4e4" stroke-width="1" />
<line x1="474.7" y1="151" x2="474.7" y2="186" stroke="#e4e4e4" stroke-width="1" />
<line x1="471.2" y1="149" x2="471.2" y2="188" stroke="#ff2020" stroke-width="1" />
<rect x="556.6" y="154.5" width="11" height="6.5" stroke="#e4e4e4" stroke-width="1" fill="none"/>
<rect x="556.6" y="180.5" width="11" height="5.5" stroke="#e4e4e4" stroke-width="1" fill="none"/>
<line x1="558.6" y1="151" x2="558.6" y2="186" stroke="#e4e4e4" stroke-width="1" />
<line x1="565.6" y1="151" x2="565.6" y2="186" stroke="#e4e4e4" stroke-width="1" />
<line x1="562.1" y1="149" x2="562.1" y2="188" stroke="#ff2020" stroke-width="1" />
<line x1="467.5" y1="185" x2="467.5" y2="230" stroke="#e4e4e4" stroke-width="1" />
<line x1="489.5" y1="185" x2="489.5" y2="230" stroke="#e4e4e4" stroke-width="1" />
<line x1="544.5" y1="185" x2="544.5" y2="230" stroke="#e4e4e4" stroke-width="1" />
<line x1="565.5" y1="185" x2="565.5" y2="230" stroke="#e4e4e4" stroke-width="1" />
<line x1="491.5" y1="169.5" x2="491.5" y2="184.5" stroke="#e4e4e4" stroke-width="1" />
<line x1="506.5" y1="169.5" x2="506.5" y2="184.5" stroke="#e4e4e4" stroke-width="1" />
</g>
<circle cx="519.2" cy="154.7" r="66.7" stroke="#e4e4e4" stroke-width="1" fill="none" />
<circle cx="457.8" cy="76" r="7" stroke="#10f010" stroke-width="1" fill="none" />
<path d="M455.3,74.4 L455.9,73.6 L455.9,78.4 M459.9,73.6 L458.7,73.6 L458.1,74.4 L458.1,77.6 L458.7,78.4 L459.9,78.4 L460.5,77.6 L460.5,76.8 L459.9,76.0 L458.1,76.0" stroke="#10f010" stroke-width="1" fill="none"/>
<polyline points="463.5,80.5 501,100" stroke="#10f010" stroke-width="1" fill="none" />
<circle cx="570.5" cy="75" r="7" stroke="#10f010" stroke-width="1" fill="none" />
<path d="M568.0,73.4 L568.6,72.6 L568.6,77.4 M573.2,72.6 L570.8,72.6 L570.8,75.0 L572.6,75.0 L573.2,75.8 L573.2,76.6 L572.6,77.4 L571.4,77.4 L570.8,76.6" stroke="#10f010" stroke-width="1" fill="none"/>
<polyline points="565.5,80 538.5,103.5" stroke="#10f010" stroke-width="1" fill="none" />
<circle cx="440.8" cy="104" r="7" stroke="#10f010" stroke-width="1" fill="none" />
<path d="M438.4,102.4 L439.1,101.6 L439.1,106.4 M441.9,102.4 L442.5,101.6 L442.5,106.4" stroke="#10f010" stroke-width="1" fill="none"/>
<polyline points="447.8,105 503.5,111.5" stroke="#10f010" stroke-width="1" fill="none" />
<circle cx="432.8" cy="138" r="7" stroke="#10f010" stroke-width="1" fill="none" />
<path d="M430.1,136.4 L430.6,135.6 L431.5,135.6 L432.0,136.4 L432.0,137.2 L430.1,140.4 L432.0,140.4 M433.6,136.4 L434.1,135.6 L435.0,135.6 L435.5,136.4 L435.5,137.2 L433.6,140.4 L435.5,140.4" stroke="#10f010" stroke-width="1" fill="none"/>
<polyline points="439.8,137 491,128.5" stroke="#10f010" stroke-width="1" fill="none" />
<circle cx="432.8" cy="152.2" r="7" stroke="#10f010" stroke-width="1" fill="none" />
<path d="M430.1,150.6 L430.6,149.8 L431.7,149.8 L432.2,150.6 L432.2,151.4 L430.1,154.6 L432.2,154.6 M434.2,150.6 L434.7,149.8 L434.7,154.6" stroke="#10f010" stroke-width="1" fill="none"/>
<polyline points="439.8,152 496,145.5" stroke="#10f010" stroke-width="1" fill="none" />
<circle cx="432.8" cy="167.3" r="7" stroke="#10f010" stroke-width="1" fill="none" />
<path d="M427.4,165.7 L427.8,164.9 L428.7,164.9 L429.1,165.7 L429.1,166.5 L427.4,169.7 L429.1,169.7 M430.4,165.7 L430.9,164.9 L431.7,164.9 L432.1,165.7 L432.1,166.5 L431.7,167.3 L431.3,167.3 M431.7,167.3 L432.1,168.1 L432.1,168.9 L431.7,169.7 L430.9,169.7 L430.4,168.9 M433.7,167.3 L434.9,167.3 M436.5,165.7 L436.9,164.9 L437.8,164.9 L438.2,165.7 L438.2,166.5 L436.5,169.7 L438.2,169.7" stroke="#10f010" stroke-width="1" fill="none"/>
<polyline points="439.8,165.5 472.5,157.5" stroke="#10f010" stroke-width="1" fill="none" />
<circle cx="432.8" cy="182.7" r="7" stroke="#10f010" stroke-width="1" fill="none" />
<path d="M427.4,181.1 L427.8,180.3 L428.7,180.3 L429.2,181.1 L429.2,181.9 L427.4,185.1 L429.2,185.1 M430.6,181.1 L431.0,180.3 L431.9,180.3 L432.3,181.1 L432.3,181.9 L431.9,182.7 L431.5,182.7 M431.9,182.7 L432.3,183.5 L432.3,184.3 L431.9,185.1 L431.0,185.1 L430.6,184.3 M434.0,182.7 L435.3,182.7 M437.1,181.1 L437.6,180.3 L437.6,185.1" stroke="#10f010" stroke-width="1" fill="none"/>
<polyline points="439.8,181.5 471,174.5" stroke="#10f010" stroke-width="1" fill="none" />
<circle cx="597.8" cy="132" r="7" stroke="#10f010" stroke-width="1" fill="none" />
<path d="M595.3,130.4 L595.9,129.6 L595.9,134.4 M598.7,129.6 L599.9,129.6 L600.5,130.4 L600.5,131.2 L599.9,132.0 L598.7,132.0 L598.1,132.8 L598.1,133.6 L598.7,134.4 L599.9,134.4 L600.5,133.6 L600.5,132.8 L599.9,132.0 M598.7,132.0 L598.1,131.2 L598.1,130.4 L598.7,129.6" stroke="#10f010" stroke-width="1" fill="none"/>
<polyline points="591,134.5 522,151" stroke="#10f010" stroke-width="1" fill="none" />
<circle cx="597.8" cy="150.6" r="7" stroke="#10f010" stroke-width="1" fill="none" />
<path d="M595.1,149.0 L595.6,148.2 L596.5,148.2 L597.0,149.0 L597.0,149.8 L595.1,153.0 L597.0,153.0 M599.1,148.2 L600.0,148.2 L600.5,149.0 L600.5,152.2 L600.0,153.0 L599.1,153.0 L598.6,152.2 L598.6,149.0 L599.1,148.2" stroke="#10f010" stroke-width="1" fill="none"/>
<polyline points="591,152.5 538.5,164.5" stroke="#10f010" stroke-width="1" fill="none" />
<polyline points="612,111 589.5,111 542,128.5" stroke="#10f010" stroke-width="1" fill="none" />
<path d="M573.5,105.7 L575.7,105.7 M574.6,105.7 L574.6,110.0 M577.1,110.0 L577.1,107.1 L578.2,105.7 L579.4,107.1 L579.4,110.0 M577.1,108.2 L579.4,108.2 M581.0,105.7 L582.1,105.7 M581.5,105.7 L581.5,110.0 M581.0,110.0 L582.1,110.0 M583.3,105.7 L583.3,110.0 L585.5,110.0 M589.6,105.7 L590.2,110.0 L590.7,107.1 L591.3,110.0 L591.9,105.7 M595.5,105.7 L593.2,105.7 L593.2,110.0 L595.5,110.0 M593.2,107.8 L594.9,107.8 M596.9,105.7 L596.9,110.0 L599.1,110.0 M600.5,105.7 L602.2,105.7 L602.7,106.4 L602.7,109.3 L602.2,110.0 L600.5,110.0 L600.5,105.7 M604.3,105.7 L605.4,105.7 M604.9,105.7 L604.9,110.0 M604.3,110.0 L605.4,110.0 M606.6,110.0 L606.6,105.7 L608.9,110.0 L608.9,105.7 M612.5,106.4 L611.9,105.7 L610.8,105.7 L610.3,106.4 L610.3,109.3 L610.8,110.0 L611.9,110.0 L612.5,109.3 L612.5,107.8 L611.4,107.8" stroke="#10f010" stroke-width="1" fill="none"/>
<path d="M487.7,229.3 L485.5,229.3 L485.5,234.0 M485.5,231.7 L487.1,231.7 M489.6,229.3 L490.7,229.3 L491.2,230.1 L491.2,233.2 L490.7,234.0 L489.6,234.0 L489.0,233.2 L489.0,230.1 L489.6,229.3 M492.6,234.0 L492.6,229.3 L494.2,229.3 L494.8,230.1 L494.8,230.9 L494.2,231.7 L492.6,231.7 M493.7,231.7 L494.8,234.0 M501.0,230.1 L500.4,229.3 L499.3,229.3 L498.8,230.1 L498.8,230.9 L499.3,231.7 L500.4,231.7 L501.0,232.4 L501.0,233.2 L500.4,234.0 L499.3,234.0 L498.8,233.2 M502.5,229.3 L503.6,229.3 M503.1,229.3 L503.1,234.0 M502.5,234.0 L503.6,234.0 M504.8,229.3 L507.0,229.3 L504.8,234.0 L507.0,234.0 M510.5,229.3 L508.3,229.3 L508.3,234.0 L510.5,234.0 M508.3,231.7 L510.0,231.7 M514.1,230.1 L513.5,229.3 L512.4,229.3 L511.9,230.1 L511.9,230.9 L512.4,231.7 L513.5,231.7 L514.1,232.4 L514.1,233.2 L513.5,234.0 L512.4,234.0 L511.9,233.2 M518.3,230.1 L518.9,229.3 L518.9,234.0 M521.1,229.3 L522.2,229.3 L522.8,230.1 L522.8,230.9 L522.2,231.7 L521.1,231.7 L520.6,232.4 L520.6,233.2 L521.1,234.0 L522.2,234.0 L522.8,233.2 L522.8,232.4 L522.2,231.7 M521.1,231.7 L520.6,230.9 L520.6,230.1 L521.1,229.3 M524.7,229.3 L524.7,230.5 M525.8,229.3 L525.8,230.5 M530.3,234.0 L530.3,230.9 L531.4,229.3 L532.5,230.9 L532.5,234.0 M530.3,232.1 L532.5,232.1 M533.9,234.0 L533.9,229.3 L536.0,234.0 L536.0,229.3 M537.4,229.3 L539.0,229.3 L539.6,230.1 L539.6,233.2 L539.0,234.0 L537.4,234.0 L537.4,229.3 M543.6,229.3 L543.6,234.0 L545.8,234.0 M547.1,234.0 L547.1,230.9 L548.2,229.3 L549.3,230.9 L549.3,234.0 M547.1,232.1 L549.3,232.1 M550.7,234.0 L550.7,229.3 L552.3,229.3 L552.9,230.1 L552.9,230.9 L552.3,231.7 L550.7,231.7 M551.8,231.7 L552.9,234.0 M556.4,230.1 L555.9,229.3 L554.8,229.3 L554.2,230.1 L554.2,233.2 L554.8,234.0 L555.9,234.0 L556.4,233.2 L556.4,231.7 L555.3,231.7 M560.0,229.3 L557.8,229.3 L557.8,234.0 L560.0,234.0 M557.8,231.7 L559.4,231.7 M561.3,234.0 L561.3,229.3 L563.0,229.3 L563.5,230.1 L563.5,230.9 L563.0,231.7 L561.3,231.7 M562.4,231.7 L563.5,234.0" stroke="#10f010" stroke-width="1" fill="none"/>
<line x1="481" y1="236.5" x2="570.5" y2="236.5" stroke="#10f010" stroke-width="1" />
<line x1="481" y1="237.5" x2="570.5" y2="237.5" stroke="#10f010" stroke-width="1" />
<clipPath id="aclip"><circle cx="518.3" cy="336" r="47"/></clipPath>
<polyline points="515.5,290 515.5,267.5 532.5,267.5 532.5,290" stroke="#10f010" stroke-width="1" fill="none" />
<line x1="522.5" y1="262" x2="522.5" y2="264" stroke="#10f010" stroke-width="1" />
<g clip-path="url(#aclip)">
<clipPath id="hc3"><path d="M470.0,349.0 L566.0,349.0 L566.0,390.0 L470.0,390.0 Z"/></clipPath>
<g clip-path="url(#hc3)" stroke="#e0806a" stroke-width="1"><line x1="470.0" y1="349.0" x2="429.0" y2="390.0"/><line x1="474.2" y1="349.0" x2="433.2" y2="390.0"/><line x1="482.0" y1="349.0" x2="441.0" y2="390.0"/><line x1="486.3" y1="349.0" x2="445.3" y2="390.0"/><line x1="494.0" y1="349.0" x2="453.0" y2="390.0"/><line x1="498.3" y1="349.0" x2="457.3" y2="390.0"/><line x1="506.1" y1="349.0" x2="465.1" y2="390.0"/><line x1="510.3" y1="349.0" x2="469.3" y2="390.0"/><line x1="518.1" y1="349.0" x2="477.1" y2="390.0"/><line x1="522.3" y1="349.0" x2="481.3" y2="390.0"/><line x1="530.1" y1="349.0" x2="489.1" y2="390.0"/><line x1="534.3" y1="349.0" x2="493.3" y2="390.0"/><line x1="542.1" y1="349.0" x2="501.1" y2="390.0"/><line x1="546.4" y1="349.0" x2="505.4" y2="390.0"/><line x1="554.1" y1="349.0" x2="513.1" y2="390.0"/><line x1="558.4" y1="349.0" x2="517.4" y2="390.0"/><line x1="566.2" y1="349.0" x2="525.2" y2="390.0"/><line x1="570.4" y1="349.0" x2="529.4" y2="390.0"/><line x1="578.2" y1="349.0" x2="537.2" y2="390.0"/><line x1="582.4" y1="349.0" x2="541.4" y2="390.0"/><line x1="590.2" y1="349.0" x2="549.2" y2="390.0"/><line x1="594.5" y1="349.0" x2="553.5" y2="390.0"/><line x1="602.2" y1="349.0" x2="561.2" y2="390.0"/><line x1="606.5" y1="349.0" x2="565.5" y2="390.0"/></g>
<clipPath id="hc4"><path d="M532.5,319.0 L566.0,319.0 L566.0,344.5 L532.5,344.5 Z"/></clipPath>
<g clip-path="url(#hc4)" stroke="#e0806a" stroke-width="1"><line x1="532.5" y1="319.0" x2="507.0" y2="344.5"/><line x1="538.4" y1="319.0" x2="512.9" y2="344.5"/><line x1="544.4" y1="319.0" x2="518.9" y2="344.5"/><line x1="550.3" y1="319.0" x2="524.8" y2="344.5"/><line x1="556.3" y1="319.0" x2="530.8" y2="344.5"/><line x1="562.2" y1="319.0" x2="536.7" y2="344.5"/><line x1="568.1" y1="319.0" x2="542.6" y2="344.5"/><line x1="574.1" y1="319.0" x2="548.6" y2="344.5"/><line x1="580.0" y1="319.0" x2="554.5" y2="344.5"/><line x1="586.0" y1="319.0" x2="560.5" y2="344.5"/><line x1="507.0" y1="319.0" x2="532.5" y2="344.5"/><line x1="512.9" y1="319.0" x2="538.4" y2="344.5"/><line x1="518.9" y1="319.0" x2="544.4" y2="344.5"/><line x1="524.8" y1="319.0" x2="550.3" y2="344.5"/><line x1="530.8" y1="319.0" x2="556.3" y2="344.5"/><line x1="536.7" y1="319.0" x2="562.2" y2="344.5"/><line x1="542.6" y1="319.0" x2="568.1" y2="344.5"/><line x1="548.6" y1="319.0" x2="574.1" y2="344.5"/><line x1="554.5" y1="319.0" x2="580.0" y2="344.5"/><line x1="560.5" y1="319.0" x2="586.0" y2="344.5"/></g>
<clipPath id="hc5"><path d="M532.5,288.0 L544.0,288.0 L544.0,319.0 L532.5,319.0 Z"/></clipPath>
<g clip-path="url(#hc5)" stroke="#e0806a" stroke-width="1"><line x1="532.5" y1="288.0" x2="501.5" y2="319.0"/><line x1="537.6" y1="288.0" x2="506.6" y2="319.0"/><line x1="542.7" y1="288.0" x2="511.7" y2="319.0"/><line x1="547.8" y1="288.0" x2="516.8" y2="319.0"/><line x1="552.9" y1="288.0" x2="521.9" y2="319.0"/><line x1="558.0" y1="288.0" x2="527.0" y2="319.0"/><line x1="563.0" y1="288.0" x2="532.0" y2="319.0"/><line x1="568.1" y1="288.0" x2="537.1" y2="319.0"/><line x1="573.2" y1="288.0" x2="542.2" y2="319.0"/></g>
<line x1="544" y1="288" x2="544" y2="319" stroke="#e4e4e4" stroke-width="1" />
<line x1="532.5" y1="319" x2="566" y2="319" stroke="#e4e4e4" stroke-width="1" />
<line x1="515.5" y1="289" x2="515.5" y2="323" stroke="#e4e4e4" stroke-width="1" />
<line x1="532.5" y1="289" x2="532.5" y2="319" stroke="#e4e4e4" stroke-width="1" />
<line x1="528.5" y1="289" x2="528.5" y2="300" stroke="#e4e4e4" stroke-width="1" />
<path d="M490.5,349 L490.5,343 L500,331 L506,348 Z" fill="#10c8e0"/>
<clipPath id="hc6"><path d="M490.5,349.0 L490.5,343.0 L500.0,331.0 L506.0,348.0 Z"/></clipPath>
<g clip-path="url(#hc6)" stroke="#0a8a9a" stroke-width="1"><line x1="490.5" y1="331.0" x2="472.5" y2="349.0"/><line x1="493.9" y1="331.0" x2="475.9" y2="349.0"/><line x1="497.3" y1="331.0" x2="479.3" y2="349.0"/><line x1="500.7" y1="331.0" x2="482.7" y2="349.0"/><line x1="504.1" y1="331.0" x2="486.1" y2="349.0"/><line x1="507.5" y1="331.0" x2="489.5" y2="349.0"/><line x1="510.9" y1="331.0" x2="492.9" y2="349.0"/><line x1="514.3" y1="331.0" x2="496.3" y2="349.0"/><line x1="517.7" y1="331.0" x2="499.7" y2="349.0"/><line x1="521.0" y1="331.0" x2="503.0" y2="349.0"/><line x1="472.5" y1="331.0" x2="490.5" y2="349.0"/><line x1="475.9" y1="331.0" x2="493.9" y2="349.0"/><line x1="479.3" y1="331.0" x2="497.3" y2="349.0"/><line x1="482.7" y1="331.0" x2="500.7" y2="349.0"/><line x1="486.1" y1="331.0" x2="504.1" y2="349.0"/><line x1="489.5" y1="331.0" x2="507.5" y2="349.0"/><line x1="492.9" y1="331.0" x2="510.9" y2="349.0"/><line x1="496.3" y1="331.0" x2="514.3" y2="349.0"/><line x1="499.7" y1="331.0" x2="517.7" y2="349.0"/><line x1="503.0" y1="331.0" x2="521.0" y2="349.0"/></g>
<line x1="470" y1="344.5" x2="566" y2="344.5" stroke="#e4e4e4" stroke-width="1" />
<path d="M485,349 Q482,353 486,354 L541,354 Q544,353 541,349" stroke="#e4e4e4" stroke-width="1" fill="none" />
<line x1="490.5" y1="298" x2="490.5" y2="343" stroke="#e4e4e4" stroke-width="1" />
</g>
<path d="M528.5,300 L532,300 Q538,306 538,330 Q538,348 528,349 L522,349" stroke="#e4e4e4" stroke-width="1" fill="none" />
<clipPath id="hc7"><path d="M528.0,335.7 L527.8,338.2 L527.1,340.6 L526.1,342.8 L524.7,344.8 L522.9,346.6 L520.9,348.0 L518.7,349.0 L516.3,349.7 L513.8,349.9 L511.3,349.7 L508.9,349.0 L506.7,348.0 L504.7,346.6 L502.9,344.8 L501.5,342.8 L500.5,340.6 L499.8,338.2 L499.6,335.7 L499.8,333.2 L500.5,330.8 L501.5,328.6 L502.9,326.6 L504.7,324.8 L506.7,323.4 L508.9,322.4 L511.3,321.7 L513.8,321.5 L516.3,321.7 L518.7,322.4 L520.9,323.4 L522.9,324.8 L524.7,326.6 L526.1,328.6 L527.1,330.8 L527.8,333.2 Z"/></clipPath>
<g clip-path="url(#hc7)" stroke="#e0806a" stroke-width="1"><line x1="499.6" y1="321.5" x2="471.2" y2="349.9"/><line x1="505.0" y1="321.5" x2="476.6" y2="349.9"/><line x1="510.3" y1="321.5" x2="481.9" y2="349.9"/><line x1="515.7" y1="321.5" x2="487.3" y2="349.9"/><line x1="521.1" y1="321.5" x2="492.7" y2="349.9"/><line x1="526.5" y1="321.5" x2="498.1" y2="349.9"/><line x1="531.8" y1="321.5" x2="503.4" y2="349.9"/><line x1="537.2" y1="321.5" x2="508.8" y2="349.9"/><line x1="542.6" y1="321.5" x2="514.2" y2="349.9"/><line x1="548.0" y1="321.5" x2="519.6" y2="349.9"/><line x1="553.3" y1="321.5" x2="524.9" y2="349.9"/></g>
<circle cx="513.8" cy="335.7" r="14.2" stroke="#e4e4e4" stroke-width="1" fill="none" />
<line x1="524.5" y1="290" x2="524.5" y2="381" stroke="#ff2020" stroke-width="1" stroke-dasharray="7,2,1.5,2"/>
<circle cx="518.3" cy="336" r="47" stroke="#10f010" stroke-width="1" fill="none" />
<circle cx="588" cy="256.4" r="7" stroke="#10f010" stroke-width="1" fill="none" />
<path d="M585.5,254.8 L586.1,254.0 L586.1,258.8 M590.1,258.8 L590.1,254.0 L588.3,257.2 L590.7,257.2" stroke="#10f010" stroke-width="1" fill="none"/>
<polyline points="583.5,261 528.5,305" stroke="#10f010" stroke-width="1" fill="none" />
<circle cx="588" cy="281.4" r="7" stroke="#10f010" stroke-width="1" fill="none" />
<path d="M586.6,279.8 L587.3,279.0 L588.7,279.0 L589.4,279.8 L589.4,280.6 L586.6,283.8 L589.4,283.8" stroke="#10f010" stroke-width="1" fill="none"/>
<polyline points="581.5,284 542.5,297.5" stroke="#10f010" stroke-width="1" fill="none" />
<circle cx="588" cy="306.2" r="7" stroke="#10f010" stroke-width="1" fill="none" />
<path d="M589.4,303.8 L586.6,303.8 L586.6,306.2 L588.7,306.2 L589.4,307.0 L589.4,307.8 L588.7,308.6 L587.3,308.6 L586.6,307.8" stroke="#10f010" stroke-width="1" fill="none"/>
<polyline points="581.5,309 554,330.5" stroke="#10f010" stroke-width="1" fill="none" />
<circle cx="590.3" cy="369.4" r="7" stroke="#10f010" stroke-width="1" fill="none" />
<path d="M589.3,367.8 L590.3,367.0 L590.3,371.8" stroke="#10f010" stroke-width="1" fill="none"/>
<polyline points="583.5,367.5 551,359" stroke="#10f010" stroke-width="1" fill="none" />
<circle cx="461.4" cy="300.5" r="7" stroke="#10f010" stroke-width="1" fill="none" />
<path d="M458.9,298.9 L459.5,298.1 L459.5,302.9 M461.7,298.1 L464.1,298.1 L462.3,302.9" stroke="#10f010" stroke-width="1" fill="none"/>
<polyline points="466,305 505.5,336" stroke="#10f010" stroke-width="1" fill="none" />
<circle cx="453.7" cy="372.5" r="7" stroke="#10f010" stroke-width="1" fill="none" />
<path d="M451.0,370.9 L451.5,370.1 L452.4,370.1 L452.9,370.9 L452.9,371.7 L451.0,374.9 L452.9,374.9 M455.9,374.9 L455.9,370.1 L454.5,373.3 L456.4,373.3" stroke="#10f010" stroke-width="1" fill="none"/>
<polyline points="458.5,368.5 494,344.5" stroke="#10f010" stroke-width="1" fill="none" />
<path d="M508.5,387.8 L510.0,387.8 L510.6,388.6 L510.6,391.7 L510.0,392.5 L508.5,392.5 L508.5,387.8 M513.9,387.8 L511.8,387.8 L511.8,392.5 L513.9,392.5 M511.8,390.2 L513.3,390.2 M515.1,387.8 L517.2,387.8 M516.1,387.8 L516.1,392.5 M518.4,392.5 L518.4,389.4 L519.4,387.8 L520.5,389.4 L520.5,392.5 M518.4,390.6 L520.5,390.6 M521.9,387.8 L523.0,387.8 M522.4,387.8 L522.4,392.5 M521.9,392.5 L523.0,392.5 M524.0,387.8 L524.0,392.5 L526.1,392.5 M530.3,387.8 L530.3,389.0 M531.4,387.8 L531.4,389.0 M533.1,392.5 L533.1,389.4 L534.2,387.8 L535.2,389.4 L535.2,392.5 M533.1,390.6 L535.2,390.6 M537.0,387.8 L537.0,389.0 M538.0,387.8 L538.0,389.0" stroke="#10f010" stroke-width="1" fill="none"/>
<line x1="502.5" y1="396.5" x2="545.5" y2="396.5" stroke="#10f010" stroke-width="1" />
<line x1="502.5" y1="397.5" x2="545.5" y2="397.5" stroke="#10f010" stroke-width="1" />
</svg></body></html>
